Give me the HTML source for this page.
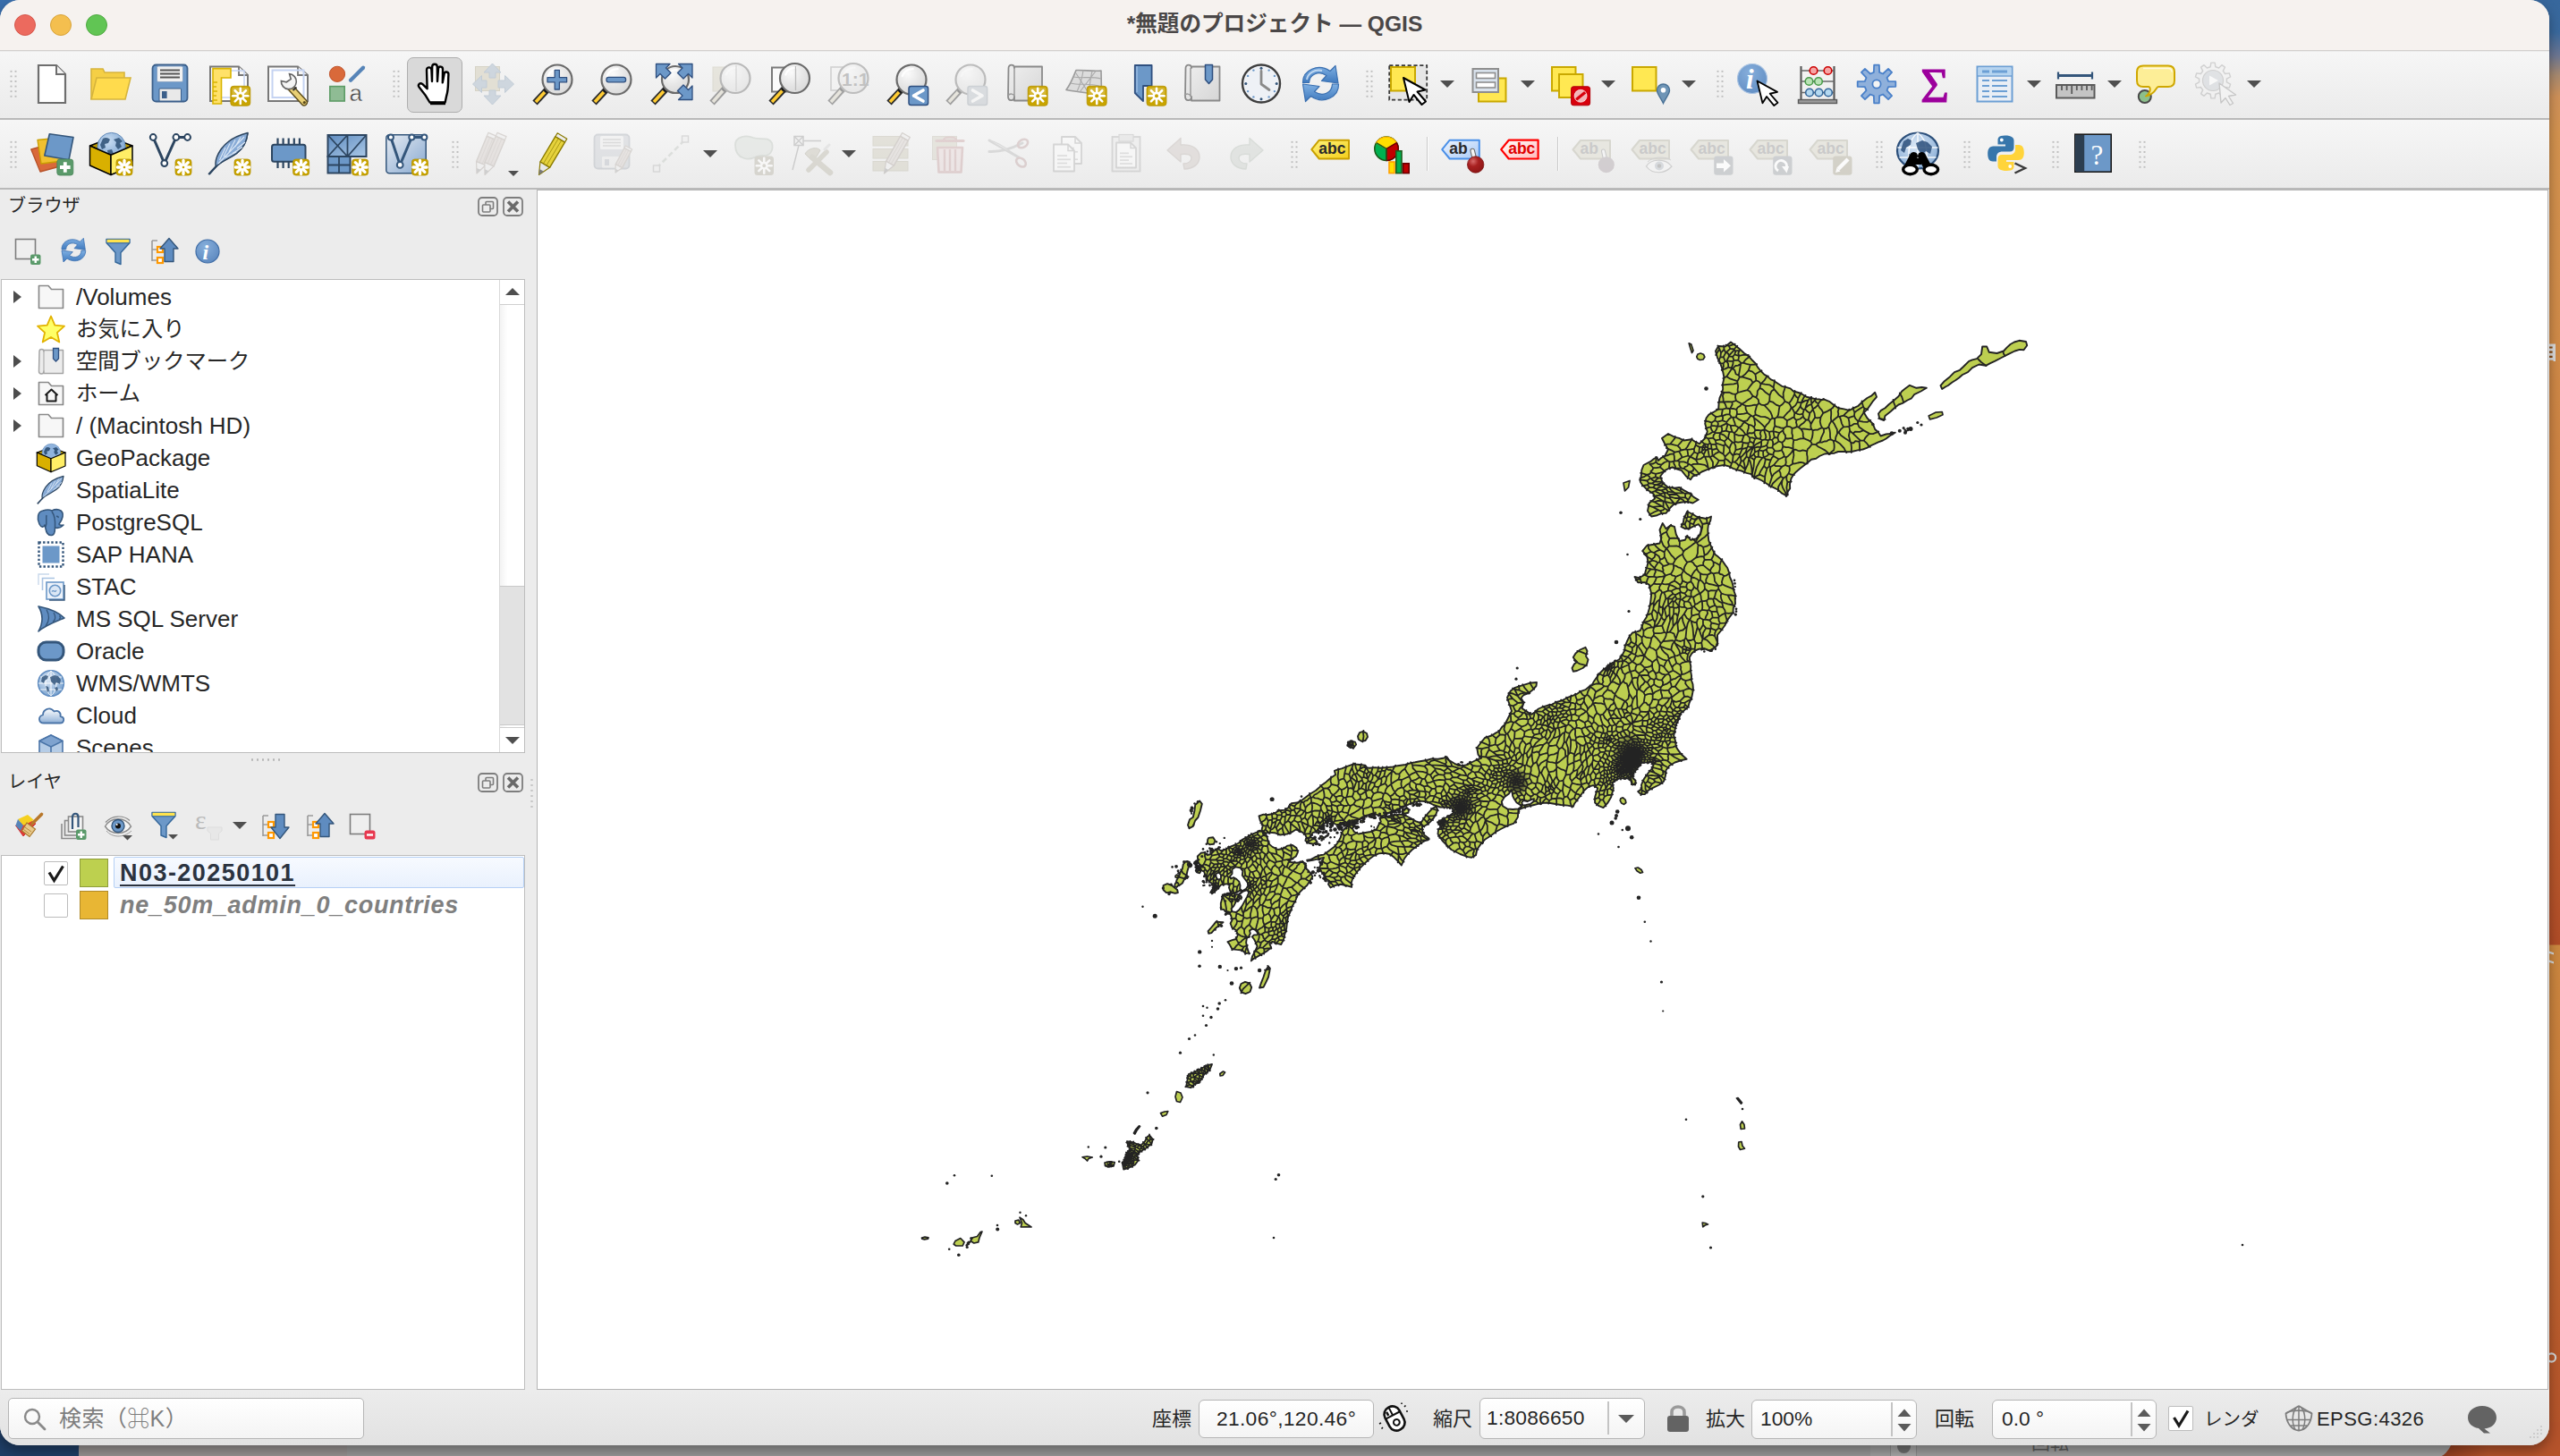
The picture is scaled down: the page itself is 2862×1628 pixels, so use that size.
<!DOCTYPE html>
<html lang="ja"><head><meta charset="utf-8"><title>*無題のプロジェクト — QGIS</title>
<style>
*{box-sizing:border-box}
html,body{margin:0;padding:0}
body{width:2862px;height:1628px;position:relative;overflow:hidden;background:#9a9a9a;
 font-family:"Liberation Sans","Noto Sans CJK JP",sans-serif;color:#262626}
.abs{position:absolute}
#deskR{position:absolute;left:2830px;top:0;width:32px;height:1628px;
 background:linear-gradient(180deg,#37679c 0px,#3a699d 36px,#6d7793 62px,#a88a70 84px,#cf9159 108px,#d4934f 150px,#d08a48 400px,#c8773a 700px,#c06531 850px,#b24e28 1040px,#b04c27 1056px,#cc8840 1057px,#c97e3c 1200px,#c06c33 1350px,#b85a2c 1500px,#b4522a 1628px)}
#deskB{position:absolute;left:0;top:1590px;width:2862px;height:38px;background:#a0a0a0;overflow:hidden}
#deskB .a{position:absolute;left:0;top:0;width:100px;height:38px;background:#1f3e66}
#deskB .b{position:absolute;left:88px;top:8px;width:300px;height:30px;background:#989392;border-top-left-radius:22px}
#deskB .c{position:absolute;left:2728px;top:0;width:134px;height:38px;background:linear-gradient(90deg,#8e3c1f,#b5532b 40%)}
#deskB .c2{position:absolute;left:2600px;top:0;width:142px;height:42px;background:#a0a0a0;border-bottom-right-radius:26px}
#deskB .d{position:absolute;left:388px;top:0;width:1703px;height:38px;background:#989898}
#deskB .e{position:absolute;left:2113px;top:0;width:30px;height:38px;background:#a9a9a9;border-left:1.5px solid #8c8c8c;border-right:1.5px solid #8c8c8c}
#deskB .f{position:absolute;left:2121px;top:20px;width:15px;height:15px;border-radius:50%;background:#6f6f6f}
#deskB .g{position:absolute;left:2271px;top:11px;font-size:21px;line-height:24px;color:#5c5c5c;white-space:nowrap}
#deskTL{position:absolute;left:0;top:0;width:30px;height:30px;background:#3a6fad}
#win{position:absolute;left:0;top:0;width:2850px;height:1616px;background:#ececec;border-radius:22px 22px 22px 22px;overflow:hidden;
 box-shadow:0 6px 14px rgba(0,0,0,.35)}
#title{position:absolute;left:0;top:0;width:2850px;height:57px;background:#f6f2ef;border-bottom:1px solid #d2cfcd}
#title .t{position:absolute;left:0;width:2850px;top:9px;text-align:center;font-size:24.6px;font-weight:bold;color:#4a4747;letter-spacing:0px;line-height:36px;white-space:nowrap}
.tl{position:absolute;top:16px;width:24px;height:24px;border-radius:50%}
.tb{position:absolute;left:0;width:2850px;background:linear-gradient(180deg,#f6f6f6,#ebebeb)}
#tb1{top:58px;height:74px}
#tb2{top:134px;height:76px}
.tbl{position:absolute;left:0;width:2850px;height:2px;background:#b9b9b9}
.ic{position:absolute;width:48px;height:48px;overflow:visible}
.hd{position:absolute;width:10px;height:34px;
 background-image:radial-gradient(circle,#bdbdbd 0.9px,transparent 1.3px);background-size:5px 5.6px;background-position:0 0}
.dd{position:absolute;width:0;height:0;border-left:8px solid transparent;border-right:8px solid transparent;border-top:8px solid #4f4f4f}
.dds{position:absolute;width:0;height:0;border-left:6px solid transparent;border-right:6px solid transparent;border-top:6px solid #4f4f4f}
.vsep{position:absolute;width:2px;height:38px;background:#c9c9c9;border-right:1px solid #fff}
/* panels */
.dtitle{position:absolute;left:9px;font-size:20.2px;line-height:30px;color:#262626;white-space:nowrap}
.dbtn{position:absolute;width:22px;height:21px;border:2px solid #7d7d7d;border-radius:4px}
.tree{position:absolute;left:1px;width:586px;background:#fff;border:1px solid #bdbdbd;overflow:hidden}
.row{position:absolute;left:0;height:36px;line-height:36px;font-size:26px;white-space:nowrap;color:#262626}
.arr{position:absolute;left:13px;width:0;height:0;border-top:7px solid transparent;border-bottom:7px solid transparent;border-left:9px solid #4d4d4d}
.sic{position:absolute;width:32px;height:32px;overflow:visible}
#canvas{position:absolute;left:600px;top:212px;width:2249px;height:1342px;background:#fff;border:1px solid #b4b4b4}
/* status */
.sl{position:absolute;top:1571px;font-size:22px;line-height:32px;white-space:nowrap;color:#262626}
.sbx{position:absolute;background:linear-gradient(180deg,#fff,#f4f4f4);border:1.5px solid #b6b6b6;border-radius:6px;font-size:22.8px;line-height:40px;white-space:nowrap;color:#262626}
.fs{font-family:"Liberation Sans",sans-serif}
.fr{font-family:"Liberation Serif",serif}
.jp{font-size:24.3px}

</style></head><body>
<div id="deskR"></div>
<div id="deskB"><div class="d"></div><div class="a"></div><div class="b"></div><div class="c"></div><div class="c2"></div><div class="e"></div><div class="f"></div><div class="g">回転</div></div>
<div id="deskTL"></div>
<svg class="abs deskart" style="left:2848px;top:380px;width:14px;height:28px" viewBox="0 0 14 28"><path d="M2,4.5H9V24H6.5V22.8H2Z" fill="#dcdcdc"/><path d="M2,7.5h3.6v2.1H2zM2,12.6h3.6v2.1H2zM2,17.7h3.6v2.3H2z" fill="#8a4a12"/></svg>
<svg class="abs deskart" style="left:2848px;top:1060px;width:14px;height:24px" viewBox="0 0 14 24"><path d="M2,3.5L7,5.2V7.6L2,5.9ZM2,13.5L7,15.2V17.6L2,15.9Z" fill="#d8d8d8"/></svg>
<svg class="abs deskart" style="left:2848px;top:1508px;width:14px;height:20px" viewBox="0 0 14 20"><circle cx="4.5" cy="10" r="4.6" fill="none" stroke="#d4d4d4" stroke-width="2.2"/></svg>
<div id="win">
<div id="title">
 <div class="tl" style="left:16px;background:#ec6a5e;border:1px solid #d5574b"></div>
 <div class="tl" style="left:56px;background:#f4bf4f;border:1px solid #d8a33a"></div>
 <div class="tl" style="left:96px;background:#61c554;border:1px solid #4fa941"></div>
 <div class="t">*無題のプロジェクト — QGIS</div>
</div>
<div class="tb" id="tb1"></div><div class="tbl" style="top:132px"></div>
<div class="tb" id="tb2"></div><div class="tbl" style="top:210px"></div>
<svg width="0" height="0" style="position:absolute"><defs><linearGradient id="gsc" x1="0" y1="0" x2="1" y2="1"><stop offset="0" stop-color="#efefef"/><stop offset="1" stop-color="#d6d6d6"/></linearGradient><radialGradient id="glens" cx=".38" cy=".3" r=".75"><stop offset="0" stop-color="#fbfbfb"/><stop offset=".55" stop-color="#e6e6e6"/><stop offset="1" stop-color="#d9d9d9"/></radialGradient></defs></svg>
<div class="hd" style="left:10px;top:77px;height:34px"></div>
<svg class="ic" style="left:34px;top:70px;width:48px;height:48px" viewBox="0 0 48 48"><path d="M9,3H29L39,13V45H9Z" fill="#fff" stroke="#6e6e6e" stroke-width="2.2"/><path d="M29,3V13H39" fill="#f2f2f2" stroke="#6e6e6e" stroke-width="2"/></svg>
<svg class="ic" style="left:100px;top:70px;width:48px;height:48px" viewBox="0 0 48 48"><path d="M2,41V7H15L17,11H39V17" fill="#f5cf45" stroke="#d6b43c" stroke-width="1.6"/><path d="M2,41L8,17H46L40,41Z" fill="#ffdb4d" stroke="#d6b43c" stroke-width="1.6"/></svg>
<svg class="ic" style="left:166px;top:70px;width:48px;height:48px" viewBox="0 0 48 48"><rect x="4.5" y="2.5" width="39" height="41" rx="4" fill="#6c98c8" stroke="#3b5f8a" stroke-width="1.8"/><rect x="9.5" y="4" width="29" height="17.5" rx="1.5" fill="#f1f1f1" stroke="#8aa5c5" stroke-width="1"/><path d="M13,8.5H35M13,12.5H35M13,16.5H35" stroke="#555" stroke-width="1.8"/><rect x="12" y="29" width="24.5" height="14" rx="1" fill="#e9e9e9" stroke="#3b5f8a" stroke-width="1"/><rect x="15" y="32" width="5.6" height="8" fill="#3b5f8a"/></svg>
<svg class="ic" style="left:232px;top:70px;width:48px;height:48px" viewBox="0 0 48 48"><path d="M3,4.5H35L45,14V43H3Z" fill="#fff" stroke="#777" stroke-width="2"/><path d="M35,4.5V14H45" fill="#f4f4f4" stroke="#777" stroke-width="1.8"/><rect x="8" y="9" width="33" height="30" fill="none" stroke="#c5d3f2" stroke-width="1.5"/><path d="M6,6.6H26V17H15.5V46H6Z" fill="#ffe169" stroke="#d9b400" stroke-width="1.6"/><path d="M6,22h5M6,27h4M6,32h5M6,37h4M6,42h5" stroke="#d9b400" stroke-width="1.4"/><g transform="translate(25.8,26.3)"><rect x="0" y="0" width="22" height="22" rx="3.2" fill="#c8a400" stroke="#b59200" stroke-width="0.8"/><rect x="1.6" y="1.6" width="18.8" height="8" rx="2" fill="#d8bc42" opacity=".8"/><path d="M14.00,11.00L19.60,11.00" stroke="#fff" stroke-width="2.6" stroke-linecap="round"/><path d="M13.12,13.12L17.08,17.08" stroke="#fff" stroke-width="2.6" stroke-linecap="round"/><path d="M11.00,14.00L11.00,19.60" stroke="#fff" stroke-width="2.6" stroke-linecap="round"/><path d="M8.88,13.12L4.92,17.08" stroke="#fff" stroke-width="2.6" stroke-linecap="round"/><path d="M8.00,11.00L2.40,11.00" stroke="#fff" stroke-width="2.6" stroke-linecap="round"/><path d="M8.88,8.88L4.92,4.92" stroke="#fff" stroke-width="2.6" stroke-linecap="round"/><path d="M11.00,8.00L11.00,2.40" stroke="#fff" stroke-width="2.6" stroke-linecap="round"/><path d="M13.12,8.88L17.08,4.92" stroke="#fff" stroke-width="2.6" stroke-linecap="round"/><circle cx="11.0" cy="11.0" r="4.6" fill="#fff"/><circle cx="11.0" cy="11.0" r="2" fill="#c8a400"/></g></svg>
<svg class="ic" style="left:298px;top:70px;width:48px;height:48px" viewBox="0 0 48 48"><path d="M2,4.5H35L46,14V43H2Z" fill="#fff" stroke="#777" stroke-width="2"/><path d="M35,4.5V14H46" fill="#f4f4f4" stroke="#777" stroke-width="1.8"/><rect x="6.5" y="8.5" width="35" height="30.5" fill="none" stroke="#c5d3f2" stroke-width="2"/><path d="M26,27L42,44.5" stroke="#5a4a1a" stroke-width="8" stroke-linecap="round"/><path d="M26,27L42,44.5" stroke="#e9cf74" stroke-width="5.2" stroke-linecap="round"/><circle cx="42.3" cy="44.6" r="1.6" fill="#5a4a1a"/><path d="M29.5,31l4,-3.5" stroke="#333" stroke-width="2"/><path d="M16.5,21.5a8.5,8.5 0 1 0 8,-9l2.5,5.5l-4.5,4z" fill="#f4f4f4" stroke="#666" stroke-width="1.6" transform="rotate(8 24 20)"/></svg>
<svg class="ic" style="left:364px;top:70px;width:48px;height:48px" viewBox="0 0 48 48"><circle cx="13" cy="12.8" r="8.6" fill="#d9693a" stroke="#c0522a" stroke-width="1"/><path d="M28,19.7L42,5.7" stroke="#5684b8" stroke-width="4.2" stroke-linecap="round"/><rect x="4.8" y="26.6" width="16.4" height="16.4" fill="#8fbc94" stroke="#5d9c66" stroke-width="1.6"/><text x="26.5" y="43" class="fs" font-size="26" fill="#474747" stroke="#fff" stroke-width="0.4">a</text></svg>
<div class="hd" style="left:438px;top:77px;height:34px"></div>
<div class="abs" style="left:455px;top:64px;width:62px;height:62px;background:#d9d9d9;border:1.5px solid #aeaeae;border-radius:7px"></div>
<svg class="ic" style="left:462px;top:70px;width:48px;height:48px" viewBox="0 0 48 48"><path d="M18.5,44.5C15,38 10,31.5 6.6,27.5C4.6,24.8 7.5,21.8 10.4,24.2L15.6,29.2L15,8.2C15,4.4 20.2,4.4 20.4,8.2L21,21L21.2,4.6C21.3,0.8 26.6,0.8 26.8,4.6L27,21L28,7C28.3,3.6 33,3.8 33,7.4L32.8,22.4L34.6,12.6C35.2,9.4 39.6,10 39.4,13.4C38.8,22 39.6,30 37.2,37L35.6,44.5Z" fill="#fff" stroke="#000" stroke-width="2.4" stroke-linejoin="round"/><path d="M19,45.5H36" stroke="#000" stroke-width="3.4"/></svg>
<svg class="ic" style="left:528px;top:70px;width:48px;height:48px" viewBox="0 0 48 48"><rect x="3.5" y="4.5" width="27" height="27" fill="#e2dfd4" stroke="#d6d3c6" stroke-width="1"/><g fill="#ced6de" stroke="#c2ccd6" stroke-width="1"><path d="M22.5,1L32,11H26V17H19V11H13Z"/><path d="M22.5,47L32,37H26V31H19V37H13Z"/><path d="M0.5,24L10.5,14.5V20H16V28H10.5V33.5Z"/><path d="M46.5,24L36.5,14.5V20H29V28H36.5V33.5Z"/></g></svg>
<svg class="ic" style="left:594px;top:70px;width:48px;height:48px" viewBox="0 0 48 48"><path d="M18.5,29.5L4,45" stroke="#2a2a2a" stroke-width="7.2" stroke-linecap="butt"/><path d="M15.0,33.0L5,44" stroke="#ffcc33" stroke-width="3.6"/><circle cx="17.8" cy="30.2" r="3.3" fill="#111"/><circle cx="29" cy="19" r="16.5" fill="url(#glens)" stroke="#6b6b6b" stroke-width="2.2"/><path d="M18.8,14.9A11.9,11.9 0 0 1 30.6,7.1" fill="none" stroke="#fff" stroke-width="2.4" stroke-linecap="round" opacity=".9"/><path d="M18,16.6H26.2V8.4H31.4V16.6H39.6V21.8H31.4V30H26.2V21.8H18Z" fill="#6c98c8" stroke="#2f4f7f" stroke-width="1.3" stroke-linejoin="round"/></svg>
<svg class="ic" style="left:660px;top:70px;width:48px;height:48px" viewBox="0 0 48 48"><path d="M18.5,29.5L4,45" stroke="#2a2a2a" stroke-width="7.2" stroke-linecap="butt"/><path d="M15.0,33.0L5,44" stroke="#ffcc33" stroke-width="3.6"/><circle cx="17.8" cy="30.2" r="3.3" fill="#111"/><circle cx="29" cy="19" r="16.5" fill="url(#glens)" stroke="#6b6b6b" stroke-width="2.2"/><path d="M18.8,14.9A11.9,11.9 0 0 1 30.6,7.1" fill="none" stroke="#fff" stroke-width="2.4" stroke-linecap="round" opacity=".9"/><rect x="18" y="16.4" width="21.6" height="5.4" rx="2.4" fill="#6c98c8" stroke="#2f4f7f" stroke-width="1.3"/></svg>
<svg class="ic" style="left:726px;top:70px;width:48px;height:48px" viewBox="0 0 48 48"><path d="M19.5,28.5L4,45" stroke="#2a2a2a" stroke-width="7.2" stroke-linecap="butt"/><path d="M16.0,32.0L5,44" stroke="#ffcc33" stroke-width="3.6"/><circle cx="18.8" cy="29.2" r="3.3" fill="#111"/><circle cx="29" cy="19" r="15" fill="url(#glens)" stroke="#6b6b6b" stroke-width="2.2"/><path d="M19.7,15.2A10.8,10.8 0 0 1 30.5,8.2" fill="none" stroke="#fff" stroke-width="2.4" stroke-linecap="round" opacity=".9"/><path d="M7.5,1.5H23L18.5,6L24,11.5L17.5,18L12,12.5L7.5,17Z" fill="#6c98c8" stroke="#2f4f7f" stroke-width="1.3" stroke-linejoin="round"/><g transform="translate(55.5,0) scale(-1,1)"><path d="M7.5,1.5H23L18.5,6L24,11.5L17.5,18L12,12.5L7.5,17Z" fill="#6c98c8" stroke="#2f4f7f" stroke-width="1.3" stroke-linejoin="round"/></g><g transform="translate(55.5,43) scale(-1,-1)"><path d="M7.5,1.5H23L18.5,6L24,11.5L17.5,18L12,12.5L7.5,17Z" fill="#6c98c8" stroke="#2f4f7f" stroke-width="1.3" stroke-linejoin="round"/></g></svg>
<svg class="ic" style="left:792px;top:70px;width:48px;height:48px" viewBox="0 0 48 48"><g opacity="0.42"><rect x="5" y="5" width="15" height="27" fill="#d6d2c0" stroke="#c0bca8"/><path d="M19.5,28.0L4,45" stroke="#2a2a2a" stroke-width="7.2" stroke-linecap="butt"/><path d="M16.0,31.5L5,44" stroke="#d9d4c0" stroke-width="3.6"/><circle cx="18.8" cy="28.7" r="3.3" fill="#111"/><circle cx="30" cy="17.5" r="16.5" fill="url(#glens)" stroke="#6b6b6b" stroke-width="2.2"/><path d="M19.8,13.4A11.9,11.9 0 0 1 31.6,5.6" fill="none" stroke="#fff" stroke-width="2.4" stroke-linecap="round" opacity=".9"/><path d="M31,3V32" stroke="#aaa" stroke-width="1.2"/></g></svg>
<svg class="ic" style="left:858px;top:70px;width:48px;height:48px" viewBox="0 0 48 48"><rect x="5" y="5.5" width="27" height="27" fill="#fbfbfb" stroke="#7a7a7a" stroke-width="2"/><path d="M20.0,28.0L4,45" stroke="#2a2a2a" stroke-width="7.2" stroke-linecap="butt"/><path d="M16.5,31.5L5,44" stroke="#ffcc33" stroke-width="3.6"/><circle cx="19.3" cy="28.7" r="3.3" fill="#111"/><circle cx="30.5" cy="17.5" r="16.5" fill="url(#glens)" stroke="#6b6b6b" stroke-width="2.2"/><path d="M20.3,13.4A11.9,11.9 0 0 1 32.1,5.6" fill="none" stroke="#fff" stroke-width="2.4" stroke-linecap="round" opacity=".9"/><path d="M31.5,4V31" stroke="#bbb" stroke-width="1.3"/></svg>
<svg class="ic" style="left:924px;top:70px;width:48px;height:48px" viewBox="0 0 48 48"><g opacity="0.38"><rect x="5" y="5" width="24" height="26" fill="#f4f4f4" stroke="#999" stroke-width="1.6"/><path d="M19.5,28.0L4,45" stroke="#2a2a2a" stroke-width="7.2" stroke-linecap="butt"/><path d="M16.0,31.5L5,44" stroke="#d9d4c0" stroke-width="3.6"/><circle cx="18.8" cy="28.7" r="3.3" fill="#111"/><circle cx="30" cy="17.5" r="16.5" fill="url(#glens)" stroke="#6b6b6b" stroke-width="2.2"/><path d="M19.8,13.4A11.9,11.9 0 0 1 31.6,5.6" fill="none" stroke="#fff" stroke-width="2.4" stroke-linecap="round" opacity=".9"/><text x="17" y="26" class="fs" font-weight="bold" font-size="21" fill="#777">1:1</text></g></svg>
<svg class="ic" style="left:990px;top:70px;width:48px;height:48px" viewBox="0 0 48 48"><path d="M18.5,29.5L4,45" stroke="#2a2a2a" stroke-width="7.2" stroke-linecap="butt"/><path d="M15.0,33.0L5,44" stroke="#ffcc33" stroke-width="3.6"/><circle cx="17.8" cy="30.2" r="3.3" fill="#111"/><circle cx="29" cy="19" r="16.5" fill="url(#glens)" stroke="#6b6b6b" stroke-width="2.2"/><path d="M18.8,14.9A11.9,11.9 0 0 1 30.6,7.1" fill="none" stroke="#fff" stroke-width="2.4" stroke-linecap="round" opacity=".9"/><rect x="26" y="26.5" width="21.6" height="21" rx="2.5" fill="#6c98c8" stroke="#2f4f7f" stroke-width="1.5"/><path d="M42,31L31.5,37L42,43" fill="none" stroke="#fff" stroke-width="3.6" stroke-linecap="round" stroke-linejoin="round"/></svg>
<svg class="ic" style="left:1056px;top:70px;width:48px;height:48px" viewBox="0 0 48 48"><g opacity="0.4"><path d="M18.5,29.5L4,45" stroke="#2a2a2a" stroke-width="7.2" stroke-linecap="butt"/><path d="M15.0,33.0L5,44" stroke="#d9d4c0" stroke-width="3.6"/><circle cx="17.8" cy="30.2" r="3.3" fill="#111"/><circle cx="29" cy="19" r="16.5" fill="url(#glens)" stroke="#6b6b6b" stroke-width="2.2"/><path d="M18.8,14.9A11.9,11.9 0 0 1 30.6,7.1" fill="none" stroke="#fff" stroke-width="2.4" stroke-linecap="round" opacity=".9"/><rect x="26" y="26.5" width="21.6" height="21" rx="2.5" fill="#b9c0c8" stroke="#9aa3ad" stroke-width="1.5"/><path d="M31.5,31L42,37L31.5,43" fill="none" stroke="#fff" stroke-width="3.6" stroke-linecap="round" stroke-linejoin="round"/></g></svg>
<svg class="ic" style="left:1123px;top:70px;width:48px;height:48px" viewBox="0 0 48 48"><path d="M4.5,6C4.5,1.5 11,1.5 11,6V4.5H42V42.5H11V38C11,43.5 4,43.5 4,38Z" fill="url(#gsc)" stroke="#8a8a8a" stroke-width="1.8" stroke-linejoin="round"/><path d="M11,6V38" stroke="#9a9a9a" stroke-width="1.5"/><path d="M11,38C11,34.5 5.5,34 4.2,37" fill="none" stroke="#9a9a9a" stroke-width="1.3"/><g transform="translate(26.2,26.3)"><rect x="0" y="0" width="22" height="22" rx="3.2" fill="#c8a400" stroke="#b59200" stroke-width="0.8"/><rect x="1.6" y="1.6" width="18.8" height="8" rx="2" fill="#d8bc42" opacity=".8"/><path d="M14.00,11.00L19.60,11.00" stroke="#fff" stroke-width="2.6" stroke-linecap="round"/><path d="M13.12,13.12L17.08,17.08" stroke="#fff" stroke-width="2.6" stroke-linecap="round"/><path d="M11.00,14.00L11.00,19.60" stroke="#fff" stroke-width="2.6" stroke-linecap="round"/><path d="M8.88,13.12L4.92,17.08" stroke="#fff" stroke-width="2.6" stroke-linecap="round"/><path d="M8.00,11.00L2.40,11.00" stroke="#fff" stroke-width="2.6" stroke-linecap="round"/><path d="M8.88,8.88L4.92,4.92" stroke="#fff" stroke-width="2.6" stroke-linecap="round"/><path d="M11.00,8.00L11.00,2.40" stroke="#fff" stroke-width="2.6" stroke-linecap="round"/><path d="M13.12,8.88L17.08,4.92" stroke="#fff" stroke-width="2.6" stroke-linecap="round"/><circle cx="11.0" cy="11.0" r="4.6" fill="#fff"/><circle cx="11.0" cy="11.0" r="2" fill="#c8a400"/></g></svg>
<svg class="ic" style="left:1189px;top:70px;width:48px;height:48px" viewBox="0 0 48 48"><path d="M14,8.5C22,8 33,10 42,9L42.5,35C33,36 19,33 3,30.5C8,24 11,16 14,8.5Z" fill="#dcdcdc" stroke="#9a9a9a" stroke-width="1.6" stroke-linejoin="round"/><path d="M11,16C20,18 30,15 42,18M8,23C18,26 30,22 42.3,27M22,8.5C21,17 18,26 15,32.5M32,9.5C30,18 29,27 28,34.5M14,12L28,34M36,9.5L18,33" fill="none" stroke="#a9a9a9" stroke-width="1.1"/><g transform="translate(26.2,26.3)"><rect x="0" y="0" width="22" height="22" rx="3.2" fill="#c8a400" stroke="#b59200" stroke-width="0.8"/><rect x="1.6" y="1.6" width="18.8" height="8" rx="2" fill="#d8bc42" opacity=".8"/><path d="M14.00,11.00L19.60,11.00" stroke="#fff" stroke-width="2.6" stroke-linecap="round"/><path d="M13.12,13.12L17.08,17.08" stroke="#fff" stroke-width="2.6" stroke-linecap="round"/><path d="M11.00,14.00L11.00,19.60" stroke="#fff" stroke-width="2.6" stroke-linecap="round"/><path d="M8.88,13.12L4.92,17.08" stroke="#fff" stroke-width="2.6" stroke-linecap="round"/><path d="M8.00,11.00L2.40,11.00" stroke="#fff" stroke-width="2.6" stroke-linecap="round"/><path d="M8.88,8.88L4.92,4.92" stroke="#fff" stroke-width="2.6" stroke-linecap="round"/><path d="M11.00,8.00L11.00,2.40" stroke="#fff" stroke-width="2.6" stroke-linecap="round"/><path d="M13.12,8.88L17.08,4.92" stroke="#fff" stroke-width="2.6" stroke-linecap="round"/><circle cx="11.0" cy="11.0" r="4.6" fill="#fff"/><circle cx="11.0" cy="11.0" r="2" fill="#c8a400"/></g></svg>
<svg class="ic" style="left:1256px;top:70px;width:48px;height:48px" viewBox="0 0 48 48"><path d="M12.8,3H31.6V26H22V43L12.8,34Z" fill="#6c98c8" stroke="#2f4f7f" stroke-width="1.8" stroke-linejoin="round"/><path d="M15,4V33" stroke="#8db2dc" stroke-width="2"/><g transform="translate(26,26.3)"><rect x="0" y="0" width="22" height="22" rx="3.2" fill="#c8a400" stroke="#b59200" stroke-width="0.8"/><rect x="1.6" y="1.6" width="18.8" height="8" rx="2" fill="#d8bc42" opacity=".8"/><path d="M14.00,11.00L19.60,11.00" stroke="#fff" stroke-width="2.6" stroke-linecap="round"/><path d="M13.12,13.12L17.08,17.08" stroke="#fff" stroke-width="2.6" stroke-linecap="round"/><path d="M11.00,14.00L11.00,19.60" stroke="#fff" stroke-width="2.6" stroke-linecap="round"/><path d="M8.88,13.12L4.92,17.08" stroke="#fff" stroke-width="2.6" stroke-linecap="round"/><path d="M8.00,11.00L2.40,11.00" stroke="#fff" stroke-width="2.6" stroke-linecap="round"/><path d="M8.88,8.88L4.92,4.92" stroke="#fff" stroke-width="2.6" stroke-linecap="round"/><path d="M11.00,8.00L11.00,2.40" stroke="#fff" stroke-width="2.6" stroke-linecap="round"/><path d="M13.12,8.88L17.08,4.92" stroke="#fff" stroke-width="2.6" stroke-linecap="round"/><circle cx="11.0" cy="11.0" r="4.6" fill="#fff"/><circle cx="11.0" cy="11.0" r="2" fill="#c8a400"/></g></svg>
<svg class="ic" style="left:1320px;top:70px;width:48px;height:48px" viewBox="0 0 48 48"><path d="M5.5,6C5.5,1.5 12,1.5 12,6V4.5H43.5V42.5H12V38C12,43.5 5,43.5 5,38Z" fill="url(#gsc)" stroke="#8a8a8a" stroke-width="1.8" stroke-linejoin="round"/><path d="M11,6V38" stroke="#9a9a9a" stroke-width="1.5"/><path d="M11,38C11,34.5 5.5,34 4.2,37" fill="none" stroke="#9a9a9a" stroke-width="1.3"/><path d="M27.5,2.5H35.5V19L31.5,23.5L27.5,19Z" fill="#6c98c8" stroke="#2f4f7f" stroke-width="1.5" stroke-linejoin="round"/></svg>
<svg class="ic" style="left:1386px;top:70px;width:48px;height:48px" viewBox="0 0 48 48"><circle cx="24" cy="23.5" r="21" fill="#eef1f6" stroke="#3e3e3e" stroke-width="2.4"/><circle cx="24.0" cy="6.3" r="1.5" fill="#34567b"/><circle cx="32.6" cy="8.6" r="1.2" fill="#6c98c8"/><circle cx="38.9" cy="14.9" r="1.2" fill="#6c98c8"/><circle cx="41.2" cy="23.5" r="1.5" fill="#34567b"/><circle cx="38.9" cy="32.1" r="1.2" fill="#6c98c8"/><circle cx="32.6" cy="38.4" r="1.2" fill="#6c98c8"/><circle cx="24.0" cy="40.7" r="1.5" fill="#34567b"/><circle cx="15.4" cy="38.4" r="1.2" fill="#6c98c8"/><circle cx="9.1" cy="32.1" r="1.2" fill="#6c98c8"/><circle cx="6.8" cy="23.5" r="1.5" fill="#34567b"/><circle cx="9.1" cy="14.9" r="1.2" fill="#6c98c8"/><circle cx="15.4" cy="8.6" r="1.2" fill="#6c98c8"/><path d="M24,9.5V24L33,30.5" fill="none" stroke="#8a8a8a" stroke-width="2.8" stroke-linecap="round" stroke-linejoin="round"/></svg>
<svg class="ic" style="left:1452px;top:70px;width:48px;height:48px" viewBox="0 0 48 48"><defs><linearGradient id="grf" x1="0" y1="0" x2="0" y2="1"><stop offset="0" stop-color="#7fb0e3"/><stop offset="1" stop-color="#3f79bd"/></linearGradient></defs><path d="M4.5,22.5C4,8 22,0.5 35,9.5L41,3.5L44,23L25.5,20.5L31,14.5C22,8.5 12,13 11.5,22.5Z" fill="url(#grf)" stroke="#3a6fb0" stroke-width="1.2" stroke-linejoin="round"/><path d="M44.5,24C45,39 27,47 13.5,37.5L7.5,43.5L4.5,24L23,26.5L17.5,32.5C27,38.5 37,34 37.5,24Z" fill="url(#grf)" stroke="#3a6fb0" stroke-width="1.2" stroke-linejoin="round"/><path d="M9,19C10,12 18,7 26,9" fill="none" stroke="#d5e6f7" stroke-width="2" opacity=".8"/></svg>
<div class="hd" style="left:1526px;top:77px;height:34px"></div>
<svg class="ic" style="left:1552px;top:70px;width:48px;height:48px" viewBox="0 0 48 48"><rect x="1.2" y="3.2" width="42" height="38.5" fill="#e6e6e6" stroke="#3a3a3a" stroke-width="1.8" stroke-dasharray="4.2,2.6"/><rect x="3" y="5" width="27" height="26.5" fill="#ffe852" stroke="#c9a800" stroke-width="2"/><g transform="translate(17,17) scale(1.0)"><path d="M0,0L24.5,13.5L15.5,15.5L25,26.5L20.5,30L11.5,19L6.5,27Z" fill="#fff" stroke="#000" stroke-width="2" stroke-linejoin="round"/></g></svg>
<div class="dd" style="left:1610px;top:90px"></div>
<svg class="ic" style="left:1641px;top:70px;width:48px;height:48px" viewBox="0 0 48 48"><rect x="12" y="17.5" width="30.5" height="26" fill="#ffe852" stroke="#c9a800" stroke-width="2"/><rect x="5.5" y="7" width="28.5" height="26" fill="#d9e2ec" stroke="#8e8e8e" stroke-width="2"/><rect x="9.5" y="11.5" width="21" height="6" fill="#fff" stroke="#8e8e8e" stroke-width="1.6"/><rect x="9.5" y="22" width="21" height="6" fill="#fff" stroke="#8e8e8e" stroke-width="1.6"/></svg>
<div class="dd" style="left:1700px;top:90px"></div>
<svg class="ic" style="left:1731px;top:70px;width:48px;height:48px" viewBox="0 0 48 48"><rect x="4" y="5" width="26.5" height="26.5" fill="#ffe852" stroke="#c9a800" stroke-width="2"/><rect x="12" y="13" width="26.5" height="26" fill="#ffe852" stroke="#c9a800" stroke-width="2"/><rect x="25.6" y="26.8" width="21" height="21" rx="2.5" fill="#d8000c" stroke="#b00009" stroke-width="1"/><circle cx="36.1" cy="37.3" r="7" fill="#f3b5b8"/><path d="M31,41.5L41.5,33" stroke="#d8000c" stroke-width="3.2"/><circle cx="36.1" cy="37.3" r="7" fill="none" stroke="#fff" stroke-width="1" opacity=".6"/></svg>
<div class="dd" style="left:1790px;top:90px"></div>
<svg class="ic" style="left:1822px;top:70px;width:48px;height:48px" viewBox="0 0 48 48"><rect x="3" y="5" width="26.5" height="26.5" fill="#ffe852" stroke="#c9a800" stroke-width="2"/><path d="M37.5,45.5C34,38 30.5,35 30.5,31A7,7 0 1 1 44.5,31C44.5,35 41,38 37.5,45.5Z" fill="#6f95b6" stroke="#4a7296" stroke-width="1.4"/><circle cx="37.5" cy="30.8" r="2.8" fill="#fff"/></svg>
<div class="dd" style="left:1880px;top:90px"></div>
<div class="hd" style="left:1918px;top:77px;height:34px"></div>
<svg class="ic" style="left:1941px;top:70px;width:48px;height:48px" viewBox="0 0 48 48"><defs><radialGradient id="gid" cx=".4" cy=".3" r=".8"><stop offset="0" stop-color="#86aedb"/><stop offset="1" stop-color="#5f8cc2"/></radialGradient></defs><circle cx="18" cy="18" r="16.5" fill="url(#gid)" stroke="#a9c3e2" stroke-width="1.2"/><text x="11" y="29" class="fr" font-style="italic" font-weight="bold" font-size="31" fill="#fff">i</text><g transform="translate(23.5,20.5) scale(0.92)"><path d="M0,0L24.5,13.5L15.5,15.5L25,26.5L20.5,30L11.5,19L6.5,27Z" fill="#fff" stroke="#000" stroke-width="2" stroke-linejoin="round"/></g></svg>
<svg class="ic" style="left:2007px;top:70px;width:48px;height:48px" viewBox="0 0 48 48"><path d="M6.5,4V42M43.5,4V42" stroke="#5a5a5a" stroke-width="2.2"/><path d="M6.5,9H43.5M6.5,21H43.5M6.5,33.5H43.5" stroke="#6a6a6a" stroke-width="1.6"/><rect x="3.5" y="41.5" width="43" height="4" fill="#9a9a9a" stroke="#5a5a5a" stroke-width="1.4"/><circle cx="20.5" cy="9" r="4.3" fill="#f6a6a6" stroke="#c00" stroke-width="1.6"/><circle cx="36.5" cy="9" r="4.3" fill="#f6a6a6" stroke="#c00" stroke-width="1.6"/><circle cx="15.5" cy="21" r="4.3" fill="#b9e3b5" stroke="#4a9a4a" stroke-width="1.6"/><circle cx="26" cy="21" r="4.3" fill="#b9e3b5" stroke="#4a9a4a" stroke-width="1.6"/><circle cx="16" cy="33.5" r="4.3" fill="#b5d9f0" stroke="#34679a" stroke-width="1.6"/><circle cx="26.5" cy="33.5" r="4.3" fill="#b5d9f0" stroke="#34679a" stroke-width="1.6"/><circle cx="37" cy="33.5" r="4.3" fill="#b5d9f0" stroke="#34679a" stroke-width="1.6"/></svg>
<svg class="ic" style="left:2073px;top:70px;width:48px;height:48px" viewBox="0 0 48 48"><path d="M21.85,10.87L22.14,2.69L27.86,2.69L28.15,10.87L32.05,12.49L38.04,6.91L42.09,10.96L36.51,16.95L38.13,20.85L46.31,21.14L46.31,26.86L38.13,27.15L36.51,31.05L42.09,37.04L38.04,41.09L32.05,35.51L28.15,37.13L27.86,45.31L22.14,45.31L21.85,37.13L17.95,35.51L11.96,41.09L7.91,37.04L13.49,31.05L11.87,27.15L3.69,26.86L3.69,21.14L11.87,20.85L13.49,16.95L7.91,10.96L11.96,6.91L17.95,12.49Z" fill="#8fb0db" stroke="#4a80c9" stroke-width="1.8" stroke-linejoin="round"/><circle cx="25" cy="24" r="4.6" fill="#f4f4f4" stroke="#4a80c9" stroke-width="1.8"/></svg>
<svg class="ic" style="left:2139px;top:70px;width:48px;height:48px" viewBox="0 0 48 48"><text x="8" y="43.5" class="fr" font-size="55" fill="#9c009c" stroke="#9c009c" stroke-width="1.1" textLength="32" lengthAdjust="spacingAndGlyphs">Σ</text></svg>
<svg class="ic" style="left:2205px;top:70px;width:48px;height:48px" viewBox="0 0 48 48"><rect x="5.5" y="4.5" width="39" height="39" fill="#e9eef5" stroke="#6c9fd4" stroke-width="2"/><rect x="6.5" y="5.5" width="37" height="9" fill="#b5d4f0"/><path d="M11,10h8M22,10h17" stroke="#6c9fd4" stroke-width="3.2"/><path d="M5.5,15H44.5" stroke="#6c9fd4" stroke-width="1.6"/><path d="M11,20h8M22,20h17" stroke="#6c9fd4" stroke-width="2"/><path d="M11,26h8M22,26h17" stroke="#6c9fd4" stroke-width="2"/><path d="M11,32h8M22,32h17" stroke="#6c9fd4" stroke-width="2"/><path d="M11,38h8M22,38h17" stroke="#6c9fd4" stroke-width="2"/></svg>
<div class="dd" style="left:2266px;top:90px"></div>
<svg class="ic" style="left:2296px;top:70px;width:48px;height:48px" viewBox="0 0 48 48"><rect x="3" y="25" width="42.5" height="14.5" fill="#c4c4c4" stroke="#5a5a5a" stroke-width="2"/><path d="M9,25v6" stroke="#5a5a5a" stroke-width="1.8"/><path d="M14.6,25v6" stroke="#5a5a5a" stroke-width="1.8"/><path d="M20.2,25v10" stroke="#5a5a5a" stroke-width="1.8"/><path d="M25.8,25v6" stroke="#5a5a5a" stroke-width="1.8"/><path d="M31.4,25v6" stroke="#5a5a5a" stroke-width="1.8"/><path d="M37,25v6" stroke="#5a5a5a" stroke-width="1.8"/><path d="M42.6,25v6" stroke="#5a5a5a" stroke-width="1.8"/><path d="M5,14.5H43" stroke="#34567b" stroke-width="3"/><path d="M5,10.5V18.5M43,10.5V18.5" stroke="#34567b" stroke-width="2.2"/></svg>
<div class="dd" style="left:2356px;top:90px"></div>
<svg class="ic" style="left:2386px;top:70px;width:48px;height:48px" viewBox="0 0 48 48"><circle cx="11.8" cy="38" r="7" fill="#8cbf8c" stroke="#4a4a4a" stroke-width="2"/><path d="M10,3.5H38Q45,3.5 45,10.5V20Q45,27 38,27H27C24,27 25,35 13,37.5C19,34 18.5,27 16,27H10Q3,27 3,20V10.5Q3,3.5 10,3.5Z" fill="#fdee97" stroke="#cfa700" stroke-width="2" stroke-linejoin="round"/><path d="M10,6.5H38Q42,6.5 42,10.5" fill="none" stroke="#fff" stroke-width="1.5" opacity=".7"/></svg>
<svg class="ic" style="left:2452px;top:70px;width:48px;height:48px" viewBox="0 0 48 48"><g opacity="0.5"><path d="M19.10,4.77L19.87,0.11L24.13,0.11L24.90,4.77L28.60,5.98L31.96,2.66L35.41,5.17L33.30,9.39L35.58,12.53L40.25,11.83L41.57,15.88L37.38,18.06L37.38,21.94L41.57,24.12L40.25,28.17L35.58,27.47L33.30,30.61L35.41,34.83L31.96,37.34L28.60,34.02L24.90,35.23L24.13,39.89L19.87,39.89L19.10,35.23L15.40,34.02L12.04,37.34L8.59,34.83L10.70,30.61L8.42,27.47L3.75,28.17L2.43,24.12L6.62,21.94L6.62,18.06L2.43,15.88L3.75,11.83L8.42,12.53L10.70,9.39L8.59,5.17L12.04,2.66L15.40,5.98Z" fill="#f2f2f2" stroke="#b0b0b0" stroke-width="1.4" stroke-linejoin="round"/><circle cx="22" cy="20" r="11.5" fill="#cfd3d8" stroke="#b0b0b0" stroke-width="1.2"/><path d="M18,14.5L28,20L18,25.5Z" fill="#fff"/><path d="M29,23L47.5,36L39.5,37.5L44.5,45.5L41,47.5L36,39.5L31,45Z" fill="#f6f6f6" stroke="#a0a0a0" stroke-width="1.4" stroke-linejoin="round"/></g></svg>
<div class="dd" style="left:2512px;top:90px"></div>
<div class="hd" style="left:10px;top:156px;height:34px"></div>
<svg class="ic" style="left:34px;top:148px;width:48px;height:48px" viewBox="0 0 48 48"><path d="M0.8,19L26,12L33,38L11,44Z" fill="#d9693a" stroke="#b8532a" stroke-width="1.4" stroke-linejoin="round"/><path d="M8,8.5L33,6L36,32L12,35Z" fill="#f0c030" stroke="#c9a000" stroke-width="1.4" stroke-linejoin="round"/><path d="M21.3,1.8L48,5.5L43,30.8L15.8,26Z" fill="#6c98c8" stroke="#34567b" stroke-width="1.6" stroke-linejoin="round"/><rect x="29.8" y="30" width="18" height="18" rx="3" fill="#5a9a6a" stroke="#4a8559" stroke-width="0.8"/><path d="M38.8,33.2V44.8M33,39H44.6" stroke="#fff" stroke-width="3.8"/></svg>
<svg class="ic" style="left:100px;top:148px;width:48px;height:48px" viewBox="0 0 48 48"><defs><radialGradient id="ggl" cx=".4" cy=".3" r=".8"><stop offset="0" stop-color="#c8dcf2"/><stop offset="1" stop-color="#6f9bcb"/></radialGradient></defs><path d="M0.5,15L24,6L48,15L24,25.2Z" fill="#b89600" stroke="#000" stroke-width="1.4" stroke-linejoin="round"/><circle cx="24.6" cy="16" r="15.6" fill="url(#ggl)" stroke="#5f88b8" stroke-width="1"/><path d="M15,7c3,-2 6,-1 8,1l-2,4l-4,1l1,4l-4,2l-2,-5zM27,8l6,-2l4,4l-3,2l2,4l-4,3l-3,-4l1,-4zM20,20l5,-1l2,5l-3,4l-3,-3z" fill="#34567b" opacity=".9"/><path d="M0.5,15L24,25.2V47.5L0.5,37Z" fill="#d9b000" stroke="#000" stroke-width="1.5" stroke-linejoin="round"/><path d="M24,25.2L48,15V37.5L24,47.5Z" fill="#ffee66" stroke="#000" stroke-width="1.5" stroke-linejoin="round"/><g transform="translate(30,30)"><rect x="0" y="0" width="18" height="18" rx="3.2" fill="#c8a400" stroke="#b59200" stroke-width="0.8"/><path d="M11.20,9.00L16.60,9.00" stroke="#fff" stroke-width="3.3" stroke-linecap="round"/><path d="M10.56,10.56L14.37,14.37" stroke="#fff" stroke-width="3.3" stroke-linecap="round"/><path d="M9.00,11.20L9.00,16.60" stroke="#fff" stroke-width="3.3" stroke-linecap="round"/><path d="M7.44,10.56L3.63,14.37" stroke="#fff" stroke-width="3.3" stroke-linecap="round"/><path d="M6.80,9.00L1.40,9.00" stroke="#fff" stroke-width="3.3" stroke-linecap="round"/><path d="M7.44,7.44L3.63,3.63" stroke="#fff" stroke-width="3.3" stroke-linecap="round"/><path d="M9.00,6.80L9.00,1.40" stroke="#fff" stroke-width="3.3" stroke-linecap="round"/><path d="M10.56,7.44L14.37,3.63" stroke="#fff" stroke-width="3.3" stroke-linecap="round"/><circle cx="9.0" cy="9.0" r="1.3" fill="#c8a400"/></g></svg>
<svg class="ic" style="left:166px;top:148px;width:48px;height:48px" viewBox="0 0 48 48"><path d="M5.2,5.5L17.8,34.6L30.9,5.5H43.6" fill="none" stroke="#2c4560" stroke-width="3" stroke-linejoin="round"/><circle cx="5.2" cy="5.5" r="3.4" fill="#fff" stroke="#2c4560" stroke-width="2"/><circle cx="17.8" cy="34.6" r="3.4" fill="#fff" stroke="#2c4560" stroke-width="2"/><circle cx="30.9" cy="5.5" r="3.4" fill="#fff" stroke="#2c4560" stroke-width="2"/><circle cx="43.6" cy="5.5" r="3.4" fill="#fff" stroke="#2c4560" stroke-width="2"/><g transform="translate(30,30)"><rect x="0" y="0" width="18" height="18" rx="3.2" fill="#c8a400" stroke="#b59200" stroke-width="0.8"/><path d="M11.20,9.00L16.60,9.00" stroke="#fff" stroke-width="3.3" stroke-linecap="round"/><path d="M10.56,10.56L14.37,14.37" stroke="#fff" stroke-width="3.3" stroke-linecap="round"/><path d="M9.00,11.20L9.00,16.60" stroke="#fff" stroke-width="3.3" stroke-linecap="round"/><path d="M7.44,10.56L3.63,14.37" stroke="#fff" stroke-width="3.3" stroke-linecap="round"/><path d="M6.80,9.00L1.40,9.00" stroke="#fff" stroke-width="3.3" stroke-linecap="round"/><path d="M7.44,7.44L3.63,3.63" stroke="#fff" stroke-width="3.3" stroke-linecap="round"/><path d="M9.00,6.80L9.00,1.40" stroke="#fff" stroke-width="3.3" stroke-linecap="round"/><path d="M10.56,7.44L14.37,3.63" stroke="#fff" stroke-width="3.3" stroke-linecap="round"/><circle cx="9.0" cy="9.0" r="1.3" fill="#c8a400"/></g></svg>
<svg class="ic" style="left:232px;top:148px;width:48px;height:48px" viewBox="0 0 48 48"><path d="M45,0.5C44,9 41,17 33,23C26,28.5 15,32 10,38L2,47" fill="none" stroke="#2c4560" stroke-width="1.6"/><path d="M45,0.5C35,3 22,9 15,19C10,26.5 8,33 9.5,38.5C15,32 26,28.5 33,23C41,17 44,9 45,0.5Z" fill="#88abd6" stroke="#2c4560" stroke-width="1.5" stroke-linejoin="round"/><path d="M41,5L12,35M37,5.5L31,16M31,8.5L24,22M25,12.5L18,27M20,17L13.5,31M42,11L33,18M39,16.5L28,23.5M32,22L20,28" fill="none" stroke="#dbe7f5" stroke-width="1.1"/><path d="M10,37.5L1.2,47" stroke="#2c4560" stroke-width="2"/><g transform="translate(30,30)"><rect x="0" y="0" width="18" height="18" rx="3.2" fill="#c8a400" stroke="#b59200" stroke-width="0.8"/><path d="M11.20,9.00L16.60,9.00" stroke="#fff" stroke-width="3.3" stroke-linecap="round"/><path d="M10.56,10.56L14.37,14.37" stroke="#fff" stroke-width="3.3" stroke-linecap="round"/><path d="M9.00,11.20L9.00,16.60" stroke="#fff" stroke-width="3.3" stroke-linecap="round"/><path d="M7.44,10.56L3.63,14.37" stroke="#fff" stroke-width="3.3" stroke-linecap="round"/><path d="M6.80,9.00L1.40,9.00" stroke="#fff" stroke-width="3.3" stroke-linecap="round"/><path d="M7.44,7.44L3.63,3.63" stroke="#fff" stroke-width="3.3" stroke-linecap="round"/><path d="M9.00,6.80L9.00,1.40" stroke="#fff" stroke-width="3.3" stroke-linecap="round"/><path d="M10.56,7.44L14.37,3.63" stroke="#fff" stroke-width="3.3" stroke-linecap="round"/><circle cx="9.0" cy="9.0" r="1.3" fill="#c8a400"/></g></svg>
<svg class="ic" style="left:299px;top:148px;width:48px;height:48px" viewBox="0 0 48 48"><path d="M11.5,6.5V14M11.5,32.5V40" stroke="#2c4560" stroke-width="2.2"/><path d="M17.6,6.5V14M17.6,32.5V40" stroke="#2c4560" stroke-width="2.2"/><path d="M23.7,6.5V14M23.7,32.5V40" stroke="#2c4560" stroke-width="2.2"/><path d="M29.8,6.5V14M29.8,32.5V40" stroke="#2c4560" stroke-width="2.2"/><path d="M35.9,6.5V14M35.9,32.5V40" stroke="#2c4560" stroke-width="2.2"/><rect x="5" y="13.8" width="37.5" height="19" rx="2.5" fill="#6c98c8" stroke="#2c4560" stroke-width="2"/><g transform="translate(28.6,30)"><rect x="0" y="0" width="18" height="18" rx="3.2" fill="#c8a400" stroke="#b59200" stroke-width="0.8"/><path d="M11.20,9.00L16.60,9.00" stroke="#fff" stroke-width="3.3" stroke-linecap="round"/><path d="M10.56,10.56L14.37,14.37" stroke="#fff" stroke-width="3.3" stroke-linecap="round"/><path d="M9.00,11.20L9.00,16.60" stroke="#fff" stroke-width="3.3" stroke-linecap="round"/><path d="M7.44,10.56L3.63,14.37" stroke="#fff" stroke-width="3.3" stroke-linecap="round"/><path d="M6.80,9.00L1.40,9.00" stroke="#fff" stroke-width="3.3" stroke-linecap="round"/><path d="M7.44,7.44L3.63,3.63" stroke="#fff" stroke-width="3.3" stroke-linecap="round"/><path d="M9.00,6.80L9.00,1.40" stroke="#fff" stroke-width="3.3" stroke-linecap="round"/><path d="M10.56,7.44L14.37,3.63" stroke="#fff" stroke-width="3.3" stroke-linecap="round"/><circle cx="9.0" cy="9.0" r="1.3" fill="#c8a400"/></g></svg>
<svg class="ic" style="left:365px;top:148px;width:48px;height:48px" viewBox="0 0 48 48"><defs><linearGradient id="gms" x1="0" y1="0" x2="1" y2="1"><stop offset="0" stop-color="#5f8cc0"/><stop offset="1" stop-color="#a9c7e6"/></linearGradient></defs><rect x="1.5" y="3" width="43" height="24" fill="url(#gms)" stroke="#2c4560" stroke-width="2"/><rect x="1.5" y="27" width="25" height="18.5" fill="#6c98c8" stroke="#2c4560" stroke-width="2"/><path d="M1.5,3L23.5,27M23.5,3L1.5,27M23.5,3V27M44.5,3L23.5,27M1.5,36.5H26.5M14,27V45.5" fill="none" stroke="#2c4560" stroke-width="1.8"/><g transform="translate(28.6,30)"><rect x="0" y="0" width="18" height="18" rx="3.2" fill="#c8a400" stroke="#b59200" stroke-width="0.8"/><path d="M11.20,9.00L16.60,9.00" stroke="#fff" stroke-width="3.3" stroke-linecap="round"/><path d="M10.56,10.56L14.37,14.37" stroke="#fff" stroke-width="3.3" stroke-linecap="round"/><path d="M9.00,11.20L9.00,16.60" stroke="#fff" stroke-width="3.3" stroke-linecap="round"/><path d="M7.44,10.56L3.63,14.37" stroke="#fff" stroke-width="3.3" stroke-linecap="round"/><path d="M6.80,9.00L1.40,9.00" stroke="#fff" stroke-width="3.3" stroke-linecap="round"/><path d="M7.44,7.44L3.63,3.63" stroke="#fff" stroke-width="3.3" stroke-linecap="round"/><path d="M9.00,6.80L9.00,1.40" stroke="#fff" stroke-width="3.3" stroke-linecap="round"/><path d="M10.56,7.44L14.37,3.63" stroke="#fff" stroke-width="3.3" stroke-linecap="round"/><circle cx="9.0" cy="9.0" r="1.3" fill="#c8a400"/></g></svg>
<svg class="ic" style="left:431px;top:148px;width:48px;height:48px" viewBox="0 0 48 48"><defs><linearGradient id="gvl" x1="0" y1="0" x2="1" y2="1"><stop offset="0" stop-color="#e6ebf2"/><stop offset="1" stop-color="#86a8d0"/></linearGradient></defs><rect x="0.8" y="2.8" width="44.4" height="43" rx="3.5" fill="url(#gvl)" stroke="#34567b" stroke-width="1.5"/><path d="M5.9,5.5L16.2,36.4L29.3,5.5H43.4" fill="none" stroke="#34567b" stroke-width="3" stroke-linejoin="round"/><circle cx="5.9" cy="5.5" r="3" fill="#fff" stroke="#34567b" stroke-width="2"/><circle cx="16.2" cy="36.4" r="3.4" fill="#fff" stroke="#34567b" stroke-width="2"/><circle cx="29.3" cy="5.5" r="3" fill="#fff" stroke="#34567b" stroke-width="2"/><circle cx="43.4" cy="5.5" r="3" fill="#fff" stroke="#34567b" stroke-width="2"/><g transform="translate(29.5,30)"><rect x="0" y="0" width="18" height="18" rx="3.2" fill="#c8a400" stroke="#b59200" stroke-width="0.8"/><path d="M11.20,9.00L16.60,9.00" stroke="#fff" stroke-width="3.3" stroke-linecap="round"/><path d="M10.56,10.56L14.37,14.37" stroke="#fff" stroke-width="3.3" stroke-linecap="round"/><path d="M9.00,11.20L9.00,16.60" stroke="#fff" stroke-width="3.3" stroke-linecap="round"/><path d="M7.44,10.56L3.63,14.37" stroke="#fff" stroke-width="3.3" stroke-linecap="round"/><path d="M6.80,9.00L1.40,9.00" stroke="#fff" stroke-width="3.3" stroke-linecap="round"/><path d="M7.44,7.44L3.63,3.63" stroke="#fff" stroke-width="3.3" stroke-linecap="round"/><path d="M9.00,6.80L9.00,1.40" stroke="#fff" stroke-width="3.3" stroke-linecap="round"/><path d="M10.56,7.44L14.37,3.63" stroke="#fff" stroke-width="3.3" stroke-linecap="round"/><circle cx="9.0" cy="9.0" r="1.3" fill="#c8a400"/></g></svg>
<div class="hd" style="left:504px;top:156px;height:34px"></div>
<svg class="ic" style="left:528px;top:148px;width:48px;height:48px" viewBox="0 0 48 48"><g opacity="0.45"><path d="M28.08,4.60L17.92,0.40L16.30,4.31L26.46,8.52Z" fill="#eee" stroke="#b8b0aa" stroke-width="1.2" stroke-linejoin="round"/><path d="M26.46,8.52L16.30,4.31L4.60,32.59L14.76,36.79Z" fill="#d8d0cc" stroke="#b8b0aa" stroke-width="1.4" stroke-linejoin="round"/><path d="M22.90,7.05L11.20,35.32M19.60,5.68L7.90,33.95" stroke="#b8b0aa" stroke-width="0.9" opacity=".7"/><path d="M14.76,36.79L4.60,32.59L5.00,46.00Z" fill="#f0f0f0" stroke="#b8b0aa" stroke-width="1.2" stroke-linejoin="round"/><path d="M9.39,41.86L4.82,39.96L5.00,46.00Z" fill="#aaa"/><path d="M38.07,4.64L27.93,0.36L26.22,4.41L36.36,8.69Z" fill="#eee" stroke="#b8b0aa" stroke-width="1.2" stroke-linejoin="round"/><path d="M36.36,8.69L26.22,4.41L13.87,33.66L24.01,37.94Z" fill="#d8d0cc" stroke="#b8b0aa" stroke-width="1.4" stroke-linejoin="round"/><path d="M32.81,7.19L20.46,36.44M29.52,5.80L17.17,35.05" stroke="#b8b0aa" stroke-width="0.9" opacity=".7"/><path d="M24.01,37.94L13.87,33.66L14.00,47.50Z" fill="#f0f0f0" stroke="#b8b0aa" stroke-width="1.2" stroke-linejoin="round"/><path d="M18.50,43.20L13.94,41.27L14.00,47.50Z" fill="#aaa"/></g></svg>
<div class="dds" style="left:568px;top:191px"></div>
<svg class="ic" style="left:594px;top:148px;width:48px;height:48px" viewBox="0 0 48 48"><path d="M39.82,7.18L29.18,0.82L26.84,4.73L37.48,11.10Z" fill="#ececec" stroke="#8a7a00" stroke-width="1.2" stroke-linejoin="round"/><path d="M37.48,11.10L26.84,4.73L9.94,33.01L20.58,39.37Z" fill="#e6d23c" stroke="#8a7a00" stroke-width="1.4" stroke-linejoin="round"/><path d="M33.76,8.87L16.86,37.14M30.30,6.80L13.40,35.08" stroke="#8a7a00" stroke-width="0.9" opacity=".7"/><path d="M20.58,39.37L9.94,33.01L8.50,47.50Z" fill="#e8e8e8" stroke="#8a7a00" stroke-width="1.2" stroke-linejoin="round"/><path d="M13.94,43.84L9.15,40.98L8.50,47.50Z" fill="#7a7a7a"/></svg>
<svg class="ic" style="left:660px;top:148px;width:48px;height:48px" viewBox="0 0 48 48"><g opacity="0.42"><rect x="4.5" y="2.5" width="39" height="38" rx="4" fill="#c9cdd3" stroke="#aab0b8" stroke-width="1.8"/><rect x="11" y="4" width="26" height="15" rx="1.5" fill="#f1f1f1"/><path d="M14,8H34M14,11.5H34M14,15H34" stroke="#bbb" stroke-width="1.5"/><rect x="13" y="27" width="22" height="12.5" rx="1" fill="#e9e9e9"/><rect x="16" y="30" width="5" height="7" fill="#b5bac2"/><path d="M46.70,18.98L39.30,15.02L37.95,17.54L45.35,21.50Z" fill="#eee" stroke="#b8b0aa" stroke-width="1.2" stroke-linejoin="round"/><path d="M45.35,21.50L37.95,17.54L28.20,35.74L35.60,39.70Z" fill="#d8d0cc" stroke="#b8b0aa" stroke-width="1.4" stroke-linejoin="round"/><path d="M42.76,20.11L33.01,38.31M40.35,18.83L30.60,37.03" stroke="#b8b0aa" stroke-width="0.9" opacity=".7"/><path d="M35.60,39.70L28.20,35.74L28.00,45.00Z" fill="#f0f0f0" stroke="#b8b0aa" stroke-width="1.2" stroke-linejoin="round"/><path d="M31.42,42.62L28.09,40.83L28.00,45.00Z" fill="#aaa"/></g></svg>
<svg class="ic" style="left:726px;top:148px;width:48px;height:48px" viewBox="0 0 48 48"><g opacity="0.5"><path d="M8,40L40,8" stroke="#c9cec9" stroke-width="2.6" stroke-dasharray="6,3.5"/><rect x="4.5" y="37" width="7" height="7" fill="#eee" stroke="#c0c0c0" stroke-width="1.4"/><rect x="36.5" y="4" width="7" height="7" fill="#eee" stroke="#c0c0c0" stroke-width="1.4"/></g></svg>
<div class="dd" style="left:786px;top:168px"></div>
<svg class="ic" style="left:817px;top:148px;width:48px;height:48px" viewBox="0 0 48 48"><g opacity="0.55"><path d="M5,14C5,4 18,3 25,6C33,9 42,4 46,12C48,20 44,27 36,26C28,25 24,32 15,29C8,27 5,21 5,14Z" fill="#dfe3df" stroke="#c9cfc9" stroke-width="1.8"/><rect x="26.5" y="26.5" width="21.5" height="21.5" rx="3.5" fill="#c4c1b6"/><path d="M40.25,37.25L45.65,37.25" stroke="#fff" stroke-width="2.6" stroke-linecap="round"/><path d="M39.37,39.37L43.19,43.19" stroke="#fff" stroke-width="2.6" stroke-linecap="round"/><path d="M37.25,40.25L37.25,45.65" stroke="#fff" stroke-width="2.6" stroke-linecap="round"/><path d="M35.13,39.37L31.31,43.19" stroke="#fff" stroke-width="2.6" stroke-linecap="round"/><path d="M34.25,37.25L28.85,37.25" stroke="#fff" stroke-width="2.6" stroke-linecap="round"/><path d="M35.13,35.13L31.31,31.31" stroke="#fff" stroke-width="2.6" stroke-linecap="round"/><path d="M37.25,34.25L37.25,28.85" stroke="#fff" stroke-width="2.6" stroke-linecap="round"/><path d="M39.37,35.13L43.19,31.31" stroke="#fff" stroke-width="2.6" stroke-linecap="round"/><circle cx="37.25" cy="37.25" r="4.4" fill="#fff"/><circle cx="37.25" cy="37.25" r="1.9" fill="#c4c1b6"/></g></svg>
<svg class="ic" style="left:884px;top:148px;width:48px;height:48px" viewBox="0 0 48 48"><g opacity="0.5"><rect x="4" y="4.5" width="10" height="10" fill="#eee" stroke="#aaa" stroke-width="1.5"/><path d="M4,4.5L14,14.5M14,4.5L4,14.5M14,9.5H34M9,14.5L2,42" stroke="#aaa" stroke-width="1.4" fill="none"/><path d="M16,24C20,17 30,16 33,20L29,27L22,30Z" fill="#ccc9bc" stroke="#b5b2a5" stroke-width="1"/><path d="M20,42L40,22" stroke="#c4c1b4" stroke-width="5.5" stroke-linecap="round"/><path d="M24,28L44,45" stroke="#c4c1b4" stroke-width="6.5" stroke-linecap="round"/><path d="M38,19L43,14" stroke="#d9d9d9" stroke-width="3" stroke-linecap="round"/></g></svg>
<div class="dd" style="left:941px;top:168px"></div>
<svg class="ic" style="left:971px;top:148px;width:48px;height:48px" viewBox="0 0 48 48"><g opacity="0.5"><rect x="5" y="4.5" width="39" height="10.5" fill="#d4d1c2" stroke="#c4c1b2"/><rect x="5" y="18.5" width="39" height="10.5" fill="#d4d1c2" stroke="#c4c1b2"/><rect x="5" y="32.5" width="39" height="10.5" fill="#d4d1c2" stroke="#c4c1b2"/><path d="M46.34,5.48L37.66,0.52L35.45,4.39L44.14,9.35Z" fill="#eee" stroke="#b8b0aa" stroke-width="1.2" stroke-linejoin="round"/><path d="M44.14,9.35L35.45,4.39L19.53,32.34L28.21,37.30Z" fill="#dcd6d2" stroke="#b8b0aa" stroke-width="1.4" stroke-linejoin="round"/><path d="M41.10,7.61L25.17,35.56M38.27,6.00L22.35,33.95" stroke="#b8b0aa" stroke-width="0.9" opacity=".7"/><path d="M28.21,37.30L19.53,32.34L17.50,46.00Z" fill="#f0f0f0" stroke="#b8b0aa" stroke-width="1.2" stroke-linejoin="round"/><path d="M22.32,42.08L18.41,39.86L17.50,46.00Z" fill="#aaa"/></g></svg>
<svg class="ic" style="left:1036px;top:148px;width:48px;height:48px" viewBox="0 0 48 48"><g opacity="0.42"><rect x="6.5" y="4.5" width="27" height="26" fill="#d4d1c2" stroke="#c4c1b2"/><path d="M11,9.5H41" stroke="#c9a3a3" stroke-width="3.2" stroke-linecap="round"/><path d="M19,8.5C19,4.5 33,4.5 33,8.5" fill="none" stroke="#c9a3a3" stroke-width="2"/><path d="M12,17H40L38.5,44.5H13.5Z" fill="#ead9d9" stroke="#c9a3a3" stroke-width="2.6" stroke-linejoin="round"/><path d="M20,19V43M26,19V43M32,19V43" stroke="#c9a3a3" stroke-width="2.4"/></g></svg>
<svg class="ic" style="left:1103px;top:148px;width:48px;height:48px" viewBox="0 0 48 48"><g opacity="0.45"><path d="M3,9L36,28M3,21.5C12,22 22,21 40,12" fill="none" stroke="#bdbdbd" stroke-width="3" stroke-linecap="round"/><path d="M3,9C10,10 20,16 30,24L36,28Z" fill="#e4e4e4" stroke="#bdbdbd" stroke-width="1.2"/><ellipse cx="40.5" cy="12.5" rx="6" ry="4.2" transform="rotate(-30 40.5 12.5)" fill="none" stroke="#c4a9a9" stroke-width="2.6"/><ellipse cx="38.5" cy="33.5" rx="6" ry="4.2" transform="rotate(40 38.5 33.5)" fill="none" stroke="#c4a9a9" stroke-width="2.6"/></g></svg>
<svg class="ic" style="left:1169px;top:148px;width:48px;height:48px" viewBox="0 0 48 48"><g opacity="0.62"><path d="M18,5H33L40,12V35H18Z" fill="#fafafa" stroke="#c4c4c4" stroke-width="1.8" stroke-linejoin="round"/><path d="M33,5V12H40" fill="none" stroke="#c4c4c4" stroke-width="1.5"/><path d="M22,17.6H32" stroke="#d2d2d2" stroke-width="1.7"/><path d="M22,21.8H36" stroke="#d2d2d2" stroke-width="1.7"/><path d="M22,26.0H32" stroke="#d2d2d2" stroke-width="1.7"/><path d="M22,30.2H36" stroke="#d2d2d2" stroke-width="1.7"/><path d="M9,13.5H25L32,20.5V43.5H9Z" fill="#fafafa" stroke="#c4c4c4" stroke-width="1.8" stroke-linejoin="round"/><path d="M25,13.5V20.5H32" fill="none" stroke="#c4c4c4" stroke-width="1.5"/><path d="M13,26.1H24" stroke="#d2d2d2" stroke-width="1.7"/><path d="M13,30.3H28" stroke="#d2d2d2" stroke-width="1.7"/><path d="M13,34.5H24" stroke="#d2d2d2" stroke-width="1.7"/><path d="M13,38.7H28" stroke="#d2d2d2" stroke-width="1.7"/></g></svg>
<svg class="ic" style="left:1235px;top:148px;width:48px;height:48px" viewBox="0 0 48 48"><g opacity="0.6"><rect x="8.5" y="5" width="31" height="38.5" fill="#ececec" stroke="#c4c4c4" stroke-width="1.8"/><rect x="16" y="2.5" width="16" height="7.5" fill="#e4e4e4" stroke="#c9c9c9" stroke-width="1.2"/><path d="M13,11.5H29L35,17.5V39.5H13Z" fill="#fafafa" stroke="#c4c4c4" stroke-width="1.8" stroke-linejoin="round"/><path d="M29,11.5V17.5H35" fill="none" stroke="#c4c4c4" stroke-width="1.5"/><path d="M17,23.3H27" stroke="#d2d2d2" stroke-width="1.7"/><path d="M17,27.2H31" stroke="#d2d2d2" stroke-width="1.7"/><path d="M17,31.1H27" stroke="#d2d2d2" stroke-width="1.7"/><path d="M17,35.0H31" stroke="#d2d2d2" stroke-width="1.7"/></g></svg>
<svg class="ic" style="left:1302px;top:148px;width:48px;height:48px" viewBox="0 0 48 48"><g opacity="0.6"><path d="M3,20L18,6.5V14C30,13 39,18 39,27.5C39,35 33,40.5 22,41L21,35C27,35 30,32 30,28.5C30,25 26,23.5 18,24.5V33Z" fill="#d9d3d0" stroke="#ccc6c3" stroke-width="1.4" stroke-linejoin="round"/></g></svg>
<svg class="ic" style="left:1367px;top:148px;width:48px;height:48px" viewBox="0 0 48 48"><g opacity="0.55" transform="translate(48,0) scale(-1,1)"><path d="M3,20L18,6.5V14C30,13 39,18 39,27.5C39,35 33,40.5 22,41L21,35C27,35 30,32 30,28.5C30,25 26,23.5 18,24.5V33Z" fill="#d5d9d5" stroke="#c6ccc6" stroke-width="1.4" stroke-linejoin="round"/></g></svg>
<div class="hd" style="left:1442px;top:156px;height:34px"></div>
<svg class="ic" style="left:1463px;top:148px;width:48px;height:48px" viewBox="0 0 48 48"><defs><linearGradient id="gly" x1="0" y1="0" x2="1" y2="1"><stop offset="0" stop-color="#fff27a"/><stop offset="1" stop-color="#f4cf1c"/></linearGradient></defs><path d="M11.8,8.7H45V29.5H11.8L3.3,19.1Z" fill="url(#gly)" stroke="#c9a000" stroke-width="2" stroke-linejoin="round"/><text x="11.3" y="24.3" class="fs" font-weight="bold" font-size="17.5" fill="#2a2a2a">abc</text></svg>
<svg class="ic" style="left:1531px;top:148px;width:48px;height:48px" viewBox="0 0 48 48"><circle cx="19" cy="18.3" r="13.2" fill="#00b050" stroke="#1c5c1c" stroke-width="1.6"/><path d="M19,18.3L7.6,11.7A13.2,13.2 0 0 1 30.4,11.7Z" fill="#ffde00" stroke="#ffb300" stroke-width="1.4" stroke-linejoin="round"/><path d="M19,18.3L30.4,11.7A13.2,13.2 0 0 1 19,31.5Z" fill="#c00000" stroke="#6a0000" stroke-width="1.4" stroke-linejoin="round"/><path d="M19,18.3L7.6,11.7M19,18.3V31.5" stroke="#1c5c1c" stroke-width="1.4"/><rect x="22" y="33" width="6" height="12.6" fill="#ffde00" stroke="#ffa000" stroke-width="1.6"/><rect x="29.8" y="20.8" width="6.2" height="24.8" fill="#00b050" stroke="#1c5c1c" stroke-width="1.6"/><rect x="37.6" y="34.8" width="6.6" height="10.8" fill="#c00000" stroke="#6a0000" stroke-width="1.6"/></svg>
<div class="vsep" style="left:1595px;top:153px"></div>
<svg class="ic" style="left:1610px;top:148px;width:48px;height:48px" viewBox="0 0 48 48"><defs><linearGradient id="glb" x1="0" y1="0" x2="1" y2="1"><stop offset="0" stop-color="#eef5ff"/><stop offset="1" stop-color="#a9c9f5"/></linearGradient><radialGradient id="gpin" cx=".35" cy=".3" r=".8"><stop offset="0" stop-color="#d86a6a"/><stop offset=".4" stop-color="#a82020"/><stop offset="1" stop-color="#8a1515"/></radialGradient></defs><path d="M10.7,8.7H43.8V29.5H10.7L2.2,19.1Z" fill="url(#glb)" stroke="#4a90e8" stroke-width="2" stroke-linejoin="round"/><text x="10.2" y="24.3" class="fs" font-weight="bold" font-size="17.5" fill="#2a2a2a">ab</text><path d="M36.2,20.5L38.5,30" stroke="#6a6a6a" stroke-width="5.6" stroke-linecap="round"/><path d="M36.2,20.5L38.5,30" stroke="#f4f4f4" stroke-width="3.4" stroke-linecap="round"/><circle cx="39.7" cy="36" r="9.2" fill="url(#gpin)" stroke="#7a1515" stroke-width="0.8"/></svg>
<svg class="ic" style="left:1675px;top:148px;width:48px;height:48px" viewBox="0 0 48 48"><defs><linearGradient id="glr" x1="0" y1="0" x2="1" y2="1"><stop offset="0" stop-color="#fff"/><stop offset="1" stop-color="#fbb"/></linearGradient></defs><path d="M11.7,8.7H44.6V29.5H11.7L3.2,19.1Z" fill="url(#glr)" stroke="#f00" stroke-width="2.2" stroke-linejoin="round"/><text x="11.2" y="24.3" class="fs" font-weight="bold" font-size="17.5" fill="#e00000">abc</text></svg>
<div class="vsep" style="left:1741px;top:153px"></div>
<svg class="ic" style="left:1757px;top:148px;width:48px;height:48px" viewBox="0 0 48 48"><g opacity="0.75"><path d="M10.0,9H43V29.5H10.0L1.5,19.25Z" fill="#e4e3da" stroke="#cfcec4" stroke-width="2" stroke-linejoin="round"/><text x="9.5" y="24.3" class="fs" font-weight="bold" font-size="17.5" fill="#bdbdbd">ab</text><path d="M35.5,21L37.5,30" stroke="#bbb" stroke-width="5" stroke-linecap="round"/><path d="M35.5,21L37.5,30" stroke="#f4f4f4" stroke-width="3" stroke-linecap="round"/><circle cx="38.8" cy="36.2" r="9" fill="#c9c3c6"/></g></svg>
<svg class="ic" style="left:1823px;top:148px;width:48px;height:48px" viewBox="0 0 48 48"><g opacity="0.75"><path d="M10.0,9H43V29.5H10.0L1.5,19.25Z" fill="#e4e3da" stroke="#cfcec4" stroke-width="2" stroke-linejoin="round"/><text x="9.5" y="24.3" class="fs" font-weight="bold" font-size="17.5" fill="#bdbdbd">abc</text><path d="M17.5,38C22,30 38,28 46,38C38,47 24,47 17.5,38Z" fill="#f4f4f4" stroke="#c4c4c4" stroke-width="1.2"/><path d="M19,33C25,27 38,26.5 45,31" fill="none" stroke="#c9c9c9" stroke-width="1"/><circle cx="32" cy="37.5" r="5" fill="#cfd3d8"/><circle cx="32" cy="37.5" r="2.2" fill="#b5b5b5"/></g></svg>
<svg class="ic" style="left:1889px;top:148px;width:48px;height:48px" viewBox="0 0 48 48"><g opacity="0.75"><path d="M10.0,9H43V29.5H10.0L1.5,19.25Z" fill="#e4e3da" stroke="#cfcec4" stroke-width="2" stroke-linejoin="round"/><text x="9.5" y="24.3" class="fs" font-weight="bold" font-size="17.5" fill="#bdbdbd">abc</text><rect x="27.2" y="26.5" width="21.3" height="21.3" rx="3.2" fill="#c2c5c8"/><path d="M30,34.5H38V30L46,37.2L38,44.5V40H30Z" fill="#fff"/></g></svg>
<svg class="ic" style="left:1955px;top:148px;width:48px;height:48px" viewBox="0 0 48 48"><g opacity="0.75"><path d="M10.0,9H43V29.5H10.0L1.5,19.25Z" fill="#e4e3da" stroke="#cfcec4" stroke-width="2" stroke-linejoin="round"/><text x="9.5" y="24.3" class="fs" font-weight="bold" font-size="17.5" fill="#bdbdbd">abc</text><rect x="27.2" y="26.5" width="21.3" height="21.3" rx="3.2" fill="#c2c5c8"/><path d="M33,43A6.2,6.2 0 1 1 42,40" fill="none" stroke="#fff" stroke-width="3"/><path d="M37,38L45,38L42.5,45.5Z" fill="#fff"/></g></svg>
<svg class="ic" style="left:2022px;top:148px;width:48px;height:48px" viewBox="0 0 48 48"><g opacity="0.75"><path d="M10.0,9H43V29.5H10.0L1.5,19.25Z" fill="#e4e3da" stroke="#cfcec4" stroke-width="2" stroke-linejoin="round"/><text x="9.5" y="24.3" class="fs" font-weight="bold" font-size="17.5" fill="#bdbdbd">abc</text><rect x="27.2" y="26.5" width="21.3" height="21.3" rx="3.2" fill="#cac7bb"/><path d="M44,30L33,41" stroke="#fff" stroke-width="4.4"/><path d="M30,45L31.5,39.5L35.5,43.5Z" fill="#fff"/></g></svg>
<div class="hd" style="left:2096px;top:156px;height:34px"></div>
<svg class="ic" style="left:2120px;top:148px;width:48px;height:48px" viewBox="0 0 48 48"><defs><radialGradient id="gmt" cx=".45" cy=".35" r=".75"><stop offset="0" stop-color="#dbe8f6"/><stop offset="1" stop-color="#7fa6d2"/></radialGradient></defs><ellipse cx="24" cy="20.5" rx="23" ry="20" fill="url(#gmt)" stroke="#2c4f7a" stroke-width="2.2"/><path d="M24,0.5V40M1.5,17H46.5M3.5,28H44.5M24,0.5C13,8 11,30 18,40M24,0.5C35,8 37,30 30,40" fill="none" stroke="#fff" stroke-width="1.5" opacity=".9"/><path d="M8,10l5,-3l4,2l-1,5l-5,3l-2,6l-4,-3zM22,12l7,-3l6,2l5,5l-2,8l-5,-3l-4,4l-5,-6zM14,24l5,2l1,6l-4,2z" fill="#2c4f7a" opacity=".85"/><path d="M19.5,26.5L14,37M28.5,26.5L34,37" stroke="#000" stroke-width="9" stroke-linecap="round"/><path d="M20,29H28V36H20Z" fill="#000"/><ellipse cx="15.5" cy="41.5" rx="7.8" ry="5.2" fill="#fff" stroke="#000" stroke-width="3.4"/><ellipse cx="38.8" cy="41.5" rx="7.8" ry="5.2" fill="#fff" stroke="#000" stroke-width="3.4"/></svg>
<div class="hd" style="left:2194px;top:156px;height:34px"></div>
<svg class="ic" style="left:2219px;top:148px;width:48px;height:48px" viewBox="0 0 48 48"><path d="M22.5,3.5C15,3.5 14.5,6.5 14.5,9V13.5H23V15.5H9.5C5,15.5 3.2,19 3.2,24C3.2,29 5,32.5 9,32.5H13V27.5C13,23.5 16,21.5 19.5,21.5H28C31,21.5 32.5,19.5 32.5,17V9C32.5,6 30,3.5 22.5,3.5Z" fill="#3776ab"/><circle cx="18.8" cy="8.5" r="1.9" fill="#fff"/><path d="M24.5,43C32,43 32.5,40 32.5,37.5V33H24V31H37.5C42,31 43.8,27.5 43.8,22.5C43.8,17.5 42,14 38,14H34V19C34,23 31,25 27.5,25H19C16,25 14.5,27 14.5,29.5V37.5C14.5,40.5 17,43 24.5,43Z" fill="#ffd43b"/><circle cx="28.2" cy="38" r="1.9" fill="#fff"/><path d="M33.5,34.5L45,40L33.5,45.5" fill="none" stroke="#3a3a3a" stroke-width="2.4"/></svg>
<div class="hd" style="left:2293px;top:156px;height:34px"></div>
<svg class="ic" style="left:2316px;top:148px;width:48px;height:48px" viewBox="0 0 48 48"><rect x="3.8" y="2.2" width="40.4" height="42" fill="#6c98c8" stroke="#1a1a1a" stroke-width="1.6"/><rect x="4.6" y="3" width="9.6" height="40.4" fill="#2c3e50"/><text x="21.5" y="35.5" class="fr" font-size="31" fill="#fff">?</text></svg>
<div class="hd" style="left:2390px;top:156px;height:34px"></div>
<div class="dtitle" style="top:215px">ブラウザ</div><svg class="abs" style="left:534px;top:220px;width:23px;height:22px" viewBox="0 0 23 22"><rect x="1" y="1" width="21" height="20" rx="4" fill="none" stroke="#7d7d7d" stroke-width="1.8"/><rect x="9" y="5.5" width="8.5" height="8" rx="1" fill="none" stroke="#7d7d7d" stroke-width="1.6"/><rect x="5.5" y="9" width="8.5" height="8" rx="1" fill="#ececec" stroke="#7d7d7d" stroke-width="1.6"/></svg><svg class="abs" style="left:562px;top:220px;width:23px;height:22px" viewBox="0 0 23 22"><rect x="1" y="1" width="21" height="20" rx="4" fill="none" stroke="#7d7d7d" stroke-width="1.8"/><path d="M6,5.5L17,16.5M17,5.5L6,16.5" stroke="#6a6a6a" stroke-width="3.6"/></svg>
<svg class="sic" style="left:15px;top:265px;width:32px;height:32px" viewBox="0 0 32 32"><rect x="2.5" y="2.5" width="22" height="22" fill="#efefef" stroke="#7d7d7d" stroke-width="1.6"/><rect x="19" y="19.5" width="11.5" height="11.5" rx="2" fill="#5a9a6a"/><path d="M24.75,21.5v7.5M21,25.25h7.5" stroke="#fff" stroke-width="2.4"/></svg>
<svg class="sic" style="left:66px;top:264px;width:32px;height:32px" viewBox="0 0 32 32"><defs><linearGradient id="grf2" x1="0" y1="0" x2="0" y2="1"><stop offset="0" stop-color="#7fb0e3"/><stop offset="1" stop-color="#3f79bd"/></linearGradient></defs><g transform="scale(0.667)"><path d="M4.5,22.5C4,8 22,0.5 35,9.5L41,3.5L44,23L25.5,20.5L31,14.5C22,8.5 12,13 11.5,22.5Z" fill="url(#grf2)" stroke="#3a6fb0" stroke-width="1.2"/><path d="M44.5,24C45,39 27,47 13.5,37.5L7.5,43.5L4.5,24L23,26.5L17.5,32.5C27,38.5 37,34 37.5,24Z" fill="url(#grf2)" stroke="#3a6fb0" stroke-width="1.2"/></g></svg>
<svg class="sic" style="left:116px;top:265px;width:32px;height:32px" viewBox="0 0 32 32"><path d="M3,2.5H29V6.5L19,17.5V30.5L13,28V17.5L3,6.5Z" fill="#6c98c8" stroke="#34679a" stroke-width="1.4" stroke-linejoin="round"/><rect x="3.6" y="2.8" width="24.8" height="3.6" fill="#ffe34d"/><path d="M3,6.8H29" stroke="#34679a" stroke-width="1"/></svg>
<svg class="sic" style="left:167px;top:265px;width:32px;height:32px" viewBox="0 0 32 32"><path d="M3,4V27M3,4H9M3,14H8M3,26H8" fill="none" stroke="#9a9a9a" stroke-width="1.6"/><rect x="9" y="11" width="6" height="6" fill="#fff" stroke="#ff9800" stroke-width="2.2"/><rect x="9" y="23" width="6" height="6" fill="#fff" stroke="#ff9800" stroke-width="2.2"/><path d="M17,27.5V13H12L22,1.5L32,13H27V27.5Z" fill="#5f8cc0" stroke="#34567b" stroke-width="1.4" stroke-linejoin="round"/></svg>
<svg class="sic" style="left:216px;top:265px;width:32px;height:32px" viewBox="0 0 32 32"><defs><radialGradient id="gid2" cx=".4" cy=".3" r=".8"><stop offset="0" stop-color="#86aedb"/><stop offset="1" stop-color="#5a86bd"/></radialGradient></defs><circle cx="16" cy="16" r="13" fill="url(#gid2)" stroke="#3f6ca5" stroke-width="1.2"/><text x="10.5" y="24.5" class="fr" font-style="italic" font-weight="bold" font-size="24" fill="#fff">i</text></svg>
<div class="tree" style="top:312px;height:530px"><div class="arr" style="top:12px"></div><svg class="sic" style="left:39px;top:3px;width:32px;height:32px" viewBox="0 0 32 32"><path d="M2.5,28.5V3.5H13L16.5,7.5H29.5V28.5Z" fill="#f7f7f7" stroke="#8a8a8a" stroke-width="1.7" stroke-linejoin="round"/></svg><div class="row" style="left:83px;top:1px">/Volumes</div><svg class="sic" style="left:39px;top:39px;width:32px;height:32px" viewBox="0 0 32 32"><path d="M16,1.5L20.3,11.6L31,12.6L22.9,19.8L25.3,30.5L16,24.9L6.7,30.5L9.1,19.8L1,12.6L11.7,11.6Z" fill="#ffff66" stroke="#e2b200" stroke-width="1.8" stroke-linejoin="round"/></svg><div class="row jp" style="left:83px;top:37px">お気に入り</div><div class="arr" style="top:84px"></div><svg class="sic" style="left:39px;top:75px;width:32px;height:32px" viewBox="0 0 32 32"><path d="M3,5C3,1.5 8,1.5 8,5V3.5H29.5V29.5H8V27C8,31 2.5,31 2.5,27Z" fill="#ececec" stroke="#a5a5a5" stroke-width="1.5" stroke-linejoin="round"/><path d="M8,5V27" stroke="#b0b0b0" stroke-width="1.2"/><path d="M18.5,1.5H24.5V13L21.5,16L18.5,13Z" fill="#6c98c8" stroke="#2f4f7f" stroke-width="1.3"/></svg><div class="row jp" style="left:83px;top:73px">空間ブックマーク</div><div class="arr" style="top:120px"></div><svg class="sic" style="left:39px;top:111px;width:32px;height:32px" viewBox="0 0 32 32"><path d="M2.5,28.5V3.5H13L16.5,7.5H29.5V28.5Z" fill="#f7f7f7" stroke="#8a8a8a" stroke-width="1.7" stroke-linejoin="round"/><path d="M9.5,18L16.5,11.5L23.5,18M11.5,17V24.5H21.5V17" fill="none" stroke="#1a1a1a" stroke-width="2" stroke-linejoin="round"/></svg><div class="row jp" style="left:83px;top:109px">ホーム</div><div class="arr" style="top:156px"></div><svg class="sic" style="left:39px;top:147px;width:32px;height:32px" viewBox="0 0 32 32"><path d="M2.5,28.5V3.5H13L16.5,7.5H29.5V28.5Z" fill="#f7f7f7" stroke="#8a8a8a" stroke-width="1.7" stroke-linejoin="round"/></svg><div class="row" style="left:83px;top:145px">/ (Macintosh HD)</div><svg class="sic" style="left:39px;top:183px;width:32px;height:32px" viewBox="0 0 32 32"><g transform="scale(0.667)"><path d="M0.5,15L24,6L48,15L24,25.2Z" fill="#b89600" stroke="#000" stroke-width="1.6"/><circle cx="24.6" cy="16" r="15.6" fill="#8fb3dd" stroke="#5f88b8" stroke-width="1"/><path d="M15,7c3,-2 6,-1 8,1l-2,4l-4,1l1,4l-4,2l-2,-5zM27,8l6,-2l4,4l-3,2l2,4l-4,3l-3,-4l1,-4z" fill="#34567b"/><path d="M0.5,15L24,25.2V47.5L0.5,37Z" fill="#d9b000" stroke="#000" stroke-width="1.8" stroke-linejoin="round"/><path d="M24,25.2L48,15V37.5L24,47.5Z" fill="#ffee66" stroke="#000" stroke-width="1.8" stroke-linejoin="round"/></g></svg><div class="row" style="left:83px;top:181px">GeoPackage</div><svg class="sic" style="left:39px;top:219px;width:32px;height:32px" viewBox="0 0 32 32"><g transform="scale(0.667)"><path d="M45,0.5C35,3 22,9 15,19C10,26.5 8,33 9.5,38.5C15,32 26,28.5 33,23C41,17 44,9 45,0.5Z" fill="#88abd6" stroke="#2c4560" stroke-width="1.8" stroke-linejoin="round"/><path d="M41,5L12,35M37,5.5L31,16M31,8.5L24,22M25,12.5L18,27M42,11L33,18M39,16.5L28,23.5" fill="none" stroke="#dbe7f5" stroke-width="1.3"/><path d="M10,37.5L1.2,47" stroke="#2c4560" stroke-width="2.4"/></g></svg><div class="row" style="left:83px;top:217px">SpatiaLite</div><svg class="sic" style="left:39px;top:255px;width:32px;height:32px" viewBox="0 0 32 32"><path d="M7,3C1,4 0,12 3,18C5,22 8,22 9,19L10,23C11,29 13,31 17,30.5C20,30 20.5,26 20.5,22C24,23 28,21 30,19C27,19.5 25,19 25,18C29,13 31,6 27,3C23,0.5 19,2 17,3C14,1.5 10,2 7,3Z" fill="#5f8cc0" stroke="#34567b" stroke-width="1.6" stroke-linejoin="round"/><path d="M11,8C10,13 12,17 10,21M17,4C20,8 21,14 20.5,22M22,9.5C23.5,9 24.5,10 24,11" fill="none" stroke="#34567b" stroke-width="1.5"/></svg><div class="row" style="left:83px;top:253px">PostgreSQL</div><svg class="sic" style="left:39px;top:291px;width:32px;height:32px" viewBox="0 0 32 32"><rect x="2.5" y="2.5" width="27" height="27" fill="none" stroke="#34567b" stroke-width="2.4" stroke-dasharray="2.4,2.2"/><rect x="6.5" y="6.5" width="19" height="19" fill="#6c98c8"/></svg><div class="row" style="left:83px;top:289px">SAP HANA</div><svg class="sic" style="left:39px;top:327px;width:32px;height:32px" viewBox="0 0 32 32"><path d="M2,14V2H14" fill="none" stroke="#c9d9ec" stroke-width="1.4"/><path d="M6.5,20V6.5H20" fill="none" stroke="#a9c3e2" stroke-width="1.6"/><rect x="11" y="11" width="19" height="19" fill="#eef3fa" stroke="#6c98c8" stroke-width="1.6"/><path d="M31,14V31H14" fill="none" stroke="#34567b" stroke-width="1.4"/><circle cx="20.5" cy="20.5" r="6.2" fill="#dbe7f5" stroke="#6c98c8" stroke-width="1.6"/><path d="M17,21.5c2,-3 3,2 5,-1.5" fill="none" stroke="#6c98c8" stroke-width="1.3"/></svg><div class="row" style="left:83px;top:325px">STAC</div><svg class="sic" style="left:39px;top:363px;width:32px;height:32px" viewBox="0 0 32 32"><path d="M2,2C12,4 24,8 31,15C24,18 10,23 2,30C7,21 8,12 2,2Z" fill="#5f8cc0" stroke="#34567b" stroke-width="1.6" stroke-linejoin="round"/><path d="M11,5.5C15,13 14,19 10,24M19,9C22,14 21,17 18,19.5M25.5,12.5C27,14.5 26.5,15.5 25,16.5" fill="none" stroke="#34567b" stroke-width="1.3"/></svg><div class="row" style="left:83px;top:361px">MS SQL Server</div><svg class="sic" style="left:39px;top:399px;width:32px;height:32px" viewBox="0 0 32 32"><rect x="2" y="6" width="28" height="20" rx="8.5" fill="#6c98c8" stroke="#34567b" stroke-width="3"/></svg><div class="row" style="left:83px;top:397px">Oracle</div><svg class="sic" style="left:39px;top:435px;width:32px;height:32px" viewBox="0 0 32 32"><defs><radialGradient id="gw" cx=".4" cy=".35" r=".75"><stop offset="0" stop-color="#dbe8f6"/><stop offset="1" stop-color="#6f9bcb"/></radialGradient></defs><circle cx="16" cy="16" r="14.3" fill="url(#gw)" stroke="#5f8cc0" stroke-width="1.6"/><path d="M16,2V30M2,16H30M4,9H28M4,23H28M16,2C8,8 8,24 16,30M16,2C24,8 24,24 16,30" fill="none" stroke="#fff" stroke-width="1" opacity=".9"/><path d="M6,9l4,-2l3,1l-1,3l-3,2l-1,3l-3,-2zM15,9l5,-2l4,1l3,4l-1,5l-4,-2l-2,3l-4,-4zM10,19l3,1l1,4l-2,2zM20,21l3,-1l1,3l-2,2z" fill="#34567b" opacity=".85"/></svg><div class="row" style="left:83px;top:433px">WMS/WMTS</div><svg class="sic" style="left:39px;top:471px;width:32px;height:32px" viewBox="0 0 32 32"><defs><linearGradient id="gcl" x1="0" y1="0" x2="0" y2="1"><stop offset="0" stop-color="#fff"/><stop offset="1" stop-color="#8fb0d6"/></linearGradient></defs><path d="M8,24.5C2,24.5 1,17 7,15.5C7,9 15,5.5 19.5,11.5C24,9.5 27.5,13 26.5,17C32,18 31,24.5 26,24.5Z" fill="url(#gcl)" stroke="#4a74a8" stroke-width="1.8" stroke-linejoin="round"/></svg><div class="row" style="left:83px;top:469px">Cloud</div><svg class="sic" style="left:39px;top:507px;width:32px;height:32px" viewBox="0 0 32 32"><path d="M16,2L29,8.5V24L16,31L3,24V8.5Z" fill="#b5cce6" stroke="#4a74a8" stroke-width="1.6" stroke-linejoin="round"/><path d="M3,8.5L16,15L29,8.5L16,2Z" fill="#7fa3cf" stroke="#4a74a8" stroke-width="1.4" stroke-linejoin="round"/><path d="M16,15V31" stroke="#4a74a8" stroke-width="1.6"/></svg><div class="row" style="left:83px;top:505px">Scenes</div><div class="abs" style="left:556px;top:0;width:29px;height:528px;background:linear-gradient(90deg,#f3f3f3,#fff 30%,#fff);border-left:1px solid #d9d9d9"></div><div class="abs" style="left:557px;top:0;width:28px;height:28px;border-bottom:1px solid #cfcfcf;background:#fff"></div><div class="abs" style="left:563px;top:9px;width:0;height:0;border-left:8px solid transparent;border-right:8px solid transparent;border-bottom:8px solid #4f4f4f"></div><div class="abs" style="left:557px;top:342px;width:28px;height:156px;background:#e2e2e2;border-top:1px solid #c9c9c9;border-bottom:1px solid #c9c9c9"></div><div class="abs" style="left:557px;top:500px;width:28px;height:28px;border-top:1px solid #cfcfcf;background:#fff"></div><div class="abs" style="left:563px;top:511px;width:0;height:0;border-left:8px solid transparent;border-right:8px solid transparent;border-top:8px solid #4f4f4f"></div></div>
<div class="abs" style="left:279px;top:848px;width:36px;height:3px;background-image:radial-gradient(circle,#b5b5b5 1px,transparent 1.4px);background-size:6px 3px"></div>
<div class="dtitle" style="top:859px">レイヤ</div><svg class="abs" style="left:534px;top:864px;width:23px;height:22px" viewBox="0 0 23 22"><rect x="1" y="1" width="21" height="20" rx="4" fill="none" stroke="#7d7d7d" stroke-width="1.8"/><rect x="9" y="5.5" width="8.5" height="8" rx="1" fill="none" stroke="#7d7d7d" stroke-width="1.6"/><rect x="5.5" y="9" width="8.5" height="8" rx="1" fill="#ececec" stroke="#7d7d7d" stroke-width="1.6"/></svg><svg class="abs" style="left:562px;top:864px;width:23px;height:22px" viewBox="0 0 23 22"><rect x="1" y="1" width="21" height="20" rx="4" fill="none" stroke="#7d7d7d" stroke-width="1.8"/><path d="M6,5.5L17,16.5M17,5.5L6,16.5" stroke="#6a6a6a" stroke-width="3.6"/></svg>
<div class="abs" style="left:593px;top:869px;width:3px;height:36px;background-image:radial-gradient(circle,#c6c6c6 1px,transparent 1.4px);background-size:3px 6px"></div>
<svg class="sic" style="left:16px;top:908px;width:32px;height:32px" viewBox="0 0 32 32"><path d="M1.5,15L16,8L24,13L10,27Z" fill="#e23838" stroke="#c22" stroke-width="0.8"/><path d="M4,8L15,3L22,9L10,15Z" fill="#f5d020"/><path d="M4,8L10,15L7,21L1.5,15Z" fill="#5684b8"/><path d="M30.5,2.5L20,13" stroke="#b8772a" stroke-width="3.6" stroke-linecap="round"/><path d="M14,12L23.5,19L17,27.5L8.5,21Z" fill="#e8c98a" stroke="#a9772a" stroke-width="1.2"/><path d="M12,17l7,5M10.5,19.5l6.5,5" stroke="#a9772a" stroke-width="0.8"/></svg>
<svg class="sic" style="left:66px;top:908px;width:32px;height:32px" viewBox="0 0 32 32"><path d="M3,13V29.5H19" fill="none" stroke="#8a8a8a" stroke-width="1.6"/><rect x="6.5" y="9.5" width="16" height="16.5" fill="#ececec" stroke="#8a8a8a" stroke-width="1.6"/><rect x="10.5" y="5" width="16" height="17" fill="#f4f4f4" stroke="#8a8a8a" stroke-width="1.6"/><path d="M15,19V5.5C15,0.5 21.5,0.5 21.5,5.5V17" fill="none" stroke="#34567b" stroke-width="2.2"/><rect x="19" y="19.5" width="11.5" height="11.5" rx="2" fill="#5a9a6a"/><path d="M24.75,21.5v7.5M21,25.25h7.5" stroke="#fff" stroke-width="2.4"/></svg>
<svg class="sic" style="left:116px;top:908px;width:32px;height:32px" viewBox="0 0 32 32"><path d="M1.5,16C8,5 24,5 30.5,16C24,26 8,26 1.5,16Z" fill="#f4f4f4" stroke="#8a8a8a" stroke-width="1.4"/><path d="M2,11.5C9,3.5 22,3 29,9.5" fill="none" stroke="#8a8a8a" stroke-width="1.2"/><path d="M3,21C9,28.5 22,29.5 31,21" fill="none" stroke="#9a9a9a" stroke-width="1"/><circle cx="16" cy="15.5" r="7" fill="#6c98c8" stroke="#34567b" stroke-width="1.4"/><circle cx="16" cy="15.5" r="3" fill="#111"/><circle cx="14.6" cy="14" r="1.1" fill="#fff"/><path d="M21,26H32L26.5,31.5Z" fill="#4f4f4f"/></svg>
<svg class="sic" style="left:167px;top:906px;width:32px;height:32px" viewBox="0 0 32 32"><path d="M3,2.5H29V6.5L19,17.5V30.5L13,28V17.5L3,6.5Z" fill="#6c98c8" stroke="#34679a" stroke-width="1.4" stroke-linejoin="round"/><rect x="3.6" y="2.8" width="24.8" height="3.6" fill="#ffe34d"/><path d="M3,6.8H29" stroke="#34679a" stroke-width="1"/><path d="M21,27H32L26.5,32.5Z" fill="#4f4f4f"/></svg>
<svg class="sic" style="left:218px;top:908px;width:32px;height:32px" viewBox="0 0 32 32"><g opacity="0.5"><text x="0" y="19" class="fr" font-size="30" fill="#8a8a8a">ε</text><path d="M14,17H30V21L26.5,24V31L17.5,31V24L14,21Z" fill="#e4e4e4" stroke="#d0d0d0" stroke-width="1"/></g></svg>
<div class="dd" style="left:260px;top:919px"></div>
<svg class="sic" style="left:291px;top:908px;width:32px;height:32px" viewBox="0 0 32 32"><path d="M3,4V27M3,4H9M3,14H8M3,26H8" fill="none" stroke="#9a9a9a" stroke-width="1.6"/><rect x="9" y="11" width="6" height="6" fill="#fff" stroke="#ff9800" stroke-width="2.2"/><rect x="9" y="23" width="6" height="6" fill="#fff" stroke="#ff9800" stroke-width="2.2"/><path d="M17,2.5V17H12L22,29.5L32,17H27V2.5Z" fill="#5f8cc0" stroke="#34567b" stroke-width="1.4" stroke-linejoin="round"/></svg>
<svg class="sic" style="left:341px;top:908px;width:32px;height:32px" viewBox="0 0 32 32"><path d="M3,4V27M3,4H9M3,14H8M3,26H8" fill="none" stroke="#9a9a9a" stroke-width="1.6"/><rect x="9" y="11" width="6" height="6" fill="#fff" stroke="#ff9800" stroke-width="2.2"/><rect x="9" y="23" width="6" height="6" fill="#fff" stroke="#ff9800" stroke-width="2.2"/><path d="M17,27.5V13H12L22,1.5L32,13H27V27.5Z" fill="#5f8cc0" stroke="#34567b" stroke-width="1.4" stroke-linejoin="round"/></svg>
<svg class="sic" style="left:389px;top:908px;width:32px;height:32px" viewBox="0 0 32 32"><rect x="2.5" y="2.5" width="22" height="22" fill="#efefef" stroke="#7d7d7d" stroke-width="1.6"/><rect x="18.5" y="20.5" width="12" height="10" rx="2.5" fill="#e8384f"/><path d="M21,25.5h7" stroke="#fff" stroke-width="2.4"/></svg>
<div class="tree" style="top:956px;height:598px"><div class="abs" style="left:125px;top:1px;width:459px;height:35px;background:linear-gradient(180deg,#f7faff,#e9f1fd);border:1.5px solid #b5d0f5;border-radius:2px"></div><div class="abs" style="left:47px;top:6px;width:27px;height:27px;background:#fff;border:1.5px solid #bcbcbc;border-radius:2px"></div><svg class="abs" style="left:47px;top:6px;width:27px;height:27px" viewBox="0 0 27 27"><path d="M6,12.5L11.5,21.5L21.5,5.5" fill="none" stroke="#1a1a1a" stroke-width="3.2"/></svg><div class="abs" style="left:87px;top:3px;width:32px;height:32px;background:#bdd04f;border:1px solid #8d9c3a"></div><div class="row" style="left:132px;top:1px;font-size:27px;font-weight:bold;color:#2b3340;text-decoration:underline;text-decoration-thickness:2.4px;text-underline-offset:4px;letter-spacing:1.45px">N03-20250101</div><div class="abs" style="left:47px;top:42px;width:27px;height:27px;background:#fff;border:1.5px solid #bcbcbc;border-radius:2px"></div><div class="abs" style="left:87px;top:39px;width:32px;height:32px;background:#e8b634;border:1px solid #b08a28"></div><div class="row" style="left:132px;top:37px;font-size:27px;font-weight:bold;font-style:italic;color:#7f7f7f;letter-spacing:0.72px">ne_50m_admin_0_countries</div></div>
<div id="canvas"></div>
<svg class="abs" style="left:0;top:0;width:2850px;height:1616px;pointer-events:none" viewBox="0 0 2850 1616">
<g fill="#bdcf50" stroke="#232323" stroke-width="1.9" stroke-linejoin="round">
<path d="M1935.0,382.5L1940.0,386.2L1944.6,389.9L1950.0,395.0L1954.5,397.9L1958.4,402.2L1962.5,406.2L1964.9,410.4L1968.2,414.5L1972.5,418.8L1975.4,420.4L1979.8,424.4L1983.0,425.7L1987.5,428.8L1992.1,431.8L1996.4,432.9L2001.6,434.4L2005.0,437.5L2010.7,439.0L2014.3,440.5L2019.6,443.8L2025.0,445.0L2029.4,446.1L2035.3,446.6L2040.1,446.9L2045.0,448.8L2049.1,451.9L2055.0,456.2L2061.6,457.4L2067.5,458.8L2072.1,456.4L2077.5,453.8L2082.4,449.0L2087.5,445.0L2092.5,442.3L2096.2,438.8L2098.0,443.8L2094.1,448.3L2091.2,452.5L2087.6,457.6L2083.8,461.2L2087.5,467.5L2093.8,473.8L2096.2,480.0L2099.8,483.3L2102.5,487.5L2108.5,485.5L2112.5,485.0L2118.8,483.8L2112.5,487.5L2108.6,490.5L2105.0,492.5L2099.9,494.4L2096.2,496.2L2090.7,498.7L2087.6,500.6L2082.5,502.5L2077.0,503.4L2070.0,505.0L2065.4,505.2L2060.2,504.9L2055.0,505.0L2050.7,506.7L2044.9,507.0L2040.0,507.5L2034.1,510.0L2030.3,512.7L2025.0,513.8L2021.5,516.7L2016.4,520.8L2012.5,523.8L2008.2,527.4L2005.2,530.5L2002.5,535.0L2001.0,541.2L2001.2,546.2L1998.6,549.9L1997.5,554.5L1992.3,551.7L1987.5,547.5L1982.3,544.9L1978.8,543.3L1975.0,540.7L1970.0,537.5L1965.2,535.1L1961.0,533.9L1957.8,530.2L1952.5,528.8L1946.9,526.5L1942.0,525.4L1937.5,523.8L1932.7,521.4L1927.5,520.0L1920.3,521.1L1915.0,522.5L1908.5,525.1L1902.5,527.5L1898.4,530.4L1892.5,532.5L1890.0,536.2L1885.0,532.5L1880.0,526.2L1875.0,524.6L1870.0,522.5L1866.0,523.5L1861.2,526.2L1856.2,532.5L1858.8,540.0L1865.0,545.0L1872.0,545.6L1877.5,545.0L1882.4,548.1L1885.6,549.8L1890.0,552.5L1893.6,555.9L1898.8,558.8L1892.5,562.5L1886.6,561.0L1882.5,561.2L1875.0,562.5L1870.7,564.3L1867.5,567.5L1862.5,573.8L1857.2,574.1L1852.5,576.2L1846.2,577.5L1842.0,571.2L1843.8,562.5L1850.0,557.5L1848.8,552.5L1843.4,548.7L1840.0,546.2L1836.1,542.2L1833.8,538.8L1835.0,530.0L1835.3,525.7L1837.5,520.0L1845.0,516.2L1849.0,513.0L1852.5,511.2L1853.8,515.0L1857.0,512.2L1861.2,510.0L1865.0,502.5L1861.2,496.2L1858.0,490.0L1865.0,485.0L1872.5,488.8L1877.2,489.9L1882.5,492.5L1891.2,491.2L1896.3,494.7L1900.0,496.2L1906.2,490.0L1908.8,482.5L1907.4,478.1L1906.2,473.8L1907.5,467.5L1910.4,463.6L1915.0,461.2L1921.2,457.5L1921.6,450.8L1922.5,445.0L1925.0,439.3L1926.2,435.0L1925.9,429.7L1927.5,422.5L1926.3,416.2L1925.0,411.2L1922.6,404.7L1920.0,400.0L1918.0,392.5L1921.2,387.0L1928.8,387.5ZM1886.2,572.0L1892.5,575.0L1896.9,577.8L1901.2,578.8L1907.5,580.0L1913.0,577.5L1912.2,582.3L1910.0,586.2L1909.3,591.6L1909.5,597.5L1910.3,604.3L1912.5,610.0L1915.1,615.6L1917.5,620.0L1920.9,622.6L1925.0,626.2L1928.7,631.6L1931.2,635.0L1933.2,640.6L1933.8,645.0L1936.3,650.5L1937.5,655.0L1938.2,660.0L1940.0,665.0L1939.7,669.1L1940.0,675.0L1937.8,679.6L1937.5,685.0L1933.3,690.4L1930.0,695.0L1928.4,699.3L1925.0,703.8L1920.0,710.0L1920.2,717.2L1918.8,722.5L1915.9,724.7L1911.2,727.5L1905.0,725.0L1899.4,725.7L1895.0,727.5L1891.3,730.7L1888.8,735.0L1889.4,740.8L1890.3,745.0L1890.0,750.0L1891.1,755.6L1890.8,760.3L1892.5,765.0L1892.9,770.6L1892.2,775.0L1891.2,780.0L1888.7,785.6L1887.5,790.0L1882.8,794.4L1878.8,797.5L1877.2,803.5L1873.8,810.0L1872.3,817.1L1871.2,822.5L1872.9,828.1L1873.8,835.0L1876.1,838.7L1880.0,843.8L1885.6,848.8L1880.0,850.0L1872.5,852.5L1866.2,856.2L1862.5,861.2L1861.9,867.5L1860.0,873.8L1855.0,877.5L1847.5,881.2L1842.5,883.8L1838.8,888.1L1834.4,888.1L1831.2,885.0L1835.5,881.9L1835.0,877.5L1836.5,874.0L1838.1,870.6L1842.5,864.5L1846.6,859.5L1848.5,855.6L1845.6,851.5L1841.4,852.6L1835.6,852.5L1832.5,856.5L1829.0,861.0L1825.6,865.4L1825.6,870.0L1828.5,872.8L1828.1,877.5L1824.4,876.2L1822.5,871.2L1817.5,870.0L1810.0,870.6L1805.0,872.5L1802.5,876.2L1803.8,881.2L1802.5,886.2L1801.2,891.2L1797.5,897.5L1792.5,903.1L1787.5,901.2L1783.1,897.5L1783.1,891.2L1785.0,885.0L1786.2,881.2L1781.2,878.1L1776.2,879.4L1771.2,883.8L1767.5,888.8L1763.8,893.8L1760.0,898.8L1758.8,901.9L1752.5,900.6L1745.0,900.0L1737.5,898.8L1730.0,897.5L1722.5,898.1L1715.0,900.0L1707.5,901.9L1701.2,903.8L1697.5,905.6L1696.9,913.8L1692.5,920.6L1685.6,923.1L1678.8,926.5L1672.5,930.0L1666.2,934.8L1660.0,938.8L1655.0,944.4L1651.2,950.0L1650.0,956.2L1645.0,958.8L1641.2,958.1L1637.5,956.9L1632.5,955.0L1627.5,952.5L1622.5,950.0L1617.5,945.0L1612.5,940.0L1610.0,936.2L1607.5,932.5L1608.1,927.5L1611.2,923.8L1607.5,920.0L1610.0,917.5L1615.0,915.0L1620.0,912.5L1625.0,908.8L1623.8,903.8L1617.5,902.5L1610.0,902.5L1602.5,900.0L1595.0,896.2L1587.5,895.6L1581.2,896.9L1575.0,899.4L1568.8,902.5L1562.5,905.0L1556.2,907.5L1550.0,910.0L1545.0,912.5L1540.0,911.2L1535.0,909.4L1530.0,911.2L1525.0,912.5L1518.8,916.2L1512.5,917.5L1506.2,919.4L1500.0,920.0L1495.0,922.5L1490.0,920.0L1485.0,917.5L1480.0,921.2L1475.0,925.0L1471.2,930.0L1467.5,931.2L1465.0,936.2L1461.2,937.5L1458.8,932.5L1453.8,929.4L1448.8,927.5L1445.0,930.0L1438.8,932.5L1431.2,933.5L1425.0,931.2L1417.5,930.6L1412.5,933.1L1410.6,927.5L1411.9,922.5L1408.8,917.5L1407.5,912.5L1412.5,910.6L1416.2,911.2L1423.8,910.0L1430.0,906.2L1436.2,905.6L1441.2,902.5L1443.8,898.1L1450.0,897.5L1455.0,895.0L1460.0,891.2L1465.0,887.5L1471.2,883.8L1477.5,878.1L1482.5,874.4L1487.5,870.0L1493.1,866.2L1491.9,861.9L1495.0,860.6L1500.0,859.4L1506.2,856.9L1513.1,854.4L1520.0,855.0L1526.2,855.6L1525.6,858.1L1531.2,858.8L1537.5,858.1L1543.0,858.8L1550.0,858.1L1557.2,857.5L1562.5,856.2L1571.2,855.0L1577.5,853.1L1582.2,852.3L1587.5,851.2L1595.0,850.0L1600.5,848.4L1607.5,848.8L1613.4,847.8L1617.5,846.2L1620.0,850.0L1626.2,853.8L1630.7,855.9L1635.0,856.2L1639.9,855.1L1645.0,852.5L1650.0,850.0L1656.2,847.5L1652.5,843.8L1651.2,836.2L1655.0,831.2L1660.0,825.0L1667.5,822.5L1672.5,819.4L1676.2,817.5L1678.9,813.3L1682.5,810.0L1686.2,802.5L1690.0,795.0L1687.5,787.5L1685.0,780.0L1688.8,772.5L1693.8,768.8L1697.6,767.7L1702.5,766.2L1710.0,763.8L1718.0,763.0L1717.5,767.0L1713.0,771.8L1708.8,775.0L1703.5,777.0L1700.5,780.5L1703.5,785.5L1701.5,792.0L1705.3,794.6L1710.0,797.5L1712.5,798.8L1715.5,796.4L1720.0,792.5L1724.7,790.5L1730.0,788.8L1735.2,787.7L1740.0,785.0L1746.1,783.3L1752.5,780.0L1757.5,778.2L1762.5,776.2L1767.5,772.8L1772.5,771.2L1776.1,768.1L1780.0,766.2L1781.5,762.5L1785.0,757.5L1788.1,753.1L1792.5,748.8L1796.7,745.7L1800.0,742.5L1804.7,740.0L1810.0,737.5L1813.2,733.1L1816.2,727.5L1816.7,722.6L1818.8,717.5L1821.4,712.1L1825.0,707.5L1829.9,706.3L1833.8,705.0L1835.7,700.5L1837.5,695.0L1840.8,689.9L1842.5,685.0L1844.0,680.0L1845.0,675.0L1845.6,669.8L1846.2,663.8L1844.9,658.8L1843.8,653.8L1838.8,651.2L1831.2,651.2L1827.5,645.0L1832.5,646.2L1838.8,642.5L1840.0,637.5L1841.2,634.0L1842.5,628.8L1841.2,621.2L1836.2,616.2L1841.2,610.0L1848.8,608.8L1855.5,607.5L1857.5,601.2L1855.5,592.5L1858.8,585.0L1862.5,591.2L1867.5,587.5L1872.0,588.8L1873.8,597.5L1877.5,605.0L1883.8,603.8L1886.2,598.8L1890.0,603.8L1896.2,602.5L1901.2,597.5L1902.0,590.0L1898.8,586.2L1892.5,588.8L1888.5,590.8L1883.8,591.2L1879.5,588.8L1881.9,583.9L1882.5,580.0ZM1461.2,961.6L1465.7,960.9L1470.0,958.5L1475.7,956.3L1480.0,955.6L1482.5,953.8L1487.5,950.0L1492.5,946.2L1496.2,941.2L1498.8,936.2L1500.0,931.2L1502.5,927.5L1506.2,923.8L1511.2,925.0L1513.8,930.0L1518.8,932.5L1525.0,931.2L1532.5,930.0L1538.8,927.5L1541.2,922.5L1543.8,918.8L1542.5,915.0L1547.5,913.8L1552.5,912.5L1560.0,911.2L1566.2,910.6L1572.5,912.5L1577.5,915.0L1582.5,918.1L1587.5,920.0L1590.0,923.8L1590.0,928.8L1592.5,933.8L1597.5,937.5L1594.4,939.4L1588.8,942.5L1583.8,946.2L1578.8,950.0L1573.8,955.0L1570.0,960.0L1566.9,967.5L1562.5,962.5L1558.8,958.8L1553.8,955.0L1547.5,953.8L1541.2,954.4L1535.0,957.5L1530.0,961.2L1525.0,966.2L1520.0,971.2L1516.2,976.2L1512.5,981.2L1510.6,987.5L1511.2,991.9L1505.0,990.0L1498.8,988.8L1492.5,990.0L1487.5,992.5L1485.0,988.8L1486.2,985.0L1482.5,982.5L1481.2,978.8L1477.5,975.0L1475.0,970.0L1477.5,965.0L1480.0,959.0L1475.0,960.2L1467.5,961.9L1461.5,962.8ZM1415.0,931.9L1416.9,937.5L1418.1,943.1L1422.5,946.9L1428.8,950.0L1435.0,948.8L1439.4,945.6L1445.0,945.0L1449.4,948.1L1450.9,952.8L1448.8,957.5L1444.4,960.2L1440.0,961.9L1443.1,964.0L1450.0,964.8L1456.2,963.8L1460.0,965.6L1458.8,970.0L1463.1,973.8L1467.5,980.0L1464.4,985.0L1461.2,990.0L1456.9,993.8L1452.5,998.1L1450.0,1002.5L1448.1,1007.5L1445.0,1012.5L1442.8,1018.8L1440.0,1025.0L1438.8,1032.5L1438.1,1038.8L1436.2,1045.0L1435.0,1050.6L1432.2,1056.0L1427.5,1054.8L1422.5,1052.8L1419.4,1055.6L1421.2,1059.4L1416.9,1063.1L1411.9,1066.2L1406.2,1069.4L1401.7,1071.8L1398.8,1074.4L1400.0,1069.4L1403.1,1063.8L1405.6,1058.1L1404.0,1054.0L1401.9,1050.0L1399.8,1047.5L1401.9,1045.4L1405.6,1045.4L1406.9,1043.1L1405.0,1040.0L1400.0,1038.5L1396.9,1040.6L1397.8,1043.8L1396.2,1046.9L1393.8,1049.4L1393.1,1053.8L1394.4,1060.0L1396.2,1065.6L1392.5,1066.0L1388.8,1062.5L1382.5,1061.9L1377.5,1061.2L1374.4,1055.6L1372.5,1053.1L1377.5,1051.2L1381.9,1050.0L1384.0,1045.0L1381.9,1040.0L1377.5,1037.5L1375.6,1032.5L1377.5,1028.8L1376.2,1023.8L1374.0,1020.0L1370.0,1019.4L1368.1,1016.9L1365.0,1016.9L1364.8,1010.0L1366.5,1003.8L1368.1,1000.0L1371.9,1001.2L1376.2,998.8L1374.0,992.5L1375.0,988.1L1370.0,988.5L1365.0,989.4L1360.0,995.0L1355.0,999.4L1353.8,996.9L1356.9,991.9L1355.0,988.1L1351.2,985.0L1348.1,980.0L1346.2,975.0L1345.6,971.2L1342.5,968.8L1339.4,963.8L1338.8,957.5L1342.5,953.8L1346.2,953.1L1350.0,956.2L1353.8,955.0L1357.5,951.2L1361.2,948.8L1365.0,951.2L1370.0,950.0L1375.0,946.9L1380.0,945.0L1385.0,942.5L1388.8,938.8L1393.8,936.2L1398.8,933.1L1403.8,931.2L1408.8,929.4L1413.1,930.0ZM1605.2,902.0L1607.2,905.0L1605.6,910.0L1602.5,915.0L1598.8,919.0L1595.2,922.2L1591.2,924.0L1587.9,921.0L1590.6,916.9L1593.8,912.5L1597.5,908.1L1601.5,903.8ZM1772.5,723.8L1774.5,728.0L1773.0,733.8L1775.5,737.5L1774.0,743.0L1769.5,747.0L1763.0,750.0L1758.8,750.8L1757.5,747.0L1760.0,742.5L1763.0,740.0L1760.5,737.5L1758.8,735.0L1761.5,730.5L1766.5,726.5ZM2100.0,462.5L2102.9,458.9L2107.5,456.2L2111.6,452.2L2117.5,447.5L2122.4,443.3L2126.2,437.5L2129.9,434.6L2135.0,430.8L2142.5,433.8L2148.4,433.0L2153.8,433.8L2147.5,437.5L2140.0,441.2L2137.0,445.3L2132.5,447.5L2126.9,450.9L2122.5,452.5L2117.9,456.2L2113.8,460.0L2107.5,465.0L2106.2,470.0L2101.2,468.0ZM2169.5,431.2L2173.8,426.2L2180.0,421.2L2185.0,416.2L2191.0,413.8L2195.0,410.0L2201.2,403.8L2204.9,402.4L2210.0,401.2L2215.0,396.2L2216.2,387.5L2221.2,387.5L2223.8,393.8L2232.5,395.0L2240.0,392.5L2243.8,388.4L2247.5,385.0L2251.9,382.5L2257.5,380.8L2265.0,382.0L2266.2,386.2L2262.5,391.2L2257.9,390.9L2252.5,392.5L2245.0,396.2L2237.5,400.0L2230.0,403.8L2225.1,406.1L2220.0,408.8L2212.5,407.5L2205.0,411.2L2200.0,416.2L2194.0,419.0L2190.0,422.5L2186.5,425.0L2182.5,427.5L2177.9,431.0L2175.0,432.5L2171.2,435.0ZM1341.2,895.5L1343.8,898.8L1342.0,906.2L1339.5,913.8L1336.2,917.5L1333.8,923.8L1329.5,926.2L1328.0,922.5L1330.0,916.2L1333.8,913.8L1335.5,906.2L1336.2,900.0ZM1285.0,1269.5L1288.8,1273.8L1287.5,1278.8L1281.2,1283.8L1275.0,1287.5L1271.2,1291.2L1272.5,1297.5L1268.8,1302.5L1262.5,1305.5L1256.2,1307.5L1255.0,1301.2L1258.8,1293.8L1260.0,1288.8L1265.0,1285.0L1261.2,1281.2L1260.0,1276.2L1267.5,1277.5L1275.0,1281.2L1280.0,1276.2L1282.5,1271.2ZM1355.0,1190.0L1352.5,1196.2L1346.2,1201.2L1342.5,1207.5L1339.3,1210.9L1335.0,1212.5L1331.2,1216.2L1326.2,1215.0L1327.5,1207.5L1328.8,1201.2L1335.0,1198.8L1342.5,1195.0L1350.0,1191.2ZM1418.0,1080.5L1419.5,1085.0L1418.0,1092.5L1415.0,1098.8L1412.5,1103.8L1408.0,1104.5L1410.0,1098.8L1412.5,1092.5L1415.0,1085.0ZM1385.8,1104.5L1387.5,1100.0L1392.0,1097.8L1397.0,1099.5L1399.2,1104.0L1397.5,1109.0L1392.5,1111.2L1388.0,1109.5ZM1518.0,823.2L1520.0,819.2L1524.0,817.8L1528.0,820.0L1529.0,824.0L1526.5,828.0L1522.0,828.8L1518.8,826.8ZM1300.6,990.0L1305.0,988.1L1310.0,990.0L1313.1,992.5L1316.2,995.0L1316.9,998.1L1313.8,998.8L1308.8,997.5L1303.8,998.1L1300.6,995.0ZM1568.1,905.0L1572.5,903.8L1575.0,905.6L1574.4,908.8L1570.0,909.8L1567.5,907.8ZM1314.4,988.5L1315.6,983.8L1318.1,980.0L1319.8,975.0L1321.9,971.2L1322.8,966.5L1325.6,963.1L1329.8,963.8L1329.0,969.0L1327.5,973.8L1326.5,978.8L1324.0,983.1L1321.9,987.5L1318.1,990.2ZM1359.4,1030.6L1367.5,1031.2L1362.5,1035.0L1358.1,1038.8L1354.4,1043.1L1351.2,1043.8L1350.6,1041.2L1353.8,1037.5L1356.9,1033.8ZM1460.0,937.5L1465.0,936.2L1470.0,938.1L1472.5,941.2L1468.1,943.8L1462.5,942.5L1459.4,940.0ZM1351.2,936.9L1356.2,936.2L1358.5,940.0L1356.9,943.8L1352.5,944.4L1349.8,942.5L1350.2,938.8Z"/>
<path d="M2156.2,465.0L2163.8,461.2L2171.2,460.5L2172.0,463.8L2165.0,467.0L2157.5,468.8ZM1888.2,383.8L1890.8,385.0L1893.0,392.0L1891.5,394.5L1889.8,389.5ZM1896.8,398.8L1898.0,396.0L1901.2,395.0L1904.5,396.2L1905.8,399.2L1904.0,402.0L1900.5,402.5L1897.8,401.2ZM1815.0,540.0L1822.0,537.5L1820.5,545.0L1816.5,548.8ZM1507.5,831.2L1511.2,828.8L1515.0,829.5L1516.2,832.5L1513.8,835.5L1509.5,836.2L1507.0,834.0ZM1315.5,1220.5L1320.0,1222.0L1322.0,1227.0L1319.5,1232.5L1315.5,1231.5L1314.0,1226.2ZM1297.5,1244.5L1302.0,1243.0L1305.8,1242.5L1304.0,1246.5L1299.5,1248.2ZM1235.0,1300.0L1240.0,1298.8L1246.2,1299.5L1245.0,1303.8L1238.8,1305.0L1235.5,1303.0ZM1210.0,1293.8L1215.5,1293.0L1221.2,1294.0L1217.0,1295.5L1215.5,1298.0L1213.0,1295.5ZM1140.0,1361.2L1143.8,1363.8L1146.2,1367.5L1153.0,1372.0L1146.7,1371.8L1141.2,1372.0L1142.5,1367.5ZM1135.0,1365.0L1138.8,1364.2L1140.5,1367.5L1137.5,1369.0L1135.0,1367.5ZM1098.0,1377.0L1095.0,1383.8L1093.8,1388.8L1088.8,1390.0L1085.0,1387.5L1087.5,1383.8L1092.5,1382.5L1096.2,1377.5ZM1068.0,1387.5L1073.8,1384.5L1078.0,1388.8L1076.2,1393.0L1068.8,1393.0L1066.2,1391.2ZM1363.8,1200.5L1367.5,1198.0L1369.5,1199.0L1367.0,1202.5L1364.2,1203.0ZM1267.5,1267.0L1270.0,1262.5L1273.5,1258.8L1274.5,1259.5L1271.0,1264.0L1268.8,1268.0ZM1030.5,1384.0L1034.0,1383.2L1038.0,1383.8L1037.5,1385.2L1033.5,1385.8L1030.8,1385.2ZM1811.9,892.8L1814.4,891.9L1817.2,894.4L1817.8,897.5L1815.6,899.4L1812.8,898.1L1811.2,895.2ZM1828.0,970.8L1831.2,970.0L1835.0,972.5L1836.5,975.5L1833.8,976.2L1830.0,973.8ZM1945.5,1257.5L1947.5,1253.8L1950.0,1257.5L1950.5,1262.0L1946.2,1262.5ZM1943.8,1277.0L1947.0,1276.5L1948.0,1281.2L1950.5,1284.2L1945.5,1285.5L1943.5,1282.0ZM1903.2,1367.0L1906.2,1367.5L1909.5,1369.0L1906.2,1370.0L1903.8,1371.8ZM1941.5,1228.0L1943.0,1227.5L1947.5,1233.0L1946.5,1234.2Z" stroke-width="1.7"/>
</g>
<path d="M1751.1,779.6l1.6,2.8 2.6,2.2M1756.6,777.5l-.2,.6-.5,3.4-.6,3.1M1691.1,769.5l2.3,1.5M1693.4,771l3.3,6.7M1686.6,774.6l4.6,.9 5.5,2.6M1320.1,972.3l.8,1.1 1.8,3.1 3.8,2.1 .7,.9M1316.5,980.6l1.4,0 4.7,1.3 2.7,1M2116.5,447l.2,.2 .6,3.4 1.3,2.9 .3,2.9 .2,.2M1759.9,738.3l1.2,.9 2.5,1.6 2.7,1.6 4.3,.9 3.3,1.2M1766,772.6l1.2,1.2 2.2,3.1 2.7,1.6M1777.8,768l-1.3,2.6-1.4,2.9-.8,3.3M1777.8,768l-.3-1.7M1772.1,778.5l2.2-1.7M1782.2,781.3l-1.4,3.1M1784.1,773.6l-1.3,3.7-.6,4M1777.8,768l2.7,1.8 2.1,1.7 1.5,2.1M1774.3,776.8l2,1.5 1.6,1.9 1.4,2 1.5,2.2M1772.4,813.2l0-2.6-.8-2.6M1772.4,813.2l.9,.4M1775.3,805.7l-1.9,1-1.8,1.3M1779.5,809.6l-2.1-2.2-2.1-1.7M1779.5,809.6l-.1,2.3M1779.4,811.9l-3.1,.5-3,1.2M1710.4,775l-2.8-2.3-3.3-3.9-2-3.6M1709.7,775.5l-4.6-.8M1705.1,774.7l-6.6-3M1697.9,766.5l.4,1.2 .2,4M1710.8,762.7l.3,2.2 2,3.3 2.1,2.7M1702.9,785.5l-3-3.3-3.2-4.1M1704.5,785.4l-1.5,.2M1696.7,777.7l3-2 5.4-1M1693.4,771l5.1,.7M1702.9,785.5l-5.9,.5M1686.3,775.1l4.8,6M1691.1,781.1l5.9,4.9M1592.6,856.8l3,3.6-.1,3.9M1592.6,856.8l-5.6-.8-4.6-.4-3.3,0M1595.5,864.3l-5.1-1.5-7.4-.5M1579.1,855.6l.5,3.4 3.4,3.3M1524.4,816.8l-.5,2.1 .6,4.4-.9,5.4-.2,.8M1557.7,952.4l-3.2,4.2-.1,.1M1547,954.8l-.4-.6-1.7-5M1557.7,952.4l-4.4-2.7-2.7-3.3M1550.6,946.4l-3.1,1-2.6,1.8M1647.7,949.4l-.8-.2M1647.7,949.4l.2,2.6-1.1,2.3 .5,2.7 .2,1.6M1639.6,958.6l-.1-.2-1.5-3.1M1646.9,949.2l-2.4,1.5-2.8,1.2-1.8,1.9-1.9,1.5M1397.4,1098.6l-3,2.7-4.6,4.4-2.4,4.6M1289.7,1274l-3.9,.4M1285.8,1274.4l-.8-5.9M1414,1084.7l2-.4 4-.9M1572.5,953.7l-4.3,1.4-4.4-.2M1572.5,953.7l2.7,1.2M1569.5,963.7l-.6-.2-2.7-2.8-2.7-4.7M1563.8,954.9l-.4,.7M1557.7,952.4l5.7,3.2M1562.7,964.3l.5-1.8 .3-6.5M1544.9,949.2l-.6-.6M1539.5,949.1l4.8-.5M1539.5,949.1l-1.8,3.7 .2,3.6M1538.4,956.9l-.5-.5M1536.1,946.8l-5.1,3.1M1531,949.9l1.8,5.7M1539.5,949.1l-3.4-2.3M1537.9,956.4l-5.1-.8M1942.3,386.8l-1.4,1.2-2.2,2.5M1939.7,384.7l-2.4,.6-4.4,1.5M1938.7,390.5l-4.4-.6M1934.3,389.9l-1.4-3.1M1929.4,385.7l3.5,1.1M1932.3,410.6l-3.5,1.8-3.4,1.1M1932.3,410.6l-.3-4-2-2.8M1930,403.8l-1.3,.2M1925.4,413.5l1.5-3.8-.3-3.3M1928.7,404l-2.1,2.4M1934.3,389.9l-4.4,4.1M1929.9,394l2,1.2 1.1,2.3M1938.7,390.5l.1,.8M1933,397.5l3.2-3.3 2.6-2.9M1814.1,812.6l0,2.3 .5,2.2M1814.1,812.6l1.5-2.7M1819.2,815.9l-2.4,.2-2.2,1M1819.2,815.9l1.2-2.1 1.6-2 1.1-2.3M1823.1,809.5l-2.4-.2-2.5,.7-2.6-.1M1721.1,844.7l-.6-3.7M1721.1,844.7l-3.3,7.4M1714.1,854.3l3.7-2.2M1714.1,854.3l-.8-3.8-.5-4.1-.3-4M1720.5,841l-2.7-.5-2.9,1.2-2.1-.7M1712.5,842.4l.3-1.4M1745.2,782.5l.2,.3 4.6,2.3M1750,785.1l3.1,.3 2.3-.5M1714.1,854.3l-2.5,4M1708.5,847.9l2.1-2.3 1.9-3.2M1708.5,847.9l-1.2,3.6-.8,3.5M1711.6,858.3l-1.7-1.3-1.8-.7-1.6-1.3M1724.6,789.5l.4,.3 2.7,2.5M1716.4,794.6l3.7,1.1 4.2-.3M1727.8,792.7l-3.5,2.7M1719.6,804.8l-2,2.4M1719.6,804.8l.5-3.3-.6-2.8M1714,803.3l1-2.8 .4-2.8 1.3-2.1M1719.5,798.7l-2.8-3.1M1714,803.3l1.7,3.6M1715.7,806.9l1.9,.3M1725.8,832.6l-2.5,4.2-2.8,4.2M1729.1,830.3l-3.3,2.3M1729.1,830.3l2.2,1M1721.1,844.7l3.2-1.3 3.1-.9 2.8-.6M1730.2,841.9l.3-4.1 1.3-3.9M1731.3,831.3l.5,2.6M1739.2,814.8l2.3-1.2M1739.2,814.8l-.6,4.4-2,5.8M1742,813.8l1.1,2.4 .5,3 .1,3.3M1736.6,825l2-.1 2.4-.9 2.7-1.5M1719.7,857.3l3.3-4.3 3.4-2 3.4-1.7M1717.8,852.1l1.9,5.2M1730.2,841.9l1,3.4M1731.2,845.3l-1.4,4M1721.1,863l-1.4-5.7M1729.8,849.3l-.2,1.7M1729.6,851l-.7,6.4M1721.1,863l2,1.5M1723.1,864.5l1.4-3.6 1.9-3.2 2.5-.3M1592.9,870.6l2.2,4.8M1592.9,870.6l3.1-5.4M1595.1,875.4l3.7-.5 3.7-1.6M1596,865.2l3.1,1.4M1599.1,866.6l2.5,4.5M1601.6,871.1l1,2.1M1587.1,869l-4.2-5.8M1583,862.3l-.1,.9M1590,871l-2.9-2M1595.5,864.3l.5,.9M1590,871l2.9-.4M1711.6,858.3l.1,3.6-.9,3.1M1721.1,863l-.6,3.7-1.5,2.7M1710.8,865l2.2,1.8 2.8,1 3.2,1.6M1711.9,883.4l2.6-1.6 2.5-2.2M1711.9,883.4l1,2.5 1.9,2M1714.8,887.9l3.4,.6M1718.2,888.5l1.3-1.9 2.1-1.2M1721.6,885.4l-2-2.9-2.6-2.9M1704.7,856.2l.1,3.7-1,3.4M1706.5,855l-1.8,1.2M1710.7,865.3l-2.9-.1-2.9,.1M1704.9,865.3l-1.1-2M1718.4,875.1l-1.6,1.2M1716.8,876.3l-4.1-1.2M1710.7,865.3l-.8,4.8M1719,869.4l-.6,5.7M1709.9,870.1l1.6,2.3 1.2,2.7M1716.8,876.3l.2,3.3M1712.7,875.1l-2.5,1.4-2.4,1.1M1711.9,883.4l-2.4-1.8-2.5-1.3M1707,880.3l.8-2.7M1709.9,870.1l-2.4,.7-2.4,1M1707.8,877.6l-1.2-3.1-1.5-2.7M1608.5,866l5.7,.6M1608.5,866l-2.6-2.2-1.5-2.9M1614.2,862l-3.8-1.9-6-1M1614.2,862l1.6,2.4M1615.8,864.4l-1.6,2.2M1604.4,860.9l0-1.8M1615.3,872.4l-6.2-.5-6.5,1.3M1601.6,871.1l2.4-3.3 4.5-1.8M1615.3,872.4l.9-1.1M1616.2,871.3l-2-4.7M1599.1,866.6l2.7-3 2.6-2.7M1604.4,859.1l-4.3-3.5M1592.6,856.8l2.1-1.8 3.5-.4M1600.1,855.6l-1.9-1M1593.7,849.2l.5,1.9 3.4,2.7M1577.2,852.2l.8,1 1.1,2.4M1597.6,853.8l.6,.8M1602.1,847.5l1.8,2.4M1597.6,853.8l1.8-2.7 4.5-1.2M1616.8,847.3l-.6,2.2 .8,2.9-1.1,2.1M1615.9,845.8l.9,1.5M1603.9,849.9l12,4.6M1650.3,836l1.4,.6 5.2,.5M1656.9,837.1l-1.1,2.9 .5,3-.3,2.9M1653.7,846.3l2.3-.4M1514.1,865.6l-1.7-3.9-.8-3.5M1514.1,865.6l-2.1,1.3-.8,2.9M1511.6,858.2l-1.8,3.8-1.4,3.9M1508.4,865.9l1.2,3.5M1511.2,869.8l-1.6-.4M1513,853.4l-.1,.5-1.3,4.3M1503.2,864.9l1.7-6.9-.1-1.6M1503.2,864.9l2.6,.4 2.6,.6M1550.4,857.1l-.3,2M1560.1,855.8l-1.3,1.9-2.2,4.4M1556.3,862.5l-1.7-1.8-2.6,.2-1.9-1.8M1532.5,875l2.2,.2 2.2,.3M1532.5,875l-2.2,4.2-.9,4.2M1529.4,883.4l1.9-.1 2,.4M1533.3,883.7l1.4-2.2 1.8-2.6M1536.5,878.9l.4-3.4M1535,866.8l-.7,4.1-2.1,3.4M1535,866.8l-1.8-3.5M1533.2,863.3l-.6,.3M1532.6,863.6l-1.8,3.8-1.6,3.6M1532.2,874.3l-2.6-1.1M1529.6,873.2l-.4-2.2M1540.1,862.6l-2.6,4.1M1537.5,866.7l-2.5,.1M1534.8,857.4l-.4,1.3-1.2,4.6M1540.1,862.6l1-5.1M1550.6,946.4l2.2-3.9M1563.8,954.9l-.5-4.4-.9-3.8M1552.8,942.5l3.6,2.5 6,1.7M1572.5,953.7l-1.8-3.3-.5-3.3M1562.4,946.7l4.1,0 3.7,.4M1643.1,941.3l.4,2.9-.9,2.5M1643.1,941.3l-2.4-1.6M1640.7,939.7l-2.1,1.9-2.8,.6M1635.8,942.2l1.6,2.1 1.3,2.1M1638.7,946.4l3.9,.3M1649,942l-.2,2.5 .7,2.4 .5,2.3M1649,942l-5.9-.7M1650,949.2l-2.3,.2M1646.9,949.2l-4.3-2.5M1651,940.4l-2,1.6M1640.5,939.3l2.2-1.9 1.4-2.7 2.5-2.5M1648.7,932.7l-2.1-.5M1651,940.4l-1.3-3.7-1-4M1635.7,950.9l1.1,2.1 1.2,2.3M1635.7,950.9l1.3-2.5 1.7-2M1266,1304.9l-3.7-1.4M1262.3,1303.5l-1.3,.3M1261,1303.8l.1,3.2M1260.8,1307.1l-3.4-2.4M1403.6,1071.9l0-.3-.9-2.8-.6-2.6 .1-2.8M1396.4,1066.6l.4-.3 .4-.3M1411.8,1059.7l-3.6-.3M1411.8,1059.7l1.4,1.4M1413.2,1061.1l.3,2.6-.4,2.7 0,.3M1410.5,1068.2l-.5-.2-2.1-2-2.1-1.6-2.3-1.1M1403.5,1063.3l2.1-2.1 2.6-1.8M1410,1053.8l-.9,2.8-.9,2.8M1413.7,1051l-3.7,2.8M1418.4,1053.2l-2.8-.7-1.9-1.5M1418.3,1053.4l-3.5,3.3-3,3M1421.7,1054.9l-.4-.4-3-1.1M1421.4,1060.5l-1.2,0-3.5-.1-3.5,.7M1419.7,1082.4l-2.5-2.5M1402.2,1063.4l1.3-.1M1406.5,1052.1l1.4,1.4 2.1,.3M1403.4,1055.2l.4-.2 2.7-2.9M1425.5,1055l-.4-1.3 .6-3.4M1426.7,1055.5l.9-1.8 2.5-2.7M1425.7,1050.3l3.3-2.6M1430.1,1051l-1.1-3.3M1418.4,1053.2l3.7-3.4M1422.1,1049.8l3.6,.5M1435.6,1051.6l-1.7-.4-3.8-.2M1377.9,1038.9l.6-.7 2.2-2.4 1.7-2.7 .7-3.2M1381.3,1041.3l1-.5 2.6-2.7 3-2.1M1383.1,1029.9l3,.4 3-.9M1387.9,1036l.6-3.3 .6-3.3M1360.4,1029.7l1,2 1,3.3 .3,1.2M1383.1,1029.9l-1.6-3.3M1381.5,1026.6l-3.1,.8-2.3-.1M1409.3,920.3l1.5-1.3 3.2-2 2.1-3.3M1410.5,922.2l.3,0 2.5,1.1 2.4,.1M1416.1,913.7l1.7,4.4M1417.8,918.1l-.8,3.4M1415.7,923.4l1.3-1.9M1583.3,947.9l-1.4-.1-6.4-1.3M1575.5,946.5l-5.1,.3M1625.7,952.7l1.1-.8 2.6-2.3 2.8-1.1M1635.7,950.9l-3.5-2.4M1529.7,963l-.9-2.4-3.3-2.9M1526.5,966.2l-2-.9M1524.5,965.3l-4.1-4.6M1525.5,957.7l-3.1,.8-2,2.2M1532.8,955.6l-7.3,1.5M1525.5,957.1l0,.6M1839.8,825.6l-1,.8M1838.9,822.1l.9,3.5M1838.9,822.1l-4.7-.3-5.1,.2M1831.7,825.4l-2.6-3.4M1831.7,825.4l3.3,1.2M1835,826.6l3.8-.2M1828.6,821.8l-3,1.7-2.9,1.4M1824.8,819.2l3.8,2.6M1821.8,818.7l-.1,2.7-.4,2.5M1824.8,819.2l-3-.5M1822.7,824.9l-1.4-1M1821.8,818.7l-2.6-2.8M1814.6,817.1l1.6,2 1.5,2.4 2.7,2M1820.4,823.5l.9,.4M1929.3,394.4l-1.8-3.8M1929.3,394.4l-2.5,4.8M1926.8,399.2l-3.5,.2M1927.5,390.6l-3.5,3.9M1924,394.5l-.7,4.9M1929.9,394l-.6,.4M1927,386.4l.5,4.2M1922,406l1.2,.2 3.4,.2M1921,403.9l2.3-4.5M1928.7,404l-1.9-4.8M1920.4,386.5l2,3.8M1922.4,390.3l1.6,4.2M1922.4,390.3l-2.6,4-1.6,2.7M1841.4,531.1l2.6,1.8 .9,2.2M1833.3,535l.9-.6 4.3-1.6 2.9-1.7M1833,536.7l3.9,.1 4.4,.7M1841.3,537.5l3.6-2.4M1834.1,528.9l2.1,.4 5.2,1.6M2005.2,502.9l2.4-.2 2.3,1.1 2.5,.5 2.9-.9 2.5,.5 2.4,.8M2020.2,504.7l-.2,2.9 .6,3.1 0,3.6 .1,4.1M2005.2,502.9l-.1,3.1 .3,3.1-.6,3.3-.7,3.1 .1,3M2004.2,518.5l2.7-.2 3.1-.8 3-.7 2.8,.6 2.5,1.3 2.4-.3M2002.7,538.5l-1.4,.3-3,.2M1998.3,539l-1,6.4 1.5,8M1987.9,549.2l.2-5 4.4-7.3M1996.8,555.2l-.8-4.7-2.9-5.1-1.2-4.1 .6-4.4M1880.6,842.9l-1.7,0-6.1,.6-5.1-.1M1874.6,833.8l-.6,0-3.6,1.6-3.3,.4-2.7,.7M1867.7,843.4l-1.1-.4M1866.6,843l-2-3.1-.5-3M2068.5,493.7l-1.6-6.7 1.2-5.3M2068.1,481.7l3.6,3.2M2078.6,493.8l-4.3-.6-2.1,2.1-2.9-.3M2069.3,495l-.8-1.3M2078.6,493.8l1.1-1.5M2071.7,484.9l8,7.4M2078.6,493.8l.4,4.1 0,3.7 .2,2.4M2069.3,495l.7,5.7-.4,4.7 .2,.6M1775.2,793.1l-1.3,2.5M1775.2,793.1l1.8-2.7 2.2-1.4 1.6-2.7M1775.6,799l1.9,1.6 2,1.1 2.1,1.8M1775.6,799l-1.7-3.4M1785.4,797.2l-2.3,2.7-1.5,3.6M1785.4,797.2l-1.4-3.7-1.1-3.9-1.8-2.9M1775.3,805.7l.5-3.2-.2-3.5M1781.8,807.3l-.2-3.8M1779.5,809.6l2.3-2.3M1788.9,799.7l-3.5-2.5M1788.9,799.7l3.2-1.1M1794.3,788l-4.3-1.6-3.6,0-2.9-.6-2.4,.9M1794.3,788l2,4.7M1796.3,792.7l-2,3.2-2.2,2.7M1793.6,780.9l-2.1-3M1782.2,781.3l2.6-1.3 3-1.7 3.7-.4M1794.3,788l-1.3-3.8 .6-3.3M1780.8,784.4l0,1.9M1815.6,809.9l-1.5-1.8-1.8-2.3M1807.5,812.5l3.3,.2 3.3-.1M1807.5,812.5l-1.2-2.2M1806.3,810.3l1.9-1.6 1.4-2.1 2.7-.8M1785.3,818l3.4,.7 2.9,1.1M1785.3,818l.4-3.3 1.3-3.1M1787,811.6l3.6-.1M1790.6,811.5l2,4.2-.2,3.8M1792.4,819.5l-.8,.3M1781.8,807.3l2.5,1.5 2.7,2.8M1779.4,811.9l1.9,3.4 2.3,3M1783.6,818.3l1.7-.3M1788.9,799.7l1.1,5.4 1.9,4.9M1791.9,810l-1.3,1.5M1797.1,813.6l.1,4.3M1797.1,813.6l1.4-1.6 1.4-1.6M1797.2,817.9l2.4,0 2.3-.1M1801.9,817.8l.2-2.9 0-3.1M1802.1,811.8l-2.2-1.4M1794.6,819.9l-2.2-.4M1796.4,819.3l-1.8,.6M1791.9,810l2.9,2.3 2.3,1.3M1796.4,819.3l.8-1.4M1797.8,806.4l2.1,4M1792.1,798.6l2.2,4.4 3.5,3.4M1797.8,806.4l1.3-2.7 2.4-1.1M1805.9,810l-2.3-3.1-2.1-4.3M1805.9,810l-2,1-1.8,.8M1807.5,812.5l-.9,2.4 .3,2.3M1801.9,817.8l.7,1.1M1802.6,818.9l2-1.2 2.3-.5M1811.4,818.9l-2.4,.1M1811.4,818.9l3.2-1.8M1806.9,817.2l2.1,1.8M1816.4,835l-2.3-1.6M1816.4,835l-.6,1.8M1813.5,837.2l-.8-.3M1815.8,836.8l-2.3,.4M1814.1,833.4l-1.2,.6M1812.9,834l-.2,2.9M1809.4,840.5l3.7-1.2M1813.5,837.2l-.4,2.1M1809.4,840.5l.2-2.9M1809.6,837.6l3.1-.7M1815,830.2l2.3-2.1M1814.5,830.3l-4.3-1.2M1817.3,828.1l-2.1-3.3M1810.4,825.4l-1.9,2M1810.4,825.4l4.2-.8M1814.6,824.6l.6,.2M1808.5,827.4l1.7,1.7M1809,819l-1.1,2.4M1807.9,821.4l1.1,2.1 1.4,1.9M1811.4,818.9l.9,2.9 2.3,2.8M1820.4,823.5l-3,0-2.2,1.3M1823,799.1l-3.2,1.4-2.5,2.2M1823,799.1l1.5,3.4 .6,3.3-.6,3.2M1817.3,802.7l2.5,2.6 2.1,2 1.7,1.9M1824.5,809l-.9,.2M1815.7,802.1l1.6,.6M1815.7,802.1l.4-3.6M1822.9,797.9l-2.3-1.1M1822.9,797.9l.1,1.2M1816.1,798.5l1.9-1.5 2.6-.2M1812.3,805.8l-.8-1.9M1815.7,802.1l-2.7,0M1813,802.1l-1.5,1.8M1801.5,802.6l3.8,.8 3.9-.5M1800.4,800.2l1.1,2.4M1800.4,800.2l2.2-.6 1.7-1.9M1804.3,797.7l4.9,5.2M1809.2,802.9l2.3,1M1797.1,889l3.3-.1 2.6-.5M1797.1,889l-3.2,1.7M1795.4,901.4l-.6-2.1-1.3-2.6-1.4-2.4M1792.1,894.3l1.8-3.6M1747.9,876.1l2.2,2.4 2.6,1.5 2.8,1.2M1755.8,882l-.3-.8M1746.9,883.9l1,3.9 .9,3.6M1747.9,876.1l-.5,4-.5,3.8M1755.8,882l-1.6,4-1.9,4.3M1752.3,890.3l-3.5,1.1M1740.1,892.8l3-.4 2.4,.3 2,1.3M1739.9,893l.3,3.4-.2,3.4 .1,.4M1747.5,894l.4,3.7 .1,3.5 0,.1M1759.7,845.9l-.1,6M1766.4,841.8l-3.3,1.6-3.4,2.5M1766.4,841.8l.9,3.6M1767.3,845.4l-.3,3.8M1767,849.2l-3.6,1.6-3.8,1.1M1789.7,847.6l1.9-.8M1789.7,847.6l-3.4-3.7M1793.8,840.9l0,.9M1793.8,840.9l-4.6-.1M1789.2,840.8l-2.9,3.1M1793.8,841.8l-1.2,2.3-1,2.7M1791.6,846.8l3.6,2.6M1795.2,849.4l-.4,2.7M1789.7,847.6l-1.1,2.8M1788.6,850.4l2.6,1.3 1.8,2.8M1793,854.5l1.8-2.4M1776.2,876.7l-2.1-1.5M1776.2,876.7l2.9-4.6M1773,868.4l1.1,6.8M1775,865.6l-2,2.8M1775,865.6l2.8,1.1M1779.1,872.1l-1.3-5.4M1781,845.5l2.5-1 2.8-.6M1788.6,850.4l-1.4,1.6M1781,845.5l0,3.9M1787.2,852l-3.4-1-2.8-1.6M1775,865.6l1.7-8.2M1776.7,857.4l3.3-4.5M1777.8,866.7l3.2-4.4M1781,862.3l.6-1.9M1781.6,860.4l-1.3-3.1-.3-4.4M1773.3,813.6l2.2,2.7 2.4,2.7M1783.6,818.3l-1.6,2.5M1777.9,819l3.6,1.8M1768.5,853.9l-1.5-4.7M1771,839.7l-3.7,5.7M1771,839.7l1.9,2.1M1768.5,853.9l2.4-3.4 2.4-1.6M1772.9,841.8l.4,7.1M1807.9,821.4l-2.2,.9-1.6,1.5M1802.6,818.9l-.4,2.5M1802.2,821.4l1.9,2.4M1806.9,827l1.6,.4M1806.9,827l-2.2-1.5M1804.7,825.5l-.6-1.7M1731.3,831.3l2.5-3 2.8-3.3M1729.1,830.3l1-3.2M1739.2,814.8l-1.1-.4M1730.1,827.1l2.6-3.4 1.1-3.8M1738.1,814.4l-2,2.8-2.3,2.7M1740.2,785.8l.3,2.8-1.4,2.3M1740.2,785.8l-1.4-1.3M1732.4,787.7l3.3,1.4 3.4,1.8M1732.2,790.7l-4.5,1.6M1732.2,790.7l.2-3M1753.3,810l.2-2 .9-1.7M1753.3,810l-2.2,1.4M1751.1,811.4l-2.2-1.3-2.1-1.5-1.7-1.8M1754.4,806.3l-2.8-1.9M1745.1,806.8l3.2-1.6 3.3-.8M1750.1,789.8l-4.6-2.3M1750.1,789.8l-3.9,2.4M1746.2,792.2l-3.7-.6M1742.5,791.6l2.3-1.8-.1-2.5M1750,785.1l-4.5,2.4M1740.2,785.8l4.5,1.5M1759.4,814.8l-1.8-1.8-1.8-1.9-2.5-1.1M1759.4,814.8l1.4-.1M1760.8,814.7l1.3-.8M1762.1,813.9l.7-2.7-.7-2.7-.5-2.4M1754.4,806.3l2.3-.8M1761.6,806.1l-2.5-.2-2.4-.4M1768.2,815l-3.1-1.1-3,0M1768.2,815l1.9-1.3 2.3-.5M1771.6,808l-3.4-1.9-3.4-1.8M1761.6,806.1l3.2-1.8M1555.5,876.5l3.5-2.4 4.3-2.6M1555.5,876.5l-.3-4.1 .2-4.4 .5-4.7M1555.9,863.3l.4-.8M1556.6,862.1l2.2,1.2 2,2.1 3.6,0M1563.3,871.5l1.3-3.3-.2-2.8M1573.9,853.2l-1.2,2.6-2.1,3.8M1582.9,863.2l-4.2,1.9-3.2,2.1M1575.5,867.2l-2.9-4-2-3.6M1570.6,859.6l-3.3,2.4-2.9,3.4M1615.9,875.2l-2.4,4.6M1615.3,872.4l.6,2.8M1602.5,873.3l1.7,3.2 1.5,3.1M1605.7,879.6l4.2-.6 3.6,.8M1656,845.9l5.3,.6M1661.3,846.5l.4-2.8 1.4-2.7 1.6-2.8M1656.9,837.1l4.2-1 3.4-.8M1664.7,838.2l-.2-2.9M1703,785.6l-.9,3.5-2.9,2.9-1.6,3M1697,786l-2.6,1.9-2.7,1.4M1697.6,795l-3.1,.3M1694.5,795.3l-1.6-2.8-1.2-3.2M1691.1,781.1l-3.9,.6-2.3,1.1M1691.7,789.3l-4.9-1.2-.2,0M1706.4,794.1l-.1,.4-2.1,2.4M1697.6,795l5,2.3M1704.2,796.9l-1.6,.4M1724.3,795.4l3.9,3.3M1728.2,798.7l-2.1,2.5M1716.4,794.6l.3,1M1719.5,798.7l3.1,1.1 2.7,1.6M1725.3,801.4l.8-.2M1719.6,804.8l3.4,0M1725.3,801.4l-2.3,3.4M1718.4,810.4l-.8-3.2M1718.4,810.4l4-.6M1723,804.8l-.6,5M1727.8,792.7l4.4,3.2M1732.2,795.9l-1.7,2.7M1728.2,798.7l2.1,0M1716.3,814.6l-3.1,1.7M1716.3,814.6l2.1-4.2M1713.2,816.3l-1.6-1M1715.7,806.9l-1.7,3.2-2.4,2M1711.6,812.1l0,3.2M1713.4,824.3l2.1-2.8M1713.2,816.3l.4,2.9 1.9,2.3M1703.9,823.1l5,.8 4.5,.4M1703.9,823.1l.6-5M1711.6,815.3l-3.3,.9-3.8,1.9M1721.6,826.8l-3.6-1.5-4.6-.8M1721.6,826.8l-4.5,4-2.8,4.2M1712,834.6l1.8,.9M1712,834.6l-1.2-4.2M1710.8,830.4l1.2-3.1 1.4-2.8M1714.3,835l-.5,.5M1712.8,841l1-5.5M1708.5,847.9l-1.2-2.2-.5-3.6M1706.8,842.1l2.4-3.3 2.8-4.2M1725.8,832.6l-3.6,.2-4.6,1.6-3.3,.6M1730.1,827.1l-1.8-1-.8-2.3M1733.8,819.9l-1.3-2.7-2-2M1730.5,815.2l-1.1,1.2M1727.5,823.8l1.3-3.8 .6-3.6M1721.6,826.8l3-2.1M1727.5,823.8l-2.9,.9M1752.7,855.6l3.2-1.6 3.5-1.6M1750.8,863.2l.9-3.9 1-3.7M1750.8,863.2l-.3,3.5M1750.5,866.7l2.5-.6 2.5-.1M1759.4,852.4l.3,5.4-1,5M1755.5,866l3.2-3.2M1731.8,833.9l2.4,.1 2.8-.3 3-.5M1743.7,822.5l.3,.8M1744,823.3l-2.4,5.5-1.6,4.4M1721.6,885.4l1-.3M1718.4,875.1l3.9,1.1 2.7,2.2M1725,878.4l-.8,3.9-1.6,2.8M1711.2,890.6l.2,2.6-.8,2.4M1713.2,895.9l.4,0 3.3-.3M1718.2,888.5l1,1.7M1714.8,887.9l-1.4,1.8-2.2,.9M1716.9,895.6l1.9-2.5 .4-2.9M1748.8,891.4l-1.3,2.6M1740.1,892.8l1.8-5M1746.9,883.9l-2.1,.4M1741.9,887.8l2.9-3.5M1747.9,876.1l-.3-3.4M1747.6,872.7l-2.2,.4-2.3,.2M1743.1,873.3l-1.7,3.5-1.6,2.9M1744.8,884.3l-2.5-2.2-2.5-2.4M1615.9,875.2l2.7,2 1.9,2.9M1617.3,887.6l2.1-2.1M1619.4,885.5l1.2-3.9M1614,881.9l-.5-2.1M1617.3,887.6l-3.3-5.7M1620.5,880.1l.1,1.5M1621,871.4l5,3.5M1616.2,871.3l4.8,.1M1620.5,880.1l4.9-3.1M1626,874.9l-.6,2.1M1686.5,908.7l4.4,.5 4.4,.1 2.9-.2M1686.5,908.7l-.8-4 .2-1.2M1698.4,907.6l-1.3-4.2M1702.5,855.4l-2.2-1.4-3.1-.4-2.4-1.5M1697.1,859.1l3.2-1.2 2.2-2.5M1695.1,859.4l2-.3M1695.1,859.4l-1.5-2-2.5-1.5M1694.8,852.1l-3.7,3.8M1694.5,864.7l-3.4,1.5M1691,861.7l1.9,1.4 1.6,1.6M1690.5,861.8l-1.1,1.8M1689.4,863.6l1.7,2.6M1647.5,878.2l3.6,.5M1647.5,878.2l.6-2.6-1.6-3.2M1651.1,878.7l2.3-1.6 1.4-1.8M1646.5,872.4l8.3,2.9M1658.5,871.4l-7.4-2.4M1644.8,871.1l3.1-.9 3.2-1.2M1644.8,871.1l1.7,1.3M1658.5,871.4l-.1,2.4-1.9,1.7M1656.5,875.5l-1.7-.2M1665.9,880.3l-2.8,4.2M1665.9,880.1l-1.9-.7-1.5-1.7M1661.1,884l2,.5M1661.1,884l-.7-2.3-.6-2.7M1662.5,877.7l-2.6,1M1668.1,886.3l-4.5,1M1671.5,881.2l-2.2,2.6-1.2,2.5M1671.5,881.2l-2.7-.7-2.9-.2M1663.6,887.3l-.5-2.8M1667.8,874l-3-1.8M1667.8,874l.5,2.1M1662.7,871.9l2.1,.3M1668.3,876.1l-2.4,4M1662.7,871.9l.2,2.9-.4,2.9M1656.2,880.9l3.6-1.9M1656.2,880.9l-1.1,1.8M1655.1,882.7l2.1,2.4M1657.2,885.1l3.9-1.1M1658.5,871.4l2.6-.5M1656.5,875.5l3.4,3.2M1661.1,870.9l1.6,1M1656.2,880.9l-5.1-2.2M1673,871.4l-4-2M1667.8,874l2.3-1.4 2.9-1.2M1664.8,872.2l1.4-2.7M1669,869.4l-2.8,.1M1648.6,863.7l2.5,5.3M1648.6,863.7l4.3-.7M1661.1,870.9l-1.4-2.9M1652.9,863l3.8,2 3,3M1514.9,853.5l.2,.8 .7,4.2 1.8,3.9M1514.1,865.6l.9,.2M1517.6,862.4l-.7,2.2M1515,865.8l1.9-1.2M1522,854.2l-.5,1-1.3,4.7M1517.6,862.4l1.9-1.4M1520.2,859.9l-.7,1.1M1520.2,859.9l4.3-2.3 2.6-1.1M1516.9,864.6l5.6,5.4M1522.5,870l2.1-1.2M1524.6,868.8l.2-5.2M1519.5,861l5.3,2.6M1503.2,864.9l-.8,5.6M1510.1,872.1l-.5-2.7M1510.1,872.1l-2.4,1.6-2.1,2.1M1505.6,875.8l-3.2-5.3M1496,859.3l.3,2.8-.8,6.2 1,4.8M1502.4,870.5l-3,.8-2.9,1.8M1529.6,873.2l-2.3,2.8M1529.4,883.4l-2.3,1.5M1532.5,875l-.3-.7M1527.1,884.9l0-4.2 .2-4.7M1550.2,868.8l2.8-3.3 2.9-2.2M1550.2,868.8l-.5,3.6-1.4,3.7M1548.3,876.1l1.7,1.4 1,2.5M1555.1,876.9l-4.1,3.1M1544.4,861.9l4.4-.3M1544.1,862.4l-1.5,4.5-1.9,4.2M1548.8,861.6l-1.5,6.2M1547.3,867.8l-3.1,2.4M1544.2,870.2l-3.5,1.1M1545.8,857.5l-1.4,4.4M1540.1,862.6l4-.2M1550.1,859.1l-1.3,2.5M1537.5,866.7l2.2,1.8 1,2.6M1550.2,868.8l-2.9-1M1543.3,878.1l5-2M1543.3,878.1l1.3-4.3-.4-3.6M1536.9,875.5l3.8-4.2M1541.5,879.6l-3,.2-2-.9M1543.3,878.1l-1.8,1.5M1536.1,946.8l1.5-5 .5-4.3M1531,949.9l-1.8-.3M1537.8,937.5l-3.4,3.4-4.2,2.4M1530.2,943.3l-1.1,2.7M1529.2,949.6l-.1-3.6M1640.5,939.3l-2.6-2.4-2.7-1.9M1646.6,932.2l-3.3-1.9M1643.3,930.3l-4,1-3.1,1.5M1636.2,932.8l-1,2.2M1657.2,885.1l-1.5,1.7M1655.7,886.8l2.6,1.2 1.7,1.9M1663.6,887.3l-1.4,2.2M1660,889.9l2.2-.4M1668.1,886.3l1.8,1.7 2.8,.9M1666.2,895.2l-1-2.2-1.8-1.7-1.2-1.8M1666.2,895.2l1.9-.3M1668.1,894.9l3.3-2.6 1.3-3.4M1675.9,921.4l.5-3.7-1.4-3.9-.2-3.6M1675.9,921.4l2.8,.4 2.2,1.1 2.3,.5 2.4,.6M1685.6,924l.2-3.4 .3-3.7-1.3-4M1684.8,912.9l-3-.6-3.2-1.5-3.5-1.2M1675.1,909.6l-.3,.6M1652.7,887.8l3-1M1652.7,887.8l-1.9,2 .4,2.1M1660,889.9l-3.2,1.4-3.2,2M1651.2,891.9l2.4,1.4M1259.3,1277.4l1.9,.7M1260.4,1281.8l3.4-.9M1263.8,1280.9l-2.6-2.8M1261.9,1301.7l.4,1.8M1266.1,1304.9l-.6-2.9M1265.5,1302l-2.8-.9M1351.8,1195.1l1,2.2M1350.3,1190.1l1.5,5M1267.2,1301.1l-1.7,.9M1262.2,1301.2l-1.5-1.7M1261.9,1301.7l-3.6-1M1260.7,1299.5l-2.7,.5M1377.2,1062.2l.3-.3 2.8-1.8 1.9-2.6 2.2-1.9M1381.6,1048l.1,.2 1.1,3.2 1.8,3M1384.4,1055.6l.2-1.2M1388.1,1063.4l.5-1.3 1.8-3.3M1384.4,1055.6l2.9,2 3.1,1.2M1392.1,1066.9l.1-.1 0-3.1 1.1-3.3 1.4-3.5M1390.4,1058.8l4.3-1.9M1387.8,1012.2l.1,1.9 .6,3.9 1.5,3.1M1382.3,1021.8l.7-3.9M1382.3,1021.8l2.6,.1 2.4,1.5 2.7,.9M1390,1021.1l0,3.2M1389.1,1029.4l1.4-3.5M1381.5,1026.6l.8-4.8M1390.5,1025.9l-.5-1.6M1414.1,1050.1l-.4,.9M1414.1,1050.1l-1.6-1.4-.6-2.5-1.9-1.5M1406.5,1052.1l1.2-3.9-.1-3.7M1407.6,1044.5l2.4,.2M1353.3,954.1l0,0 1.7,2.5M1347.2,952.6l.1,.7-.4,4 1.3,3.8M1348.2,961.1l4.2-.3M1352.4,960.8l2.6-4.2M1358.4,949.5l2,.9 .7,2.5 1.4,2.2M1355,956.6l7.4-1.4M1378.2,1017.8l-1.4,1M1374,1022l2.8-3.2M1443.8,1001.6l-1.5-2.8-2.2-2.6-1.7-2.7M1443.8,1001.6l-3.4,4.1M1440.4,1005.7l-3.2-1.2-2.9-1-2.4-1.5M1434.4,992.7l4,.8M1434.4,992.7l-1.2,3.7-1.6,3.9M1431.6,1000.3l.3,1.7M1449.3,987l-2.4,2.5-2.8,2.3M1449.3,987l1.8-.1M1451.1,986.9l2.2,2.7 3.3,2.4 2.1,1.5M1444.1,991.8l2,2.8 3.1,2.4 1.9,2.7M1451.1,999.7l1.4,.5M1438.4,993.5l2.6-1.2 3.1-.5M1443.8,1001.6l4.2-.8 3.1-1.1M1459.5,982.7l2.7,1.8 3,1.1M1459.5,982.7l2.2-2.1 2.6-2.1 1.8-2.2M1454.7,982.7l-2.3,1.7-1.3,2.5M1454.7,982.7l2.3-.4 2.5,.4M1420.4,928l-.1-1.2M1417,921.5l1.2,3.5 2.1,1.8M1420.4,928l-.8,3.8M1415.7,923.4l-.8,4.2M1418.5,931.7l-1.4-1.9-2.2-2.2M1408,928.6l1.2,.5 2.3,.8M1411.5,929.9l3.4-2.3M1635.8,942.2l-3.4-1.1M1635.2,935l-3,.1-2.7,1.1M1632.4,941.1l-.9-2.6-2-2.3M1632.2,948.5l-.7-2.9-.7-2.8M1632.4,941.1l-1.6,1.7M1496.7,990.2l-1.6-2.2-2.3-2.5M1492.8,985.5l.8-1.2M1493.6,984.3l2.8,0 2.6,.3M1499,984.6l2.1,2.9 3.3,3.3 .4,.2M1520.7,966.5l3.8-1.2M1520.7,966.5l-1.1,2.7M1520.2,972.7l-.6-3.5M1517.4,976.4l-1.1-1.9-2.5-3.2M1519.6,969.2l-5.6,1.8M1520.7,966.5l-3.9-1.9M1514,971l.6-3.9M1516.8,964.6l-2.2,2.5M1841.2,826.8l.5,3.5M1841.2,826.8l4.1,1.2M1841.7,830.3l3.1,1.3M1844.8,831.6l.5-3.6M1853.9,839.9l-2.5-1.7-2.1-1.8M1853.9,839.9l3.4-2 2.2-2.4M1849.3,836.4l4.2-.7 3.7-1.3M1859.5,835.5l-1.7-.9M1857.2,834.4l.6,.2M1842.1,836.3l-.9-2.2M1842.1,836.3l2.7-.5 3.5,.3M1841.2,834.1l2.2-.7 2-1.1M1848.3,836.1l-1.9-3.4M1846.4,832.7l-1-.4M1848.9,836.3l-2.1,1.6-.6,1.9M1844.4,838.9l-2.4-2.5M1846.2,839.8l-1.8-.9M1844.8,831.6l.6,.7M1841.2,834.1l-2.7-1.9M1841.7,830.3l-3.3,.7M1838.5,832.2l-.1-1.2M1839.8,825.6l1.4,1.2M1838.8,826.4l-1,1.9 .2,2.2M1838.4,831l-.4-.5M1835,826.6l-.4,2.8M1838,830.5l-3.4-1.1M1779.2,765.5l1.8,.2 3.4-1.2 4,0M1788.4,764.5l-1.7-2.5-1-2.8 .3-3.2-.2-1.3M1763.3,727.8l.7,.2 3.4,.9 3.1,1.2 2.8,1.4 1.4-.3M1935.8,411.6l1.6-4.5 .3-3.5M1932.3,410.6l3.5,1M1937.7,403.6l-3.7,.3-3.6-.5M1933,397.5l-.1,.9M1930.4,403.4l2.5-5M1938.8,391.3l1.7,1.1M1944.9,391.8l-4.4,.6M1887.2,562.2l-.1-2.7M1891.4,552.5l-1.1,1.6-1.6,2.6-1.6,2.8M1890.3,551.5l-2.5-.1-3.8,.6M1887.1,559.5l-1-1.8-1.9-1.5M1884.2,556.2l-.2-4.2M1844.3,518.8l3.9-.3 3.1-1.7M1851.3,516.8l.1-3.1-.2-2.9M1973,478l1.9-2.9 2.5-2.5 1.7-3.2M1973,478l-2-2.3-2.4-2.3-3-2.6-4.7-3.7M1979.1,469.4l-2.3-1.8-3.5-1.4-5-.3-5.7-2.2M1962.6,463.7l-2.9,2M1960.9,467.1l-1.2-1.4M1851.1,529.8l5.3-1.1 4.5-1.7M1851.1,529.8l-2.8-.6-2.3-1.3M1845.5,526.9l.5,1M1845.5,526.9l2.1-1.6 .6-2.3M1848.2,523l3.7,.2 3.9-.9M1855.8,522.3l2.8,2.3 2.3,2.4M1854.4,534.4l-3.6-1.1M1854.4,534.4l3.6,.2M1850.8,533.3l.3-3.5M1861.7,527.3l-.8-.3M1844.9,535.1l.6,0M1850.8,533.3l-2.7,1-2.6,.8M1841.4,530.9l2.9-1.1 1.7-1.9M1844.3,518.8l2,2.2 1.9,2M1851.3,516.8l2.3,2 3.6,.9M1857.2,519.7l-1.4,2.6M1878.2,557.3l-2.6,3-2.5,3.3M1878.2,557.3l3.7,1.9 1.5,2.6 .3,.4M1873.5,564.2l-.4-.6M1996.7,511.5l-.3,2.9 .4,2.6-.8,2.9M2004.9,502.4l-1.6,2.9-1.9,2.4-2.1,2-2.6,1.8M2004.2,518.5l-2,1.4-1.9,1.5M1996,519.9l2,1.1 2.3,.4M2005.9,531.2l-1.2-.4-2.9-.3-2.2-1.2M2000.3,521.4l.5,2.5-.1,2.6-1.1,2.8M1998.3,539l-1-3 0-3.6M1999.6,529.3l-2.3,3.1M1992.5,536.9l1.5-2.3M1994,534.6l3.3-2.2M1934.2,640.5l-.8,.6-3.1,2.2-3,.8M1927.3,644.1l-1.2,2.2-.6,2.3-.6,2.1 .6,2.6M1939.1,659.4l-.1,0-3.1-1.7-3.5-1.4-3.7-1.4-3.2-1.6M2071.7,484.9l2.1-2.3 5.4,.3 4.1-1.8M2083.7,492.6l-4-.3M2083.7,492.6l1.6-2.9 2.2-2.5 2.6-2.3M2090.1,484.9l-6.8-3.8M2090.8,499.8l-2.1-1.8-2-2.7-3-2.7M2090.1,484.9l3.9,.2 4.3-1.7 2-1M1937,412.3l2.4,1.7 1.2,4.3 3.2,1.5M1937,412.3l3.1-3.3 3.1-.4 2.9-1.7M1946.1,406.9l-1,6.2-1.3,6.7M2083.3,481.1l-4.8-3.5-1.6-3.8M2076.9,473.8l-3.8,0-2.7,1.8-2.8,.8M2068.1,481.7l-.8-4.8M2073.3,461.2l-.3,3.9M2073.3,461.2l-1.2-3.2-.4-2.5M2073,465.1l-3.3,1-3.3,1.3M2067.2,457.7l-.5,1.4-3,2.7-2.7,2.9M2061,464.7l3,1.1 2.4,1.6M2081.5,448.5l.4,2.2 1.2,4.1M2083.1,454.8l-3.5,2-3.3,2.1-3,2.3M2076.9,473.8l.3-2.9M2077.2,470.9l-2.8-2.7-1.4-3.1M2067.6,476.4l-.2-4.7-1-4.3M1993.9,445.4l-.3-5.6 1.6-5.1 .5-3M1993.9,445.4l-5.4-4.2-4.9-5.9M1983.6,435.3l-.9-2.1M1982.7,433.2l.8-4.1 .4-4M1982.7,433.2l-4.4-2.9-5.2-.6-4.2-.9M1976.8,420.4l-1.9,1.2-2.5,3.8-3.5,3.4M1925.4,413.5l-.7,.4M1756.1,785.7l-.6,3-1.6,2.3M1756.1,785.7l2.6,.3 2.3,1M1761,787l.5,3.1-.9,2.8M1760.6,792.9l-2.7-.1-2.7,.7M1753.9,791l.7,2.3M1754.6,793.3l.6,.2M1750.1,789.8l3.8,1.2M1755.4,784.9l.7,.8M1763,782.5l-.6,3.2M1763,782.5l2.6,0 2.8-1.4 2.8-1M1762.4,785.7l2.1,2 2.7,.5M1767.2,788.2l2.1-1.6 1.5-2.9M1771.2,780.1l-.4,3.6M1761.2,775.7l.4,3.4 1.4,3.4M1761,787l1.4-1.3M1772.1,778.5l-.9,1.6M1775.2,793.1l-1.1-3.4-2-2.6-1.3-3.4M1839,777.4l-1.3,8.1M1839,777.4l3.2-1.2 2.9-.6 2.6,1.1M1837.7,785.5l2.7,.2 1.6,2.3 2.3,.5M1844.3,788.5l2-3 1.3-3.6M1847.7,776.7l-.1,5.2M1804.4,784.8l1.5,3.5 1.1,3M1804.4,784.8l-1.2,2.5-2.3,1.2-1.4,2.4-1.7,2.4M1797.8,793.3l.4,.6M1798.2,793.9l3,.7 3.1,0M1807,791.3l-2.7,3.3M1793.6,780.9l3.6,.7 3.3-.1 3.4,1.6M1803.9,783.1l.5,1.7M1796.3,792.7l1.5,.6M1800.4,800.2l-1.3-3.3-.9-3M1804.3,797.7l0-3.1M1813,802.1l-2.6-4.7-1.5-4.5M1808.9,792.9l-1.9-1.6M1784.1,823.8l-2.1-3M1784.1,823.8l3.6,1.6M1791.6,819.8l-1.4,2.3-.3,2.4M1787.7,825.4l2.2-.9M1794.6,819.9l.2,2.4-.7,2.2M1794.1,824.5l-1.2,1.2M1789.9,824.5l3,1.2M1788.2,888.8l4.6-.7M1787.7,884.8l.5,4M1787.7,884.8l1-.9M1792.8,888.1l1.5-5.2M1788.7,883.9l2.7,.2 2.9-1.2M1792.8,888.1l1.1,2.6M1788.2,888.8l-1,3.1M1792.1,894.3l-2.7,0M1789.4,894.3l-2.2-2.4M1752.3,890.3l1.2,2.2 1.8,2.1M1755.3,894.6l.4,3.5 1.2,3.1 .6,1.4M1789.4,894.3l-1.7,3.1-2.6,2.7-.2,.2M1793.5,860.3l-.2-2.1M1797.8,857.6l-4.5,.6M1797.8,857.6l0,2.9M1793.5,860.3l2.9,1.7M1797.8,860.5l-1.4,1.5M1774.6,856.5l2.1,.9M1774.6,856.5l-3.9,6.1M1773,868.4l-1.3-.4M1771.7,868l-1-5.4M1787,853.1l-4.8,6.8M1787,853.1l1.9,4.4M1782.2,859.9l5.4,.2M1788.9,857.5l-1.3,2.6M1787.2,852l-.2,1.1M1780,852.9l1-3.5M1781.6,860.4l.6-.5M1792.8,857l-3.9,.5M1793,854.5l-.2,2.5M1784.3,866.3l3.6-2.8M1787.9,863.5l-.3-3.4M1781,862.3l3.3,4M1797.4,866.2l-1-4.2M1797.2,866.4l-3.5-1.7M1793.7,864.7l-.4-3.8M1793.3,858.2l-.5-1.2M1787.9,863.5l1.2,.6M1793.3,860.9l-4.2,3.2M1782.6,830.1l-.2-.8M1782.6,830.1l-2.1,3.4M1782.4,829.3l-2.4-1.1-1.8-2.2M1780.5,833.5l-3.1-2.9M1777.4,830.6l.8-4.6M1782.4,829.3l1.3-2.6 .4-2.9M1781.5,820.8l-1.6,2.6-1.7,2.6M1777.9,819l-1.7,2.5-2.7,1.5M1778.2,826l-2.2-1.4-2.5-1.6M1768.2,815l.8,3.7 2.5,4.1M1771.5,822.8l2,.2M1780.5,833.7l-2.2,1.9-2.2,2M1780.5,833.7l2.1,3.6M1782.6,837.3l-1.7,2.9-.9,3.7M1776.1,838l1.3,2.9 1.4,2.9M1780,843.9l-1.2-.1M1777.4,830.6l-3.5,.4M1773.9,831l1,3.6 1.2,3M1781,845.5l-1-1.6M1787.4,836.4l.3,2.4 1.5,2M1787.4,836.4l-4.8,.9M1773.9,849.3l-.6-.4M1772.9,841.8l3.2-3.8M1773.9,849.3l2.2-3.4 2.7-2.1M1774.6,856.5l-.7-7.2M1740.3,796.2l-2.6,0-2.4-.7M1740.3,796.2l1.4-.8M1741.7,795.4l-1.6-3.7M1735.1,793.7l.2,1.8M1735.1,793.7l2.2-1.2 2.6-1M1732.2,790.7l2.9,3M1732.2,795.9l2.8-.1M1739.1,790.9l.8,.6M1742.5,791.6l-2.4,.1M1746.2,792.2l2,1.9M1741.7,795.4l2.6,.5M1744.3,795.9l3.9-1.8M1754.6,793.3l-2.8,1.6M1751.8,794.9l-3.6-.8M1756.7,805.5l0-2 .3-2.1-.1-2M1756.1,799.3l.8,.1M1751.6,804.4l-.4-2.2M1756.1,799.3l-2.3,.5M1753.8,799.8l-2.6,2.4M1751.8,794.9l-1.3,2.6M1756.1,799.3l.1-2-.9-1.7-.1-2.1M1753.8,799.8l-1.6-1.2-1.7-1.1M1761.3,793.9l.3,2.4-1,2.3M1761.3,793.9l3-.6 3.1-1.1M1760.6,798.6l2.1,1.4 2.8,.9M1765.5,800.9l2.4-1.8 2.7-1.5 2.4-1.8M1773,795.8l-1.6-1.6-1.9-1.2-2.1-.8M1756.9,799.4l3.7-.8M1760.6,792.9l.7,1M1767.2,788.2l.2,4M1764.8,804.3l.7-3.4M1773.9,795.6l-.9,.2M1533.7,928.4l.2,1.6 1.7,3.3 1,3.4M1523.8,930.5l1,3.7M1536.6,936.7l-4.1-.1-4-.3-3.7-2.1M1507.3,923.5l.7-.3M1506.6,931.9l1.3-4.6-.6-3.8M1506.6,931.9l1.7,1.8 2.9,.6M1511.2,934.3l4.4-2.3 1.6-1.4M1530.2,943.3l-1.8-2.3-2.8-1.5M1537.8,937.5l-1.2-.8M1525.6,939.5l-.8-5.3M1511.2,934.3l-.5,3.2 2.7,2.6M1513.4,940.1l3.1,.9M1525.6,939.5l-2.4,2.2M1516.5,941l6.7,.7M1529.1,946l-3,1.2-2.7,.3M1523.2,941.7l.2,5.8M1590,871l-2.5,5.9M1596,878.6l-4,.8M1596,878.6l-.9-3.2M1587.5,876.9l4.5,2.5M1563.3,871.5l3.8,.5M1575.5,867.2l0,.9M1575.5,868.1l-3.8,1.7-4.6,2.2M1559.6,885.5l3.1-3.4 4.3-1.8M1555.1,876.9l1.1,2.8 1.2,3 2.2,2.8M1567.1,872l-.7,4.3 .6,4M1671.7,832.4l.2-3.5 .7-3.4M1671.7,832.4l-3.4,1.1-3.1,.5M1665.1,833.8l.4-3.5-1-3.9-2.7-3M1667.6,821.3l1.5,1.3 3.5,2.9M1669.1,841l3.6-.9 4.2-1.3M1669.1,841l-4.4-2.8M1676.9,838.8l-2-2.6-1.2-2.6M1673.7,833.6l-2-1.2M1664.5,835.3l.7-1.3M1654.9,829.7l2.1,.5 5,2 3.1,1.6M1675.3,816.8l.1,.4 1.4,4.3M1676.8,821.5l-4.2,4M1694.5,795.3l-2.1,2.6M1687.5,797.7l1.3,.6M1688.8,798.3l3.6-.4M1682.8,808.9l3.5-1.1 3-1.1M1682.2,808.4l.6,.5M1688.8,798.3l.3,4.2 .2,4.2M1702.6,797.3l-2,2.9-3.3,2.4M1692.4,797.9l1.8,2.8 3.1,1.9M1711,796.9l-.9,2M1714,803.3l-2.7-.1M1710.1,798.9l1.2,4.3M1704.2,796.9l1.1,.9M1710.1,798.9l-4.8-1.1M1726.1,801.2l.8,5.2M1724,810.8l-1.6-1M1724.2,810.7l2.7-4.3M1711.3,803.2l-2.8,1.5M1711.6,812.1l-3.4-3.4M1708.2,808.7l.3-4M1705.3,797.8l1.7,3.1 .4,3.4M1708.5,804.7l-1.1-.4M1697.3,802.6l.2,2M1707.4,804.3l-4.3-.6-5.6,.9M1726.5,816.7l-3.8,3.6M1726.5,816.7l-3-3.5M1723.5,813.2l-2.6,2.1M1720.9,815.3l-.2,5.1M1720.7,820.4l2-.1M1724.6,824.7l-1-2-.9-2.4M1729.4,816.4l-2.9,.3M1724.2,810.7l3.6,.2 3,1.7M1730.5,815.2l.3-2.6M1724,810.8l-.5,2.4M1716.3,814.6l4.6,.7M1715.5,821.5l5.2-1.1M1861.7,871.5l-.6-.3-4.2-3.6M1863.2,864.4l-4.3-2.8M1856.9,867.6l2.7-2.1-.7-3.9M1857.9,875.8l-.6-3.3-2.4-3.5M1857.9,875.8l-7.2-1.7M1854.9,869l-6.5,2.4M1850.7,874.1l-2.3-2.7M1858.6,876.1l-.7-.3M1855.1,868.2l-.2,.8M1855.1,868.2l1.5-.6M1847,876.5l3.7-2.4M1855.1,868.2l-8.3-1.4-5,.5M1841.8,867.3l1.6,2.2M1843.4,869.5l5,1.9M1846.9,876.5l-5-2.6M1841.9,873.9l1.5-4.4M1859.5,835.5l4.6,1.4M1866.6,843l-.7,.4M1853.9,839.9l.1,2.5M1865.9,843.4l-3.7-.3-3.7-.3-4.5-.4M1819.6,868.1l1.1,.8M1817.1,871l.4-.9 2.1-2M1820.7,868.9l.7,3.1M1830.8,839.9l-1-1M1830.8,839.9l-2.9,.6M1826.9,839.1l0,1.3M1826.9,839.1l2.7-.2M1827.9,840.5l-1-.1M1827.9,840.5l2,.8M1831.3,840.1l1,.8M1829.9,841.3l2.4-.4M1815.9,871.1l-.5-3M1815.4,868.1l.4-.8M1815.8,867.3l2.6-.8M1819.6,868.1l-.2-.7M1818.4,866.5l1,.9M1750.5,866.7l-2.9,6M1755.5,881.2l.7-3 1.4-2.6M1755.5,866l-.3,4.3 1.9,3.1M1757.6,875.6l-.5-2.2M1755.8,882l2.9,2.7 2.9,2.2M1761.6,886.9l2-3.3 2.4-2.6 2.1-2.5M1768.1,878.5l-.2-.9M1757.6,875.6l5.2,1.4 5.1,.6M1768.1,878.5l2.1,3.2 .1,4.4 .1,.4M1776.2,876.7l.7,3.5M1774.1,875.2l-3,.9-3,1.1M1771.7,868l-2.6,2-2,2.9M1768.1,877.2l-1-4.3M1770,863.1l.7-.5M1770,863.1l-2.9,4.6-.6,4M1766.5,871.7l.6,1.2M1768.5,854l-4.9,6.5M1768.5,854l1.3,3-1.2,5.2M1763.6,860.5l-.3,3.7-1.3,4.4M1768.6,862.2l-6.4,6.4M1758.7,862.8l4.9-2.3M1770,863.1l-1.4-.9M1757.1,873.4l2.1-2.2 2.8-2.6M1766.5,871.7l-2.5-1.4-1.8-1.7M1750.7,812.1l-2.8,.1-3,1.1-2.9,.5M1750.7,812.1l-.6,2.6-.1,3M1744,823.3l2.8-3.3 2.3-1M1750,817.7l-.9,1.3M1750.7,812.1l.4-.7M1759.4,814.8l-2.5,2-2.2,3.1M1750,817.7l2.2,1.7 2.5,.5M1731.2,845.3l3-1.5 3.4-.4 4.3-2.3M1729.6,851l2.7,1.1 3.2,.2 3.9,1.2M1741.9,841.1l-.8,6-1.7,6.4M1740,833.2l3,4.2M1741.9,841.1l1.1-3.7M1697.5,899.8l.3-1.6 2.1-3.5M1692.7,894.9l1.9-1.2 2.7-3M1699.9,894.7l-2.6-4M1710.2,896l-2.9-.5-2.7-.6M1710.2,898l.1,1.4 1,2.6M1704.1,899.3l1,3 .1,1.3M1704.3,896.4l.3-1.5M1711.2,890.6l-2.7-1.8-2.5-2.4M1706,886.4l-.8,2.1-1.4,1.7M1704.1,893.7l-.3-3.5M1704.1,893.7l.5,1.2M1699.1,901.2l.2-.2 2.3-1.6 1.3-.5M1704.1,893.7l-2.1,.1-2.1,.9M1686.5,908.7l-1.7,4.2M1723.1,864.5l2.9,5.4 1.6,4.9M1725,878.4l2.1-1.8M1727.6,874.8l-.5,1.8M1735.6,873.6l1.1-.6M1735.6,873.6l-1.5-4.1-2.5-5.1M1736.7,873l3.6-5.3M1731.5,863.7l2.6-.8 3-.6 2.9-2.5M1740,859.8l.3,7.9M1734.2,877l1.4,3.1 2.1,2.3M1739.5,879.8l-1.8,2.6M1739.5,879.8l-1.7-3.2-1.1-3.6M1734.2,877l1.4-3.4M1734.2,877l-.7,.9M1733.5,877.9l-.8-.1M1732.7,877.8l-1.5-2.9-1.6-2.4M1729.6,872.5l1-4.5 1-3.6M1743.1,873.3l-1.7-2.2-1.1-3.4M1729.6,872.5l-2,2.3M1728.9,857.4l2.6,6.3M1740.4,857.2l-.8-3.3M1740.4,857.2l-.4,2.6M1740.4,857.2l4.8,2.9 3.5,1 2.1,2.1M1716.9,895.6l2.6,2.1 2.8,1.5M1719.2,890.2l3.2,1.9M1722.4,892.1l-.7,2.4 .4,2.3 .2,2.4M1727.3,888.5l-2.1-1.9-2.6-1.5M1727.3,888.5l.5,1.7M1722.4,892.1l2.8-.7 2.6-.8M1636.8,878.8l-5.7,2.6M1636.8,878.8l-.6-2.2M1636.2,876.6l-10.2-1.7M1625.4,877l4.8,4.3M1643.8,880.7l3.1-.4M1643.8,880.7l-7.2-3.9M1636.6,876.8l5,1.3 4.4-.3M1646.9,880.3l-.1-2.2M1639.6,882l5,.1M1644.6,882.1l-.8-1.4M1636.8,878.8l2.8,3.2M1615.8,864.4l5.2,.1M1621,871.4l3.1-2.4M1624.1,869l-1.2-2.3-1.9-2.2M1618.3,858.7l-.9-1.7M1618.3,858.7l2.6,1.9 2.3,2.1M1623.2,862.7l1.2,.1M1624.4,862.8l3.2-1.8 3.8-1.8M1623.2,856.6l-2.4,.6-3.2-.6M1623.2,856.6l8.2,2.6M1600.1,855.6l5.4,.1 7.2,.3 4.7,1M1614.2,862l2.3-1.6 1.8-1.7M1621,864.5l2.2-1.8M1616.8,847.3l3.6,3.5 2,3 .8,2.8M1615.9,854.5l1.7,2.1M1634.9,855.2l1.1,2M1642.7,852.6l.2,.3 3.5,3.1M1646.4,856l-.3,2.8-1.5,2.4M1644.6,861.2l-4-2-4.6-2M1631.4,859.2l1.4,0M1636,857.2l-3.2,2M1662.4,847l3.1-.6 3.2-.7 4.5-.6M1662.5,847.1l8.3,2.7M1670.8,849.8l8.8,.9M1673.2,845.1l7.9,4.4M1681.1,849.5l-1.5,1.2M1661.3,846.5l1.1,.5M1673,844l-3.9-3M1673,844l.2,1.1M1669.5,856.2l6.3-1M1669.5,856.2l-2.2-1M1667.3,855.2l-.6-2.6-1.3-2.7-2.9-2.8M1675.8,855.2l-.8-2.7-4.2-2.7M1676.4,855.3l2.8-.2M1679.2,855.1l1.1-1.1M1680.3,854l-.7-3.3M1675.8,855.2l.6,.1M1670.8,858.5l3.3,.5M1670.8,858.5l-1.3-2.3M1676.4,855.3l-.8,3.4M1674.1,859l1.5-.3M1691,861.7l4.1-2.3M1691.1,855.9l-2.3,.2M1690.5,861.8l-3.4-1.1M1687.1,860.7l1.2-2.2 .5-2.4M1673,844l8.8,.2M1681.8,844.2l2.9,4.7M1681.1,849.5l3.5-.6M1680.3,854l5.1-.5M1684.6,848.9l.4,2.4 .4,2.2M1661.9,863.7l1-2.4 1.8-1.6M1661.5,863.7l-2.8-2.6-2.5-3.4M1664.8,857l-3.7-1.9-4.9-.3M1664.8,857l-.1,2.7M1656.2,854.8l-.6,1.5M1655.6,856.3l.6,1.4M1664.9,865.9l2.2-.3M1664.9,865.9l-3-2.2M1667.1,865.6l.3-3.5M1667.4,862.1l-2.7-2.4M1666.2,869.5l-1.3-3.6M1659.7,868l.6-2.3 1.2-2M1652.9,863l1.3-2.9 2-2.4M1667.3,855.2l-2.5,1.8M1650.8,848.6l.7,1.1 2.8,2.4 1.9,2.7M1670.8,858.5l-.8,3.3M1670,861.8l-2.6,.3M1646.4,856l4.6,.6 4.6-.3M1645.5,862.2l-.9-1M1648.6,863.7l-3.1-1.5M1527.8,865.4l-2.7-2M1527.8,865.4l2.3-2.3M1525.1,863.4l2.5-5.2M1530.1,863.1l-2.5-4.9M1529,870.7l-1.2-5.3M1529,870.7l-4.4-1.9M1532.6,863.6l-2.5-.5M1527.8,857.4l-.2,.8M1490.7,888.8l-1-.2M1490.7,888.8l2.4-1.9 2.4-2.5 1.9-3M1489.7,888.6l-2-2.1-1.3-3-2.3-2M1484.1,881.5l2.5-1.8 2-2.7M1488.6,877l3,.6 3.7,1.1M1495.3,878.7l2.1,2.7M1479.5,881.6l2.3-.3 2.3,.2M1479.5,881.6l-.1,.8M1479.4,882.4l.6,2.8 .5,3 .1,3.2M1486.6,893.7l-2.9-1.6-3.1-.7M1486.6,893.7l1.8-2.3 1.3-2.8M1488.1,868.4l-.1,1.1-.5,4 1.1,3.5M1496.5,873.1l.2,3.3-1.4,2.3M1505.6,875.8l.7,3.3M1499.8,883.3l3.6-1.7 2.9-2.5M1499.8,883.3l-2.4-1.9M1522.5,870l.3,2.3M1527.3,876l-2.9,0M1522.8,872.3l1.6,3.7M1527,884.9l-2.3-2.4-3-1.2M1524.4,876l-2.7,5.3M1526.9,885.4l-2.1,.8-2.1,1.6-2.4,1.1M1528.5,891.9l-1-3.1-.6-3.4M1528.5,891.9l-1.6,1.6-1.9,1.3M1520.3,888.9l.7,2.2-.4,2.3M1525,894.8l-2-1-2.4-.4M1427.4,917l-.9,1.6M1427.4,917l-.1-1.9M1426.5,918.6l-4.3,1.8M1427.3,915.1l-4.8,.4M1422.2,920.4l-.2-3.6M1422.5,915.5l-.5,1.3M1426.8,925.6l4.3-6.9M1426.8,925.6l-1.8-1.3M1431.1,918.7l.3-2M1431.4,916.7l-4,.3M1425,924.3l1.5-5.7M1425,924.3l-2.3,2.7-2.3,1M1420.3,926.8l1.9-6.4M1428.1,911.4l-3.9-2.6-.2-.1M1421.8,909.3l.1,.9 .6,5.3M1428.1,911.4l-.8,3.7M1417.8,918.1l2-1.3 2.2,0M1415.1,910l1,3.7M1428.3,929.7l-1.5-4.1M1428.3,929.7l2.5-2.6 2.8-1.3M1431.1,918.7l1.3,2.6 2.1,1.5M1433.6,925.8l.9-3M1444.8,950.7l-1.8-5.4 .1-1.1M1444.8,950.7l-.6,1.3M1444.2,952l-3.4-1.2-3.1-1.9-2.6-1.4M1480.6,891.4l-1.5,3.2M1479.4,882.4l-2.2,1.6-2.5,1.6-2.4,1.8-2.9,1.3-1.7,2.5M1467.7,891.2l2.5,1.2 3.1,.2 2.9,1.4 2.9,.6M1507.3,923.5l-1.7-.5M1506.6,931.9l-3.9,2.8M1499.1,930.8l1.8,1.2 1.8,2.7M1525.5,957.1l-1.5-2.3M1529.2,949.6l-4.8,3.4M1524,954.8l.4-1.8M1523.4,947.5l-.7,1M1524.4,953l-.8-2.3-.9-2.2M1516.5,941l.1,3.9-1.6,4.4M1515,949.3l.4,3M1522.7,948.5l-3.3,1-4,2.8M1677.8,900l2.4-2.1M1677.8,900l-3.6,4.8M1674.2,904.8l.9,4.8M1668.1,894.9l4.2,1.3 2.7,2.3 2.8,1.5M1672.7,888.9l1-.4M1681.9,893.1l-1.4-1.6-3-2.2-3.8-.8M1648.7,932.7l2.9-1.9 2.6-1.6M1651,940.4l2.7,1 2.4,.8 1.3,1M1654.7,929.4l1.2,3.7 1.9,2.3M1658.1,942.4l-.3-2.4 0-4.6M1650,949.2l2.5,.7M1647.9,899l3.1,2.2M1647.9,899l3.7-2 3.2-1.8M1655.3,895.5l-.5-.3M1655.3,895.5l.3,2.3-.6,2.3M1655,900.1l-4,1.1M1649,902.9l-2.7,.2M1646,899.6l.3,3.5M1649,902.9l2-1.7M1646,899.6l1.9-.6M1664.4,896.4l1.8-1.2M1664.4,896.4l-2.9-.4-3,0-3.2-.5M1653.6,893.4l1.2,1.8M1348,1191.1l2.9,3.4M1346.4,1192l3.3,4.7M1350.9,1194.5l-1.2,2.2M1351.8,1195.1l-.9-.6M1349.7,1196.7l.1,3M1346.4,1192l.6,5.1M1347,1197.1l1.4,3.7M1272.5,1278.9l-3.6,2.2M1274.2,1279.7l.3,.7M1268.9,1281.1l.8,1.4M1274.5,1280.4l-3.5,2.6M1271,1283l-1.3-.5M1286.9,1280.5l-5.7-1.4M1287.4,1280.1l-2.5-4.7M1281.2,1279.1l2.7-4M1284.9,1275.4l-1-.3M1285.8,1274.4l-.9,1M1263.5,1275.8l-.3,2.4M1267.2,1276.4l0,.1 .4,3.4M1263.2,1278.2l4.4,1.7M1279.6,1279.1l1.6,0M1279.6,1279.1l-1.7-2.2M1281,1271.9l2.9,3.2M1261.2,1278.1l2,.1M1268.9,1281.1l-1.3-1.2M1263.8,1280.9l5.4,1.8M1269.2,1282.7l-.4,1.9M1262.3,1283.7l1.3,.4 5.2,.5M1257.3,1298l2.3-.2M1257.3,1298l-1-1.5M1257.2,1294.5l2,2.4M1259.2,1296.9l.4,.9M1260.7,1299.5l-.3-1.1M1260.4,1298.4l-.8-.6M1258,1300l-.7-2M1254.8,1299.4l3.2,.9M1262.7,1301.1l1.3-1.8M1267.1,1301.1l-3.1-1.8M1267.1,1301.1l.4-2.8M1257.4,1304.6l1.6-1.7M1257.4,1304.6l-1.7-2.9M1255.7,1301.7l2.7,.4M1259,1302.9l-.6-.8M1261,1303.8l-2-.9M1254.4,1300.2l1.3,1.5M1258.3,1300.7l.1,1.4M1486.5,985.9l6.3-.4M1486.5,985.9l2.3,2.3 2.1,2.4 .5,1.1M1422.1,1049.8l1.1-3.8M1414.1,1050.1l2.4-2.3 2.4-2.1M1418.9,1045.7l4.3,.3M1403.8,1040l-2.9-1.5-2.3-2.1-1.7-2.6M1403.8,1040l.4,.8M1397.1,1047.4l-1.3,.7M1395.8,1048.1l-1.2-.3M1391,1039.4l2.5-3.1 3.4-2.5M1391,1039.4l.2,4.3 2.6,3.7M1393.8,1047.4l.8,.4M1407.6,1044.5l-2.2-1.8M1384.6,1054.4l2.5-1.1 2-2.1 2.3-1.8 3.2-1.6M1387.9,1036l1.4,1.7 1.7,1.7M1382.4,1043.9l1.7,.4 2.5,1.8 3.3,1.3 3.9,0M1396.9,1033.8l2.1-6.6M1406.9,1026.9l-1.1,4.9-1.2,4.4-.8,3.8M1406.9,1026.9l-.8-1.6M1406.1,1025.3l-2.2,0-2.3,.9-2.6,1M1390.5,1025.9l3.5,.9 3.9-.9M1397.9,1025.9l1.1,1.3M1430.8,1004.5l1.1-2.5M1421.9,1011.8l3.2-3.2 3.3-1.4 2.4-2.7M1421.9,1011.8l-1.3-2.7 .4-3.6M1431.6,1000.3l-2.8-1-3.2,.5M1421,1005.5l4.6-5.7M1428.7,988.1l-.5,.6M1428.7,988.1l2.2,.5 1.4,1.9 1.9,1.1M1428.2,988.7l-1.1,3.9-2.2,4M1434.2,991.6l.2,1.1M1425.6,999.8l-.7-3.2M1352.4,960.8l1,.7M1362.4,955.2l1.1,2.7M1353.4,961.5l5.9-.2M1363.5,957.9l-4.2,3.4M1381.1,1006.4l-.9-2.8M1381.5,1010.8l-.4-4.4M1385.2,1002.4l-1.3-3.3M1383.7,998.5l-1.1-2.9M1380.2,1003.6l1.2-4.2M1381.5,999.1l1.1-3.5M1360.7,961.8l-1.4-.5M1353.4,961.5l.2,2.7M1361.5,966l-3.7,.5M1362.2,965.5l-.7,.5M1362.2,965.5l-1.5-3.7M1353.6,964.2l4.2,2.3M1411.5,929.9l1.3,3.9M1412.8,933.8l2.2,.9 2.3,.8M1406.3,929.2l-.4,1.4 .3,2.4M1406.2,933l3.2,3M1412.8,933.8l-3.4,2.2M1428.3,929.7l.6,4M1618.8,947.7l.6-.8 2.6-2 2.7-2.2M1617.5,946.4l0-.4-1-3.1-.2-3M1624.7,942.7l-2.7-2.8-.8-3M1616.3,939.9l1.2-1.9 2.4-1.2M1619.9,936.8l1.3,.1M1630.8,942.8l-3.1-.6-3,.5M1629.5,936.2l-2-.6M1627.5,935.6l-6.3,1.3M1499,984.6l.3-3.6M1511.9,989.2l-2.8-2.5-4.5-3.4-1.2-3.2M1503.4,980.1l-4.1,.9M1493.6,984.3l-2.6-3M1491,981.3l3.1-.8 1.9-1.5M1499.3,981l-3.3-2M1857.2,834.4l-5.2-2.4M1857.8,834.6l.6-2.8 1.2-2.8M1859.6,829l-2.7-.3M1856.9,828.7l-2.1,1.9-2.8,1.4M1846.2,827.5l3.4,.5M1845.3,828l.9-.5M1846.4,832.7l3.9-.8M1849.6,828l0,2 .7,1.9M1850.3,831.9l1.7,.1M1864.4,834.5l-.8-3.1-2-2.6M1864.4,834.5l1.5-2.5 1.9-2.6M1861.6,828.8l5-1M1867.8,829.4l-1.2-1.6M1864.4,836.5l0-2M1859.6,829l1.5-.3M1874.3,830.6l-2-.8-4.5-.4M1865.2,824.4l2.3,.9M1865.2,824.4l-.3-4.2M1868.1,821.3l-3-1.1M1868.1,821.3l.5,3.4M1868.6,824.7l-1.1,.6M1861.1,828.7l.6-4.1M1861.7,824.6l3.5-.2M1866.6,827.8l.9-2.5M1867.9,817l-2.8,3.2M1873.1,818.1l-5.2-1.1M1873,818.7l-1.9,1.4-3,1.2M1844.4,838.9l-3.6,.9M1842,836.4l-2.2,.2M1839.7,836.7l.7,3M1834.6,829.4l-1.7,.1M1831.7,825.4l-1.6,1M1832.9,829.5l-2.8-3.1M1822.7,824.9l1,1.2M1830.1,826.4l-3.6-.3-2.8,0M1817.3,828.1l2.7,1M1820,829.1l2-1.3 1.8-1.6M1815.8,836.8l.9,1.1M1814.9,840.4l-1.8-1.1M1815.3,840.1l1.4-2.1M1818.7,839.5l-2-1.5M1819,839.5l1.6-3.3M1816.7,837.9l3.6-1.7M1816.4,835l.6-.3M1820.3,836.2l-3.3-1.5M1814.1,833.4l.4-3.1M1815,830.2l3.4,2.4M1817,834.7l1.4-2.1M1820.7,830.8l1.4,1M1820.7,830.8l-1.8,1.8M1822.1,831.8l-1.2,3.5M1818.9,832.6l2,2.7M1825.2,828.1l-1.4-1.9M1820,829.1l.7,1.7M1823.8,831.9l-1.7-.1M1823.8,831.9l1.4-1.7 0-2.1M1784.1,773.6l3-1.7 3.4-2 3-2.8M1788.4,764.5l2.5,.6M1790.9,765.1l2.6,2M1824.8,819.2l.5-1.9 1-1.9M1824.6,809.1l1.2,2.1M1826.3,815.4l-.7-2 .2-2.2M1832.6,791.3l1.2,4.2M1832.6,791.3l5.1-5.8M1844.5,791.7l-.2-3.2M1844,793.9l-.7,1.4M1844.5,791.7l-.5,2.2M1843.3,795.3l-2.9,.7-3.1-.1-3.5-.4M1935.8,411.6l.1,.9M1935.9,412.5l-5.6,8.4M1930.3,420.9l-3.9,2.1M1937.7,403.6l.7-.8M1932.9,398.4l4.2,.5M1938.4,402.8l-1.3-3.9M1940.5,392.4l-1.3,4.1M1937.1,398.9l2.1-2.4M1879.4,545l-.4,1.1-.2,2.9M1869.4,544.3l1.1,1.1 8.3,3.6M1884,552l-1.5-.6M1878.8,549l3.7,2.4M1878.2,557.1l-5.6-.1-5.4-1.6M1878.2,557.1l.3-.6M1878.5,556.5l-4.1-3.6M1874.4,552.9l-5.1,.1-3.7,0M1867.2,555.4l-1.6-2.4M1884.2,556.2l-5.7,.3M1882.5,551.4l-9.3,0M1873.2,551.4l1.2,1.5M1857.2,519.7l3.6-2.7 4.1-1.5M1858.9,510.2l3,2.9 3,2.4M1866.9,524.3l-.9-2.1 .4-3-.1-3.1M1864.9,515.5l1.4,.6M1866.3,516.1l2.6,.2 2.5-.8M1858.9,510.2l4.9-.8 3.2-1.5 4-.6M1871,507.3l.8,2.7 .1,2.6 0,2.7M1872.4,524.6l1.1-1M1871.4,515.5l-.1,2.8 1.4,2.6 .8,2.7M1886.6,535l.3-1.3 1.3-2.7-.5-3.8M1887.7,527.2l-5-3.1M1882.7,524.1l-3.1-.7M1873.5,523.6l6.1-.2M1957.8,464.7l1.9,1M1953.6,461.7l-1.9-4.1-.3-3.9M1953.6,461.7l4.2,3M1962.6,463.7l-.4-3.5 .9-3.3 1.1-3.9M1964.2,453l-2.8-.3-2.9,.7-3.2,.4-3.9-.1M1989.4,484l-2.4-.6-2.3-.8-2.2-.2M1989.4,484l3.9-2.7M1994.4,478.7l-1.1,2.6M1994.4,478.7l-3.1-.1-2.5-.9-2.5-.6-2-1.1M1984.3,476l-1.3,3.1-.6,3.2M1987.4,489.7l.6-3.1 1.4-2.6M1987.4,489.7l-3.6-.7M1983.8,489l-.7-3.3-.6-3.3M2003.8,490.2l-2.6,0-2.5,.3-2.6-.5M1996.1,490l-1.4,2.8-2.4,2.1M2004.7,501.8l-.2-3.4 .3-3.2 .5-3M2004.7,501.8l-2.5-.9-2.6-.8-2.9,.1-3.4-1.1M2005.3,492.2l-1.5-2M1993.3,499.1l-1-4.2M1996.1,490l-.2-3.4-1.8-2.4-.8-2.9M1987.4,489.7l1.2,3.8M1988.6,493.5l3.7,1.4M1867.2,555.4l-.2,1.9M1873.1,563.6l-1.4-.8M1871.7,562.8l-4.7-5.5M1886.3,628.7l4.1-1M1886.3,628.7l-1.8,2.7-1.4,2.8-.6,3.4M1890.4,627.7l2.5,1.5 1.6,2.5 2.5,2.1M1897.1,636.2l-.1-2.4M1897.1,636.2l-2.6,2.2-2.1,3-1.6,3.6M1890.8,645l-2.4-2.1-2.5-1.4-2-1.6-1.4-2.3M1975.6,523.6l-1.5,4.9-.9,4.2M1973.2,532.7l-2.1-.1-2.3-1.4-2.4-.1M1975.6,523.6l-2-.9-1.4-2M1972.2,520.7l-3.7,5.7-2.1,4.7M1972.4,540.3l.6-1.7 .2-5.9M1966.4,531.1l-3.1,1.5-1.9,2.5M1951.1,525.3l2.9-6.2 1.2-5.9M1949.8,528.8l1.3-3.5M1959.1,533.3l-.5-1.7M1958.6,531.6l-.1-6.4-.7-4.6-1-4.2-1.6-3.2M1922.6,631.9l-3.2-1.9-3.8-1.7M1922.6,631.9l.2,4.8-1.2,3.7M1915.6,628.3l.1,4.1-2.4,2.7-1.5,3.1M1921.6,640.4l-2.8,.3-3.2,.7M1915.6,641.4l-2.5-1M1913.1,640.4l-1.3-2.2M1925.3,625.1l-.1,.4-1.6,3-1,3.4M1927.3,644.1l-1.8-1.7-2.3-.4-1.6-1.6M1921.2,655.1l2.5-.4 1.8-1.4M1921.2,655.1l-2.1-2.6-2.1-2.8-.2-2.9-.5-2.8-.7-2.6M1904.2,631.9l0-3.1 1.5-2.8M1904.2,631.9l3.5,3 4.1,3.3M1915.6,628.3l-2.5-2.6M1913.1,625.7l-4,.2-3.4,.1M1909.1,642.6l-3-.2-2.6-.1-2.6-1.2M1909.1,642.6l-.5,2.8-1.4,2.7 .2,3.2M1907.4,651.3l-2,2M1905.4,653.3l-2.2-2.9-2.3-1.9M1900.9,648.5l.2-3.8-.2-3.6M1904.2,631.9l-2.5,.2-2.4,.6-2.3,1.1M1913.1,640.4l-4,2.2M1897.1,636.2l1.5,2.7 2.3,2.2M1921.1,655.4l-3.1-.7-3.6-1.1-3.8-.6-3.2-1.7M1905.7,626l-1-3.5M1890.4,627.7l2.8-2.1 2.8-2M1896,623.6l3.3-.9 2.9-.5 2.5,.3M1916.7,616.5l0,.1-1.5,5.4-2.1,3.7M1914.4,611.8l-2.5,3.1-3,4.2-3.3,1.8M1905.6,620.9l-.9,1.6M2084.4,456.7l-1.3,5.4-3,4.4-2.3,4.2M2084.4,456.7l3.2,.8 .6,.8M2091.3,469.8l-.8,.2-3,1.9-4.6-.2-5.1-1M2083.1,454.8l1.3,1.9M2077.2,470.9l.6-.2M2107.6,468.9l-1.6,0-5.7-1-.1,0M1946.6,405.9l2.2-.2M1946.6,405.9l-3.4-3.3M1948.8,405.7l2.6-3.4 3.5-2.8 1.4-1M1943.2,402.6l.6-2.2 .2-2.4M1954.8,396.9l-6,0-4.6,1M1938.4,402.8l4.8-.2M1935.9,412.5l1.1-.2M1946.1,406.9l.5-1M1964.2,407.2l-2.1,.3-5.2,.3M1956.9,407.8l-4.5-.9-3.6-1.2M1939.2,396.5l2.4,.6 2.4,.9M1944.9,391.8l-1.6,3.1 .9,3M1930.3,420.9l3.1,2.2 4.4,1.6 4.5,1.5M1943.8,419.8l1,1.7M1944.8,421.5l-1.1,2.5-1.4,2.2M1925,430.6l6.4-.7 7-.5 4.1-1.3M1942.5,428.1l-.2-1.9M1983.6,435.3l-3.2,2.3-1.8,4.3M1968.5,429.1l-1.1,4.8M1967.4,433.9l3.1,1.5 3.4,3.4 4.7,3.1M1947.5,451.7l3.9,2M1964.2,453l2.2-2.2M1959.6,442.8l3.7,1.5M1959.6,442.8l-2,2.5-3.4,1.8-3.2,2.4-3.5,2.2M1966.4,450.8l-.6-3.8-2.5-2.7M2015.4,462.7l1.4-4.4M2007.1,461.6l2.3,1.2 2.7,.7 3.3-.8M2007.1,461.6l2-1.7 1.8-2.5 1.9-3.2M2016.8,458.3l-2.4-1.6-1.6-2.5M1994.4,478.7l3.3-2.1M2003.8,490.2l.4-2.9-.9-2.9 .1-2.9 .1-2.7M2003.5,478.8l-2.6-1.7-3.2-.5M1966.4,450.8l2.5,1.8 3.6,.6M1979.1,469.4l2.5-1.9M1981.6,467.5l-.7-3.2-1.6-3.6-3.2-3.7-3.6-3.8M1967.4,433.9l-2.6,3.3-.2,4-1.3,3.1M1978.6,441.9l-.4,6.7M1978.2,448.6l-2.1,3.1-3.6,1.5M2015.9,465.8l1.4,2.3 2.1,1.4M2015.9,465.8l-3.6,2.7-3.8,1.2M2019.4,469.5l-2.9,3.2-3.3,2.4-2.5,2.6M2008.5,469.7l-.6,2.5 .8,2.4 0,2.5M2010.7,477.7l-2-.6M2015.4,462.7l.5,3.1M2007.1,461.6l-.8,.3M2005.7,466.4l1,2 1.8,1.3M2006.3,461.9l-.6,4.5M2005.7,466.4l-2.5,1-2.5,1.5-2.8,1.4M2003.5,478.8l2.7-.3 2.5-1.4M1997.7,476.6l0-3.2 .2-3.1M2005.3,492.2l3.4-.3 3.7-1.4 4.3-.4M2010.7,477.7l2.7,2M2013.4,479.7l1.8,2.7 .6,2.7-.1,2.6 1,2.4M2004.9,502.4l-.2-.6M2020.2,504.7l.7-2.5 1.8-1.7 1.5-1.8 1.3-1.9M2025.5,496.8l-.3-1.8-1.2-1.3M2016.7,490.1l2.8,1.3 2.5,1 2,1.3M2013.4,479.7l3.5-.2 3.2,.3 2.8,.6 2.3-.6M2024,493.7l1-2.2 .9-2.3 .5-2.4 .2-2.6 0-2.9M2025.2,479.8l1.4,1.5M2051.8,492.8l-2.1,.1M2064.3,506.1l-.8-1-1.9-3.9-4.4-4.9-5.4-3.5M2045.6,508l.6-1.3 1.7-1.8 2.3-1.6 .5-3.1-.1-3.3-.9-4M2025.5,496.8l2.2,0 2.5,.4M2044.5,508l-1-1.8-2.9-2.6-4.3-2.4-4-2-2.1-2M1879.6,523.4l-2.3-3.5 .2-3.6M1871.9,515.3l3.4-.1M1875.3,515.2l2.2,1.1M1924.4,437.8l2.9,1M1942.5,428.1l.7,3.8-.6,3.7 .3,3.4M1942.9,439l-2.7,1.9M1940.2,440.9l-3.4-.5-3.4-1.7-6.1,.1M1793.3,827l-.4-1.3M1793.3,827l-.9,1.8M1787.7,825.4l.8,2.7M1788.5,828.1l3.9,.7M1782.6,830.1l4.1,.8M1788.5,828.1l-1.8,2.8M1787.6,836.2l-.7-2.3 .3-2.4M1786.7,830.9l.5,.6M1797,867.5l-1.3,1.8M1797,867.5l1.9,2.9M1795.7,869.3l.2,5M1798.9,870.4l-.1,1.9M1798.8,872.3l-2.6,2M1761.6,887.5l-1.6,4.8M1761.6,887.5l3.3,.7 2.7,2M1760,892.3l2.9,2.7 .8,.5M1755.3,894.6l4.7-2.3M1787.2,891.9l-4.1,1.5-1,.2M1783.8,885.4l3.9-.6M1782.3,871.9l1.4-1.7M1782.3,871.9l.4,4 1.2,3M1783.7,870.2l5,.4M1783.9,878.9l2.5-2.1M1786.4,876.8l2.1-3.3M1788.7,870.6l-.2,2.9M1779.1,872.1l3.2-.2M1784.3,866.3l-.6,3.9M1782.9,880.3l1-1.4M1788.7,883.9l2-5M1790.7,878.9l-4.3-2.1M1790.7,878.9l1.9-2.9M1792.5,875.6l-4-2.1M1793,866.6l-3.2,.4M1793,866.6l.8,2.8M1792.8,871.1l1-1.7M1792.8,871.1l-3.5-1.3M1789.3,869.8l.5-2.8M1793.7,864.7l-.7,1.9M1789.1,864.1l.7,2.9M1797,867.5l.2-1.1M1795.7,869.3l-1.9,.1M1792.6,876l.9-.1M1793.5,875.9l2.4-1.6M1792.5,875.6l.3-4.5M1788.7,870.6l.6-.8M1771.6,833.2l-2.3,.7-2.7-1.2M1771.6,833.2l1.8-2.6M1773.4,830.6l-1.5-3.4-.8-3.3M1771.1,823.9l-5.1-.5-4.1,1.7M1766.6,832.7l-4.4-3.6M1761.9,825.1l-.3,2.9M1761.6,828l.6,1.1M1766.4,841.8l.2-9.1M1771,839.7l.6-6.5M1773.9,831l-.5-.4M1771.5,822.8l-.4,1.1M1760.8,814.7l.4,2.9-.3,3.5 1,4M1760,843.4l-.3,2.5M1760,843.4l3-8.1-.8-6.2M1754.7,819.9l-.4,2.4M1756.1,827.1l-1.8-4.8M1756.1,827.1l2.5,.3 3,.6M1760,843.4l-2.4-1.2-2.4-.6M1756.1,827.1l0,5.7-.9,8.8M1799,826.2l.6-2.4M1799,826.2l-2.2,1M1796.3,825.2l.5,2M1796.3,825.2l1.5-2.7M1797.8,822.5l1.7,.8M1801,828.4l-2-2.2M1801,828.4l.9-1.9M1801.9,826.5l-2.3-2.7M1794.1,824.5l2.2,.7M1793.3,827l3.3,.6M1796.4,819.3l1.4,3.2M1802.2,821.4l-2.7,1.9M1804.7,825.5l-2.8,1M1792.4,828.8l1.3,2.4M1796.6,827.6l-.7,3.9M1795.9,831.5l-2.2-.3M1787.2,831.5l3-.3 2.7,.5M1793.7,831.2l-.8,.5M1787.6,836.2l4-.6M1792.9,831.7l-1.3,3.9M1793.8,840.9l1.1-1.2M1794.9,839.7l-.1-2.9M1791.6,835.6l3.2,1.2M1794.8,836.8l1.2-2 2-1.2M1794.9,839.7l2.4,0 2.3,.3M1799.6,840l.8-.7M1800.4,839.3l.8-3.8M1801.2,835.5l-3.2-1.9M1806.9,827l-2.2,1.6-2.2,1.5M1801,828.4l.1,1.1M1802.5,830.1l-1.4-.6M1795.9,831.5l1.9,1.5M1798,833.6l-.2-.6M1796.8,827.4l1.9,1 1.7,1.4M1797.8,833l.9-1.9 1.7-1.3M1801.1,829.5l-.7,.3M1802.5,830.1l2,2.2M1809.9,829.4l-2.7,1.5-2.7,1.4M1812.9,834l-3.5,.3M1809.9,829.4l.5,2.4-1,2.5M1739.8,799.8l.5-3.6M1744.3,795.9l1.4,2.2M1739.8,799.8l1.6,1M1741.4,800.8l4.3-2.7M1751.2,802.2l-4-.6M1750.5,797.5l-2.4,.9M1747.2,801.6l.9-3.2M1745.7,798.1l2.4,.3M1739.8,799.8l-2.9,1.1M1735,795.8l.9,4.1M1735.9,799.9l1,1M1730.5,798.6l3,3.1M1735.9,799.9l-2.4,1.8M1541.6,920.2l2,.6 2.9,1.3 2.4,2M1536.5,927.3l1.5,.5 4.9,1.2M1548.9,924.1l-3.1,2.2-2.9,2.7M1596,878.6l5,3.3M1605.7,879.6l-1.1,2.2M1601,881.9l3.6-.1M1601,881.9l-3,4.1M1592,879.4l1.7,5.5M1593.7,884.9l4.3,1.1M1604.6,881.8l1.4,5M1614,881.9l-3,5M1611,886.9l-5-.1M1598,886l.7,3.7M1598.7,889.7l5.1,.5M1606,886.8l-2.2,3.4M1559.4,886l2,2.9 3.5,2.2M1559.4,886l-2.5,2.9-2.8,1.5M1555.8,894.1l-1.7-3.7M1555.8,894.1l3.8-.5 4.7,.7M1564.3,894.3l.6-3.2M1551,880l-1.9,3.1-.7,3.4M1548.4,886.5l2.9,1.2 2.8,2.7M1692.1,807.9l1.7-.6M1692.1,807.9l-1.4,3.3-1.5,3.6M1693.8,807.3l3.4,2.6 3.9,2.7M1689.2,814.8l4.3,3.2M1693.5,818l6.5-3.4M1700,814.6l1.1-2M1689.3,806.7l2.8,1.2M1697.5,804.6l-3.7,2.7M1708.2,808.7l-2.6,2.3-4.5,1.6M1704.5,818.1l-4.5-3.5M1815.3,840.1l2.6,1M1814.7,841.2l2,1.2M1814.9,840.4l-.2,.8M1816.7,842.4l1.2-1.3M1819.9,839.9l-.9-.4M1819.9,839.9l.3,2M1820.2,841.9l-1.9-.6M1818.7,839.5l-.7,1.6M1797.4,866.2l2.7-1.4M1797.8,860.5l1.7,1M1800.1,864.8l-.6-3.3M1843.9,881l-4.5-3.9M1843.9,881l3.1,1.6M1839.4,877.1l.1,5.1 2.3,3.9M1846.9,876.5l-3,4.5M1841.9,873.9l-2.6,2.1M1839.3,876l.1,1.1M1834.5,889.1l.8-1.4 .3-4.1M1835.6,883.6l5.8,3M1843.5,861.8l6,2.1M1849.5,863.9l-2.4-3.3 .6-2.6M1847.7,858l-1.3-.4M1841.8,867.3l-1.9-.8M1856.6,867.6l-7.1-3.7M1857.2,860.6l1.7,1M1857.2,860.6l-9.5-2.6M1846.4,854.4l3.7-.5M1857.2,860.6l.7-2.2-2-3.1M1855.9,855.3l-5.8-1.4M1846.2,839.8l3.1,2.6M1849.3,842.4l3.1,.6M1854,842.4l-1.4,.6M1823.5,868.5l3.1-.6M1823.1,868.8l.3,2.9 1.2,2.9-.7,2.5M1829.3,875.4l-4.1,2.2M1819.4,867.4l2.4-1.5M1823.5,867.5l-1.7-1.6M1820.7,868.9l2.4-.1M1823.5,867.5l0,1M1839.3,876l-2.4-3.3-.8-.1M1835.6,883.6l-1.2-2.6M1821.8,835.8l2.4,2.2M1821.8,835.8l-.8,.1M1820.7,836.2l1,2.4M1824.2,838l-1.6,.8M1822.6,838.8l-.9-.2M1824.5,832.8l-1.1,2.5M1824.5,832.8l-.7-.9M1820.9,835.3l.1,.6M1823.4,835.3l-1.6,.5M1820.3,839.8l1.4-1.2M1821.4,840.6l1.1-.3M1822.5,840.3l-.8-1.7M1820.3,839.8l1.1,.8M1822.7,840.4l.6,.9M1823.3,841.3l1.5-.2M1822.7,840.4l1.1-.2M1824.8,841.1l-1-.9M1822.6,838.8l1.4,.9M1812.9,867.9l-1,1.4M1815.4,868.1l-2.5-.2M1811.9,869.3l.1,2.2M1746.3,835.7l3.6,3.5 .3,6.6M1746.3,835.7l2.4-6.1M1750.8,830l-2.1-.4M1750.8,830l2.2,6.4 .2,7.6M1750.2,845.8l2.5-.9M1743,837.4l3.3-1.7M1739.6,853.9l3.6-2 3.6-3 3.4-3.1M1749.1,819l-.4,4.8 0,5.8M1754.3,822.3l-1.9,3.9-1.6,3.8M1755.2,841.6l-2,2.4M1752.7,855.6l-.3-5.1 .3-5.6M1733.5,877.9l0,3.8M1737.7,882.4l-.5,1.8M1733.5,881.7l3.7,2.5M1741.9,887.8l-2.6-.9-2.1-2M1734.7,893.4l-.3-2.9 .6-3.1M1739.9,893l-2.5-.1-2.7,.5M1735,887.4l2.2-2.5M1737.2,884.9l0-.7M1730.8,881.1l-3-2.2M1730.8,881.1l1.1,2.6M1731.8,884.2l-3.4,.9M1728.4,885.1l-.4-2.9-.2-3.3M1732.7,877.8l-1.9,3.3M1727.1,876.6l.7,2.3M1733.5,881.7l-1.6,2M1733.2,886.9l1.8,.5M1733.2,886.9l-1.4-2.7M1727.3,888.5l1.1-3.4M1727.8,890.2l2.7-1.6 2.7-1.7M1732.1,895l-1.9-1-1.7-1.5M1732.1,895l-.8,3-.1,.7M1728.5,892.5l-2.1,2.3-2,2.4-1.3,1.9M1734.7,893.4l-2.6,1.6M1727.8,890.6l.7,1.9M1619.4,885.5l3.6,3.1M1620.6,881.6l6.2,1.5M1623,888.6l2.8-1.1M1625.8,887.5l1-4.4M1630.2,881.3l-1.9,1.4M1626.8,883.1l1.5-.4M1646.9,880.3l4.6,2.2M1644.6,882.1l1.6,1M1646.2,883.1l5.3-.6M1651.5,882.5l3.3,.3M1595.2,919.4l1.9,2.5M1595.2,919.4l2.9-3.6M1598.1,915.8l3.9,1.2M1595.2,919.4l-3.2-3.7-1-1M1593.6,911.2l3.2,1.4M1598.1,915.8l-1.3-3.2M1697.1,859.1l0,2.8 1,2.5M1704.7,856.2l-2.2-.8M1703.8,863.3l-4.4,1.3M1699.4,864.6l-1.3-.2M1694.5,864.7l2.7,0M1698.1,864.4l-.9,.3M1635.9,872.5l3.7-.3M1635.9,872.5l-7-3.2M1628.9,869.3l1.9-1.6 2.1-1.4M1639.6,872.2l1.9-2.8M1632.9,866.3l6.6,1M1641.5,869.4l-.9-1.4M1640.6,868l-1.1-.7M1636.2,876.6l-.3-4.1M1646,877.8l-3.8-2.9-2.6-2.7M1624.1,869l4.8,.3M1624.4,862.8l8.5,3.5M1644.8,871.1l-3.3-1.7M1632.8,859.2l3.6,2.6 1.8,2.7 1.3,2.8M1645.5,862.2l-1.5,2.1-2.3,1.5-1.1,2.2M1697.4,890.4l2.3-.8 1.9-1.2M1697.4,890.4l-2.5-4.1M1694.9,886.3l0-1.5M1694.9,884.8l4.4,.6M1701.6,888.4l-2.3-3M1703.8,890.2l-2.2-1.8M1689.9,888l1.9-.6 3.1-1.1M1706,886.4l-.4-2M1699.3,885.4l.6-3M1699.9,882.4l3.1,1.5 2.6,.5M1705.6,884.4l.2-2.4 1.2-1.7M1679.2,855.1l2.1,2.5M1675.6,858.7l3.3,.5M1678.9,859.2l2.4-1.6M1687.2,855.3l-2.2,1.2-2.2,1.3M1687.2,855.3l-.2-.7M1687,854.6l-1.6-1.1M1681.3,857.6l1.5,.2M1681.8,844.2l.3-3.6M1676.9,838.8l4.2,1M1681.1,839.8l1,.8M1673.2,863.3l0,2.1 .9,2M1673.1,863.3l-2.8,1.3-1.6,1.7M1673.5,867.7l.6-.3M1673.5,867.7l-4.4-1M1669.1,866.7l-.4-.4M1678.3,867.4l0-2.2-1.6-2.3M1678.3,867.4l-4.2,0M1676.1,862.9l-2.9,.4M1674.1,859l.7,2 1.3,1.9M1670,861.8l3.1,1.5M1667.1,865.6l1.6,.7M1680.6,868.8l-2,1.4M1678.3,867.4l2.4,1.1M1678.6,870.2l-2.4,.9-2.9,0M1673.3,871.1l.2-3.4M1669,869.4l.1-2.7M1500.2,889.7l1.9,1.9M1500.2,889.7l-3.4,.3-3.5,1.3M1502.1,891.6l-1.4,3.4-2.6,2.4M1493.3,891.3l1,4M1494.3,895.3l3.8,2.1M1499.8,883.3l.4,3.2 0,3.2M1490.7,888.8l2.6,2.5M1488.2,896.8l-1.6-3.1M1488.2,896.8l3.1-.2 3-1.3M1506.3,879.1l1,2.7M1504.5,892.2l-2.4-.6M1504.5,892.2l.9-1M1507.3,881.8l-.7,5.3-1.2,4.1M1510.1,872.1l2.3,5.1 0,4.9M1507.3,881.8l2.6-.6 2.5,.9M1517.4,884.6l-3.8,.6M1517.4,884.6l1.6-1.8M1519,882.8l.2-3.9 0-4.5M1513.1,883.2l.5,2M1513.1,883.2l1.7-5 1.6-4.2M1519.2,874.4l-2-.8M1516.4,874l.8-.4M1520.6,893.4l-2.4,1.2-2.6,.9M1515.6,895.5l-1.9-2.3-1.9-2.6M1511.8,890.6l1-2.4 .8-3M1520.3,888.9l-1.9-1.8-1-2.5M1521.7,881.3l-2.7,1.5M1522.8,872.3l-3.6,2.1M1505.4,891.2l3.1-.6 3.3,0M1512.4,882.1l.7,1.1M1511.2,869.8l5.2,4.2M1515,865.8l1.8,4.1 .4,3.7M1489,899.6l5.7,2.1M1488.2,896.8l.8,2.8M1498.1,897.4l1.7,2.5M1494.7,901.7l2.3-1.3 2.8-.5M1504.5,892.2l.7,3 1.2,2.6 1.3,2.2M1507.7,900l-2.4,1-2.7,.1M1499.8,899.9l2.8,1.2M1509.8,901.1l-.9,2.8-1.1,2.7-.8,2.8M1509.8,901.1l3.3-1.9M1513.1,899.2l2,1.4 2,1.1 2.8,.2 1.5,1.5M1521.4,903.4l-3,2.6-3.4,2.1-3.2,1.8-2.6,1.5M1507,909.4l.1,1.8M1507.1,911.2l2.1,.2M1507.7,900l2.1,1.1M1500.3,907l1.2-3 1.1-2.9M1500.3,907l2,1.4 2.6,.2 2.1,.8M1515.6,895.5l-2.5,3.7M1525,894.8l-.3,2.7-.5,2.7-1.8,2.8M1522.4,903l-1,.4M1524.2,904.5l-1.8-1.5M1524.2,904.5l-.1,2.8-.1,2.8 1.5,2.6 .3,.6M1520.5,916.4l-2.8-1.2-3.6-1.1-3.3-.9-1.6-1.8M1500.3,907l-3.9,1.8M1501.6,916.8l-1.2-2.1-1.9-1.5-1.3-2-.8-2.4M1502.5,917.1l-.9-.3M1502.5,917.1l1.2-2.1 1.6-2 1.8-1.8M1502.9,920.7l-.4-3.6M1443.4,957.3l-2.5-1.8-3.1-1.6-3.2-1.9M1443.4,957.3l.5-2.6 .3-2.7M1434.6,952l-1.9-3.5 0-.3M1435.9,933.9l-1.2-3.3-1.1-4.8M1479.5,881.6l-2.1-2.2-1.3-1.4M1434.5,922.8l1.3-1.3M1441.7,932.4l-1.4-2.3-3-4.8-1.5-3.8M1458.2,932.1l-.6,.9M1458.2,932.1l2.9,.3 3.3-.4M1461.3,942.8l.2-.7M1464.4,932l1.1,1.6M1461.5,942.1l1.7-4 2.3-4.5M1486.5,985.9l-1.5-.2M1491,981.3l-5.3-1.3M1480.5,979.8l1.7,.3 3.5-.1M1501.3,940.7l-3.9,.1-2.1,.1M1502.7,934.7l-1.4,6M1445.7,973.7l1.7-1.8 2-1.7 .8-2.3 2.1-1.6 1-2.5 .7-.7M1454.2,977.3l-2.6-.8-2.8-1.1-3.1-1.7M1454.2,977.3l2.1-2 1.4-2.5 1.7-2.1 .6-1M1460.4,968l-2.1-1.7-1.4-2.5-.8-1M1461.5,942.1l2.2-1.5 2.7-1.6 3.3-1.6 .4-.3M1444.8,950.7l3.9,.3 2.7,.1M1443.4,960.5l0-3.2M1445.5,960.7l-2-.1M1425.6,967.3l2,2.2 2.1,1.3M1425.6,967.3l-2.9,2.3-1.4,3.7M1422.2,975.7l-.5-.7M1422.2,975.7l2.2,1.9 2.5,.7 2,1.5M1429.7,970.8l.8,2.4 1.1,2.2 .1,2.5M1421.3,973.3l.4,1.7M1428.9,979.8l2.8-1.9M1422.3,985.3l-2.4-.3-2-.9M1428.7,980.8l-2.8,2.2-3.6,2.3M1428.7,980.8l.2-1M1417.9,984.1l1.2-3.3 2.1-2.3 1-2.8M1627.5,935.6l-.2-3.1M1636.2,932.8l-1.5-2-1.9-1.5M1627.3,932.5l3-1.5 2.5-1.7M1636.5,925.8l2.1,1.1 2.1,1.4 2.5,1.7M1636.5,925.8l-2.4,1.3M1634.1,927.1l-1.3,1.6M1683.1,891.6l-.1-1.4-1.4-3.6M1676,884.4l3.4-1.2M1673.7,888.5l2.3-4.1M1679.4,883.2l2.2,3.4M1647.1,920.4l2.7-2.2M1647.1,920.4l-2.3-2.2-1.8-2.3M1643,915.9l2.1-3.7 3.1-3.3M1648.6,908.7l1.7,0M1649.8,918.2l-.4-4.7 .9-4.8M1644.2,925.5l-1,4.5M1644.2,925.5l2.9-5.1M1654.2,929.2l-1.2-5.4-1.7-4.8M1649.8,918.2l1.5,.8M1662.7,929.9l2.4,3.6 2.1,1.8M1662.7,929.9l.2-6.6-2.3-5.4M1660.6,917.9l-.1-1.6M1673.8,923.4l-2.8-1.5-3.6-2.3-3.8-1.2-3.1-2.1M1673.8,923.4l-1.5,5.2-.2,3M1657.8,935.4l2.2-3.1 2.7-2.4M1654.7,929.4l2.5-3.2 2-4.1 1.4-4.2M1651.3,919l2.4-2.4 2.4-2.5 2.7-.7M1658.8,913.4l1.7,2.9M1675.9,921.4l-2.1,2M1674.8,910.2l-4.4,1.2-4.4,.9-2.7,2.5-2.8,1.5M1646,899.6l-2.2-.3M1643.8,899.3l.1-.7M1653.6,893.4l-4.2,1.5-4.3,1.5M1645.1,896.4l-1.2,2.2M1641.3,909.9l1.9-4.4M1641.3,909.9l2.2,.2 2.7-1.8M1646.2,908.3l-2-3.4M1644.2,904.9l-.7,.3M1649,902.9l.3,2.5-.7,3.3M1648.2,908.9l-2-.6M1646.3,903.1l-2.1,1.8M1343.1,1193.6l.6,2.2M1347,1197.1l-.6,.4M1343.7,1195.8l2.7,1.7M1331.8,1199l.2,.6M1332,1199.6l1.9,1.2M1335.3,1197.5l1.4,2.3M1336.7,1199.8l-2.8,1M1330,1212.9l4.3,1.7M1325.3,1215.3l1.6-1.3 3.1-1.1M1336.7,1199.8l2.5,1.3M1339.2,1201.1l-3.7,3.2M1333.9,1200.8l.8,3.6M1335.5,1204.3l-.7,.1M1330,1212.9l-1.7-2.6M1328.3,1210.3l3.4-1.4M1336.3,1213.1l-4.6-4.1M1279.6,1279.2l3.3,4.1 .3,.2M1275.1,1281.3l.6,2.5M1275.1,1281.3l3.1,1M1275.7,1283.8l4.4,1.8M1278.2,1282.3l2.1,3.2M1274.5,1280.4l.6,.9M1274.2,1285.1l-3.2-2.1M1274.2,1285.1l1.5-1.3M1279.6,1279.2l-1.4,3.1M1275.1,1286.8l-.9-1.7M1276.6,1287.7l-1.5-.9M1265.6,1289.6l1,3.5M1265.6,1289.6l-2.6-.1M1263,1289.8l2.7,3M1265.7,1292.8l.9,.3M1260.8,1286.9l2.2,2.6M1265.8,1289.5l-3.5-3.7M1265.8,1289.5l1.1,.4M1263,1285.2l3.4,1.5M1266.4,1286.7l.7,3M1267.9,1294.1l-.6-.7M1267.9,1294.1l4.8,3.1M1267.3,1293.4l2.2-.8M1269.5,1292.6l3.4,1.7M1272.7,1297.2l.8,.4M1267.3,1296l.6-1.9M1268,1296.9l-.7-.9M1268,1296.9l4.7,.3M1268.9,1291.4l-2-1.5M1268.9,1291.4l.6,1.2M1268,1296.9l-.6,1.3M1271.9,1287.2l-2.7-2.1M1271.9,1287.2l1.5,3.3M1269.2,1285.1l-1.2,2.1M1268,1287.2l2.1,1.8M1270.1,1289l3,1.8M1275.1,1286.8l-3.2,.4M1266.4,1286.7l1.6,.5M1267.1,1289.7l3-.7M1268.9,1291.4l4.1-.5M1267.4,1298.2l-.9-.2M1266.5,1298l-2.5,1.2M1397.9,1025.9l0-3.8 1-3.9 1.1-4.8M1390,1021.1l1-2.2M1391,1018.9l2.6-.7 3.2-3.1 3.2-1.7M1440.4,1005.7l.1,1.2M1440.5,1006.9l3.7,1 3.6,.1 .8,.6M1436.6,1048.1l-.5-.3-3.5-1.5M1429,1047.6l3.6-1.3M1438.3,1041.5l-2.6,1.8-2.7,2M1432.6,1046.3l.4-1M1421.9,1011.8l-.7,2.8M1411.5,1012.7l2.7,.7 3.1,1.6 3.9-.4M1421,1005.5l-3.4,.8-2.8,0M1411.5,1012.7l-.2-1M1411.3,1011.7l3.5-5.4M1440.5,1006.9l-1.3,1.7M1445.8,1013.2l-3.1,1-4.1,1.4M1439.2,1008.6l-1.3,3.9 .7,3.1M1362.5,955.1l2.2-.7M1364.7,954.4l2-2.6 1.6-2.4M1398.9,959.7l-.6,.3M1398.9,959.7l-.6-3.2M1398.3,956.5l-3.3-1.9M1395,954.6l-.4,3.4M1394.6,958l1.9,.5 1.8,1.5M1394.6,958l-2.6,3M1398.3,960l-2.1,2.7-2.3,2.4M1393.9,965.1l-1.9-3.7M1367.1,965.2l1.1-1.8M1367.1,965.2l2.2,3.4M1368.2,963.4l3.1,.1 2.7,1.1M1374,964.6l-1.5,2.8M1372.5,967.4l-2.3,1.6M1369.3,968.6l.9,.4M1360.7,961.8l6.5,.3M1365.3,965.8l1.8-.6M1365.3,965.8l-3.1-.3M1367.2,962.1l1,1.3M1364.9,969.3l4.4-.7M1365.3,965.8l-.4,3.5M1380.6,968.2l-1.2-1.7-1.8-1.5-2.2-1.5M1377.1,969.5l3.5-1.3M1377.1,969.5l-2.7-.7-1.9-1.4M1375.4,963.5l-1.4,1.1M1377.1,969.5l-2.5,2.1M1372.2,973.1l2.4-1.5M1372.2,973.1l-.6-2.3-1.5-1.7M1363.5,957.9l3.5,.9M1367.2,962.1l1.1-1.9M1367,958.8l1.3,1.4M1364.7,954.4l4.1,1.3M1367,958.8l1.8-3.1M1376.8,1018.8l.6-4.2-.5-5.2-3.6-4.1M1381.1,1006.4l-3.4-1.2-3.6-.4M1373.3,1005.3l.8-.5M1380.2,1003.6l-.8-4M1379.4,999.4l-1-5.9M1374.1,1004.8l1.3-4.3 .4-.9M1375.8,999.6l2.6-6.1M1386.5,986.4l-.5,1.1-2.7,3.7M1383.3,991.2l-4.1,.2M1380.1,981.1l-1.4,6.3M1378.7,987.4l.5,4M1383.3,991.2l-.7,4.4M1379.2,991.4l-.8,2.1M1352,968.6l1.1,2M1352,968.6l-3.2-1.6-3.1-.7M1353.1,970.6l-3.2,4.3M1349.9,974.9l-2.7-3.1-2.8-4M1344.4,967.8l1.3-1.5M1355.6,969.6l-1.8,1.2M1353.8,970.8l-.7-.2M1357.8,966.5l-2.2,3.1M1353.6,964.2l-1.6,4.4M1348.2,961.1l-2.5,5.2M1341.3,968.7l.3-.1 2.8-.8M1348.3,982.1l1.6-7.2M1348.7,982.8l1.7-2.5 3.1-4.6M1351.6,986.6l1.2-2.1M1352.8,984.5l1-5.1M1353.8,979.4l-.3-3.7M1353.8,970.8l.4,2.4M1353.5,975.7l.7-2.5M1363.5,970.5l-.7,2.4M1363.5,970.5l-2.5-1.1M1362.8,972.9l-4.9,2.5M1361,969.4l-1.5,.8M1359.5,970.2l-2,3.7M1357.9,975.4l-.4-1.3M1367.8,972.1l-4.9,4.4M1362.9,976.5l-.3-.5M1364.9,969.3l-1.4,1.2M1367.8,972.1l2.3-3M1362.6,976l.2-3.1M1361.5,966l-.5,3.4M1362.6,976l-3.1,1.8-3,4.4M1356.1,982l1.8-6.6M1355.6,969.6l3.9,.6M1354.2,973.2l3.3,.7M1352.8,984.5l3.3-2.5M1353.8,979.4l3.7-5.3M1376.6,974.9l-1.4-1.5-.6-1.8M1376.6,974.9l-4.6,3.2M1372,973.4l0,4.7M1367.8,972.1l.8,3.1M1372,973.4l-3.4,1.8M1356.7,983.9l-.2-1.7M1356.7,983.9l2.5,.8M1362.9,976.5l-.2,.8M1361.2,981.3l-2,3.4M1368.6,975.2l-1.2,2.5M1367.4,977.7l-3.4,2.8M1356.4,987.3l.6,.5M1356.4,987.3l-1.8,2.2M1357,987.8l.2,2.1M1357.2,989.9l-.9,2.2M1355.5,992.3l.8-.2M1356.7,983.9l-.3,3.4M1358.6,990l-1.4-.1M1358.6,991.4l0-1.4M1357.6,993.8l1-2.4M1357.6,993.8l-1.3-1.7M1353.2,998l.1-.1 4.3-3.6M1409.5,941.2l.6,2 1.2,1.9M1409.5,941.2l2.3-2.1M1411.8,939.1l2.8,.8 2.8,.2 1.2,.5M1412.7,945.7l-1.4-.6M1412.7,945.7l2,.3 2-.2M1416.7,945.8l1.4-2.5 .9-.9M1407.9,940.9l-2.2,1.5M1407.9,940.9l1.6,.3M1408.1,945.5l-2.4-3.1M1408.1,945.5l3.2-.4M1406.4,937.6l-.4,1.5M1407.9,940.9l-1.9-1.8M1409.4,936.1l2.4,3M1409.4,936.1l-3,1.5M1417.9,952.1l-.7,2-1.5,1.1M1415.7,955.2l-1.2-.2M1417.9,952.1l-.3-3.3-.9-3M1410.8,952.2l3.7,2.8M1410.5,951.2l.4-3.2 1.8-2.3M1410.8,952.2l-.3-1M1406.2,933l-4.9,2M1401.3,935l-1.8-2.5-.7-.5M1393.5,938.2l1.4-.2M1393.4,938.2l-1.1-2.3M1394.9,938l2.2-1.9M1395.8,933.8l1.3,2.3M1390.4,949l1.4,2.7M1390.4,949l2.5-1.7M1392.9,947.3l1.9,1.4M1392.4,952l-.6-.3M1392.4,952l2.5-3.2M1397.6,950.8l-1.8,1.3-.9,2.2M1394.9,954.3l-1.9-1.2M1397.6,950.8l-2.7-2M1393,953.1l-.6-1.1M1404,942.4l1.7,0M1404,942.4l.1,2.8M1408.1,945.5l-1,.6M1404.1,945.2l3,.9M1410.5,951.2l-2-1.5-2.2-1.4M1407.1,946.1l-.8,2.2M1398.6,947l2.7-.6M1398.6,947l-.5,3.8M1398.1,950.8l1.7,.8M1399.8,951.6l.5-2.2 1.7-1.8M1402,947.6l-.7-1.2M1397.7,945.9l1-1.6M1401.7,945.8l-.4,.6M1398.9,944.3l2.8,1.5M1397.7,945.9l.9,1.1M1400,951.7l-1.4,2.1-.3,2.7M1406.1,948.4l-4.1-.8M1405.4,949.6l.7-1.2M1400.4,951.9l2.1-1.8 2.9-.5M1404.1,945.2l-1.9,.2M1402.2,945.4l-.5,.4M1513.4,940.1l-5.1,1.7-3.3,2.3M1501.3,940.7l.4,.9M1505,944.1l-3.3-2.5M1516.1,962l-.7-.2M1516.1,962l3.7-1.5M1515.4,961.8l0-3.5 1-3.8M1519.8,960.5l-.5-4.7M1519.3,955.8l-2.9-1.3M1508.3,965.2l2.9,1.2 3.4,.7M1516.8,964.6l-.7-2.6M1508.3,965.2l1.7-2.8M1510,962.4l5.4-.6M1520.4,960.7l-.6-.2M1524,954.8l-4.7,1M1515.3,952.4l1.1,2.1M1510,962.4l-.8-1.8M1515.3,952.4l-1.9,1.2M1509.2,960.6l1.8-3.3 2.4-3.7M1868.6,824.7l4.4,0M1867.9,817l-1.2-1.9M1868.7,812l3.6,2 1.6,.4M1868.7,812l-.8,.3M1866.7,815.1l1.2-2.8M1856.9,828.7l-.8-.6M1849.6,828l1.2-.5M1856.1,828.1l-5.3-.6M1837.2,840l-5.9,.1M1829.8,838.9l3.2-.4M1837.3,839.9l-4.3-1.4M1839.7,836.7l-3.3,.5M1840.4,839.7l-2.8,0M1837.6,839.7l-1.2-2.5M1820.3,842l-.3,1.3M1820.3,842l1.7,.1M1822.3,842.7l-.5,1.2M1820,843.3l1.8,.6M1821.4,840.6l.6,1.5M1823.3,841.3l-.4,.8M1822.9,842.1l-.8,.1M1823.6,717.6l-1.6,2.5-2.9,1.1M1819.1,721.2l-3,.2M1823.6,717.6l-.7-3.5-1.2-3.6-.2-.2M1883.9,788.3l-1.9,2.5M1883.9,788.3l-.5-2.6M1883.4,785.7l-4.1,.2M1879.3,785.9l-3.1,4.9M1882,790.8l-4.4,.7M1876.2,790.8l1.4,.7M1886,792.8l-4-2M1888,790.9l-.6-.4-3.5-2.2M1881.8,796.4l0-.1-2.8-2M1879,794.3l-1.4-2.8M1864.6,549.6l7.1,1.2M1864.6,549.6l-2.1-3.2M1871.7,550.8l-4-3.2-1.5-2.8M1866.2,544.8l-3.6,.8M1862.5,546.4l.1-.8M1873.2,551.4l-1.5-.6M1863.9,551.6l1.7,1.4M1863.9,551.6l.7-2M1866.4,544.1l-.2,.7M1960.9,467.1l.7,3.6 .6,4-1.2,3.1M1948.7,471.1l1.5,.9M1948.7,471.1l4.4-.8 1.6-1.9 1.3-2.1 1.8-1.6M1961,477.8l-2.7-2.2-3.5-.8M1950.2,472l4.6,2.8M1968.6,499.8l.6-3.1-.2-2.9M1968.5,499.9l-3.3-.3-3.6,1M1969,493.8l-3,1.6-2.9,1.5-2.6,2.4M1961.6,500.6l-1.1-1M1966.2,503.7l-4.1,1.8M1962.1,505.5l-.5-2.4 0-2.5M1966.6,503.4l1.9-3.5M1972.2,520.7l1-4 .7-3.4M1970.4,512l-3,3.5-3.4,6.6-2.5,8.6-.5,4.2M1970.4,512l1.3-.5M1973.9,513.3l-2.2-1.8M1971.1,504.4l3.8-1.9M1971.1,504.4l.1,3.5 .5,3.6M1974.9,502.5l.6,2.8 2.3,2.2M1971.7,511.5l3.7-1.7 2.4-2.3M1966.6,503.4l4.5,1M1970.4,512l-4.6-1.3M1965.8,510.7l0-3.6 .4-3.4M1983.8,489l-2.7,3M1988.6,493.5l-3.2,2.4-3.2,1.6M1982.2,497.5l-.1-3.1-1-2.4M1974.9,502.5l1.3-2M1968.6,499.8l3.5-.6 3-1.4M1976.2,500.5l-1.1-2.7M1849,554.6l7.3-1M1859.7,560.5l-5.7-3.5-5-2.4M1861.4,560.9l-1.7-.4M1861.5,560.8l-.1-4.7M1856.3,553.6l5.1,2.5M1871.7,562.8l-5.1-.6-5.1-1.4M1867,557.3l-5.1-1.2M1828.6,648.8l1.7-1 3.6-.1M1835.1,652.2l.1-.3-1.3-4.2M1841.1,548.3l.6-1.5 2.4-1.9M1844.1,544.9l-2.3-2.8M1841.8,542.1l-3.8,.9-2.2,.3M1841.3,537.5l2,3M1841.8,542.1l1.5-1.6M1849,554.6l-.8-.2M1859.7,560.5l-6-.7-4.2,1.5M1849.5,561.3l-4.3-1.3M1881.1,619.7l.9-2.8M1881.1,619.7l-2.9,1.5-2.8,2-2.6,3M1863.2,613.3l2.9-2.8M1866.1,610.5l4,.2 4.2-.3 3.3,1.1M1872.8,626.2l-1.6-2.9-2.6-2.3-2.4-3.4-3-4.3M1882,616.9l-1.6-3-2.8-2.4M1866.6,602l4.8-.3 5.5,.4M1866.1,610.5l-1.2-4.4 1.7-4.1M1877.6,611.5l.3-4.6-1-4.8M1961.1,514.3l-2.6-2-2.5-1.1M1961.1,514.3l1.7-3.1M1962.8,511.2l-2.2-3.4M1960.6,507.8l-2.2,2-2.1,.7M1956.3,510.5l-.3,.7M1958.6,531.6l2-10.2 .5-7.1M1955.2,512.4l.8-1.2M1955.2,513.2l0-.8M1965.8,510.7l-3,.5M1962.1,505.5l-1.5,2.3M1960.5,499.6l-1.6,3.2-1.5,3.7-1.1,4M1990.8,532.8l-.3-3.9-1.6-3.1M1990.8,532.8l-4.5,3.5-4.3,4.2-2.3,4.3M1988.9,525.8l-3.2,2.2-2.7,2.1-2,3.3M1977.7,543.7l.4-1.5 2.9-8.8M1996,519.9l-3.7,1.9M1994,534.6l-3.2-1.8M1992.3,521.8l-3.4,4M1897,606.9l3.3-2.3 2.8-2.4 2.8-1.8 3-3 1.5-1.3M1897,606.9l1.6,2.4M1898.6,609.3l3,.7 2.5,1.9M1904.1,611.9l2.4-.7 2.5-.8 2.3-1.8 1.1-1.7M1895.8,606.3l-3.3,2.5-3,2.3-2.8,2-2.7,1.5-2,2.3M1896,623.6l1.2-2.7 .8-2.7 0-2.8 .2-2.9 .4-3.2M1886.3,628.7l-1.6-1.9-1.4-2.1-1.3-2.3-.9-2.7M1895.8,606.3l1.2,.6M1905.6,620.9l-.5-2.8-.5-2.9-.5-3.3M1908,578.7l.2,2.9 .3,3.4M1908.5,585l2.9,.9M1963.2,425.4l-.2-3.6-.6-3.2M1963.2,425.4l-3.6,2.5M1959.6,427.9l-2.2-3.6-4.9-1.5-5-1.5M1962.4,418.6l-3.2-2.9-4.4-1.6M1954.8,414.1l-3.7,4.3-3.6,2.9M1969.5,414.3l-.4,.2-3.6,2-3.1,2.1M1968.5,429.1l-2.3-2.6-3-1.1M1959.6,442.8l-1.9-2.8-1.6-2.5-2.7-1.3M1953.4,436.2l3.3-4.6 2.9-3.7M1944.8,421.5l2.7-.2M1953.4,436.2l-5.7,1.5-4.8,1.3M1956.9,407.8l-2.1,6.3M2061,477.3l-2.1-4-.9-4-1.4-3.4M2061,477.3l-2.8,2.5-2.6,3.6M2055.6,483.4l-1.5,1.2M2054.1,484.6l-.3-4.4-1.6-3.1-1.7-3.4-2-2.7M2048.5,471l2.8-2.5 3.5-2.7M2054.8,465.8l1.8,.1M2067.3,476.9l-3,.3-3.3,.1M2061,464.7l-4.4,1.2M2068.5,493.7l-5.6-3.5-4.8-3.4-2.5-3.4M2051.8,492.8l.5-3.9 1.8-4.3M2051.3,452.3l-.6,.9-1.5,2.5-2.4,1.9M2046.8,457.6l.4,3 0,3.1-.3,3.6 .4,3.8M2055.6,455.3l-.1,2.1-.8,2.9 .6,2.5-.5,3M2047.3,471.1l1.2-.1M2024.9,443.9l-3.2,3.4M2021.7,447.3l-3.7,.8-4.4,2.5M2018.5,441.9l-2.2,2.9-2.7,5.7M2018.5,456.1l-.5,1.3M2016.8,458.3l1.2-.9M2018.5,456.1l1.3-4.3 1.9-4.5M2012.8,454.2l.8-3.6M2006.2,440.7l2,3 2.2,1.5M2010.4,445.2l2.2-4.1 1.1-2M2006.5,436.8l-.3,3.9M2010.4,445.2l-1,4.4M2009.4,449.6l2.1,.2 2.1,.7M2003.1,456.1l2.2-1.2 2-1.8 2.1-3.5M2006.3,461.9l-1.4-3.1-1.8-2.7M2000.1,450.9l1.5,2.4 1,2.6M2000.1,450.9l-4.6-2.2M2002.6,455.9l-1.6,3.3-2.6,2.2-2.3,2.6-2.3,2.8M1995.5,448.7l-2.7,3.3-3.2,2.2M1989.6,454.2l-.7,3.3-.4,3.2-.5,3.1-1.4,2.8M1993.8,466.8l-3.8-.3-3.4,.1M2003.1,456.1l-.5-.2M2006.2,440.7l-1.7,3.5-2,3.6-2.4,3.1M1993.9,445.4l1.6,3.3M1997.9,470.3l-2.1-1.7-2-1.8M1978.2,448.6l3.9,1.1 3.5,2.9 4,1.6M1984.1,468.1l-2.5-.6M1984.1,468.1l2.5-1.5M1984.3,476l-.3-2.5 .1-2.7 0-2.7M2026.7,457.3l-1.6-5.3M2026.7,457.3l2.9-1.7 2.9-3M2029.2,447.2l-3.9,4.2M2029.2,447.2l1,2.6 2.6,1.4M2032.8,451.2l-.3,1.4M2030.2,445.2l-1,2M2025.2,444l-.5,3.6 .6,3.8M2039,445.9l-3.7,2-2.5,3.3M2018.5,456.1l3.4-2.9 3.2-1.2M2046.8,457.6l-3.8,2.2-4.7,2M2038.3,461.8l-1.5-3.2-2.6-2.7-1.7-3.3M2021.6,469.3l1-3.7 .7-3.6M2021.6,469.3l1.7,2.1 1.2,3.1M2024.5,474.5l2-3.7 2.7-4M2023.3,462l1.8-2.1 1.6-2.1M2026.7,457.8l1.8,4.2 .7,4.8M2019.4,469.5l2.2-.2M2018,457.4l2.5,2.7 2.8,1.9M2025.2,479.8l-.9-2.5 .2-2.8M2026.6,481.3l2.5-.6 2.8,0 2.5-1.4 2.7-1.1M2035.5,466.5l-.8,5 .9,3.8 1.5,2.9M2035.5,466.5l-3.5,.9-2.8-.6M2038.3,461.8l-2.8,4.7M2033.8,494.7l3.1-.1 2.7-1.1 2.7-.1 2.1-1.6 2.2-.5M2033.8,494.7l1.5-2.3 .7-2.7 1.4-3.1 1.7-3.5-.1-3.7M2046.6,491.3l-.6-3.3 0-3.7-.5-3.6-1.1-3.4M2039,479.4l3-.4 2.4-1.7M2030.2,497.2l1.3-1.5 2.3-1M2049.7,492.9l-3.1-1.6M2037.1,478.2l1.9,1.2M2047.3,471.1l-1.8,2.8-1.1,3.4M1948.7,471.1l-5.2-2.5-2.8-2M1953.6,461.7l-4,1-4.3,.4-3.5,.1M1941.8,463.2l-1.1,3.4M1891.5,781.8l-3.8,1.5-4.3,2.4M1891.5,781.8l-2.1-1.8-2.4-1.3-3.9,.3M1879.3,785.9l-.9-2.3M1883.1,779l-4.7,4.6M1881.8,772.2l.3,3.4 1,3.4M1881.8,772.2l3.5-1.7 3.6-.7M1888.9,769.8l3.6,1.8 1.2,.1M1795,882.3l2.2,.5M1795,882.2l2.6-4.7M1797.2,882.8l2.5-1.3M1802.2,878.5l-2.5,3M1802.2,878.5l-2.9-1.9M1799.3,876.6l-1.7,.9M1794.3,882.9l.7-.6M1793.5,875.9l1.5,2.8 0,3.5M1797.1,889l-.1-3 .2-3.2M1796.2,874.3l1.4,3.2M1804.1,884l-2.3-.7-2.1-1.8M1803.9,877.6l-1.7,.9M1800.4,874.9l-1.1,1.7M1805.1,874.1l-4.7,.8M1800.4,874.9l0-1.8M1800.4,873.1l-1.6-.8M1802,835.2l2.5-2.6M1802,835.2l2.5,.8 2.8,.8M1804.5,832.6l4.7,1.8M1809.2,834.4l-1.4,2.2M1801.2,835.5l.8-.3M1803.8,840.2l-3.4-.9M1803.8,840.2l3.5-3.4M1809.6,837.6l-1.8-1M1741.4,800.8l.1,1M1747.2,801.6l-3.1,1.6M1741.5,801.8l2.6,1.4M1745.1,806.8l-1.2,.1M1744.1,803.2l-.2,3.7M1741.5,813.6l.3-3.3 1.6-3M1743.4,807.3l.5-.4M1730.3,798.7l.3,3-.8,3.5M1733.5,801.7l-.6,1.7M1732.9,803.4l-3.1,1.8M1726.9,806.4l2.6-.7M1736.9,800.9l-.5,2M1732.9,803.4l.7,3.1M1736.4,802.9l-2.8,3.6M1741.5,801.8l-3.5,4.1M1736.4,802.9l1.6,3M1743.4,807.3l-3.1,.2-2.3-1.2M1587.6,940.6l-.7-.2M1587.6,940.6l1.7,2.7M1586.9,940.4l-6.2,2M1585.6,946.1l-1.6-1.2-3.3-2.5M1575.5,946.5l2.9-1.9 .4-2.5M1578.8,942.1l1.9,.3M1543.8,930.6l3.8,.3 3.4,1.5M1543.8,930.6l-.9,2.8-1.4,2.9M1541.5,936.3l3.3,2.5M1544.8,938.8l3.3-2 3.8-.9M1551,932.4l1.6,1.7M1551.9,935.9l.7-1.8M1548.9,924.1l1.9,0M1550.8,924.1l-.3,2.6-.3,2.7 .8,3M1542.9,929l.9,1.6M1538.1,937.5l3.4-1.2M1544.3,948.6l-.4-5 .9-4.8M1552.9,942.1l.3-3.6-1.3-2.6M1562.5,927.8l-.6,2.5-2.2,2.2M1559.7,932.5l-7.1,1.6M1551.2,924l7.1,1.5M1562.5,927.8l-4.2-2.3M1564.9,891.1l4.6-1.7M1568.8,881.2l1.3,2.6M1567,880.3l1.8,.9M1569.5,889.4l.6-5.6M1585.5,884l-2.6-3.4 .4-3.7M1585.5,884l-5.5-.7M1580,883.3l-3.6-3.5-.6-3.9M1583.3,876.9l-5-3.9M1575.8,875.9l1.8-3.1M1578.3,873l-.7-.2M1573.5,885.4l-3.4-1.6M1573.5,885.4l2.6-1.5 3.9-.6M1568.8,881.2l3.4-3.4 3.6-1.9M1587.1,869l-4.5,2.9-4.3,1.1M1587.5,876.9l-4.2,0M1575.5,868.1l2.1,4.7M1807.6,847.7l-3.7-3.2M1803.9,844.5l-3,1.1M1806.9,849l.7-1.3M1806.9,849l-3.3,.8M1803.6,849.8l-2.7-4.2M1793.8,841.8l2.2,1.8 1.6,2.6M1795.2,849.4l1.5-.9M1796.7,848.5l.9-2.3M1799.6,840l-.5,2.5 0,2.6M1797.6,846.2l1.5-1.1M1803.8,840.2l1.9,2.3M1803.9,844.5l1.8-2M1799.1,845.1l1.8,.5M1827.7,848.6l1.8,.2M1829.5,848.8l.3-1.3M1827.7,848.6l1-1M1828.7,847.6l1.1-.1M1829.9,841.3l.6,.9M1832.3,840.9l1.2,.5M1833.5,841.4l-.7,1.3M1830.5,842.2l1.5,.4M1830.8,860.3l-2.9-.9M1834,856.2l-4,1.1M1830,857.3l-1.8,1.1M1828.2,858.4l-.3,1M1834.6,855.4l-3.3-.5M1830,857.3l.5-1.8M1831.3,854.9l-.8,.6M1840.8,839.8l2.2,1.7M1849.3,842.4l-1.8,.3M1843,841.5l4.5,1.2M1845.4,846.8l-.3-2.7M1845.4,846.8l4.6-.1M1852.4,843l-.9,2-1.5,1.7M1847.5,842.7l-2.4,1.4M1842.2,844.3l2.9-.2M1842.2,844.3l-.6,1.9M1845.4,846.8l-1.5,.8M1843.9,847.6l-2.3-1.4M1869.8,855.3l-.9-.6-4.7-4M1865.7,858.7l-5.9-3.2M1859.8,855.5l-3.5-4.2M1864.2,850.7l-4.3-1.1M1859.9,849.6l-3,1.1M1856.3,851.3l.6-.6M1867.7,843.4l4.5,3.3 6.9,3.5 .7,.9M1865.9,843.4l-1.3,2.1 .7,3.1-1.1,2.1M1855.9,855.3l3.9,.2M1852.6,843l2.9,1.8 2.2,2.2 2.2,2.6M1850,847l3.1,1.8 3.8,1.9M1836.6,842.9l1.6,.7M1836.6,842.9l-.4-1.5M1838.2,843.6l2.4-.6M1837.6,840.7l-1.4,.7M1837.6,840.7l2.8,1.9M1834.3,843.1l2.3-.2M1833.1,842.8l1.2,.3M1833.5,841.4l2.7,0M1837.2,840l.4,.7M1843,841.5l-2.6,1.1M1842.2,844.3l-1.6-1.3M1834,845l1.5,2M1834,845l1.4-.4M1835.4,844.6l2.8,.5M1835.5,847l3.8-.5M1838.2,845.1l1.2,1.3M1834.3,843.1l1.1,1.5M1838.2,843.6l0,1.5M1839.1,849.4l-3.2-.2M1834.8,847.5l1.1,1.7M1839.1,849.4l.2-2.9M1834.8,847.5l.7-.5M1841.6,846.2l-2.2,.2M1823.5,867.5l2.1-1.7M1822.2,865.1l1.1-.2M1821.8,865.9l.4-.8M1823.3,864.9l2.3,.9M1825.6,865.8l1.1-.2M1823.7,862.1l1.2,1.2M1823.7,862.1l1.6-1.2M1825.3,860.9l1.5-.6M1826.8,860.3l.1,2.7M1826.9,863l-2,.3M1828.4,863.4l-1.5-.4M1827.9,859.4l-1.1,.9M1823.3,864.9l1.6-1.6M1806.9,849l2.9,1.3M1811.9,847.9l-4-.2M1811.9,847.9l-.4,2.5M1811.5,850.4l-1.7-.1M1640.5,885.9l-2.1-.9M1642.6,884.5l-2.1,1.4M1639.7,882.7l2.9,1.8M1639.7,882.7l-2.4,1M1638.4,885l-1.1-1.3M1631.1,881.4l5.3,2.1M1639.6,882l.1,.7M1636.4,883.5l.9,.2M1637.9,887.2l.5-2.2M1640.5,885.9l.5,.8M1637.9,887.2l2.2,.8M1641,886.7l-.9,1.3M1622,894l3.4,2.5M1622,894l2.6-2.3M1625.7,892.3l-1.1-.6M1626.6,893.3l-1,3.2M1626.6,893.3l-.9-1M1623,888.6l1.6,3.1M1621.6,893.9l-4.4-5.9M1611,886.9l1.1,4M1612.1,890.9l4.4-1.5M1617.2,888l-.7,1.4M1616.5,889.4l1.1,5.5M1621.6,893.9l-.1,2.7M1621.5,896.6l-3.9-1.7M1625.4,896.5l-1.9,3.2M1621.5,896.6l2,3.1M1642.6,884.5l.9,.3M1646.2,883.1l-.1,1.7M1643.5,884.8l2.6,0M1641,886.7l2,.2M1643.5,884.8l-.5,2.1M1654.8,882.8l-3.6,1.3-2.7,1.8M1646.1,884.8l2.4,1.1M1652.7,887.8l-3.4-.8M1649.3,887l-.8-1.1M1626.2,927.9l3.6,.3 3,.5M1634.1,927.1l-2.1-1.6-1.5-2.1M1626.2,927.9l1.8-2 1.4-2.1M1630.5,923.4l-1.1,.4M1625.3,918.2l-5.3-2.3M1625.3,918.2l0,1M1625.3,919.2l-.7,.4M1624.6,919.6l-5.9,0M1620,915.9l-2,3M1618.7,919.6l-.7-.4M1626.2,917.3l-.9,.9M1626.2,917.3l-1.5-2.9M1624.7,914.4l-5.6-.6M1619.1,913.8l.9,2.1M1618.4,921.2l.3-1.6M1619.7,923.7l-1.3-2.5M1619.7,923.7l2.3,.3M1622,924l2.3-.6M1624.3,923.4l.3-3.8M1617.9,912.4l1.2,1.4M1614.1,914.3l1.1,2 2.8,2.6M1613.9,917.5l-1.3-2.4M1613.9,917.5l1.9,1.3M1615.8,918.8l2.2,.4M1699.4,864.6l.3,3.6M1704.9,865.3l-1.3,3.5M1699.7,868.2l3.9,.6M1704.3,871.4l.8,.4M1704,871.1l-.4-2.3M1697.2,864.7l-1,1.8-1.4,1.7M1699.7,868.2l-1.1,.5M1694.8,868.2l3.8,.5M1691,866.3l2.5,2.3M1694.8,868.2l-1.3,.4M1691,866.3l-3.4,1M1687,869.4l.6-2.1M1687,869.4l2.3,.8M1689.3,870.2l3.9-1.3M1688.4,886.9l-.8-1.8M1694.9,884.8l-2.4-2.2M1692.5,882.6l-2.4,1.5-2.5,1M1680.6,880.7l-1.2,2.5M1680.6,880.7l2.5-.7 2.4,.4M1681.6,886.6l1.7-2.4 2.3-1.6M1685.6,880.5l0,2.1M1687.6,885.1l-2-2.5M1676.7,862.9l1.9-.3M1678.9,859.2l.1,2.8M1678.6,862.6l.4-.6M1682.8,857.8l1.8,2.6M1679,862l3.1-.7 2.5-.9M1688.8,856.1l-1.6-.8M1687.1,860.7l-1.5,.1M1685.6,860.8l-1-.4M1690.2,829.7l-2.6,6.6M1690.2,829.7l-2.7-4.2-2.2-5.4M1687.6,836.3l-4.2-3.7M1683.4,832.6l-.7-5.3M1682.7,827.3l.2-5.1M1682.9,822.2l.9-1.6M1683.8,820.6l1.5-.5M1673.7,833.6l5.1-2.6 3.9-3.7M1681.1,839.8l1.3-3 1-4.2M1676.8,821.5l3.2-.2 2.9,.9M1682.8,808.9l-1.4,6.6 2.4,5.1M1689.2,814.8l-1.8,3.1-2.1,2.2M1682.1,840.6l4.2,1.4M1684.7,848.9l4-1.7M1688.7,847.2l-2.4-5.2M1687.6,836.3l.6,2.2M1686.3,842l1.9-3.5M1703.9,823.1l-1.8,2.4M1693.5,818l-.5,7.8M1702.1,825.5l-5.1,.3-4,0M1690.2,829.7l1.1,0M1693,825.8l-1.7,3.9M1706.8,842.1l-2.8,.3M1702.5,855.4l-.1-3.2 .2-3.7 .4-4.4M1704,842.4l-1,1.7M1710.8,830.4l-4.7,2.2M1704,842.4l.4-5 1.7-4.8M1702.1,825.5l-.1,2.4M1706.1,832.6l-1.7-2.4-2.4-2.3M1681,868.4l1-.2M1681,868.4l.7-2.3-.6-2.3M1682,868.2l1.4-1.9 2.1-1.3M1681.1,863.8l3.5,.5M1684.6,864.3l.8,.6M1678.6,862.6l2.5,1.2M1686.7,869.5l-2.2-.8-2.5-.5M1687.6,867.3l-2.1-2.3M1685.6,860.8l-1.1,1.6 .1,1.9M1689.4,863.6l-4,1.3M1681,877.3l-.4-3.5M1681,877.3l1.9-1.1 1.9-1M1685,872.5l-2.9-.3M1685,872.5l.3,1.9M1682.1,872.2l-1.5,1.6M1685.3,874.4l-.5,.8M1685.5,880.4l-.5-2.7-.2-2.5M1680.7,877.9l.3-.6M1680.7,877.9l-.1,2.8M1686.7,869.5l-1.7,3M1680.6,868.8l1.1,1.6 .4,1.8M1678.6,870.2l-.4,3.8M1678.2,874l2.4-.2M1674.7,874.4l2.7,.1M1674.7,874.4l-2.1,2.5M1677.4,874.5l-.6,4M1672.6,876.9l-1.1,4.2M1671.5,881.1l3.2-.4M1674.7,880.7l2.1-2.2M1673.1,871.4l1.6,3M1678.2,874l-.8,.5M1668.3,876.1l2.2,.2 2.1,.6M1680.7,877.9l-2,.6-1.9,0M1676,884.4l-1.3-3.7M1547.6,913.3l1.1-.9M1550.2,909.4l-1,2.1M1543.2,913.1l.3,0 4.1,.2M1536.6,911l-.7-.8-.6-3.3-.4-3.3M1550.2,909.4l-1.6-3.1-3.2-2.6M1545.4,903.7l-3.7-1.3M1534.9,903.6l3.2-.7 3.6-.5M1524.2,904.5l2.7-1 2.7-.6 2.9-1.8M1534.9,903.6l-2.4-2.5M1564.3,900.2l1.2,2M1565.5,902.2l-.5,2.9M1564.3,900.2l-7.5-.7M1559.4,907.3l-1,.1M1556.8,899.5l-.2,3.9 1.8,4M1554.8,897.4l.3,.7M1555.8,894.1l-1,3.3M1564.6,894.6l-.3,5.6M1556.8,899.5l-1.7-1.4M1427,963.7l3.4-.5 3-.5M1427,963.7l-1.1-2.9-2.6-3.4-2.4-3.5M1420.9,953.9l6.5,1.3M1427.4,955.2l4.1,2.6 2.3,2.6M1433.4,962.7l.6-1.4M1434,961.3l-.2-.9M1425.5,964.9l1.5-1.2M1425.5,964.9l.1,2.4M1434,966.7l-1.9,2.3-2.4,1.8M1434,966.7l-.6-1.9 0-2.1M1419.4,961.7l3.2,1.6 2.9,1.6M1419.4,961.7l-2.6-3.2-1.1-3.3M1417.9,952.1l3,1.8M1426.5,947.8l-.3,1 .8,3.4 .4,3M1434.6,952l.5,3.3-.4,2.7-.9,2.4M1443.4,960.5l-2.6,.3-2.3,.3-2.3,.6-2.2-.4M1480.5,916.5l2.3-2.5M1481.8,909.3l1,4.7M1481.8,909.3l-2.3-.3M1479.2,916.7l1.3-.2M1479.5,909l-.5,7M1490.2,919.7l-1.7-1.9-1.6-1.9M1490.2,919.7l-1.5-2.5-.1-3.5M1488.6,913.7l-1.7,2.2M1483.8,907.3l2,4.3M1481.8,909.3l2-2M1483,914.2l2.8-2.6M1458.5,931.2l0-4-2.1-4.2-1.4-4M1458.5,931.2l1.9-4.7 2.3-3.6M1455,919l3.9,2.1 3.7,1.6M1458.2,932.1l.3-.9M1464.4,932l1.1-3.5 .9-3.8M1466.4,924.7l-3.7-1.8M1476.8,905l2.7,4M1476.8,905l-1,1.6M1479,916l-1.9-2.2-2.7-.5M1475.8,906.6l-1.4,6.7M1467.7,891.2l-2.1,1M1479.2,896.2l-.1-1.6M1476.5,901.4l1.8-2.1 .9-3.1M1476.5,901.4l-3.6-2.2-3.4-1.2-3-.5M1466.5,897.5l-.4-1M1466.1,896.5l-.5-4.3M1464,887l.4,2.1 1.1,2.9M1442.9,931.9l-.3-2.8 .2-4.4 .1-4.2M1442.9,920.5l-1.5-1.9-1.9-.4M1435.8,921.5l.5-.9M1436.3,920.6l3.2-2.4M1443,920.5l3.7-3.3M1443,920.5l2.7,2.6 4.9,3.6 1.8,3.2M1446.7,917.2l4.1,2.3M1453.3,930.3l-.2-4.9-2.3-5.9M1439.5,918.2l1.8-3.2 1.8-2.8M1448.9,911.7l-3.1,.2-2.7,.3M1449.1,912l-1.5,2.6-.9,2.6M1449.1,912l4.2,.3M1453.3,912.3l1.9,4M1454.5,918.3l.7-2M1454.5,918.3l-3.7,1.2M1454.5,918.3l.5,.7M1465.5,933.6l1.8,.2M1479.6,922.8l-.1-1.1-.3-5M1479.1,916.6l-3.2,4M1475.9,920.6l-.7,3.8M1475.4,926.2l-.2-1.8M1466.4,924.7l.6-.2M1471.6,930.9l-.7-.9-1.1-3.1-2.8-2.4M1389.9,994.5l-.1,3.6M1416,985l-.6-5.3M1421.7,975l-3.3,1.6-2.9,2.2M1416.1,985.2l1.8-1.1M1415.5,978.8l-.1,.9M1473.7,956l-.3,1.2 1.1,3.5M1474.5,960.7l-.5,.8M1454.7,982.7l.1-2.8-.6-2.6M1485.4,956.5l-2.6-2.4-1.2-.9M1485.4,956.5l.8,3.5 1.5,3.5M1474.5,960.7l1.1,.4M1477.7,961.9l2.8,2.7 3.2,1.5M1487.7,963.5l-4,2.6M1474.2,970.7l2,.1 2.7,.2 2.7,0 3.2,0M1483.7,966.1l.2,2.5 .9,2.4M1485.4,956.5l5.1-1M1492.2,944.9l2.1,2.8M1490.5,955.5l1.6-3.8 2.2-4M1501.7,941.6l-1.8,3.4-3.2,2.5M1494.3,947.7l2.4-.2M1433,977.9l1.1-2.1 .3-2.4 .6-2.3 1.5-1.9M1433,977.9l2.9,1.7 3.4,.9M1439.8,980.4l1.6-2.4 2.2-2 1.6-2.2M1445.2,973.8l-2.6-1.3-1.9-1.6M1440.7,970.9l-2.4-1.5M1438.3,969.4l-1.8-.2M1434,966.7l2.5,2.5M1431.7,977.9l1.3,0M1434.2,991.6l1.4-3 1.6-2.8 1.1-2.8 1-2.5M1428.7,988.1l0-3.7 0-3.6M1449.3,987l-2.5-1.7-2.1-1.9-2.3-1.7-2.6-1.3M1447.5,963.5l-.6,.7-2,2.5-2.6,2-1.6,2.2M1443.5,960.6l-.7,1.3M1442.5,962.4l-.3,.6-2.1,2-.6,2.4-1.2,2M1657.4,902.2l-2.9,2.7-3.6,3.4M1657.4,902.2l4.3,0M1650.9,908.3l2.7,1.3 2.4,1.4 2.7,1M1658.7,912l1.3-4.3 2.7-3.3M1661.7,902.2l1,2.2M1655,900.1l2.4,2.1M1650.3,908.7l.6-.4M1664.4,896.4l-.7,2.9-2,2.9M1658.8,913.4l-.1-1.4M1674.2,904.8l-4.3,0-4.1,.3-3.1-.7M1643.5,905.2l-.5-4.8M1643.8,899.3l-.6,.5M1643.2,905.5l-2.8-1M1643,900.4l-2.6,4.1M1624.3,923.4l5.1,.4M1630.5,923.4l1.3-1.7M1625.3,919.2l5.9,.5M1631.8,921.7l-.6-2M1636.5,925.8l.7-2.6 .9-2.8M1631.8,921.7l3.3-.7 3-.6M1644.2,925.5l-2.3-1.9-1.6-2.3-1.3-2.6M1638.1,920.4l.9-1.7M1643,915.9l-3.7,1.3M1639,918.7l.3-1.5M1338.4,1195.9l.1,.3 1.3,4.6M1341,1205.5l-.6-3.3M1341,1205.5l3,1.4M1340.4,1202.2l4.8,2.3M1339.8,1206.1l-4.3-1.8M1339.7,1201l.7,1.2M1339.8,1206.1l1.2-.6M1346.4,1197.5l-1.6,4.1M1344.8,1201.6l.4,2.9M1330.7,1207l1.1-2.4M1330.7,1207l-3.7-1.8-.1,0M1330.6,1203.3l1.2,1.3M1330.6,1203.3l-3.2-.3M1328.3,1210.3l-2.2-.5M1331.7,1208.9l-1-1.9M1332,1199.6l-1.4,3.7M1334.7,1204.4l-2.9,.2M1335.9,1207.1l-2.7,2M1335.9,1207.1l4.6,2.1M1333.2,1209.1l6.1,1.4 1.3,.5M1340.5,1209.2l1.1,.7M1331.7,1209l1.5,.1M1334.8,1204.4l1.1,2.7M1339.8,1206.1l.7,3.1M1267.3,1296l-2-.8M1265.3,1295.2l.3-2.3M1266.5,1298l-2.5-1.5M1264,1296.5l.9-1.3M1260.1,1295.4l-.9,1.5M1257.9,1293.1l2.2,2.3M1261.3,1296.7l0,1.5M1261.3,1296.7l1.7,.3M1263,1297l.4,1.8M1261.3,1298.2l2.1,.6M1260.4,1298.4l.9-.2M1260.1,1295.4l1.2,1.3M1262.4,1295.4l-2.3,0M1263.5,1296.4l-.5,.6M1263.5,1296.4l-1.1-1M1264,1299.2l-.6-.4M1415.4,979.7l-2.9,.3-2.8,2.1M1416,985l-2.3,.5-1.7-1.6-2.1-.1M1409.9,983.8l-.2-1.7M1401.2,1010.8l-.7,1.9M1401.2,1010.8l4.1-4.4 3.5-3.2M1400.5,1012.7l2.5,1.3 2.1,2.8M1408.8,1003.2l-.7,4.8 .5,4.1M1405.1,1016.8l3.5-4.7M1406.1,1025.3l0-4.4-1-4.1M1400,1013.4l.5-.7M1423.2,1046l1.5-1.3M1429,1047.6l-1.2-2.8M1424.7,1044.7l3.1,.1M1404.7,1041.4l1.8-1.5 2.1-1.6 2.5-1.3 2.3-2.4M1410,1044.7l4.2-2.3M1413.4,1034.6l.2,.6M1413.6,1035.2l.7,3.7-.1,3.5M1418.9,1045.7l-.9-3.3M1414.2,1042.4l3.8,0M1406.9,1026.9l2.4-.3 2.5-.1M1413.5,1034.1l-1.3-3.3-.4-4.3M1411.5,1012.7l0,5.6 1.6,5.3M1421.3,1015l-3.2,6.3M1418.1,1021.3l-2.6,1.5-2.4,.8M1411.3,1011.7l-2.7,.4M1411.8,1026.5l1.3-2.9M1413.5,1034.1l3.5-2 3.7-2M1418.1,1021.3l2.1,3.1 .9,3.7M1421.1,1028.1l-.4,2M1419.1,998l-3.2,4M1419.1,998l1.3-5.8M1415.9,1002l-1.8-1.3-1.6-1.6M1412.5,999.1l2.5-5.9M1420.4,992.2l-1-.9M1419.4,991.3l-3.5,.7M1415.9,992l-.9,1.2M1424.9,996.6l-2.8,.5-3,.9M1414.8,1006.3l1.1-4.3M1428.2,988.7l-3.7,2.1-4.1,1.4M1409.3,1001.9l.9-1.3M1410.2,1000.6l2.3-1.5M1408.8,1003.2l.5-1.3M1422.3,985.3l-1.1,2.9-1.8,3.1M1415.7,986.5l-.2,3 .4,2.5M1416.1,985.2l-.4,1.3M1438.6,1015.6l-.3,.6M1444.3,1017.5l-1,.2-4.2,2M1438.3,1016.2l.8,3.5M1439.8,1023.6l1.9,0M1439.8,1023.6l-.9-3.6M1380.8,968.1l3.5-3.9M1380.8,968.1l1.5,2.4 0,.1M1388.4,966.7l-1.8-1.1-1.3-1.9M1388.4,966.7l-1.8,4.7M1384.3,964.2l1-.5M1382.4,962.5l1.9,1.7M1376.8,963l5.6-.5M1376.8,963l-1.2,.3M1376.6,974.9l1.9-.5M1393.8,969.9l.1-4.8M1392,961.4l-1.4,3.1-2.2,2.2M1393.8,969.9l-2.5,1.9M1391.3,971.8l-2.2-.6-2.5,.2M1389.2,981l.5-.4 2.4-1.7M1392.1,978.9l-.3-3.7-.5-3.4M1375.6,963.3l-.4-.8M1368.3,960.2l2.9-.2M1375.2,962.5l-4-2.5M1371.2,960l.8-1.9 1.2-1.9M1368.8,955.7l2.2-.5M1371,955.2l2.2,1M1366.8,1000.5l-.2,1.4M1367.9,989.9l0-5 1-4.2M1369.1,999.3l-.6,2.1M1373.2,989.3l-.3-4.7 .4-3.6M1368.5,1001.4l-1.6,.8M1368.9,980.7l2.7-1.7M1373.3,981l-1.7-2M1363.9,981.6l1.8,3.5 2,4.8M1367.4,977.7l1.5,3M1373.3,1005.3l-4.8-3.9M1378.7,987.4l-5,1.8M1380.1,981.1l-2.1-.5M1376.3,980.3l-3,.7M1371.2,1020.6l0-.7-.3-4.5-1.1-6-2.9-7.2M1372,978.1l-.4,.9M1366.6,1001.9l-.7,.8M1357.6,994.3l.5,.4M1358.2,997.9l-.1-3.2M1406,939.1l-3.1,.8M1404,942.4l-1.3-.3M1402.9,939.9l-.2,2.2M1402.2,945.4l-.7-2.9M1402.7,942.1l-1.2,.4M1398.9,944.3l2.3-1.7M1399,939l.2-2.6M1399,939l1.1,.5M1400.1,939.5l1.9,0M1402,939.5l.3-3.2M1399.2,936.4l2-.8M1402.3,936.3l-1.1-.7M1397.1,936.1l2.1,.3M1394.9,938l2.8,1.5M1397.7,939.5l1.3-.5M1399.7,941.8l1.5,.8M1402.9,939.9l-.9-.4M1399.7,941.8l.4-2.3M1406.4,937.6l-4.1-1.3M1401.3,935l-.1,.6M1397.7,945.9l-1.5,.1M1394.8,948.7l.8-2.2M1395.6,946.5l.6-.5M1397.6,943.4l-1.5-.1M1397.6,943.4l.8-1.6M1396.1,941.5l-.3,1.6M1396.1,941.5l1.2-.7M1397.3,940.8l1.1,1M1398.7,944.3l-1.1-.9M1396.2,946l-.1-2.7M1399.7,941.8l-1.3,0M1393.5,938.2l.8,2.2M1397.7,939.5l-.4,1.3M1394.3,940.4l1.8,1.1M1513.5,971.4l-4.9,4M1514.6,980.1l-3-2.4-3-2.3M1503.4,980.1l1-1.6M1513.2,982.2l-.3-.1-4.7-2.2-3.8-1.4M1508.3,965.2l-1.5,1.1M1513.5,971.4l-3.8-1.5-3-2.4M1506.8,966.3l-.1,1.2M1515,949.3l-5.3,.9-3.5-1.4M1513.4,953.6l-4.7,2.3-3.4,0M1505.3,955.9l1.5-3.8-.6-3.3M1505,944.1l.3,3.7M1506.2,948.8l-.9-1M1496.7,947.5l2.5,1.6 1.1,3M1505.3,947.8l-2.3,2.7-2.7,1.6M1494.7,956.7l2.6-2.4 2.9-1.8M1494.7,956.7l-4.2-1.2M1870.4,809.9l3.4,1.3 .7,0M1870.4,809.9l.2-.8M1870.6,809.1l2.1-2.2M1875.8,808.2l-3.1-1.3M1868.7,812l1.7-2.1M1864.9,820.2l-1-.1M1861.7,824.6l-1.2-.8M1860.5,823.8l2.1-3.2M1863.9,820.1l-1.3,.5M1853.9,820.7l3.8-1.3M1853.9,820.7l2.6,3.4M1857.7,819.4l-.1,2.5 1.3,2M1856.5,824.1l1.6,.1M1858.9,823.9l-.8,.3M1853.5,820.7l-1.3,.6M1852.2,821.3l-.2,4M1852,825.3l4.5-1.2M1858.2,819l4.4,1.6M1858.2,819l-.5,.4M1860.5,823.8l-1.6,.1M1856.1,828.1l2-3.9M1850.8,827.5l.9-2M1878.4,783.6l-4.8,1.2-3-1.2M1876.2,790.8l-2.5,.2M1873.7,791l-2.7-3.3-.4-4.1M1854.5,783l-3.6-1-3.3-.1M1854.5,783l-.9,4.1M1844.5,791.7l3.1,0 3.6-.8M1851.2,790.9l2.4-3.8M1854,804.1l5.8-.4M1859.8,801.5l0,2.2M1859.8,801.5l-4.3-2.2M1854,804.1l-1.9-1M1855.5,799.3l-3.4,3.8M1851.2,790.9l1.9,4.4M1844,793.9l2.4,2.6 2.7,2.1M1849.1,798.6l4-3.3M1858.4,789.6l-4.8-2.5M1856.4,795.1l-1,.6M1856.4,795.1l2-5.5M1853.1,795.3l2.3,.4M1830.5,837.1l.8-1.1M1830.5,837.1l2.5,1.3M1833,838.4l1.1-2M1831.3,836l2.4,.1M1828.1,837.5l2.4-.4M1829.6,838.9l-1.5-1.4M1836.4,837.2l-2.3-.8M1836.5,834.7l-2.4,.4M1836.5,834.7l.2-1.8M1834.1,835.1l-2-2M1836.7,832.9l-3.1-.4M1833.6,832.5l-1.5,.6M1839.8,836.6l-3.3-1.9M1833.7,836.1l.4-1M1838.5,832.2l-1.8,.7M1832.7,829.7l.9,2.8M1827.4,837.4l-2.1-1.3M1827.4,837.4l-1.7,.9M1825.7,838.3l-.9-.1M1825.1,836.1l-.5,2M1826.9,839.1l-1.2-.8M1828.1,837.5l-.7-.1M1826.8,840.4l-2-.8M1824.8,839.6l0-1.4M1823.4,835.3l1.7,.8M1824.8,839.6l-.8,.1M1825.2,828.1l1.2,.7M1832.7,829.7l-2.8,.2M1826.4,828.8l3.5,1.1M1843.5,657.2l1.8-1.5 3.5-3.1M1845.2,664.2l2.1-1 2.9,.2M1848.8,652.6l2.8,.5 2.7,.1 2.7,0M1857,653.2l-1.8,2.9-.1,3.1M1850.2,663.4l2.5-2.2 2.4-2M1786.7,753.3l1,.3 2.4,.7 2.2,1.5M1790.9,765.1l1.6-2.7-.9-2.9 1.2-3.2M1792.3,755.8l.5,.5M1815.3,726.6l1.7,.3 3.9,1.4 3.1,1.3M1819.1,721.2l3.1,1.4 2.5,1.7M1824,729.6l.9-2.4-.2-2.9M1828.1,731.7l1.2-2.7 .5-3.2 .6-3.5M1828.1,731.7l-2-.4-1.8-1.3M1824.7,724.3l2.3-1.8 1.7-2.5M1830.4,722.3l-1.7-2.3M1823.6,717.6l2.5,1.7 2.5,.5M1840.7,812.5l-4.3-1M1836.4,811.5l-.2-2.7 .4-2.9M1840.7,812.5l1.4-2.2M1836.6,805.9l2.9-.1 2.5,.1M1842.1,810.3l-.1-4.4M1838.9,822.1l.6-1.2M1826.3,815.4l3.2,1.6 5.2,1.5 4.6,1.7M1839.5,820.9l-.2-.7M1846.2,827.5l-.5-3.2M1839.5,820.9l3.3,1.9 2.9,1.5M1825.8,811.2l2.7,1 3.9,.2M1832.4,812.4l2.2,2.4 2.1,2.7 2.6,2.7M1851.7,825.5l-3.9-2M1852.2,821.3l-3.4,.1M1848.8,821.4l-1,2.1M1845.7,824.3l2.1-.8M1835.9,805.1l1.1-2.5M1835.9,805.1l-3.9,1.4-3.4,.5-2.8,1.3M1837,802.6l-1.9-2.1-2.7-1.5M1825.8,808.3l1.6-2.7 2-2.7 1.4-3M1830.8,799.9l1.6-.9M1836.6,805.9l-.7-.8M1842,805.9l1.7-2.1M1843,796.6l.5,3.6 .2,3.6M1843,796.6l-2.5,3.3-3.5,2.7M1824.6,809.1l1.2-.8M1836.4,811.5l-4,.9M1833.8,795.5l-1.4,3.5M1843.3,795.3l-.3,1.3M1823.8,797.2l3.5,1.1 3.5,1.6M1822.9,797.9l.9-.7M1830.9,791.1l1.7,.2M1823.8,797.2l1.1-3.9M1824.9,793.3l2.9-.8 3.1-1.4M1863.5,810l1-.5M1864.5,809.5l.7-2M1862.4,804.7l2.8,2.8M1862.4,804.7l-1.9-.2M1863.5,810l-3.6-.6M1860.5,804.5l-2.2,3.2M1859.9,809.4l-1.6-1.7M1854,804.1l.5,4M1860.5,804.5l-.7-.8M1858.3,807.7l-3.8,.4M1955.2,512.4l-2.6-2M1952.6,510.4l-3.5,4.7M1951,525l-.7-5.3-1.2-4.6M1889.2,527.7l3.6-1.3 .8-3.3M1889.2,527.7l4.9,3.1 2.8,1.2M1899.8,530.6l-1.6-2.6-4.6-4.9M1887.7,527.2l1.5,.5M1882.7,524.1l.9-2 3-1.1 .9-2.4M1893.6,523.1l-2.8-2.8M1890.8,520.3l-3.3-1.7M1877.5,516.3l5,.1 4.2,1.4M1887.5,518.6l-.8-.8M1977.9,483l.4,2.7 .6,2.8-.5,2.8M1977.9,483l-2.6-1.4-2.7-1.6M1972.6,480l-.5,.3M1972.1,480.3l.7,2.9 1,2.7 .6,2.8-1,2.7M1973.4,491.4l3.4,1M1976.8,492.4l1.6-1.1M1981.1,492l-2.7-.7M1982.4,482.3l-2.3,0-2.2,.7M1973,478l-.4,2M1970,492.2l3.4-.8M1970,492.2l-1,1.6M1975.1,497.8l1.2-2.7 .5-2.7M1982.2,497.5l-.8,2.8M1981.4,500.3l-2.6,.3-2.6-.1M1969,481.4l-1.3,3.1 1,3.3-.9,3M1969,481.4l-3.6-.4-3.1,0M1962.3,481l-1.1,2.3M1961.2,483.3l.8,3.5 2,3.2M1964,490l3.8,.8M1970,492.2l-2.2-1.4M1972.1,480.3l-3.1,1.1M1961,477.8l1.3,3.2M1954.8,474.8l.1,3.8-1.2,3.4-.4,3.5M1953.3,485.5l2.6-1.4 3,.4 2.3-1.2M1962.4,490.6l1.6-.6M1962.4,490.6l-3.2-1.2-3.1,0M1953,486l3.1,3.4M1954.1,499.2l.7-3.9M1954.1,499.2l2.8,.8 3.3-.7M1960.4,496.2l-1.6-1.6-2.5-.7M1960.4,496.2l.1,3M1954.8,495.3l1.5-1.4M1952.9,500.7l-1,4.3M1952.6,506l-.7-1M1952.9,500.7l1.2-1.5M1952.6,506l3.9-3.5 3.7-3.2M1962.4,490.6l-1.3,2.6-.7,3M1956.1,489.4l.2,4.5M1952.6,506l0,4.4M1977.8,507.5l4.6,1.1M1981.4,500.3l2.7,3.8M1982.4,508.6l.4-2.5 1.3-2M1993.3,499.1l-1.4,4.3M1984.1,504.1l4.1,.2 3.7-.9M1996.7,511.5l-1.9-1.3M1994.8,510.2l-1-3.5-1.9-3.3M1856,552.3l4.7-1.3M1856,552.3l-5.7-3.2M1853,547.5l4,.8M1853,547.5l-2.7,1.6M1857,548.3l3.9,2.4M1856.3,553.6l-.3-1.3M1861.9,556.1l-1.2-5.1M1844.7,550.8l2.2-.4 3.4-1.3M1852.2,546.8l1.9-1.7 3.8-1.1M1862.6,545.6l-4.7-1.6M1862.5,546.4l-2.3,1-3.2,.9M1852.2,546.8l.8,.7M1852.2,546.8l-4-1.7M1844.1,544.9l4.1,.2M1863.9,551.6l-3-.9M1879.9,642.1l2.1-4M1873.5,645l2.3-1.1 2.1-.9 2-.9M1873.5,645l-1.7-1.2-2.4-.5-1.5-1.6M1882,638.1l-1.7-1.8-1.9-1.5-2.3-.5-2.3-1.5-2.8-.8M1867.9,641.7l1.5-2.3 1.2-2.3 .6-2.5-.2-2.6M1882.5,637.6l-.5,.5M1872.8,626.2l-2.3,4.4M1870.5,630.6l.5,1.4M1848.8,652.6l2.1-3.8 1-3.2M1840.4,653.2l.2-1.3 1-3.8 1.5-3.1M1843.1,645l6-.4M1851.9,645.6l-2.8-1M1857.8,652.5l-.8,.7M1857.8,652.5l.8-2.2 .9-2.2 .8-2.1 1.5-2.2M1851.9,645.6l3.6-.8 3.1-.2 3.2-.8M1859.4,632.8l2.4-.3 2.2-.8 2.2-1.3M1859.4,632.8l-.8,2.1 1,2.5-.6,2M1867.9,641.7l-3.1,.8-2.8,1.1M1866.2,630.4l4.3,.2M1859,639.4l1.6,2.2 1.4,2M1871.9,649.5l-3.1,1.6-2.9,1.9M1857.8,652.5l2.2,.6 2.5,.2 3.4-.3M1873.5,645l-.9,2.3-.7,2.2M1833.9,647.7l-.5-3.1M1843.1,645l-3.4-1.7M1837.3,642.2l2.4,1.1M1845.8,616.8l-2.6,1.2-2.2,1.2-3.2,0M1845.8,616.8l-2.7-3.5-.5-3.6 0-.9M1847.4,566.8l7,3.6M1847.4,566.8l10.2-.9M1857.6,565.9l2,1.1M1856,571.2l-1.6-.8M1856,571.2l3.3-.8 1.7-1.9M1861,568.5l-1.4-1.5M1842.4,564.4l.2,.4 4.8,2M1843.9,575.9l1.5-1.2 4-2.2 5-2.1M1849.5,561.3l8.1,4.6M1859.7,560.5l-.1,3.2 0,3.3M1858.6,575l-2.6-3.8M1865.7,571.4l-.4-.4-4.3-2.5M1866.6,570.3l-.2-.3-2.4-4.5-2.6-4.6M1886.8,571.1l.1,2.7-.2,4.1M1892.7,574l-2.2,4.1M1890.5,578.1l-3.8-.2M1883.6,586l2-4.3M1883.6,586l-2.8,.5-1.2-.3M1885.5,579.7l.1,2M1885.5,579.7l-2.6-2.3-.3-.1M1886.7,577.9l-1.2,1.8M1866.6,602l-2.2-3.4-1.3-3.9M1863.1,594.7l1.8-3.5 2.2-3.1 1.1-1.4M1900,577.5l-.7,1.3M1908.5,585l-2.6,.5-2.6,.5M1899.3,578.8l1.9,3.4 2.1,3.8M1931.6,665.5l-4.1-1-3-1M1931.6,665.5l2,3.9 2.7,3.8 .7,3.3M1924.5,663.5l-.8,2.8 .6,3.4 1.7,3.8M1937,676.5l-5.5-1.2-5.5-1.8M1921.1,655.4l.2,3.1M1940.9,666.5l-.6,.1-4.8-1.2-3.9,.1M1921.3,658.5l1.7,2.5 1.5,2.5M1921.3,658.5l-1.9,1.7M1919.4,660.2l-1.3,2.4-.7,3.1-1.1,3.2M1926,673.5l-.7,.8M1925.3,674.3l-3.7-1.9-2.7-2.5-2.6-1M1937,676.5l2.6,1.7M1864.9,660.4l3.7,.4M1864.9,660.4l0-2.3 .8-2.1 .8-2.1M1868.6,660.8l3.2-1.8 3.1-1.1M1866.5,653.9l3.1,1 2.8,1.4 2.5,1.6M1858.1,662.3l-1.2-2-1.8-1.1M1860.2,662.5l4.7-2.1M1860.2,662.5l-2.1-.2M1865.9,653l.6,.9M1900.9,648.5l-1.5,.6M1899.4,649.1l-2.4-1.8-2.9-1.3-3.2-.5M1879.9,642.1l.3,3.7 .8,3.5M1890.9,645.5l-.5,4.6M1890.4,650.1l-3.6,1.8M1881,649.3l2.7,1.3 3.1,1.3M1871.9,649.5l2.1,1.3 2.1,1.5 2.1,1.7M1881,649.3l-.9,2.8-1.9,1.9M1948.7,494.8l3.4,.7 2.7-.2M1948.7,494.8l-1.3,6.4M1952.9,500.7l-5.2,1.4M1947.4,501.2l.3,.9M1944.9,508.3l2.8-6.2M1947.4,501.2l-3.7,1.1-3.3,.9M1944.9,508.3l-3.2-.8-3.6,1.2M1940.4,503.2l-2.3,5.5M1934,505.2l1.9,2.5 1.7,2M1936.9,516.4l.7-6.7M1934,505.2l-2.7,2.6-2.8,2.8M1936,518l-2.3-1.3-2.2-2.2-2.9-1.8M1936,518l.9-1.6M1928.5,510.6l.1,2.1M1934.1,523.2l.3-.7 1.6-4.5M1927.3,521l.6-1.5-.1-4.9M1927.8,514.6l.8-1.9M1905.4,496.1l4,1.1M1901.6,493.3l3.8,2.8M1905.6,488.8l.7,0 3.4,1.6M1909.7,490.4l2.1,5.1M1911.8,495.5l-2.4,1.7M1871,507.3l1.3-1.7M1872.3,505.6l-4-2.3-4.7-1.9-.7-.4M1882.1,491.2l-3.2,3.7-3.3,3.6M1872.8,487.8l-.1,1.8-2.8,3.6-2.5,3.1M1875.6,498.5l-4.3-1.1-3.9-1.1M1861,497.8l2.4-1.1 4-.4M1880.5,511.5l6.8-2M1880.5,511.5l-.9-2.3-1.3-2.3-1.2-2.2M1887.3,509.5l-.4-3.4-.6-3.3M1877.1,504.7l2.1-1.2M1879.2,503.5l5-1.1M1884.2,502.4l2.1,.4M1886.7,517.8l.6-3.4 2-3.6M1889.3,510.8l-2-1.3M1875.3,515.2l5.2-3.7M1872.3,505.6l4.8-.9M1894.1,505.5l-4.4,5.1M1893.9,501.8l-3.6,.6-4,.4M1893.9,501.8l.2,3.7M1875.6,498.5l2.4,2.4 1.2,2.6M1891.6,490.3l-1.2,2.6-2.2,3.4-1.7,3.2-2.3,2.9M1895.7,497.6l.7-4M1895.7,497.6l-1.8,4.2M1905.8,470.7l4.5,.6 3.3,1.3M1913.6,472.6l3.6-2.3M1912.6,461.4l.5,.4 2.4,2.3 2.7,1.9M1918.2,466l-1,4.3M1941.8,463.2l.1-2.8-.6-2.5M1941.3,457.9l1.4-2.4 2.8-1.6 1.7-2.3M1940.2,440.9l-.1,3.7 .8,3.4M1947.2,451.6l-3.1-1.9-3.2-1.7M1918.2,466l3.1-.3 3.5-.8M1919.1,457.6l3,.1 3.9-.1M1926,457.6l-.8,3.6-.4,3.7M1935.8,466.3l-2.2-3M1930.2,472l2.6-3.2 3-2.5M1930.2,472l-4.6-1.9M1925.6,470.1l.6-2.6-.5-2.3M1933.6,463.3l-3.6,.1-4.3,1.8M1917.2,470.3l3,1.4M1920.2,471.7l5.4-1.6M1925.7,465.2l-.9-.3M1733.5,807.5l3.1,1.9M1733.5,807.5l-2.6,4.2M1730.8,812.4l.1-.7M1730.8,812.4l2.5,.6 2.3,1.5 2.4-.2M1738,814.3l-1.1-2.2-.3-2.7M1738,806.3l-1.4,3.1M1733.6,806.5l-.1,1M1729.5,805.7l.6,3.1 .8,2.9M1593.7,884.9l-.6,.3M1593.7,894.4l-.9-2.9M1598.7,889.7l-2.7,2.3-2.3,2.4M1592.8,891.5l1.4-3-1.1-3.3M1585.5,884l1.3,.4M1586.8,884.4l6.3,.8M1603.8,890.3l5.7,2.7M1603.8,890.3l-2.4,5.8M1609.5,893l-.9,4.8M1601.4,896.1l7.2,1.7M1612.1,890.9l-.4,1.9M1611.7,892.8l-2.2,.2M1593.7,894.4l-.2,2.7M1595.5,897.6l1.6-.3 4.3-1.2M1611.7,892.8l1.3,1.6M1617.6,894.9l0,.7M1613,894.4l4.6,1.2M1621.7,901.5l1.9-1.1M1621.7,901.5l-2-2.2M1619.7,899.3l-2.1-3.7M1563.6,934.2l5.2,1M1563.6,934.2l1.5,3 .2,3.1M1568.8,935.2l4.4,2.7M1566.5,940.9l-1.2-.6M1566.5,940.9l3.5-.8 4.7,.1M1574.7,940.2l-1.5-2.3M1559.7,932.5l3.9,1.7M1562.5,927.8l6.4,1M1568.9,928.8l1,1M1569.9,929.8l-.3,2.8-.8,2.6M1552.9,942.1l5.9-1.2 6.5-.6M1571.3,930.6l-1.4-.8M1577.8,937.2l-4.6-3.4-1.9-3.2M1577.8,937.2l-4.6,.7M1570.4,946.8l-3.9-5.9M1578.8,942.1l-4.1-1.9M1583.1,937.7l3.8,2.7M1583.1,937.7l-5.3-.5M1569,895.7l1.9,5.5M1569,895.7l3.8-2.8M1574.1,893.7l-1.3-.8M1574.1,893.7l-1.9,3.7-.4,4.2M1571.8,901.6l-.9-.4M1565.5,902.2l2.9-.6 2.5-.4M1564.6,894.6l4.4,1.1M1569.5,889.4l3.3,3.5M1572.7,903l-2,2-1.8,1.8-1,2.6M1557.7,917.9l5.8,2M1557.7,917.9l-2.1-.2M1563.5,919.9l-5.8,1.4-5.7,.3M1555.6,917.7l-3.8,.8M1552,921.6l-.2-3.1M1548.8,912.4l2.9,1.6 3.3,.2M1556.5,916.2l-1.5-2M1556.5,916.2l-.9,1.5M1547.6,913.3l2.3,2.6 1.9,2.6M1551.2,924l.8-2.4M1558.3,925.5l5.4-2.1 2.9-2.6M1566.6,920.8l-.8-.6M1563.5,919.9l2,.2M1557.7,917.9l3.3-1.7M1565.5,920.1l-1.8-2.1-2.7-1.8M1557.8,913.7l1.6,1.5M1557.8,913.7l.6-3.2M1558.7,910.4l3.1,1.8 2.7,2.1M1564.5,914.3l-3.7,1.3M1559.4,915.2l1.4,.4M1556.5,916.2l2.9-1M1555,914.2l2.8-.5M1550.2,909.4l3.1-.8 3.4-.2M1568.5,910.2l1,1.4M1557.4,908.1l.4-.5M1557.8,907.6l.6-.2M1569.5,913.4l-5,1M1569.5,913.4l0-1.8M1565.8,920.2l0-2.9-1.3-2.9M1818.3,844.7l1.4-1.2M1818.3,844.7l-1.2-1.3M1817.2,843.1l1.4-.1M1818.6,843l1.1,.5M1820.7,845l-.6,.3M1818.5,844.9l1.6,.4M1819.7,843.5l1,1.5M1816.7,842.4l.5,.7M1815.1,843.9l-1.6-1.6M1814.7,841.2l-1.2,1.1M1815.1,843.9l2-.5M1818.3,841.3l.3,1.7M1822,845.2l.5,1.3M1822,845.2l-1.3-.2M1820.1,845.3l.3,.7M1822.5,846.5l-.7,.2M1820.4,846l1.3,.7M1807.9,847.7l1.9-2.7M1809.8,845l-3.8-2.5M1809.4,840.5l-.5,.8M1813.5,842.3l-1.5,0M1812,842.3l-3.1-1M1808.9,841.3l-2.9,1.2M1796.7,848.5l3,2.9M1794.8,852.1l3.6,3.9M1799.7,851.4l-1.3,4.6M1797.8,857.6l.8-1.1M1798.4,856l.2,.5M1799.7,851.4l2,.6M1803.5,850.1l-1.8,1.9M1800.5,857.2l-1.9-.7M1802.5,854.7l-2,2.5M1802.5,854.7l-.4-2.2M1801.7,852l.4,.5M1822.9,846.6l1.6-.6M1822.9,846.6l.7,.5M1823.6,847.1l1.2-.2M1824.8,846.9l-.3-.9M1832.5,849.9l.6-2.1M1832.7,849.9l2.6-.3M1835.9,849.2l-.6,.4M1834.3,847.5l-1.2,.3M1833.1,842.8l-1.3,1.6M1834,845l-1.2-.1M1832.8,844.9l-1-.5M1829.5,843.6l2.5-1M1831.8,844.4l-2.1-.4M1821.8,843.9l.7,.5M1822.3,842.7l1.8,1.2M1824.1,843.9l-1.6,.5M1822,845.2l.7-.2M1828.2,858.4l-1.5-.3M1830.5,855.5l-2.3,.4M1826.7,858.1l1.5-2.2M1831.5,854.5l-2.4-.2M1829.1,854.3l-1.1,1.5M1826.7,858.1l-.7,.1M1825.8,856.3l0,1.8M1828,855.8l-2,.3M1825.3,860.9l-.9-1.1M1826,858.2l-1.6,1.6M1822.2,865.1l-.4-.8M1823.5,862.1l-1.7,2.2M1826,856.1l.8-1.5M1829,854l-2.2,.6M1836,852.6l-1.2-1.1M1836,852.6l-3.5,1.1M1834.8,851.5l-2.3,.2M1832.5,853.7l-1.6-1.1M1832.5,851.7l-.7,.3M1831.8,852l-.9,.6M1839.1,849.4l-.7,1.8-.3,1.9M1835.3,849.6l-.5,1.9M1838.1,853.1l-2.1-.5M1831.5,854.5l1-.8M1832.7,849.9l-.2,1.8M1829,854l1.2-1.1M1830.2,852.9l.7-.3M1844.6,848.9l-.1,3M1844.6,848.9l-.6-.4M1844,848.5l-1.8,.9M1842.2,849.4l-.6,2.1 .4,2M1842.4,853.4l2.1-1.5M1843.9,847.6l.1,.9M1839.1,849.4l3.1,0M1856.3,851.3l-3.6-.3M1850.1,853.9l-.7-.9M1852.7,851l-3.3,2M1844.5,851.9l2.5-.3M1847,851.6l2.4,1.4M1803.5,850.1l4.7,2.1M1802.1,852.5l5,1.3M1807.1,853.8l1.1-1.6M1809.8,850.3l-.9,1.8M1625.8,887.5l4.7,1.4M1628.3,882.7l4.3,3.2M1630.5,888.9l2.1-3M1636.4,883.5l-1.7,2.7M1637.9,887.2l-1.4,.3M1636.5,887.5l-1.8-1.3M1632.6,885.9l2.1,.3M1645.1,896.4l-1.6-2.6M1643.9,898.6l-2.5-3.2M1643.5,893.8l-2.1,1.6M1624.3,900.7l3.8-1.2M1624.3,900.7l2.4,3.3M1628.1,899.5l-1.4,4.5M1605.7,911.7l-2.6,.5-6.3,.4M1613.3,895.1l-3.6,3.1M1607.9,906.3l-7.9-2.3M1614.6,903.5l.1-.2-4.3-4.8M1685.3,874.4l2.7-.2M1689.3,870.2l.4,1.7M1688,874.2l1.7-2.3M1692.5,882.6l-.1-1.7M1699.9,882.4l-1.7-1.5M1692.4,880.9l5.8,0M1687,854.6l1.4-2.2 1.6-2.5M1694.9,851.6l-2.2-1.3-2.7-.4M1701.4,843.9l1.6,.2M1701.4,843.9l-2.7,4-3.5,3.3M1688.7,847.2l.8,.4M1690,849.9l-.5-2.3M1699.3,840.4l-.9-3.9M1699.3,840.4l-2.6,1.6-2.2,2.9M1698.4,836.5l-4.6-.3M1693.8,836.2l-1.2,5.9M1694.5,844.9l-1.6-.9M1692.6,842.1l.3,1.9M1701.4,843.9l-2.1-3.5M1702,827.9l-2.7,4-.9,4.6M1695.2,851.2l0-3.1-.7-3.2M1691.3,829.7l2.5,6.5M1688.2,838.5l4.4,3.6M1689.5,847.6l3.4-3.6M1533,893.2l1.3-3.1 1.6-2.8M1533,893.2l1.2,2.7M1534.2,895.9l3.6-1.1 4-1.2 3.7-.9M1535.9,887.3l4.4-1.6M1540.3,885.7l3.7,.4 2.9,1.6M1546.9,887.7l-1.4,5M1528.5,891.9l2.4,.1 2.1,1.2M1533.3,883.7l1.1,1.9 1.5,1.7M1532.5,901.1l1.5-2.6 .2-2.6M1541.7,902.4l2.2-2.3 .7-2.9 1.6-2.6M1546.2,894.6l-.7-1.9M1541.5,879.6l-1.1,3.2-.1,2.9M1548.4,886.5l-1.5,1.2M1554.8,897.4l-3.9-.8-3.5-.8M1547.4,895.8l-1.2-1.2M1554.6,905.2l-1.9-4.4M1554.6,905.2l-5.3-2.7M1552.7,900.8l-3.6-1.3M1549.3,902.5l-.2-3M1555.1,898.1l-2.4,2.7M1557.8,907.6l-3.2-2.4M1545.4,903.7l3.9-1.2M1547.4,895.8l1.7,3.7M1488.7,913l-.9-1.7M1488.7,913l2.5-.2 2.7-1M1487.8,911.3l2.1-4.2M1489.9,907.1l3.2,1 3.1,.7M1493.9,911.8l2.3-3M1490.4,920.1l1.7-2M1492.1,918.1l.4-3.2 1.4-3.1M1488.6,913.7l.1-.7M1492.1,918.1l3.4-.5 3.2-.4 2.9-.4M1494.7,901.7l.7,3.7 .8,3.4M1482.3,900.5l1.7,5.1M1482.3,900.5l3.1,.9 3-.6M1484,905.6l2.7,.7 3.1,.6M1488.4,900.8l.3,3.1 1.1,3M1479.2,896.2l3.1,4.3M1476.5,901.4l.3,3.6M1483.8,907.3l.2-1.7M1489,899.6l-.6,1.2M1486.1,911.8l1.7-.5M1483.5,916.2l2.1-.2M1483.5,916.2l-.8,3.3M1482.7,919.5l0,1M1485.6,916.2l-.2,2.6M1483,914.2l.5,2M1486.1,911.8l-.5,4.2M1480.5,916.5l2.2,3M1486.9,915.9l-1.3,.3M1490.4,920.1l-.4,1M1460.1,908.8l-1.3,5.4M1460.1,908.8l2,.1 2.3-.7 2.3-1.6M1458.8,914.2l2.8,3.2M1461.6,917.4l2.3-3.4 2.8-3.6M1466.7,910.4l.1-3M1466.7,906.6l.1,.8M1455.2,916.3l3.6-2.1M1462.6,922.7l-1-5.3M1466.5,897.5l.6,4.3-.4,4.8M1475.8,906.6l-3.2-.2-3,.1-2.8,.9M1473.3,917.5l-.5-2.6M1473.3,917.5l-3.6,5.3M1472.8,914.9l-5.3-2.8M1467.5,912.1l.6,5.7 0,5.5M1469.7,922.8l-1.6,.5M1475.9,920.6l-2.6-3.1M1474.4,913.3l-1.6,1.6M1475.2,924.4l-2.3-1.3-3.2-.3M1466.7,910.4l.8,1.7M1467,924.5l1.1-1.2M1465.5,892l-2.2,.7-1.8,2.3-2.3,.4-2,2M1466.1,896.5l-2,2.5-2.4,1.6-2.1,2.7M1457.2,897.4l1,3 1.4,2.9M1448.9,911.7l.5-1.1M1449.4,910.6l2.2-2.8 2.4-2.6M1453.3,912.3l2.9-2.2 2.1-3.1M1454,905.2l2.3,.9 2,.9M1460.1,908.8l-1-2.2M1459.6,903.3l-.5,3.3M1458.3,907l.8-.4M1393,986.2l.1,0 2.7-4.1M1394,988.9l3.4-3M1397.4,985.9l-1.6-3.8M1392.1,978.9l3.5,2M1395.8,982.1l-.2-1.2M1391,1018.9l2.3-6.4M1393.3,1012.5l-.2-4.3-.3-5M1399.4,960.1l-.5-.4M1399.4,960.1l1.5-2.6 2.3-1.3M1400.4,951.9l2.8,2.6M1403.2,956.2l0-1.7M1405.4,949.6l1.3,4.1M1403.2,954.5l3.5-.8M1410.8,952.2l-2.6,2.4M1408.2,954.6l-1.5-.9M1399.4,960.1l1.4,3.6M1405.3,959.4l-2.1-3.2M1405.3,959.4l-1.5,3.6M1400.8,963.7l3-.7M1412.3,961l-2.8-.9M1412.3,961l1.6,3 2.2,2.3M1409.4,960.3l0,3.2-.1,3.4M1416.5,968.5l-.4-2.2M1416.5,968.5l-2.1,.9-1.4,2.5M1409.3,966.9l2.4,4.8M1413,971.9l-1.3-.2M1414.5,955l-.7,3.3-1.5,2.7M1408.2,954.6l1.3,5.5M1419.4,961.7l-2.1,1.8-1.2,2.8M1405.3,959.4l4.1,.9M1406.8,966.7l-3-3.7M1406.8,966.7l2.5,.2M1421.3,973.3l-2.5-2.2-2.3-2.6M1415.5,978.8l-1.3-3.1-1.2-3.8M1409.7,982.1l-.6-1.8M1409.1,980.3l1.2-4.8 1.4-3.8M1618,924.1l-2.1-.5M1619.7,923.7l-1.7,.4M1618.4,921.2l-3.1,0M1615.3,921.2l-.7,1M1614.6,922.2l1.3,1.4M1618,924.1l-1.4,2.8M1613.7,926.3l.3-2.2M1616.6,926.9l-2.9-.6M1615.9,923.6l-1.9,.5M1609.9,923.8l2.8-.3M1609.9,923.8l3.1,2.8M1613,926.6l.7-.3M1614,924.1l-1.3-.6M1622,924l-.4,3.3M1616.6,926.9l.5,.9M1617.1,927.8l4.5-.5M1626.2,927.9l-2.3,.9M1621.6,927.3l2.3,1.5M1627.3,932.5l-1.8-1.5-2.7-.9M1622.8,930.1l1.1-1.3M1613,930.9l-.6-3.8M1613,930.9l-2.8,2.4-2.2,1.7M1612.4,927.1l-3.7-.2-1.5,.2M1613,926.6l-.6,.5M1588.8,939.7l-1.2,.9M1596.4,939.3l-1.1,.3-3.1-.2-3.4,.3M1592.4,924.6l-3.1-2.9M1588,919l1.3,2.7M1612.5,936.9l1.5,1.9 2.3,1.1M1612.5,936.9l-2.4-.1-.9,.1M1631.8,904.7l.3,2M1631.8,904.7l-1.3,.8M1630.5,905.5l-.1,1M1630.4,906.5l1.6,.3M1618.9,911.9l1.9,.6 4.7-1.3M1624.7,914.4l2.7-1M1625.5,911.2l1.9,2.2M1626.7,909l0,.9M1625,907l1.7,2M1623.6,907.1l1.4-.1M1625.5,911.2l1.2-1.3M1639.5,905.4l-.3,2M1640.4,904.5l-.8,.5M1641.3,909.9l-.8,1.2M1639.2,907.4l1.3,3.7M1639.3,917.2l0-.7M1640.5,911.1l-1.2,5.4M1341.6,1197.2l-1.7,3.6M1341.6,1197.2l1.9-.2M1339.9,1200.8l4-1.1M1343.5,1197l.4,2.7M1339.6,1195.3l2,1.9M1343.7,1195.8l-.2,1.2M1344.8,1201.6l-.9-1.9M1265.6,1292.9l-2.7-.4M1263,1289.8l-1.7,.3M1262.9,1292.5l-1.6-2.4M1259,1288.5l2.3,1.6M1439.8,1023.6l-2.5,2.6M1440.1,1030.4l-2.2,1.3M1437.9,1031.7l-.6-5.5M1438.4,1041.2l-2.1-1.4M1436.3,1039.8l-.6-3 .5-3.4M1437.9,1031.7l-1.6,1.5M1433,1045.3l-.8-3.9M1427.8,1044.8l1-1.8M1428.8,1043l3.4-1.6M1436.3,1039.8l-3.7,.7M1432.6,1040.5l-.4,.9M1436.2,1033.4l-.8,.5M1435.4,1033.9l-3.5,3.7M1432.6,1040.5l-.7-2.9M1430.8,1004.5l-.4,4.5-.5,5M1439.2,1008.6l-4.7,3.5-3.4,4.1M1429.9,1014l1.2,2.2M1421.3,1015l2.8,1.6M1429.9,1014l-2.8,.8-3,1.8M1421.1,1028.1l4-5.5M1424.1,1016.6l1,6M1410.6,992.4l.5-2.5M1410.6,992.4l-1.6,2.4M1407.8,994.8l1.2,0M1407.8,994.8l-1.6-3.5M1411.1,989.9l-1.6-3.5M1409.5,986.4l-3.3,4.9M1415.7,986.5l-2.3,2.4-2.3,1M1415,993.2l-2.5,.4-1.9-1.2M1410.2,1000.6l-.6-2.8-.6-3M1409.9,983.8l-.4,2.6M1392,961l-.4-.7M1385.3,963.7l1.7-2.6M1391.6,960.3l-2.3,.5-2.3,.3M1393,953.1l-.5,2.9-1.3,2.5M1391.6,960.3l-.4-1.8M1389.7,953.9l2.1-2.2M1389.7,953.9l1.4,4.3M1391.4,943.6l-.5-2.4M1391.4,943.6l-2.2,3.3M1389.2,946.9l-2.2-1.7M1390.9,941.2l-2-1-2.4-.3M1387,945.2l.1-2.8-.6-2.5M1391.1,958.2l-1.8-1.2-2-.5M1387,961.1l-.5-1.9M1386.5,959.2l.6-2.5M1389.3,948.2l1.1,.8M1389.5,953.8l-1.1-1.8M1388.4,952l.9-3.8M1382.4,962.5l.3-3.7M1376.8,963l2.8-2 .9-2.5M1380.5,958.5l2.2,.3M1386.5,959.2l-3.3-.7M1382.7,958.8l.5-.3M1370.8,948.3l.2,1-.1,3 .1,2.9M1373,947l.7,.9 .6,3 1.7,2.3M1373.3,956.2l2.7-3M1375.2,962.5l1.7-2.5-.4-2.6M1373.3,956.2l3.2,1.2M1380.5,958.5l-2-1.2M1376.5,957.4l2-.1M1362.2,991.3l-.9,0M1362.2,991.3l-.2-2.9M1362,988.4l-2.8-1.8M1361.1,991.2l-2.1-2.3M1359,988.9l0-1.8M1362.4,993.8l-.2-2.5M1358.1,994.7l3.2-3.4M1362.8,982.5l-.1,2.3-.7,3.6M1359.2,984.7l0,1.9M1358.6,991.4l2.5-.2M1358.6,990l.4-1.1M1357,987.8l2-.7M1394.3,945l.7-1.6M1394.3,945l-1.3,.3M1395,943.4l-1.3-.8M1393.7,942.6l-1.9,1.2M1391.8,943.8l1.2,1.5M1395.6,946.5l-1.3-1.5M1395.8,943.1l-.8,.3M1392.9,947.3l.1-2M1394.3,940.4l-.6,2.2M1393.4,938.2l-2.5,3M1389.2,946.9l.1,1.3M1504.1,964.4l-3.5,1.3-3.4,1.2M1504.1,964.4l-.7-5.2M1502.2,958.5l1.1,.3M1502.2,958.5l-2.7,1.6-2.1,2.6M1497.4,962.7l-.2,4.2M1506.8,966.3l-2.7-1.9M1509.2,960.6l-3.2-.4-2.6-1M1505.3,955.9l-2,2.9M1500.2,952.5l1.3,2.8 .7,3.2M1494.7,956.7l.9,3.2 1.8,2.8M1487.7,963.5l5,2.3 4.3,1.5M1506.7,967.5l-2.1,3.2M1504.6,970.7l-3.6-1.9-3.9-1.1M1508.6,975.4l-2.6,.5M1504.6,970.7l1.2,2.5 .2,2.7M1504.4,978.5l0-.9M1504.4,977.6l1.6-1.7M1867.9,812.3l-3.4-2.8M1870.6,809.1l-2.9-3.4M1865.2,807.5l2.5-1.8M1862.4,804.7l2.8-2.6M1867.7,805.7l-2.5-3.6M1878.1,803.9l-2.4,.5M1879.4,799l-3.2,1.8M1876.2,800.8l-.5,3.6M1872.7,806.9l.6-1.4M1875.7,804.4l-2.4,1.1M1867.7,805.7l3.3-3.4M1873.3,805.5l-2.3-3.2M1858.5,817.8l2-1.2M1858.5,817.8l-4.8-2.5M1860.5,816.6l-1-3M1859.5,813.6l-2.7-.8M1856.5,812.9l-2.5,1.4M1853.7,815.3l.3-1M1858.2,819l.3-1.2M1851,816.9l2.5,3.8M1851,816.9l2.7-1.6M1862.6,812.8l-3.1,.8M1863.5,810l-.9,2.8M1859.9,809.4l-3.1,3.4M1852.3,808.9l2.2-.8M1852.3,808.9l4.2,4M1850.4,809.1l-1.6,2.3M1849,812l-.2-.6M1852.3,808.9l-1.9,.2M1849,812l5,2.3M1863.3,817.9l-2.6-1.4M1863.3,817.9l2.1-2.7M1860.7,816.5l2.8-1.9M1865.4,815.2l-1.9-.6M1863.9,820.1l-.6-2.2M1866.7,815.1l-1.3,.1M1862.6,812.8l.9,1.8M1830.8,833l-.8-.4M1830.8,833l-1.3,2.2M1830,832.6l-2.2-.1M1827.8,832.5l-1.6,.7M1826.2,833.2l1.1,1.7M1827.3,834.9l.9,.3M1829.5,835.2l-1.3,0M1832.1,833.1l-1.3-.1M1829.9,829.9l.1,2.7M1831.3,836l-1.8-.8M1826.4,828.8l1.4,3.7M1824.5,832.8l1.7,.4M1825.3,836.1l2-1.2M1828.1,837.5l.1-2.3M1827.5,842.9l1.6-.7M1826.7,842.9l-1.1-.7M1825.6,842.2l.2-.8M1829.1,842.2l-2.8-1M1829.5,843.6l-2-.7M1830.5,842.2l-1.4,0M1824.8,841.1l1,.3M1822.9,842.1l.9,.2M1823.8,842.3l1.8-.1M1826.8,840.4l-.5,.8M1850.2,663.4l.4,3.9-1.8,6.5M1848.8,673.8l-3.3,2.2-2.1,1.9M1848.2,681.6l.5-3.3M1848.2,681.6l2.3,1.5 2.4,2.8M1848.7,678.3l3.9-5.8 3-2.2M1852.9,685.9l1.3-1.7M1854.2,684.2l.7-7.5M1855.6,670.3l-.7,6.4M1848.8,673.8l-.1,4.5M1858.1,662.3l-1.4,3.2-1.1,4.8M1796.9,748.9l-2.5,1.9M1796.9,748.9l.6-1.8M1797.5,747.1l-.8-.4M1796.7,746.7l-2.2,2.1M1794.5,748.8l-.1,2M1796.6,754.8l.7-3.8M1792.8,756.3l3.8-1.5M1797.3,751l-.4-2.1M1792.3,755.8l2.1-5M1797.9,746.6l.5-1.6M1797.7,743.3l.7,1.7M1796.5,744.6l.2,2.1M1792.8,747.3l1.7,1.5M1801.3,747.8l.1-1.7M1801.3,747.8l-2.5,1M1801.4,746.1l-1.5-.4M1798.8,748.8l.4-2.1M1799.2,746.7l.7-1M1798.3,755.5l-1.7-.7M1798.3,755.5l2.7-6M1801,749.5l.3-1.5M1797.3,751l1.5-2.2M1797.9,746.6l1.3,.1M1798.4,745l1.5-1M1799.9,744l0,1.7M1800.4,742.4l1.7,1.7M1800.4,742.4l-.3-1.1M1802.1,744.1l2.8-3.5M1805.1,738.7l-.2,1.9M1801.4,746.1l.7-2M1799.9,744l.5-1.6M1801.3,748l3.4-2.9M1804.7,745.1l.2-4.5M1841.3,726.2l-1.5,3.4-1.4,3.2M1841.3,726.2l-2-2.2-2-2.4-1.5-3.5M1838.4,732.8l-2.1-2.3-1.4-3-1.8-2.4-1.8-2.6M1835.8,718.1l-2.4,2.1-2.1,2.3M1829,733.1l-.9-1.4M1829,733.1l2,.8 2.4-.8 2.3-.2 2.5,.1M1830.4,722.3l.9,.2M1822.7,750.8l-1.1-2.7-.2-2.7-.8-2.2M1816.7,754.1l3-2 3-1.3M1816.7,754.1l-2.5-2-.9-2.8-1-2.4M1820.6,743.2l-4.1,1.8-4.2,1.9M1809,740.2l-.3,4.5M1809,740.2l-2-.9-1-1M1804.7,745.1l.4,1.8M1805.1,746.9l3.6-2.2M1809,740.2l2.2-.9 2.7-.2M1813.9,739.1l.2,2.4-1.2,2.6-.8,2.8M1812.1,746.9l-1.8,.7M1808.7,744.7l1.6,2.9M1791.5,777.9l2.2-3.6 3.6-3.3M1793.5,767.1l4.2,.4M1797.3,771l.4-3.5M1854.5,783l3.9-2.4M1848,776l2.2-2.2 2.8-1.3 3.3-1.5M1847.7,776.7l.3-.7M1858.4,780.6l-.4-3.2-1-3-.3-3.1M1860.9,788.2l3.4-3.6 2.1-3.9M1860.9,788.2l-2.5,1.4M1858.4,780.6l4.4-.2 3.6,.3M1838.4,746.4l.2,1.2M1838.4,746.4l-2.3-2.3-2.5-1.8M1838.6,747.6l-1.7,2.3-2.5,1.5-2.2,1.6M1833.6,742.3l-3.7,1.1M1829.9,743.4l-1.3,2.8-.3,3.1M1828.3,749.3l1.7,2 2.2,1.7M1829,733.1l-1.3,2.4-1.1,2.4-1.7,2.1M1838.2,733l-.9,3.6-1.5,3.1-2.2,2.6M1824.9,740l1.8,.9 1.6,1.1 1.6,1.4M1831,757.9l1.8-3.6M1832.8,754.3l-.6-1.3M1824.9,758.9l-1-4.4-1-3.6M1824.9,758.9l2.9-1.3 3.2,.3M1822.9,750.9l2.8-.7 2.6-.9M1868.4,726.6l-4.8-1.1-4.1-1.6-2.9-1.1M1868.4,726.6l2.8,3.5 1.1,3.2M1872.3,733.3l-.2,.9M1872.1,734.2l-3.2,.6-3.1,1.8M1856.6,722.8l1.2,3.1 2.6,3.3 4.1,3.3 1.3,4.1M1865.4,737.7l.4-1.1M1851.5,727.5l1.1,6.1M1855.9,721.9l-2.2,3.3-2.2,2.3M1855.9,721.9l.7,.9M1865.4,737.7l-2,1M1863.4,738.7l-3.8-1-3.7-2-3.3-2.1M1847.1,743.1l.1,3.2 1,3.1M1847.1,743.1l.2-2.5M1847.3,740.6l2.5-2.1 2.6-1.7M1854.6,751.3l.7-3.5-.1-4.2M1854.6,751.3l-1.9,1.2-2.4-.4M1852.4,736.8l1.3,3.5 1.5,3.3M1850.3,752.1l-2.1-2.7M1843,752.5l-1.8-2.8-2.6-2.1M1838.4,746.4l3.5-.6 3-.7 2.2-2M1843,752.5l2.6-1.8 2.6-1.3M1838.4,732.9l1.9,2.2 2.2,2 2.6,1.5 2.2,2M1852.6,733.6l-.2,3.2M1844.2,722.6l-2.9,3.6M1844.2,722.6l1.6,1.9 2,.5 1.8,1.2 1.9,1.3M1863.4,738.7l-1.8,3.4-1.3,3.7M1860.3,745.8l-2.7-1.7-2.4-.5M1845.9,804.3l1,2.4M1845.9,804.3l3.1-3M1849,801.3l3.1,1.8M1852.1,803.1l-3,4.3M1849.1,807.4l-2.2-.7M1844.5,809.8l2.4-3.1M1842.1,810.3l2.4-.5M1843.7,803.8l2.2,.5M1849.1,798.6l-.1,2.7M1855.5,799.3l-.1-3.6M1850.4,809.1l-1.3-1.7M1848.8,811.4l-4.3-1.6M1846.7,819.4l-5.1-.9M1846.7,819.4l1.7-2.5M1841.6,818.5l-1-2.9 .4-2.8M1848.4,816.9l-2.5-2.4M1845.9,814.5l-4.9-1.7M1839.3,820.2l2.3-1.7M1848.8,821.4l-2.1-2M1851,816.9l-2.6,0M1849,812l-3.1,2.5M1946.5,515.6l-1.5,4M1946.5,515.6l-.5-3.9M1944.8,510.4l1.2,1.3M1944.8,510.4l-2.8,3.9-2.7,2.4M1939.3,516.7l2.6,1.6 2.2,2.5M1944.1,520.8l.9-1.2M1951,525l-2.8-2.7-3.2-2.7M1949.1,515.1l-2.6,.5M1951.9,505l-3.1,3.7-2.8,3M1944.9,508.3l-.1,2.1M1937.6,509.7l.5-1M1936.9,516.4l2.4,.3M1941.2,526.2l.3-.5 2.6-4.9M1890.8,520.3l2.4-1.4 5.1-.3M1889.7,510.6l2.8,1.5 3.5,2M1896,514.1l2.3,4.5M1910.5,525.4l-.7-2.3M1909.8,523.1l-3.8-3.2-7.7-1.3M1938.7,494.8l1.7,4.1 0,4.3M1948.7,494.8l-1.4-1M1938.7,494.8l.7-1M1939.4,493.8l3.8,.9 4.1-.9M1979.7,514.5l1.2-2.7 1.9-1.9M1979.7,514.5l-1.5,3.6-.5,3.6M1982.8,509.9l3.1,1.9 2.7,1.7M1988.6,513.5l-2.7,3-2.6,3.2M1983.3,519.7l-4,2.5M1977.7,521.7l1.6,.5M1973.9,513.3l3.1,.7 2.7,.5M1982.4,508.6l.4,1.3M1975.6,523.6l2.1-1.9M1994.8,510.2l-2.7,1.8-3.5,1.5M1992.3,521.8l-3.3-.7-3.8,.1-1.9-1.5M1981,533.4l-1-3.6-1.1-3.5 .4-4.1M1857.9,544l-.9-.8M1860.5,540.2l-.7,.3-2.8,2.7M1850.6,619.2l4,2.7 1.4,3.6M1850.6,619.2l-.8,3.7-3.1,2.6M1856,625.5l-.8,3.1M1846.7,625.5l.4,1.1M1847.1,626.6l3.7,.9 2.7,1.7M1855.2,628.6l-1.7,.6M1845.8,616.8l3.2,1.2M1837.8,619.2l4.2,3.5 4.7,2.8M1849,618l1.6,1.2M1866.2,630.4l-2.5-1.7-1.2-3.1-1.6-3M1860.9,622.6l-2.2,2.3-2.7,.6M1859.4,632.8l-1.9-2.3-2.3-1.9M1855.6,614.8l5.1,2.6M1855.6,614.8l-3.8-3.5-2.8-3.3 0-.3M1855.9,598.8l.6,0M1856.5,598.8l.4,3.9 1.1,3.5 1.6,3.8 3.2,3.2M1862.8,613.2l-2.1,4.2M1849,618l3.2-1.8 3.4-1.4M1860.9,622.6l-.2-5.2M1863.1,594.7l-3.3,1.5-3.3,2.6M1841.4,628.2l2.1,.4M1839.9,634.7l.8,.3 5,1.3M1843.5,628.6l2.5,3.3 3.9,3.3M1845.7,636.3l4.6,.3M1849.9,635.2l.6,1.4M1847.1,626.6l-3.6,2M1839.7,643.3l2.1-2.2 1.7-2.5 2.2-2.3M1853.5,629.2l-2,3-1.6,3M1849.1,644.6l.6-2.7 1.2-2.5-.6-2.8M1859,639.4l-3.6-1.2-4.9-1.6M1884.5,600l2.6,.8 2.1,.2M1883.6,586l1.8,4 2,1.9M1892.1,602.3l1.5,1.1 2.1,2.6M1903.3,586l-.1,3.5-.9,3.3-1.6,4-2.3,4.2M1895.7,606l2.7-5M1886.8,651.9l-1.3,2.1-.1,2.7M1878.2,654l.4,2.3M1885.4,656.7l-3.6-.6-3.2,.2M1874.9,657.9l2.9,.4M1877.8,658.3l.8-2M1905.4,653.3l.6,4.9M1919.4,660.2l-3,.1-3.5-.1-3.3,1.1M1906,658.2l3.6,3.1M1916.3,668.9l-1,1M1915.3,669.9l-2.5-.6-2.8,.3M1909.6,661.3l.3,4.1 .1,4.2M1928.5,510.6l-1.9-3M1927.3,498.3l-.1,4.7-.6,4.6M1934,505.2l-.5-3.7M1927.3,498.3l1.6-1.4M1928.9,496.9l4.6,4.6M1938.7,494.8l-1.8-.2M1933.5,501.5l1.4-4.1 2-2.8M1920.1,476.8l4.1-.4M1920.1,476.8l.8-2.7-.7-2.4M1930.2,472l.2,1.4M1924.2,476.4l6.2-3M1940,475.8l-.6-3.1-1.2-3.1-.9-2.9M1940,475.8l-5.3-.1M1935.8,466.3l1.5,.4M1934.7,475.7l-3.2-1.5M1930.4,473.4l1.1,.8M1920.1,476.8l-1.1,3.3-2.1,3.2M1920.1,476.8l-3.4-.7-3.4,.1M1912.4,477.3l.9-1.1M1912.4,477.3l.9,2.9 1.7,2.6M1915,482.8l1.9,.5M1913.6,472.6l-.3,3.6M1906.7,479.2l2-.9 3.7-1M1906.3,486.8l.9-.5 4.4-1.3 3.4-2.2M1926.6,507.6l-4.6-2.5M1922,505.1l-4.1,2-2.8,2.7M1927.8,514.6l-6,.3M1915.1,509.8l6.7,5.1M1916.8,523.1l.4-.8 2.5-3.6 2.1-3.8M1909.7,490.4l5.6-.8M1916.9,483.3l.7,.9M1917.6,484.2l-1.9,2.4-.4,3M1911.8,495.5l1.1,1.1M1917.7,492.4l-2.4-2.8M1918.5,495.5l-.3,1.3M1918.5,495.5l-.8-3.1M1912.9,496.6l5.3,.2M1927.3,498.3l-8.8-2.8M1922,505.1l-2.4-3.4M1919.6,501.7l-1.4-4.9M1934.4,456.7l1.2-2.4 1.1-2.3-.2-2.6M1934.4,456.7l-.7,.3M1933.7,457l-3.6-.5M1930.1,456.5l-.5-2.4-.9-2.4-2.1-2.3M1936.5,449.4l-4.5-.2-5.3,.1M1941.3,457.9l-3.2-.9-3.7-.3M1940.9,448l-4.4,1.4M1940.7,466.6l-3.4,.1M1933.6,463.3l.4-3.3-.3-3M1926,457.6l4.1-1.1M1920.7,449.9l1.8-.4 4.1-.1M1927.3,438.8l-1.4,3.6 .7,3.6 .1,3.3M1573.5,885.4l2.7,2.6M1576.2,888l.1,5.3M1574.1,893.7l2.1-.3M1579.9,888.5l5.6,2.9M1579.9,888.5l6.9-4M1586.8,884.5l.1,3.2-.6,3.4M1576.2,888l3.7,.5M1592.8,891.5l-6.5-.4M1589.3,921.7l-2.6,1.4-4,.4M1582.7,923.5l-2.7-3.6M1580.4,916.1l-.4,3.8M1571.7,911.2l-2.2,.4M1569.5,913.4l1.8,3.5M1580.4,916.1l-5.1-.1-4,.9M1808.9,852.1l3.3,1M1811.5,850.4l.7,2.7M1812.2,847.9l2.1,2.4M1811.5,850.4l2.5,.2M1825.9,848l-.3-.9M1825.9,848l1.9-.6M1825.6,847.1l1.4-.7M1827.8,847.4l-.8-1M1829.3,845.4l3-.2M1829.3,845.4l.4,1M1832.3,845.2l-.4,1.1M1831.9,846.3l-2.1,.1M1834.3,847.5l-2.4-1.2M1830.1,847.4l-.3-1M1830.1,847.4l3,.4M1827,846.4l2.7,0M1828.7,847.6l-.9-.2M1824.1,843.9l.7,.1M1823.8,842.3l1.3,1.2M1824.8,844l.3-.5M1826.7,842.9l-.4,.4M1826.3,843.3l-1.2,.2M1829.7,844l-1.6,.3M1826.3,843.3l1.8,1M1829.1,845.3l-1.2-.8M1848,850.7l3.6,0M1848,850.7l-1.3-1.4M1851.6,850.7l-2.5-2.4M1846.7,849.3l2.4-1M1852.7,851l-1.1-.3M1847,851.6l1-.9M1844.6,848.9l2.1,.4M1850,847l-.9,1.3M1818.4,865.7l.7-1.4M1818.4,866.5l0-.8M1821.8,864.3l-1.2-.6M1819.1,864.3l1.5-.6M1820.4,846l-.5,.4M1821.7,846.7l-.7,.5M1821,847.2l-.6-.1M1819.9,846.4l.5,.7M1821.1,853.6l-1.7,.4M1821.2,853.5l-.1-.6M1821.1,852.9l-1.7-.1M1819.4,854l0-1.2M1821,851.8l.3,.6M1819.9,851.5l1.1,.3M1819.9,851.5l-.9,1M1815.8,853.9l1.9-.8M1815.8,853.9l-1.1-1.6M1814.7,852.2l2.1-.4M1816.8,851.8l.8,.4M1814,850.6l.7,1.6M1812.3,853.2l2.4-.9M1816.4,850.4l.4,1.4M1814.6,850.2l1.8,.2M1800.4,873.1l1.6-1.4M1798.9,870.4l2.4-1.7M1801.3,868.7l.7,3M1800.1,864.8l.8,.1M1800.9,864.9l.7,3M1801.3,868.7l.3-.8M1805.8,873.3l-1.9-1.8M1803.9,871.5l-1.9,.2M1641.3,889.9l2.9-2M1641.3,889.9l-.1,.7M1641.2,890.6l3.4,1.4M1645.6,888l-1.4-.1M1645.6,888l.5,3.7M1646.1,891.7l-1.5,.3M1643,886.9l1.2,1M1640.1,888l1.2,1.9M1640.2,891.1l-.1,4.3M1641.4,895.4l-1.3,0M1640.2,891.1l1-.5M1643.5,893.8l1.1-1.8M1649.3,887l-3.7,1M1651.2,891.9l-5.1-.2M1615.3,921.2l-1.3-1.1M1615.8,918.8l-1.8,.6M1614,919.4l0,.7M1613.9,917.5l-4,.4M1614,919.4l-4.1-1.5M1608.7,917.4l1.1,.5M1613,921.8l-.8,.2M1613,921.8l-.8-1.4M1612.2,922l-1.9-.5M1611.8,920.2l-2.1,.1M1610.3,921.5l-.6-1.2M1614.6,922.2l-1.6-.4M1612.7,923.5l-.5-1.5M1614,920.1l-1.8,.3M1608.2,922.1l2.1-.6M1609.8,917.9l2,2.3M1607,919.1l2.7,1.2M1616.6,900.8l-1.1-.9M1616.6,900.8l1.4-1.9M1615.5,899.9l-.9-3.2M1618,898.9l-3.4-2.2M1617.9,903.6l-1.3-2.8M1610.4,898.5l5.1,1.4M1619.7,899.3l-1.7-.4M1620.9,904.2l.8-2.7M1613.3,895.1l1.3,1.6M1693.6,869.9l-.4-1M1693.6,869.9l4.1,1.4M1698.6,868.7l-.7,2.5M1704,871.1l-3.8,1M1697.9,871.2l2.3,.9M1707,880.3l-2.9-1.7M1698.2,880.9l.6-1.9M1698.8,879l2.9-.1 2.4-.3M1704.3,871.4l-1.1,2.4-1.3,2.2M1704.1,878.6l-2.2-2.6M1700.2,872.1l-.8,1.6M1699.4,873.7l1.7,2M1701.9,876l-.8-.3M1693.6,869.9l-.6,2M1689.7,871.9l2.3,.4M1693,871.9l-1,.4M1685.6,880.5l1.7-1.1M1692.4,880.9l-1.1-1.3M1687.3,879.4l4,.2M1688,874.2l1,1M1687.3,879.4l.9-2.1 .8-2.1M1453.7,894.8l-1.9,2.7-2.8,1.8-1.7,2.4M1453.7,894.8l1.2,1.6M1454.9,896.4l-1.2,3.8 0,3.9M1453.7,904.1l-2.8-.1-3-.3M1447.3,901.7l.6,2M1457.2,897.4l-2.3-1M1454,905.2l-.3-1.1M1449.4,910.6l-1.3-2.4-1.3-2.7M1446.8,905.5l1.1-1.8M1443.9,906l-1.1,1.4M1443.9,906l-1.8-2.4-1.3-2.3M1442.8,907.4l-2.6-1.3-2.8-.3M1437.4,905.8l-.4-1.8M1446.8,905.5l-2.9,.5M1443.1,912.2l-.7-1.2M1442.4,911l.4-3.6M1447.3,901.7l-3.7-1.5-1.7-.8M1436.9,913l1.4-2M1436.9,913l-3.5,.1M1438.3,911l-1.2-3.4M1437.1,907.6l-3.9,1.4M1433.2,909l-.5,2.4M1432.7,911.4l.7,1.7M1436.3,920.6l.3-4.1 .3-3.5M1442.4,911l-2.1,0-2,0M1431.4,916.7l2-3.6M1437.4,905.8l-.3,1.8M1429.7,905.3l.4,.3 3.1,3.4M1428.1,911.4l4.6,0M1393.3,1012.5l3.2-3.6 3.1-3M1392.9,1003l4.1-.6M1397,1002.4l2.6,3.5M1401.2,1010.8l0-5.1M1401.2,1005.7l-1.6,.2M1405,973l-.2-1.2M1405,973l-4.8,2.3M1404.8,971.8l-2.2-3.5-2.4-2.3M1400.2,966l-2.3,2.7-2.6,1.8M1395.3,970.5l2.4,3.9M1397.7,974.4l2.5,.9M1408.9,980.2l-1.2-4.2-2.7-3M1406.8,966.7l-2,5.1M1407.5,981.6l1.4-1.4M1402.7,980.8l-2.5-5.5M1402.7,980.8l2.4,1.4 2.4-.6M1400.8,963.7l-.6,2.3M1393.8,969.9l1.5,.6M1395.6,980.9l1-.9M1396.6,980l1.1-5.6M1402.7,980.8l-1.2,1.6M1401.5,982.4l-4.9-2.4M1614,930.7l2.5-1.7M1614,930.7l1.3,1.4 .7,1.7M1616.5,929l1.7,1.3 1.3,1.4M1616,933.8l2-.3M1618,933.5l1.5-1.8M1617.1,927.8l-.6,1.2M1613,930.9l1-.2M1612.5,936.9l1.7-1.6 1.8-1.5M1622.8,930.1l-3.3,1.6M1619.9,936.8l-.7-1.8-1.2-1.5M1639.6,905l-.4-3.2M1643.2,899.8l-2.6-.2M1639.2,901.8l1.4-2.2M1639.9,895.6l-.1,2.5M1639.8,898.1l.8,1.5M1632.1,903l1.9-.4M1632.1,903.6l1.3,1.3M1634,902.6l-.3,2M1632.9,906.3l-.8,.4M1632.9,906.3l.5-1.4M1631.8,904.7l.3-1.1M1639.3,916.5l-1.9-2.4-1.1-3.5M1633.4,915.6l3.1,.5 2.8,1.1M1633.4,915.6l.6-3M1634,912.6l2.3-2M1639.2,907.4l-2.7,1.9M1636.3,910.6l.2-1.3M1630.4,906.5l-.8,1M1629.6,907.5l.4,1.8M1632,906.8l-.6,1.9M1631.4,908.7l-1.4,.6M1626.7,909l2.1-1.5M1629.6,907.5l-.8,0M1626.7,909.9l2.6,.3M1630,909.3l-.7,.9M1628.3,913.3l1.1-.6M1628.3,913.3l.3,2.8M1628.6,916.1l4.1,.2M1629.7,912.7l3.4,3.1M1632.7,916.3l.4-.5M1629.3,910.2l.1,2.5M1627.4,913.4l.9-.1M1626.2,917.3l2.4-1.2M1631.2,919.7l1.5-3.4M1632.9,910.4l-1.5-1.7M1632.9,910.4l-3.2,2.3M1634,912.6l-1-2.2M1628.4,894.1l.6,2.5M1628.4,894.1l3.4-.3M1631.8,893.8l-.1,2.2M1631.7,896l-1,1.1M1629,896.6l1.7,.5M1625.6,896.5l2.1,1.4M1628.4,894.1l-1.8-.8M1629,896.6l-1.3,1.3M1624.3,900.7l-.7-.3M1627.7,897.9l.5,1.5M1640.2,891.1l-1.8-.1M1638.8,895.4l-1.8-1.9M1639.9,895.6l-1.1-.2M1638.4,891l-1.4,2.5M1636.5,887.5l-.1,1.9M1638.4,891l-2-1.6M1261.9,1294.4l-1.8-.8M1261.9,1294.4l.5-1.1M1262.3,1292.9l-3.8-2.5M1260.1,1293.6l-1.7-2.4M1262.4,1295.4l-.5-1M1260.1,1295.4l0-1.8M1264.9,1295.2l-2.5-1.9M1262.9,1292.5l-.6,.4M1429.4,1024.7l1.7-3.2M1429.4,1024.7l1.5,2.9 .5,3.7M1431.4,1031.3l2.5-2.5M1433.9,1028.8l1.1-2.7M1434.6,1024.4l-2.9-2.7M1434.6,1024.4l.4,1.7M1429,1024.9l-1.9-.9-2-1.4M1431.1,1016.2l0,5.3M1435.4,1033.9l-2-1.1-2.1-.9M1431.3,1031.9l.1-.6M1436.3,1033.2l-1.7-1.6-.7-2.8M1437.3,1026.2l-2.3-.1M1438.3,1016.2l-3.4,3.7-3.2,1.8M1438.9,1020l-4.3,4.4M1413.6,1035.2l2,2 3.2,.6M1418.8,1037.8l-.7,4.4M1424.7,1044.7l-.2-3.2M1424.5,1041.5l-1.4-1.1M1418.1,1042.2l5-1.8M1429,1024.9l-1.1,3.4-1.8,2.6M1420.7,1030.1l1,.8M1421.7,1030.9l4.4,0M1418.8,1037.8l2.8-1.2M1421.7,1030.9l-.6,3.1 .5,2.6M1423.1,1040.4l-.1-3.2M1421.6,1036.6l1.4,.6M1427.4,1038.3l-1.3-2.6M1427.4,1038.3l1,.4M1428.4,1038.7l2.2-1.7M1426.7,1033l-.6,2.7M1426.7,1033l3.8,.3M1430.5,1033.3l.1,3.7M1424.5,1041.5l2.9-3.2M1423,1037.2l3.1-1.5M1428.8,1043l-.4-4.3M1431.9,1037.6l-1.3-.6M1426.1,1030.9l.6,2.1M1431.3,1031.9l-.8,1.4M1387,945.2l-.9,.8M1386.1,946l-1,1.8M1387.5,949.4l1.8-1.2M1385.4,949.3l-.3-.7M1385.4,949.3l2.1,.1M1385.1,947.8l0,.8M1387.5,949.4l-1.2,2.1M1385.4,949.3l0,1.4M1385.4,950.7l.9,.8M1385.5,954l1.8,1.6M1385.5,954l.8-1.7M1386.9,952.4l.7,2.7M1386.3,951.5l.2,.7M1388.4,952l-1.5,.4M1389.5,953.8l-1.9,1.3M1387.3,956.5l0-.9M1376,953.2l1-.4M1378.5,957.3l1.6-1.7M1380.1,955.6l-2.3-2.6M1377,952.8l.8,.2M1381.9,945.5l-.6-2.3M1381.9,945.5l-.3,1.1M1381.6,946.6l-3.4,2.8M1378.2,949.4l-2.4-1.1-1.9-1.8-.1-.1M1386.1,946l-4.2-.5M1385.1,947.8l-2.9,.5M1382.2,948.3l-.6-1.7M1378.2,949.9l-1.2,2.9M1387.1,956.7l-3.1-.8M1385.5,954l-1.3,.3M1384,955.9l.2-1.6M1383.2,958.5l.7-2.6M1383.9,955.9l-3.7-.3M1497.8,973.5l-1-4.4M1497.8,973.5l-2.9,3M1496.8,969.1l-2.9,1.5-4,.7-4.2,.5M1494.9,976.5l-4.2-.8M1490.7,975.7l-4.8-3.1M1485.9,972.6l-.2-.8M1504.4,977.6l-3.1-2.5-3.5-1.6M1497.1,967.7l-.3,1.4M1496,979l-1.1-2.5M1484.8,971l.9,.8M1485.7,980l2.6-2.1 2.4-2.2M1480,978.9l1.5-1.4 2-2.5 2.4-2.4M1876.2,800.8l-5,0M1871,802.3l.1-1.2M1865.2,802.1l-.1-1.6M1871.1,801.1l-6-.6M1860.9,788.2l2.9,4.4M1863.8,792.6l-.1,2.8M1856.4,795.1l6.5,1.1M1863.7,795.4l-.8,.8M1859.8,801.5l3.7-2.7M1862.9,796.2l.6,2.6M1863.5,798.8l1.6,1.7M1863,707.9l-2.2-.9M1860.8,707l-3.3,.8-2.9,.3-2.7,.1-2.7,0M1856.7,719.7l2.4-2.6M1856.7,719.7l-1.1-2.2-1.5-1.6-1.4-1.9-1.9-1.7-2.1-1.7M1859.1,717.1l2-2.9 1.4-3.1 .5-3.2M1849.2,708.2l-.5,2.4M1844.2,722.6l1.3-4.8 .9-4.4M1855.9,721.9l.8-2.2M1846.4,713.4l2.3-2.8M1843,752.5l-.2,2.6M1832.8,754.3l1.4,.8M1842.8,755.1l-4.3-.2-4.3,.2M1831.8,770.6l-1.3-7.3 .5-5.4M1831.8,770.6l1.2,.4M1833,771l1.3-3.9 2.9-2.3 1.9-2.9M1834.2,755.1l2.1,3.3 2.8,3.5M1824.9,793.3l-.7-5.4M1830.9,791.1l-.6-3.4 0-4.3-.5-5.8M1824.2,787.9l1.5-5.6M1825.7,782.3l1.9-3.3 2.2-1.4M1839,777.4l-1.5-3.2M1837.5,774.2l-4.5-3.2M1831.8,770.6l-1.7,1.6M1829.8,777.6l.3-5.4M1824.9,758.9l-.3,1.6M1830.1,772.2l-3-3.7-1.7-3.8-.8-4.2M1816.1,798.5l-2.5-5.4M1820.6,796.8l-2.7-3.4M1817.9,793.4l-4.3-.3M1824.2,787.9l-2.3,1.8-2.3,.4M1817.9,793.4l1.7-3.3M1808.9,792.9l3.6-.5M1812.5,792.4l1.1,.7M1820.6,743.2l1.2-1.5M1824.4,740.1l-2.6,1.6M1814.7,761.6l-3.3,3.4M1814.7,761.6l1.8,2 2.3,.8 1.1,4M1811.4,765l-.5,1M1810.9,766l-3,5.9-2.4,4M1805.5,776.5l2.7,3 4.4,2.1 3.9,2.3M1805.5,776.5l0-.6M1816.5,783.9l.7,0M1817.2,783.9l3.3-2.5 .9-5.9M1819.9,768.4l1.5,7.1M1816.7,754.1l-.2,3.6-1.8,3.9M1810.3,747.6l-1.9,3-1.2,3.6M1807.2,754.2l1.9,2.9 1.9,3.1 .4,4.8M1824.6,760.5l-2.1,3.9-2.6,4M1812.5,792.4l1.8-3.9 2.2-4.6M1803.9,783.1l.7-3.2 .9-3.4M1797.3,771l2,1.1 2.4,.4 1.5,1.9 2.3,1.5M1819.6,790.1l-.5-3.4-1.9-2.8M1825.7,782.3l-4.3-6.8M1861.6,693.3l1.5-3.1M1861.6,693.3l-2.4-.7-1.6-2.7M1863.1,690.2l-2.1-8.5M1857.6,689.6l1.4-5-.4-5.9M1861,681.7l-2.2-3.2M1850.5,700.6l3.5-3.8 3.6-6.9M1858.2,699.5l-2.6,.4-2.5,.2-2.6,.5M1858.2,699.5l3.4-6.2M1854.2,684.2l3.4,5.4M1854.9,676.7l1.6,2.3 2.1-.3M1860.2,662.5l1.4,3.1 .7,3.8M1862.3,669.4l-3.5,9.1M1851.5,758.5l.1-3-1.3-3.4M1854.6,751.3l3.6,2.4 4,1M1851.5,758.5l2.7,1.7 3.6,.2M1857.8,760.4l2.1-3.1 2.3-2.6M1865.5,771.6l.9,2.7 2,2.4 .2,3.2M1865.5,771.6l3.4-3.5M1872.8,767.5l-3.9,.6M1872.8,767.5l2.1,2.8 3.1,2.5M1878,772.8l-3.3,2.4-3.1,2.4-2.9,2.4M1856.7,771.3l4.4,.9 4.4-.6M1866.4,780.7l2.2-.8M1856.3,771l.6-2.6M1856.9,768.4l1.8-2.1M1858.7,766.3l4.6-1.6 3.6-2.7M1866.9,762l1.3,2.7 .7,3.4M1888.9,769.8l-2.7-2.8-2-2.7 .3-3.1M1884.5,761.2l-3.2-1.3-2.1-1.9M1881.8,772.2l-3.8,.6M1879.2,758l-2.3,3.3-2.3,3.2-1.8,3M1870.6,783.6l-1.2-1M1869.4,782.6l-.7-2.6M1867.1,789.6l1.3-3.5 1-3.5M1863.8,792.6l3.3-3M1890.4,740.2l-2.8-.7M1891,749.7l-1.3,.3-2.8,1.7-3.2,1.6-3.7,.9M1884.4,740l3.2-.5M1884.4,740l-3.9,1.1-2.5,1.9M1880,754.2l0-2.9-1-2.6 .3-2.8-1.3-2.9M1884.4,740l-2.2-2.7-2.4-2.4-1.9-3.1M1872.3,733.3l2.8-.2 2.8-1.3M1872.1,734.2l1,3.7 1.2,3.6M1878,743l-3.7-1.5M1865.4,737.7l1.9,4.4 2.2,4.3M1874.3,741.5l-1.8,1.4-1.9,1.4-1.1,2.1M1912.9,496.6l.6,4.9M1919.6,501.7l-5.6,1.3M1914,503l-.5-1.5M1914,503l.5,6.4M1914.9,523.6l.1-2 0-4.8-3.2-5.6M1914.5,509.4l-2.7,1.8M1906.1,510.7l2.3,6.3 1.4,6.1M1906.1,510.7l4.8-.1M1910.9,510.6l.9,.6M1938.8,484.4l.3,.8M1938.8,484.4l2.9-3 2-3.4M1939.1,485.2l4.5,1.7 6,0M1944.3,478.1l4.3,3.7 2.8,4M1951.4,485.8l-1.8,1.1M1936.6,482.6l-1.3-3.7-.6-3.2M1936.6,482.6l2.2,1.8M1940,475.8l3.7,2.2M1939.4,493.8l-.1-4.3-.2-4.3M1947.3,493.8l1.1-3.4 1.2-3.5M1950.2,472l-1.9,1.8-1.3,2.4-2.7,1.9M1953,486l-1.6-.2M1850.4,542.2l.9,0M1850.4,542.2l-3.5-1.7M1851.3,542.2l4.7-1.5 2.8-2M1846.9,540.5l3.5-2.2M1858.8,538.7l-8.3-.4M1848.2,545.1l2.2-2.9M1857,543.2l-5.7-1M1843.3,540.5l3.6,0M1845.5,535.1l1.9,1.8 3,1.4M1854.4,534.4l-2.8,1.9-1.1,2M1888.9,583.7l1.9-4M1888.9,583.7l.3,1.2M1889.2,584.9l4,1.2M1890.8,579.7l3.1,.9 4-1.1M1897.9,579.5l-3.1,2.8-1.6,3.8M1890.5,578.1l.3,1.6M1885.6,581.7l3.3,2M1888.7,591.7l.3-2.5 .2-4.3M1898.4,601l.2-2.3M1894.9,588.9l-1.7-2.8M1899.3,578.8l-1.4,.7M1884.5,761.2l3.3-.8 2.9-1.1 1.2-.1M1925.3,674.3l1.1,4.9M1938.4,685.5l-2.1-.2-3.7,.6-3.7-.6M1926.4,679.2l1.9,3 .6,3.1M1931.6,694.5l-1-1.1-1-3.7-1.1-4M1910,669.6l-1.8,1.8M1908.2,671.4l.5,4.1 2.4,3.9M1915.3,669.9l.7,3.4 1.4,3.5M1911.1,679.4l3.4-1.5 2.9-1.1M1926.4,679.2l-4-.9-3.2,.4M1917.4,676.8l1.8,1.9M1924.2,476.4l1,2.9-.2,3.4M1931.5,474.2l-.9,3.6-1.1,3.9M1929.5,481.7l-4.5,1M1936.6,482.6l-3,.6M1929.5,481.7l4.1,1.5M1936.9,494.6l-4.9-4.5M1933.6,483.2l-1,3.2-.6,3.7M1917.6,484.2l4.9,0M1925,482.7l-2.5,1.5M1584.4,892.3l-2.1,.8M1584.4,892.3l2.5,2.7 .4,1.7M1582.3,893.1l-1.9,4.1-.8,1.4M1576.3,893.3l6-.2M1585.5,891.4l-1.1,.9M1576.2,893.4l.9,3.9 .3,2.2M1572.7,903l2.8,2.4 .5,.1M1566.6,920.8l1.4,.3M1571.3,916.9l-.2,1.9M1568,921.1l3.1-2.3M1568.9,928.8l1.1-4.1M1568,921.1l2,3.6M1580,919.9l-4.7,1.9M1571.1,918.8l4.2,3M1582.7,923.5l.2,.5M1582.9,924l4.4,2.8M1591,927.5l-3.7-.7M1583.1,937.7l1.6-3.4M1571.3,930.6l7.1,1.6M1584.7,934.3l-6.3-2.1M1812.7,847.6l-2.3-2.5M1812.9,847.6l.9-2.3M1813.8,845.3l-1.9-.5M1810.4,845.1l1.5-.3M1812,842.3l-.1,2.5M1815.1,844.2l-.8,1.1M1803.7,858.2l1.4,.9M1803.7,858.2l-2.5-.2M1801.1,859.3l1.4,2.2M1801.1,859.3l.1-1.3M1802.5,861.5l2.2-1.4M1805.1,859.1l-.4,1M1800.5,857.2l.7,.8M1802.5,854.7l2.8,1.3M1805.3,856l-1.6,2.2M1799.5,861.5l1.6-2.2M1801.6,864.4l.9-2.9M1800.9,864.9l.7-.5M1827.5,851.9l1.6-.7M1827.5,851.9l.3,1M1829.1,851.2l.5,1.6M1827.8,852.9l1.8-.1M1829.7,850.7l-.6,.5M1831.8,852l-2.1-1.3M1830.9,850.1l-1.2,.6M1830.9,850.1l-.5-1.1M1829.7,850.7l-1.9-.4M1830.4,849l-.8-.1M1829.6,848.9l-1.6,.8M1832.5,849.9l-1.6,.2M1833.1,847.8l-2.7,1.2M1827.7,848.6l-.9,0M1826.8,849.2l1.2,.5M1827.2,850.4l-1.2,0M1826.8,849.2l-.8,.7M1827.9,844.5l-1.4,0M1826.5,844.5l-1.2-.2M1829.1,845.3l-2.3,.4M1826.5,844.5l.3,1.2M1827,846.4l-.6-.4M1822.5,857.9l.9-.5M1822.5,857.9l.9,1.1M1823.4,857.4l.7-.1M1824.1,857.3l.3,1.1M1824.4,858.4l-1,.6M1822.2,860.9l-.6-2.3M1822.3,858l-.7,.6M1822.4,860.7l1-1.7M1825.8,858.1l-1.4,.3M1825.6,856.3l-1.5,1M1824.4,859.8l-2,.9M1819.7,859.7l.3-2.3M1819.9,859.7l1.2-.9M1821.1,858.8l-.4-1.7M1820.7,857.1l-.7,.3M1817.7,860.3l.2-1.2M1819.2,857.5l-1.3,1.6M1818,860.3l1.7-.6M1821.3,861.9l-1.7-.1M1821.3,861.9l.9-.9M1822.2,860.9l-2.2-.5M1820,860.4l-.4,1.4M1818.7,862.9l.4,1.4M1818.8,862.7l.8-.9M1820.6,863.7l.7-1.8M1823.5,862.1l-1.3-1.1M1819.9,859.7l.1,.7M1818,860.3l.8,2.4M1822,850.7l1.6-.5M1822.5,849.2l-.9,1.1M1823,849.3l.6,.9M1827.8,852.9l-.7,.5M1827.1,853.4l-.4,1.1M1822.3,858l0-1.4M1822.3,856.6l-1.5,.4M1821,851.8l1-1.1M1821.3,852.4l.9-.2M1822,850.7l.9,.6M1822.2,852.2l.7-.9M1824.5,850.7l-.8,.6M1823.7,851.3l-.8,0M1818.5,854.8l.2,1.4M1818.1,854.7l-.6,.5M1817.5,855.2l-.5,1.3M1818.4,856.7l-1,.5M1817.4,857.2l-.4-.7M1819.4,854l-.7,.7M1817.7,853.1l.4,1.6M1819,852.5l-1.1,.1M1817.9,859.1l-.9-1.2M1819.2,857.5l-.8-.8M1817,857.9l.4-.7M1819.7,857.3l.4-1.7M1820.1,855.6l-1.4,.6M1817,857.9l-1.5,.9M1814.9,857.2l.6,1.6M1815,856.9l2-.4M1817.5,855.2l-1-.1M1815.8,854l.7,1.1M1814.9,857.2l-1.4,1.1M1813.5,858.3l-.7,1.6M1812.8,859.9l.1,.6M1812.9,860.5l2.3-1.2M1815.8,867.3l-.8-2.3M1812.9,867.9l-.4-1M1812.5,866.9l.4-.8M1812.9,866.1l2.1-1.1M1807.8,872.5l-.2-.6 .8-2.9M1803.9,871.5l1-2M1808.4,869l-3.5,.5M1803.7,864l2.5,2.1M1801.6,864.4l2.1-.4M1801.6,867.9l2.9,0M1806.2,866.1l-1.7,1.8M1804.9,869.5l-.4-1.6M1810,856l.9-1.4M1810,856l-3.6-.2M1810.9,854.6l-3.8-.8M1807.1,853.8l-.8,2M1812.3,853.2l-.1,.6M1812.2,853.8l-1.3,.8M1805.3,856l1-.2M1807.1,858.5l-2,.6M1807.1,858.5l-.7-2.7M1699.4,873.7l-2.8,.8M1697.7,871.3l-1.1,.6M1696.6,874.5l0-2.6M1693,871.9l1.7,.4M1696.6,871.9l-1.9,.4M1405.2,991.6l-2.9,3M1406.2,991.3l-1,.3M1407.8,994.8l-2.7,3.5M1402.3,994.7l2.8,3.6M1409.3,1001.9l-1.9-1.4-2.6-.8M1401.2,1005.7l1-2.3M1402.2,1003.4l2.6-3.7M1404.8,999.7l.3-1.4M1398.7,997.5l.9-.3M1398.7,997.5l-3.8-1.7M1398.1,992.7l-2,.8M1398.1,992.7l2.1,3.6M1400.2,996.3l-.6,.9M1394.9,995.8l1.2-2.3M1397,1002.4l1.7-4.9M1402.2,1003.4l-1.3-2.9-1.3-3.3M1393.8,996.5l1.1-.7M1402.3,994.7l-2.1,1.6M1394.1,990.5l1.8,.1M1396.2,991l-.1,2.5M1407.5,981.6l-2.5,3.9M1405.2,991.6l-1.3-2.9M1405,985.5l-1.1,3.2M1633.5,899.4l1.1,1.5M1634.6,900.9l-.4,1.5M1634,902.6l-1.1-2.4M1632.9,900.2l.1-.7M1632.9,900.2l-1,2.2M1631.7,896l1.2,1.8M1630.7,897.1l.3,1M1631,898.1l1.6,1.3M1632.9,897.8l.1,1.6M1634.2,902.4l.7,.4M1633.7,904.6l1.7,.7M1634.9,902.8l.5,2.5M1633.6,907.2l-.4,2.8M1633.6,907.2l1.9-1.3M1633.2,910l2.7-2.1M1635.5,905.9l.4,1.7M1632.9,906.3l.7,.9M1636.5,909.3l-.6-1.4M1638,905.1l-2.1,2.5M1639.5,905.4l-1.5-.3M1630.5,905.5l-.6-1.1M1628.8,907.5l-.2-2.2M1629.9,904.4l-1.3,.9M1631.9,902.7l-1.9,1.4M1625,907l1.7-2M1628.6,905.3l-1.9-.3M1630.4,899.7l-1.1,.5M1630.4,899.7l.7,.6M1631.1,900.3l.4,1.5M1631.5,901.8l-1.9,0M1629.3,900.2l.3,1.6M1628.2,899.4l1.1,.8M1631,898.1l-.6,1.6M1632.6,899.4l-1.5,.9M1631.9,902.4l-.4-.6M1630,904.1l-.4-2.3M1626.8,904.6l2.8-2.8M1636.1,895.6l.9,1.8M1636.1,895.6l-1.6,.7M1634.5,896.4l.5,2M1635,898.4l.7,.9M1635.7,899.3l1.3-1.6M1638.8,895.4l-1.8,2M1637,893.5l-.6,.2M1636.4,893.7l-.3,1.9M1633.5,899.4l1.5-1M1632.9,897.8l1.6-1.4M1635.7,899.8l-1.1,1.1M1638,899.1l1.8-1M1638,899.1l-1-1.4M1634.7,889.9l.4,2.9M1634.7,889.9l-4-.7M1630.5,890.4l.2-1.2M1630.5,890.4l1.5,3.2M1635.1,892.8l-2.2,1M1632,893.6l.9,.2M1636.4,889.4l-1.7,.5M1636.4,893.7l-1.3-.9M1625.7,892.3l4.8-1.9M1634.5,896.3l-1.6-2.5M1385.1,948.6l-1.7,1.9M1382.2,948.3l-.2,1.1M1382,949.4l1.4,1.1M1378.2,949.9l2.7,.7M1382,949.4l-1.1,1.2M1869.3,796.9l1.9,3.4M1869.3,796.9l1.1-2.8M1871.2,800.3l4.3-2.7M1870.8,794.1l4.3,1.8M1875.1,795.9l.4,1.7M1863.7,795.4l5.6,1.5M1867.1,789.6l3.3,4.5M1879.5,798.7l-4-1.1M1873.7,791l-2.9,3.1M1879,794.3l-3.9,1.6M1850.5,700.6l-1.1,.6M1852.9,685.9l-.4,5.2-2.2,4.6M1849.4,701.2l.9-5.5M1858.2,699.5l1.2,3.8 1.4,3.7M1849.2,708.2l-1-3.2 1-3.5M1846.5,685.8l1.7-4.2M1846.5,685.8l.8,3.3 .8,3.2M1850.3,695.7l-2.2-3.4M1849.3,760.1l-.1,5M1849.3,760.1l-4.1-1.6M1845.2,758.5l-1.8,2.1-1.6,2.5M1849.2,765.1l-3.7,2.9M1841.8,763.1l2.6,4.4M1845.5,768l-1.1-.5M1857.8,760.4l1.5,2.6-.6,3.3M1856.9,768.4l-3.2-.3-2.3-1.4-2.2-1.6M1851.5,758.5l-2.2,1.6M1842.8,755.1l2.4,3.4M1839.1,761.9l2.7,1.2M1848,776l-1-4.1-1.5-3.9M1837.5,774.2l2.2-2.7 2.3-2.3 2.4-1.7M1814,739.1l1-.1M1814,739.1l-.6-2.7-2.1-2.4M1815,739l2.7-2.1 2.1-2.2M1812.5,732.3l.4,.1 3.3,1.6 3.5,.5M1821.8,741.7l-2.4-.6-1.7-1.5-2.7-.6M1824.4,740.1l-1.1-1.9-1.2-1.9-2.3-1.6M1824.3,730l-2.4,2.2-2.2,2.3M1806.5,754.4l-1.1,3.2-1.8,2.1-1.5,3M1806.5,754.4l-1.6-1.2-1-2.2M1803.6,751.2l-1.9,3.8-1.6,3.6M1800.1,758.6l.7,4.8M1800.8,763.4l1.3-.7M1807.2,754.2l-.7,.2M1810.9,766l-2.2-1.1-2.1-1-2-1.3-2.5,.1M1805.1,746.9l-1.2,4.1M1801,749.5l2.6,1.7M1798.3,755.5l1.8,3.1M1797.7,767.5l3.1-4.1M1867.6,761l0-2.7-.5-2.6-1.9-2.2M1867.6,761l2.8-1.6 2.7-.6 2.8-2.2 3.2-1.1M1870.5,749.7l3.2,1.9 2.9,1.8 2.6,1.6M1870.5,749.7l-2.4,1.2-2.5,1.2M1865.6,752.1l-.4,1.4M1866.9,762l.7-1M1862.2,754.7l3-1.2M1879.2,758l-.1-2.5M1880,754.2l-.8,.8M1869.5,746.4l1,3.3M1860.3,745.8l2.5,3.5 2.8,2.8M1895.7,497.6l4.4,2.3M1905.4,496.5l-2.4,3.4M1900.1,499.9l2.9,0M1906.8,499.5l2.5,1.2M1906.8,499.5l-1.1,1M1905.7,500.5l.2,1.8M1905.9,502.3l1.2,1.2M1907.1,503.5l2.3-1.2M1909.3,500.7l.2,1.1M1909.4,497.2l-.1,3.5M1905.4,496.5l1.4,3M1903.2,500l2.5,.5M1903.2,500l-.2,4M1903,504l2.9-1.7M1913.5,501.5l-4,.3M1910.9,510.6l-1.5-8.3M1894.7,725.7l.9-7.1M1894.8,729l-.1-3.3M1902.7,726.3l.3-2.8-.8-5M1895.6,718.6l3.3,.8 3.3-.9M1918.5,704.8l2.7-2.5M1918.5,704.8l-5.5-2.1M1913.5,696.5l-1.1,2.9 .6,3.3M1913.5,696.5l4.3,.8 3.9,1.2M1921.7,698.5l-.5,3.8M1925.7,704.4l-1.2-.8-3.3-1.3M1920.6,719.7l-1.1-2.8-1.2-3-1.3-2.7M1917,711.2l.2-3.3 1.3-3.1M1923,696.8l4.9-.2 2.6-.2M1923,696.8l-1.3,1.7M1907.2,702.4l5,.6M1907.2,702.4l-3.2,5.3-.4,6.9M1912.2,703l-.3,3.6-1.6,3.7M1910.3,710.3l-5.7,4.1M1903.6,714.6l1-.2M1913,702.7l-.8,.3M1917,711.2l-2.7-1.2-4,.3M1917.6,724.7l-.3-.4-2-2.2-2.4-1.6-2.1-2.3-2.5-2.5-3.7-1.3M1903.5,714.7l-1.3,3.8M1885.4,656.7l1.2,2.4M1877.8,658.3l1,3.4M1878.8,661.7l2.1,1.2 2.5,.6M1886.6,659.1l-1.3,2.4-1.9,2M1914.6,690.4l-.4-3.4-1.1-3.3M1914.6,690.4l3.6,.2 3.2-.3M1913.1,683.7l3.6,.2 2.9-.3M1919.6,683.6l1.2,2.9 1,3M1921.4,690.3l.4-.8M1911.3,693.5l2.2,3M1911.3,693.5l3.3-3.1M1923,696.8l-1.5-3-.1-3.5M1911.1,679.4l-.6,2.7M1910.5,682.1l2.6,1.6M1919.2,678.7l.4,4.9M1928.5,685.7l-3.6,1.7-3.1,2.1M1923.1,491.3l-.7-3.5 .5-3.1M1923.1,491.3l4.9,2.2M1922.9,484.7l4.7,2 3.5,3.4M1928,493.5l3.1-3.4M1917.7,492.4l5.4-1.1M1922.5,484.2l.4,.5M1928.9,496.9l-.9-3.4M1932,490.1l-.9,0M1592.3,931.1l0,0-2.9,.3M1587.3,926.8l-.3,2.9M1589.4,931.4l-2.4-1.7M1597.7,938.6l-2-.4-2.6-1.4-3-2.2M1589.4,931.4l.7,3.2M1588.8,939.7l-.7-4.9M1590.1,934.6l-2,.2M1584.7,934.3l3.1,.4M1575.3,921.8l.8,3M1582.9,924l-2.1,1.6M1580.8,925.6l-4.7-.8M1570,924.7l5,1.5M1575,926.2l1.1-1.4M1815.1,844.2l1.8,.9M1818.3,845.1l-1.4,0M1814.6,850.2l.7-1.6M1813.1,847.7l2.2,.9M1816.8,850.1l-1.3-1.5M1825.7,853.4l1.4,0M1825.7,853.4l0-.7M1825.7,852.7l1.5-.8M1827.2,850.4l-.4,1.2M1827.2,851.9l-.4-.3M1825.5,850.7l.1,.7M1826.8,851.6l-1.2-.2M1823.7,845.3l1.6-1M1823.7,845.3l.9,.5M1825.3,844.3l.2,1.5M1824.6,845.8l.9,0M1822.7,845l1,.3M1826.4,846l-.9-.2M1824.8,846.9l.8,.2M1817.6,852.2l.8-1.4M1818.4,850.8l1.5,.6M1821.6,850.3l-.9-.2M1820.7,850.1l-.5,.2M1819.9,851.4l.3-1.1M1822.4,849.2l-1.4-.7M1822.4,849.2l.6-1.2M1821.6,847.9l-.6,.5M1821.6,847.9l.9,0M1820.3,848.7l.4,1.4M1820.3,848.7l.7-.2M1821,847.2l.6,.7M1819.9,847.4l1.1,1M1821.8,846.7l.7,1.2M1823.6,847.1l.2,.8M1823.8,847.9l-.8,.1M1823.9,849.1l.8,.5M1823.9,849.1l.6-.9M1824.5,848.2l1.3,0M1825.1,849.5l.8-1.2M1823,849.3l.9-.2M1824.1,850.3l.6-.7M1823.8,847.9l.7,.3M1825.5,850.7l-1,0M1826,849.9l-.9-.4M1826.8,848.6l-.9-.3M1823.9,853.2l-.8,0M1823.9,853.2l1-.7M1823.1,853.2l0-.7M1823.1,852.5l.8-.7M1823.9,851.8l1,.3M1821.2,853.5l1.7-.2M1822.2,852.2l.9,.3M1825.6,851.4l-.7,.7M1825.7,852.7l-.8-.2M1822.9,853.3l-.4,1.3M1821.1,853.6l-.1,.9M1822.5,854.6l-1.5-.1M1820.8,857l.4-1.2M1820.1,855.6l.4-.4M1821.2,855.8l-.7-.6M1818.7,854.7l1.8,.3M1821,854.5l-.5,.5M1824.5,854.4l.4,.5M1824.1,854.4l-1.3,.6M1824.9,854.9l-.5,.8M1822.6,856.2l.1-1.1M1822.6,856.2l1.4-.2M1825.7,853.4l-1.2,1M1826.7,854.5l-1.8,.4M1823.9,853.2l.2,1.2M1825.6,856.3l-1.2-.6M1821.2,855.8l1.5-.7M1823.4,857.4l.6-1.4M1813.4,854.7l-.5,1.8M1813.4,854.7l1.3,0M1814.7,854.7l.3,1.9M1812.9,856.5l2,.3M1812.2,853.8l1.2,.9M1815.8,854l-1.1,.7M1816.5,855.1l-1.5,1.5M1809.9,859.6l1-.7M1809.9,859.6l-1.6,0M1810.9,858.9l.6-1.2M1807.3,858.5l1,1.1M1807.3,858.5l2.9-1.9M1810.2,856.6l1.3,.7M1812.9,860.5l-.3,.5M1809.8,860.5l2.5,.7M1809.8,860.5l.1-.9M1812.8,859.9l-1.9-1M1813.5,858.3l-2-.6M1810,856l.2,.6M1812.9,856.5l-1.4,.8M1817.5,860.5l-2.1-.7M1812.6,861l.9,1.1M1815.4,859.8l-.7,2M1813.5,862.1l1.2-.3M1808.3,861.8l-.8,1.7M1808.3,861.8l-1.7-.4M1807.5,863.5l-2.3-.9M1806.6,861.4l-.9,.4M1805.7,861.8l-.5,.8M1809.8,860.5l-.5,.7M1808.3,859.6l-1.7,1.8M1809.3,861.2l-1,.6M1804.7,860.1l1,1.7M1803.7,864l1.5-1.4M1806.2,866.1l1.5-.6M1808.4,869l.4-.6M1807.7,865.5l1.1,2.9M1811.9,869.3l-2.6-1M1812.5,866.9l-1.4-.1M1811.1,866.8l-1.8,1.5M1694.7,872.3l-.6,1.9M1692,872.3l-.7,2.4M1694.1,874.2l-2.8,.5M1689,875.2l1.8-.2M1691.3,879.6l1.1-1.8M1690.8,875l1.6,2.8M1401.5,982.4l-.5,1.5M1405,985.5l-2.9,.7M1402.1,986.2l-1.1-2.3M1397.4,985.9l.6,.2M1401,983.9l-3,2.2M1395.9,990.6l2.2-3.1M1398.1,987.5l-.1-1.4M1398.2,990.3l.3,1.9M1398.2,990.3l1.3-1.6M1399.5,988.7l.9-.2M1400.4,988.5l.8,1.6M1398.5,992.2l2.2-1M1400.7,991.2l.5-1.1M1396.2,991l2-.7M1398.1,987.5l1.4,1.2M1402.1,986.2l-1.7,2.3M1403.9,988.7l-2.7,1.4M1402.3,994.6l-1.6-3.4M1637.3,903.5l-1,.5M1637.3,903.5l.7-2M1636.3,904l-.3-2.5M1637.8,901l-1.7,0M1638,905.1l-.7-1.6M1635.5,905.4l.8-1.4M1639.2,901.8l-1.2-.3M1634.9,902.8l1.1-1.3M1638,899.1l-.2,1.9M1635.7,899.8l.4,1.2M1377.8,953l2.1-.6M1380.9,950.6l-.2,1M1379.9,952.4l.8-.8M1380.2,955.6l.9-1.5M1379.9,952.4l1.2,1.7M1835.8,718.1l-.3-5.2M1828.6,719.8l.7-3.2 0-3.7-.3-4.1M1835.5,712.9l-2.2-2-2.2-1.5-2.1-.6M1846.4,713.4l-3-.3-3.2-.5-2.9-1.9M1835.5,712.9l1.8-2.2M1829,708.8l-.7-3.2M1846.5,685.8l-4.3,1.5-1.7,.5M1902,505.4l2.8,2.7M1902,505.4l-2.7,1M1898.1,507.3l-1.9,6.6M1898.1,507.3l1.2-.9M1896.2,513.9l4.9-.7 4-3M1905.1,510.2l-.3-2.1M1907.1,503.5l-2.3,4.6M1903,504l-1,1.4M1900.1,499.9l-.8,6.5M1894.1,505.5l4,1.8M1906.1,510.7l-1-.5M1910.5,682.1l-2,.5M1911.3,693.5l-5-.9M1908.5,682.6l.6,3.4-1.8,3.1-1,3.5M1897.7,658.6l-1.9-.8-2-1.8M1897.7,658.6l1.4,2.5 1.1,2.5M1900.2,663.6l-2.2,1-2.3,1.5-2.7,1.5M1893.8,656l-1,2.7-1.8,2M1891,660.7l-.6,3.3 .4,3.1M1890.8,667.1l2.2,.5M1899.4,649.1l-.9,3-.4,3.3-.4,3.2M1890.4,650.1l2,2.6 1.4,3.3M1906,658.2l-1.5,2.2-1.9,1.6-1.9,1.8M1886.6,659.1l4.4,1.6M1585.8,929.4l-1.6,.8M1585.8,929.4l-3-1.6M1582.8,927.8l-6.1,.2M1584.2,930.2l-6.7-1.4M1577.5,928.8l-.8-.8M1587,929.7l-1.2-.3M1587.8,934.7l-3.6-4.5M1580.8,925.6l2,2.2M1575,926.2l1.7,1.8M1578.4,932.2l-.9-3.4M1819.9,846.4l-1.2-.1M1819.9,847.4l-.9-.2M1818.7,846.3l.3,.9M1818.3,845.1l.3,1.1M1816.9,845.1l.2,1.1M1818.6,846.2l-1.5,0M1816.9,861.3l-1.7,1M1816.9,861.3l0,1.8M1815.2,862.3l-.5,1.8M1816.4,863.9l.5-.8M1816.4,863.9l-1.3,.8M1815.1,864.7l-.4-.6M1817.5,860.5l-.6,.8M1814.7,861.8l.5,.5M1818.7,862.9l-1.8,.2M1813.5,862.1l-.6,1.8M1812.9,863.9l1.8,.2M1818.4,865.7l-2-1.8M1812.9,866.1l-.5-1.9M1807.9,865.1l2.2-2.1M1807.8,865.3l3,0M1811.1,862.5l.9,1.8M1811.1,862.5l-1,.5M1812,864.3l-1.2,1M1809.3,861.2l.8,1.8M1807.5,863.5l.4,1.6M1811.1,866.8l-.3-1.5M1812.3,861.2l-1.2,1.3M1696.3,874.7l-1.3-.1M1696.3,874.7l.9,1.7M1695,874.6l-2.5,3.1M1692.5,877.7l4.3-.4M1697.2,876.4l-.4,.9M1694.1,874.2l.9,.4M1701.1,875.7l-3.9,.7M1698.8,879l-2-1.7M1382.6,952.2l0,1.1M1382.6,952.2l.8-1M1384.6,952.3l-.3-.9M1384.6,952.3l-.7,1.6M1383.9,953.9l-1.3-.6M1384.3,951.4l-.9-.2M1380.7,951.6l1.9,.6M1381.1,954.1l1.5-.8M1383.4,950.5l0,.7M1385.4,950.7l-1.1,.7M1386.3,952.3l-1.7,0M1846.4,701.3l-1.8-2.7-3.6-1.4-3.6-1.4M1846.4,701.3l-4.8,1.2-4.1,2.9M1837.5,705.4l-1.4-3-.8-3.3-.1-.2M1837.4,695.8l-1.2,.1M1849.2,701.5l-2.8-.2M1848.1,692.3l-5.2,2.3-5.5,1.2M1837.3,710.7l.2-5.3M1883,715.4l-.1,6.6M1883,715.4l-4.1,1.6-3.2-.6-2.5-1.1M1882.9,722l-2.8,1.9M1880.1,723.9l-4.4-2.6-2.9-1.8M1872.8,719.5l-.7-2.2M1873.2,715.3l-1.1,1.9M1881.4,725.4l-.3,4.7M1878.2,731.1l2.9-1M1878.2,731.1l-.8-3.7-2.5-4.1-2.1-3.8M1881.4,725.4l-1.3-1.5M1877.9,731.8l.3-.7M1868.4,726.6l.4-3.2 1-3.2 2.3-2.9M1859.1,717.1l3.5-.3 3.6-.3 3.3-.3 2.6,1M1863.5,707.5l2.9-.8M1873.6,714l-1.2-2.2-.9-3.2-2.3-1.1-2.8-.8M1863,707.9l.5-.4M1873.6,714l-.4,1.3M1907.2,702.4l-3.2-4M1906.3,692.6l-2.4,.2M1904,698.4l-.1-5.6M1903.5,714.7l-1.8-4.5-1.7-5.2M1904,698.4l-1.8,3.3-2.2,3.3M1895.6,718.6l-1.8-3.7M1893.8,714.9l2-6.4 1.9-7.3M1900,705l-2.3-3.8M1890.6,725.7l-1-4.8-3.1-5.1M1894.7,725.7l-4.1,0M1893.6,714.7l-3.1,1.3-4-.2M1885.3,723.7l-2.4-1.7M1890.5,725.8l-5.2-2.1M1883,715.4l1.5-2.3M1884.5,713.1l2,2.7M1868.6,660.8l1.8,3.3M1862.3,669.4l2.2-.4M1870.4,664.1l-2.9,1.9-3,3M1878.5,662.2l-2.5,1.4-2.9,1.7M1870.4,664.1l2.7,1.2M1893.8,678.1l1.4-2.1M1893.8,678.1l2,2 1.9,2.1 2.5,1.5M1895.2,676l2.6-1.1 2.3-1.8 2.4-1.3M1902.9,681.8l-2.7,1.9M1902.9,681.8l.4-3.3-.2-3.2-.3-3.3M1893,667.6l.7,2.9 .6,2.8 .9,2.7M1900.7,663.8l.8,2.7 .3,2.7 .7,2.6M1908.2,671.4l-2.9,.7-2.5-.1M1908.5,682.6l-5.6-.8M1885.8,666.3l4.7,.8M1885.8,666.3l-3,1.9-2.5,2.2M1890.5,667.1l-1.7,2.7-1.8,2.5M1887,672.3l-3.9,.3M1883.1,672.6l-2.8-2.2M1883.4,663.5l2.4,2.8M1892.2,678.8l1.6-.7M1892.2,678.8l-1.6-2.1-.9-2.5-2.7-1.9M1883.4,678.7l2.8,1.9M1891.9,679l-2.7,1.1-3,.5M1883.4,678.7l-.8-3.1 .5-3M1820.3,848.7l-.9-.1M1818.7,847.5l.7,1.1M1814.3,845.3l1.3,.9M1815.6,846.2l1.1,.2M1813.1,847.7l2.4-.6M1815.6,846.2l-.1,.9M1818.7,847.5l-.9-.2M1816.7,846.4l1.1,.9M1885.3,726.7l4.3,.7M1885.1,726.8l-1.1,3.4M1884,730.2l3.1,1.4M1887.1,731.6l2.5-4.2M1885.3,723.7l0,3M1881.4,725.4l3.7,1.4M1890.5,725.8l-.9,1.6M1881.1,730.1l2.9,.1M1887.6,739.5l-1.4-2.1 .3-2.8 .6-3M1899.3,686.7l1.2,4M1899.3,686.7l-3.8,.7-4.1,1.2M1900.5,690.7l-2.5,1.7-1.2,3.6M1896.8,696l-3-.2-3.1-1.5M1891.4,688.6l-2.2,4.2M1890.7,694.3l-1.5-1.5M1900.2,683.7l-.9,3M1903.9,692.8l-3.4-2.1M1891.9,679l-.7,3.2-.2,3.1 .4,3.3M1897.7,701.2l-.9-5.2M1893.6,714.7l-1.1-12.4-1.8-8M1873.6,714l2.7-7.9M1870.6,700.2l-1.9,3.5-2.3,3M1870.6,700.2l2-2.4 2-2.5M1874.6,695.3l.8,2.2M1876.3,706.1l-.9-8.6M1878.5,662.2l-.3,2.5 .6,2.5-.5,2.6M1873.1,665.3l-.2,1.3M1872.9,666.6l1.7,2.8M1874.6,669.4l3.7,.4M1880.3,670.4l-1.6,0M1883.4,678.7l-3.3,.1-3-.8M1878.7,670.4l-1.2,3.4-.4,4.2M1878.7,670.4l-.4-.6M1861,681.7l1.5-3.2 2.6-2M1865.1,676.5l1.4,2.5M1863.1,690.2l3.4-3.3M1866.5,679l0,7.9M1863.5,707.5l1.1-5 2.6-8.8M1870.6,700.2l-.3-5.8 0-5.9M1870.3,688.5l-3.1,5.2M1866.5,686.9l.7,6.8M1869.8,669.5l-4.9,.2M1869.8,669.5l-.3,2.4M1869.5,671.9l-4.4,4.6M1864.9,669.7l.2,6.8M1872.9,666.6l-3.1,2.9M1864.5,669l.4,.7M1816.7,848.3l1.1,1.7M1818.8,848.9l-1.8-.8M1818.8,848.9l-.2,.8M1818.6,849.7l-.6,.3M1815.5,848.6l1.2-.3M1815.5,847.1l1.3,1M1816.8,850.1l1-.1M1817.8,847.3l-.8,.8M1819.4,848.6l-.6,.3M1820.2,850.3l-1.6-.6M1818.4,850.8l-.4-.8M1882.9,686.2l-2.3,3.1M1882.9,686.2l1.4,2.4 1.6,2.7 2.9,1.7M1880.6,689.3l.9,5.9 2.7,6.7M1888.8,693l-2.1,4.3-1.2,5.5M1885.5,702.8l-1.3-.9M1886.2,680.6l-3.3,5.6M1875.4,697.5l2.3-5.1 2.9-3.1M1876.3,706.1l2.5-1 2.7-.6 2.7-2.6M1884.5,713.1l1-10.3M1874.6,695.3l.9-5.9M1870.3,688.5l.8-1.8M1875.5,689.4l-1.6-3.3-2.8,.6M1877,678.1l-2.3-3.1-2.2-2.8M1876.9,678.4l-2.6,1.2-3,0M1870.7,672.9l-.2,5.8M1870.7,672.9l1.8-.7M1870.5,678.7l.8,.9M1874.6,669.4l-2.1,2.8M1875.5,689.4l1.8-6.5-.4-4.5M1871.1,686.7l.2-7.1M1869.5,671.9l1.2,1M1866.5,679l4-.3M2211.5,401.5l3.5,3.5 5.5,4M2239.2,392.8l.8,2.7 1.5,2.5M2123.8,439.5l2.4,4.2 1.8,5.8" fill="none" stroke="#232323" stroke-width="1.7999999999999998" stroke-linecap="round" stroke-linejoin="round"/>
<defs><radialGradient id="gcity"><stop offset="0" stop-color="#232323" stop-opacity="1"/><stop offset=".55" stop-color="#232323" stop-opacity=".75"/><stop offset="1" stop-color="#232323" stop-opacity="0"/></radialGradient><clipPath id="cland"><path d="M1935.0,382.5L1940.0,386.2L1944.6,389.9L1950.0,395.0L1954.5,397.9L1958.4,402.2L1962.5,406.2L1964.9,410.4L1968.2,414.5L1972.5,418.8L1975.4,420.4L1979.8,424.4L1983.0,425.7L1987.5,428.8L1992.1,431.8L1996.4,432.9L2001.6,434.4L2005.0,437.5L2010.7,439.0L2014.3,440.5L2019.6,443.8L2025.0,445.0L2029.4,446.1L2035.3,446.6L2040.1,446.9L2045.0,448.8L2049.1,451.9L2055.0,456.2L2061.6,457.4L2067.5,458.8L2072.1,456.4L2077.5,453.8L2082.4,449.0L2087.5,445.0L2092.5,442.3L2096.2,438.8L2098.0,443.8L2094.1,448.3L2091.2,452.5L2087.6,457.6L2083.8,461.2L2087.5,467.5L2093.8,473.8L2096.2,480.0L2099.8,483.3L2102.5,487.5L2108.5,485.5L2112.5,485.0L2118.8,483.8L2112.5,487.5L2108.6,490.5L2105.0,492.5L2099.9,494.4L2096.2,496.2L2090.7,498.7L2087.6,500.6L2082.5,502.5L2077.0,503.4L2070.0,505.0L2065.4,505.2L2060.2,504.9L2055.0,505.0L2050.7,506.7L2044.9,507.0L2040.0,507.5L2034.1,510.0L2030.3,512.7L2025.0,513.8L2021.5,516.7L2016.4,520.8L2012.5,523.8L2008.2,527.4L2005.2,530.5L2002.5,535.0L2001.0,541.2L2001.2,546.2L1998.6,549.9L1997.5,554.5L1992.3,551.7L1987.5,547.5L1982.3,544.9L1978.8,543.3L1975.0,540.7L1970.0,537.5L1965.2,535.1L1961.0,533.9L1957.8,530.2L1952.5,528.8L1946.9,526.5L1942.0,525.4L1937.5,523.8L1932.7,521.4L1927.5,520.0L1920.3,521.1L1915.0,522.5L1908.5,525.1L1902.5,527.5L1898.4,530.4L1892.5,532.5L1890.0,536.2L1885.0,532.5L1880.0,526.2L1875.0,524.6L1870.0,522.5L1866.0,523.5L1861.2,526.2L1856.2,532.5L1858.8,540.0L1865.0,545.0L1872.0,545.6L1877.5,545.0L1882.4,548.1L1885.6,549.8L1890.0,552.5L1893.6,555.9L1898.8,558.8L1892.5,562.5L1886.6,561.0L1882.5,561.2L1875.0,562.5L1870.7,564.3L1867.5,567.5L1862.5,573.8L1857.2,574.1L1852.5,576.2L1846.2,577.5L1842.0,571.2L1843.8,562.5L1850.0,557.5L1848.8,552.5L1843.4,548.7L1840.0,546.2L1836.1,542.2L1833.8,538.8L1835.0,530.0L1835.3,525.7L1837.5,520.0L1845.0,516.2L1849.0,513.0L1852.5,511.2L1853.8,515.0L1857.0,512.2L1861.2,510.0L1865.0,502.5L1861.2,496.2L1858.0,490.0L1865.0,485.0L1872.5,488.8L1877.2,489.9L1882.5,492.5L1891.2,491.2L1896.3,494.7L1900.0,496.2L1906.2,490.0L1908.8,482.5L1907.4,478.1L1906.2,473.8L1907.5,467.5L1910.4,463.6L1915.0,461.2L1921.2,457.5L1921.6,450.8L1922.5,445.0L1925.0,439.3L1926.2,435.0L1925.9,429.7L1927.5,422.5L1926.3,416.2L1925.0,411.2L1922.6,404.7L1920.0,400.0L1918.0,392.5L1921.2,387.0L1928.8,387.5ZM1886.2,572.0L1892.5,575.0L1896.9,577.8L1901.2,578.8L1907.5,580.0L1913.0,577.5L1912.2,582.3L1910.0,586.2L1909.3,591.6L1909.5,597.5L1910.3,604.3L1912.5,610.0L1915.1,615.6L1917.5,620.0L1920.9,622.6L1925.0,626.2L1928.7,631.6L1931.2,635.0L1933.2,640.6L1933.8,645.0L1936.3,650.5L1937.5,655.0L1938.2,660.0L1940.0,665.0L1939.7,669.1L1940.0,675.0L1937.8,679.6L1937.5,685.0L1933.3,690.4L1930.0,695.0L1928.4,699.3L1925.0,703.8L1920.0,710.0L1920.2,717.2L1918.8,722.5L1915.9,724.7L1911.2,727.5L1905.0,725.0L1899.4,725.7L1895.0,727.5L1891.3,730.7L1888.8,735.0L1889.4,740.8L1890.3,745.0L1890.0,750.0L1891.1,755.6L1890.8,760.3L1892.5,765.0L1892.9,770.6L1892.2,775.0L1891.2,780.0L1888.7,785.6L1887.5,790.0L1882.8,794.4L1878.8,797.5L1877.2,803.5L1873.8,810.0L1872.3,817.1L1871.2,822.5L1872.9,828.1L1873.8,835.0L1876.1,838.7L1880.0,843.8L1885.6,848.8L1880.0,850.0L1872.5,852.5L1866.2,856.2L1862.5,861.2L1861.9,867.5L1860.0,873.8L1855.0,877.5L1847.5,881.2L1842.5,883.8L1838.8,888.1L1834.4,888.1L1831.2,885.0L1835.5,881.9L1835.0,877.5L1836.5,874.0L1838.1,870.6L1842.5,864.5L1846.6,859.5L1848.5,855.6L1845.6,851.5L1841.4,852.6L1835.6,852.5L1832.5,856.5L1829.0,861.0L1825.6,865.4L1825.6,870.0L1828.5,872.8L1828.1,877.5L1824.4,876.2L1822.5,871.2L1817.5,870.0L1810.0,870.6L1805.0,872.5L1802.5,876.2L1803.8,881.2L1802.5,886.2L1801.2,891.2L1797.5,897.5L1792.5,903.1L1787.5,901.2L1783.1,897.5L1783.1,891.2L1785.0,885.0L1786.2,881.2L1781.2,878.1L1776.2,879.4L1771.2,883.8L1767.5,888.8L1763.8,893.8L1760.0,898.8L1758.8,901.9L1752.5,900.6L1745.0,900.0L1737.5,898.8L1730.0,897.5L1722.5,898.1L1715.0,900.0L1707.5,901.9L1701.2,903.8L1697.5,905.6L1696.9,913.8L1692.5,920.6L1685.6,923.1L1678.8,926.5L1672.5,930.0L1666.2,934.8L1660.0,938.8L1655.0,944.4L1651.2,950.0L1650.0,956.2L1645.0,958.8L1641.2,958.1L1637.5,956.9L1632.5,955.0L1627.5,952.5L1622.5,950.0L1617.5,945.0L1612.5,940.0L1610.0,936.2L1607.5,932.5L1608.1,927.5L1611.2,923.8L1607.5,920.0L1610.0,917.5L1615.0,915.0L1620.0,912.5L1625.0,908.8L1623.8,903.8L1617.5,902.5L1610.0,902.5L1602.5,900.0L1595.0,896.2L1587.5,895.6L1581.2,896.9L1575.0,899.4L1568.8,902.5L1562.5,905.0L1556.2,907.5L1550.0,910.0L1545.0,912.5L1540.0,911.2L1535.0,909.4L1530.0,911.2L1525.0,912.5L1518.8,916.2L1512.5,917.5L1506.2,919.4L1500.0,920.0L1495.0,922.5L1490.0,920.0L1485.0,917.5L1480.0,921.2L1475.0,925.0L1471.2,930.0L1467.5,931.2L1465.0,936.2L1461.2,937.5L1458.8,932.5L1453.8,929.4L1448.8,927.5L1445.0,930.0L1438.8,932.5L1431.2,933.5L1425.0,931.2L1417.5,930.6L1412.5,933.1L1410.6,927.5L1411.9,922.5L1408.8,917.5L1407.5,912.5L1412.5,910.6L1416.2,911.2L1423.8,910.0L1430.0,906.2L1436.2,905.6L1441.2,902.5L1443.8,898.1L1450.0,897.5L1455.0,895.0L1460.0,891.2L1465.0,887.5L1471.2,883.8L1477.5,878.1L1482.5,874.4L1487.5,870.0L1493.1,866.2L1491.9,861.9L1495.0,860.6L1500.0,859.4L1506.2,856.9L1513.1,854.4L1520.0,855.0L1526.2,855.6L1525.6,858.1L1531.2,858.8L1537.5,858.1L1543.0,858.8L1550.0,858.1L1557.2,857.5L1562.5,856.2L1571.2,855.0L1577.5,853.1L1582.2,852.3L1587.5,851.2L1595.0,850.0L1600.5,848.4L1607.5,848.8L1613.4,847.8L1617.5,846.2L1620.0,850.0L1626.2,853.8L1630.7,855.9L1635.0,856.2L1639.9,855.1L1645.0,852.5L1650.0,850.0L1656.2,847.5L1652.5,843.8L1651.2,836.2L1655.0,831.2L1660.0,825.0L1667.5,822.5L1672.5,819.4L1676.2,817.5L1678.9,813.3L1682.5,810.0L1686.2,802.5L1690.0,795.0L1687.5,787.5L1685.0,780.0L1688.8,772.5L1693.8,768.8L1697.6,767.7L1702.5,766.2L1710.0,763.8L1718.0,763.0L1717.5,767.0L1713.0,771.8L1708.8,775.0L1703.5,777.0L1700.5,780.5L1703.5,785.5L1701.5,792.0L1705.3,794.6L1710.0,797.5L1712.5,798.8L1715.5,796.4L1720.0,792.5L1724.7,790.5L1730.0,788.8L1735.2,787.7L1740.0,785.0L1746.1,783.3L1752.5,780.0L1757.5,778.2L1762.5,776.2L1767.5,772.8L1772.5,771.2L1776.1,768.1L1780.0,766.2L1781.5,762.5L1785.0,757.5L1788.1,753.1L1792.5,748.8L1796.7,745.7L1800.0,742.5L1804.7,740.0L1810.0,737.5L1813.2,733.1L1816.2,727.5L1816.7,722.6L1818.8,717.5L1821.4,712.1L1825.0,707.5L1829.9,706.3L1833.8,705.0L1835.7,700.5L1837.5,695.0L1840.8,689.9L1842.5,685.0L1844.0,680.0L1845.0,675.0L1845.6,669.8L1846.2,663.8L1844.9,658.8L1843.8,653.8L1838.8,651.2L1831.2,651.2L1827.5,645.0L1832.5,646.2L1838.8,642.5L1840.0,637.5L1841.2,634.0L1842.5,628.8L1841.2,621.2L1836.2,616.2L1841.2,610.0L1848.8,608.8L1855.5,607.5L1857.5,601.2L1855.5,592.5L1858.8,585.0L1862.5,591.2L1867.5,587.5L1872.0,588.8L1873.8,597.5L1877.5,605.0L1883.8,603.8L1886.2,598.8L1890.0,603.8L1896.2,602.5L1901.2,597.5L1902.0,590.0L1898.8,586.2L1892.5,588.8L1888.5,590.8L1883.8,591.2L1879.5,588.8L1881.9,583.9L1882.5,580.0ZM1461.2,961.6L1465.7,960.9L1470.0,958.5L1475.7,956.3L1480.0,955.6L1482.5,953.8L1487.5,950.0L1492.5,946.2L1496.2,941.2L1498.8,936.2L1500.0,931.2L1502.5,927.5L1506.2,923.8L1511.2,925.0L1513.8,930.0L1518.8,932.5L1525.0,931.2L1532.5,930.0L1538.8,927.5L1541.2,922.5L1543.8,918.8L1542.5,915.0L1547.5,913.8L1552.5,912.5L1560.0,911.2L1566.2,910.6L1572.5,912.5L1577.5,915.0L1582.5,918.1L1587.5,920.0L1590.0,923.8L1590.0,928.8L1592.5,933.8L1597.5,937.5L1594.4,939.4L1588.8,942.5L1583.8,946.2L1578.8,950.0L1573.8,955.0L1570.0,960.0L1566.9,967.5L1562.5,962.5L1558.8,958.8L1553.8,955.0L1547.5,953.8L1541.2,954.4L1535.0,957.5L1530.0,961.2L1525.0,966.2L1520.0,971.2L1516.2,976.2L1512.5,981.2L1510.6,987.5L1511.2,991.9L1505.0,990.0L1498.8,988.8L1492.5,990.0L1487.5,992.5L1485.0,988.8L1486.2,985.0L1482.5,982.5L1481.2,978.8L1477.5,975.0L1475.0,970.0L1477.5,965.0L1480.0,959.0L1475.0,960.2L1467.5,961.9L1461.5,962.8ZM1415.0,931.9L1416.9,937.5L1418.1,943.1L1422.5,946.9L1428.8,950.0L1435.0,948.8L1439.4,945.6L1445.0,945.0L1449.4,948.1L1450.9,952.8L1448.8,957.5L1444.4,960.2L1440.0,961.9L1443.1,964.0L1450.0,964.8L1456.2,963.8L1460.0,965.6L1458.8,970.0L1463.1,973.8L1467.5,980.0L1464.4,985.0L1461.2,990.0L1456.9,993.8L1452.5,998.1L1450.0,1002.5L1448.1,1007.5L1445.0,1012.5L1442.8,1018.8L1440.0,1025.0L1438.8,1032.5L1438.1,1038.8L1436.2,1045.0L1435.0,1050.6L1432.2,1056.0L1427.5,1054.8L1422.5,1052.8L1419.4,1055.6L1421.2,1059.4L1416.9,1063.1L1411.9,1066.2L1406.2,1069.4L1401.7,1071.8L1398.8,1074.4L1400.0,1069.4L1403.1,1063.8L1405.6,1058.1L1404.0,1054.0L1401.9,1050.0L1399.8,1047.5L1401.9,1045.4L1405.6,1045.4L1406.9,1043.1L1405.0,1040.0L1400.0,1038.5L1396.9,1040.6L1397.8,1043.8L1396.2,1046.9L1393.8,1049.4L1393.1,1053.8L1394.4,1060.0L1396.2,1065.6L1392.5,1066.0L1388.8,1062.5L1382.5,1061.9L1377.5,1061.2L1374.4,1055.6L1372.5,1053.1L1377.5,1051.2L1381.9,1050.0L1384.0,1045.0L1381.9,1040.0L1377.5,1037.5L1375.6,1032.5L1377.5,1028.8L1376.2,1023.8L1374.0,1020.0L1370.0,1019.4L1368.1,1016.9L1365.0,1016.9L1364.8,1010.0L1366.5,1003.8L1368.1,1000.0L1371.9,1001.2L1376.2,998.8L1374.0,992.5L1375.0,988.1L1370.0,988.5L1365.0,989.4L1360.0,995.0L1355.0,999.4L1353.8,996.9L1356.9,991.9L1355.0,988.1L1351.2,985.0L1348.1,980.0L1346.2,975.0L1345.6,971.2L1342.5,968.8L1339.4,963.8L1338.8,957.5L1342.5,953.8L1346.2,953.1L1350.0,956.2L1353.8,955.0L1357.5,951.2L1361.2,948.8L1365.0,951.2L1370.0,950.0L1375.0,946.9L1380.0,945.0L1385.0,942.5L1388.8,938.8L1393.8,936.2L1398.8,933.1L1403.8,931.2L1408.8,929.4L1413.1,930.0ZM1605.2,902.0L1607.2,905.0L1605.6,910.0L1602.5,915.0L1598.8,919.0L1595.2,922.2L1591.2,924.0L1587.9,921.0L1590.6,916.9L1593.8,912.5L1597.5,908.1L1601.5,903.8ZM1772.5,723.8L1774.5,728.0L1773.0,733.8L1775.5,737.5L1774.0,743.0L1769.5,747.0L1763.0,750.0L1758.8,750.8L1757.5,747.0L1760.0,742.5L1763.0,740.0L1760.5,737.5L1758.8,735.0L1761.5,730.5L1766.5,726.5ZM2100.0,462.5L2102.9,458.9L2107.5,456.2L2111.6,452.2L2117.5,447.5L2122.4,443.3L2126.2,437.5L2129.9,434.6L2135.0,430.8L2142.5,433.8L2148.4,433.0L2153.8,433.8L2147.5,437.5L2140.0,441.2L2137.0,445.3L2132.5,447.5L2126.9,450.9L2122.5,452.5L2117.9,456.2L2113.8,460.0L2107.5,465.0L2106.2,470.0L2101.2,468.0ZM2169.5,431.2L2173.8,426.2L2180.0,421.2L2185.0,416.2L2191.0,413.8L2195.0,410.0L2201.2,403.8L2204.9,402.4L2210.0,401.2L2215.0,396.2L2216.2,387.5L2221.2,387.5L2223.8,393.8L2232.5,395.0L2240.0,392.5L2243.8,388.4L2247.5,385.0L2251.9,382.5L2257.5,380.8L2265.0,382.0L2266.2,386.2L2262.5,391.2L2257.9,390.9L2252.5,392.5L2245.0,396.2L2237.5,400.0L2230.0,403.8L2225.1,406.1L2220.0,408.8L2212.5,407.5L2205.0,411.2L2200.0,416.2L2194.0,419.0L2190.0,422.5L2186.5,425.0L2182.5,427.5L2177.9,431.0L2175.0,432.5L2171.2,435.0ZM1341.2,895.5L1343.8,898.8L1342.0,906.2L1339.5,913.8L1336.2,917.5L1333.8,923.8L1329.5,926.2L1328.0,922.5L1330.0,916.2L1333.8,913.8L1335.5,906.2L1336.2,900.0ZM1285.0,1269.5L1288.8,1273.8L1287.5,1278.8L1281.2,1283.8L1275.0,1287.5L1271.2,1291.2L1272.5,1297.5L1268.8,1302.5L1262.5,1305.5L1256.2,1307.5L1255.0,1301.2L1258.8,1293.8L1260.0,1288.8L1265.0,1285.0L1261.2,1281.2L1260.0,1276.2L1267.5,1277.5L1275.0,1281.2L1280.0,1276.2L1282.5,1271.2ZM1355.0,1190.0L1352.5,1196.2L1346.2,1201.2L1342.5,1207.5L1339.3,1210.9L1335.0,1212.5L1331.2,1216.2L1326.2,1215.0L1327.5,1207.5L1328.8,1201.2L1335.0,1198.8L1342.5,1195.0L1350.0,1191.2ZM1418.0,1080.5L1419.5,1085.0L1418.0,1092.5L1415.0,1098.8L1412.5,1103.8L1408.0,1104.5L1410.0,1098.8L1412.5,1092.5L1415.0,1085.0ZM1385.8,1104.5L1387.5,1100.0L1392.0,1097.8L1397.0,1099.5L1399.2,1104.0L1397.5,1109.0L1392.5,1111.2L1388.0,1109.5ZM1518.0,823.2L1520.0,819.2L1524.0,817.8L1528.0,820.0L1529.0,824.0L1526.5,828.0L1522.0,828.8L1518.8,826.8ZM1300.6,990.0L1305.0,988.1L1310.0,990.0L1313.1,992.5L1316.2,995.0L1316.9,998.1L1313.8,998.8L1308.8,997.5L1303.8,998.1L1300.6,995.0ZM1568.1,905.0L1572.5,903.8L1575.0,905.6L1574.4,908.8L1570.0,909.8L1567.5,907.8ZM1314.4,988.5L1315.6,983.8L1318.1,980.0L1319.8,975.0L1321.9,971.2L1322.8,966.5L1325.6,963.1L1329.8,963.8L1329.0,969.0L1327.5,973.8L1326.5,978.8L1324.0,983.1L1321.9,987.5L1318.1,990.2ZM1359.4,1030.6L1367.5,1031.2L1362.5,1035.0L1358.1,1038.8L1354.4,1043.1L1351.2,1043.8L1350.6,1041.2L1353.8,1037.5L1356.9,1033.8ZM1460.0,937.5L1465.0,936.2L1470.0,938.1L1472.5,941.2L1468.1,943.8L1462.5,942.5L1459.4,940.0ZM1351.2,936.9L1356.2,936.2L1358.5,940.0L1356.9,943.8L1352.5,944.4L1349.8,942.5L1350.2,938.8Z"/></clipPath></defs>
<g clip-path="url(#cland)"><ellipse cx="1822" cy="847" rx="21" ry="29" fill="url(#gcity)" opacity="0.8"/><ellipse cx="1695.6" cy="874" rx="15" ry="16" fill="url(#gcity)" opacity="0.85"/><ellipse cx="1633" cy="902" rx="18" ry="16" fill="url(#gcity)" opacity="0.86"/><ellipse cx="1399" cy="944" rx="12" ry="12" fill="url(#gcity)" opacity="0.45"/><ellipse cx="1262" cy="1297" rx="8" ry="11" fill="url(#gcity)" opacity="0.6"/><ellipse cx="1641" cy="885" rx="6" ry="6" fill="url(#gcity)" opacity="0.5"/><ellipse cx="1486" cy="915" rx="6" ry="6" fill="url(#gcity)" opacity="0.5"/></g>
<path d="M1377.5,971.9L1381.2,969.4L1386.5,970.2L1389.4,973.8L1388.8,978.8L1391.5,982.5L1394.8,986.9L1395.2,990.6L1393.1,993.8L1390.0,995.6L1387.2,996.5L1386.2,993.8L1386.5,990.0L1385.2,985.6L1382.5,983.1L1379.0,981.2L1376.2,982.5L1375.0,980.0L1377.5,976.9ZM1370.0,1000.2L1377.5,1000.8L1385.0,1000.0L1389.0,996.5L1387.2,994.8L1383.1,997.8L1377.5,998.8L1371.9,998.8ZM1394.4,995.2L1396.2,998.1L1394.0,1003.1L1391.2,1008.1L1388.5,1013.1L1385.2,1017.5L1381.9,1020.0L1377.8,1019.4L1376.5,1016.2L1379.4,1012.8L1381.9,1007.8L1383.8,1002.8L1386.2,999.5L1390.0,996.6ZM1359.4,976.9L1362.5,975.6L1365.0,978.1L1365.0,981.9L1363.1,983.8L1360.6,982.5L1359.4,980.0ZM1689.4,883.1L1686.9,887.5L1681.9,891.2L1678.8,896.2L1680.0,901.2L1685.0,904.4L1691.2,905.0L1697.5,904.4L1701.2,901.9L1698.8,899.4L1695.6,897.5L1693.1,893.8L1691.2,890.0L1690.6,886.2ZM1701.2,897.5L1703.1,895.0L1707.5,896.2L1712.5,893.8L1715.0,893.1L1714.4,896.2L1711.2,898.8L1706.2,900.0L1702.5,900.6Z" fill="#fff" stroke="#232323" stroke-width="1.9" stroke-linejoin="round"/>
<path d="M1629.4,854.3L1630.6,854.0L1632.0,854.9L1631.4,855.7L1629.9,855.5ZM1480.7,927.6L1479.1,927.8L1477.6,925.9L1478.5,924.1L1480.4,925.5ZM1475.8,935.0L1477.6,934.7L1479.2,936.0L1479.9,937.2L1479.9,938.6L1477.8,937.7L1476.3,936.6ZM1478.3,921.7L1479.4,921.7L1480.4,922.3L1480.8,923.3L1480.3,923.9L1479.3,924.0L1478.7,922.9ZM1473.4,927.5L1474.7,928.5L1474.9,930.2L1474.1,931.8L1473.0,930.4L1472.5,928.9ZM1512.2,922.3L1513.0,925.2L1511.1,926.3L1509.2,924.6L1509.8,922.1ZM1517.5,926.0L1516.7,926.7L1515.5,926.4L1515.3,925.2L1515.2,923.8L1516.3,924.0L1517.3,924.7ZM1499.8,922.4L1498.6,922.5L1497.7,921.0L1498.4,919.8L1499.7,920.7ZM1508.6,921.5L1507.1,921.3L1506.8,919.4L1507.4,917.7L1508.6,917.0L1509.9,917.7L1509.7,919.9ZM1511.3,917.3L1512.2,919.5L1510.4,920.4L1508.5,919.7L1509.4,918.0ZM1514.6,919.5L1515.4,921.0L1514.3,922.1L1512.9,923.0L1511.4,921.9L1511.7,920.2L1513.0,919.6ZM1502.6,923.9L1501.0,920.8L1503.6,918.4L1506.1,920.2L1505.7,922.9ZM1496.4,925.2L1495.1,924.7L1494.6,923.3L1495.4,921.8L1497.3,922.0L1498.7,923.3L1498.2,925.2ZM1499.4,925.2L1498.3,926.4L1496.8,926.9L1495.8,925.9L1496.9,924.2L1498.5,924.4ZM1499.8,926.6L1498.7,926.4L1497.5,926.0L1498.3,925.0L1499.7,924.3L1500.7,924.9L1500.9,925.8ZM1524.4,918.8L1523.1,919.7L1520.7,919.3L1521.0,917.6L1523.6,917.3ZM1514.4,920.2L1513.5,920.9L1512.6,920.0L1512.4,918.7L1513.5,918.0L1514.5,918.5L1515.4,919.4ZM1525.7,915.9L1524.5,916.5L1523.6,915.7L1524.6,914.5L1525.7,914.5ZM1470.2,937.2L1470.6,938.0L1469.2,938.4L1468.1,938.0L1468.0,937.2L1469.2,936.8ZM1472.7,943.3L1472.1,944.3L1470.6,944.2L1470.4,943.1L1471.9,942.8ZM1536.6,915.2L1535.4,914.7L1535.4,913.5L1536.6,913.0L1537.5,913.2L1538.2,914.0L1537.9,915.0ZM1563.1,908.3L1563.2,906.6L1565.1,906.0L1565.8,907.8L1564.6,908.8ZM1555.7,909.0L1556.3,909.2L1556.2,910.3L1555.0,911.1L1554.9,910.0ZM1583.4,900.7L1583.6,899.4L1585.0,898.9L1586.2,899.4L1585.7,900.5L1584.5,901.3ZM1472.8,974.5L1472.6,973.2L1473.4,972.2L1474.3,972.1L1474.6,973.3L1474.5,974.5L1473.7,974.8ZM1476.7,963.8L1477.8,964.3L1478.3,965.2L1478.2,966.4L1476.8,966.7L1475.9,965.7L1476.0,964.7ZM1489.1,921.1L1490.2,921.5L1490.3,922.7L1489.8,923.9L1488.5,923.9L1487.6,922.5L1488.0,921.1ZM1486.7,920.8L1488.5,920.7L1489.6,921.6L1489.6,922.7L1488.1,923.0L1486.8,922.0ZM1468.0,974.0L1468.9,974.6L1468.9,975.7L1468.2,976.4L1466.9,976.6L1466.3,975.4L1466.9,974.4ZM1336.2,964.8L1336.6,962.9L1338.2,962.7L1339.1,963.7L1338.6,965.4L1337.0,966.0ZM1339.5,974.3L1337.8,975.3L1336.7,973.5L1337.4,971.6L1340.0,972.3ZM1338.2,971.1L1337.1,969.8L1338.1,968.2L1339.9,968.2L1341.1,969.3L1341.1,971.1L1339.5,971.7ZM1340.2,969.9L1338.7,970.2L1337.5,969.1L1338.2,967.4L1339.7,968.2ZM1344.7,969.3L1346.7,970.1L1347.4,972.4L1345.2,974.2L1342.4,972.9L1342.1,970.0ZM1335.5,963.6L1338.1,963.6L1340.2,965.1L1337.5,966.0L1334.8,965.5ZM1342.5,969.8L1341.2,969.7L1340.3,969.1L1341.1,967.7L1342.2,967.1L1343.0,967.5L1343.0,968.4ZM1336.4,967.1L1335.7,965.6L1336.2,963.8L1337.3,962.2L1338.3,963.3L1338.8,965.2L1337.6,966.9ZM1338.6,975.6L1337.9,974.1L1339.5,972.9L1341.9,973.2L1342.1,974.7L1341.2,976.3ZM1353.3,948.8L1355.2,948.7L1356.0,950.4L1354.5,951.2L1353.1,950.6ZM1354.9,953.3L1353.5,953.2L1353.1,951.9L1353.6,950.9L1354.8,950.9L1355.8,952.0ZM1331.2,965.5L1331.7,966.7L1330.1,967.5L1328.1,967.9L1327.7,966.6L1328.1,965.6L1329.7,964.9ZM1330.5,969.5L1329.7,968.1L1329.7,966.6L1331.3,965.9L1332.4,967.2L1331.9,968.7ZM1327.2,982.1L1325.7,981.6L1325.7,980.4L1327.3,979.4L1328.6,980.3ZM1315.3,992.0L1313.3,991.0L1313.5,988.6L1314.8,986.9L1316.7,987.0L1317.7,988.6L1317.0,990.5ZM1315.5,978.1L1317.0,978.5L1317.4,979.8L1316.2,981.5L1314.2,981.0L1314.1,979.4ZM1385.2,1001.6L1387.1,1001.4L1388.2,1003.4L1387.5,1005.3L1385.8,1004.2ZM1383.0,1004.9L1384.2,1005.6L1384.3,1006.8L1383.3,1007.4L1382.3,1007.0L1382.0,1005.9ZM1379.5,998.7L1380.5,1000.0L1379.4,1001.5L1377.7,1002.3L1376.9,1000.9L1377.7,999.2ZM1331.0,907.1L1330.5,906.0L1331.4,904.9L1332.6,905.3L1333.0,906.1L1332.9,907.2L1331.7,908.0ZM1333.9,903.7L1333.0,904.8L1331.5,903.7L1331.8,902.5L1333.1,902.4ZM1509.0,829.9L1509.3,830.8L1508.5,831.6L1507.5,831.5L1506.7,830.7L1507.0,829.5L1508.1,829.3ZM1513.7,834.9L1513.0,836.9L1511.5,835.8L1511.1,833.9L1512.8,832.7ZM1511.4,828.1L1512.5,829.4L1512.9,831.1L1511.3,832.3L1509.3,831.8L1508.5,830.1L1509.4,828.5ZM1509.6,833.9L1508.0,834.8L1506.2,833.8L1506.6,832.3L1508.3,832.1ZM1243.3,1299.6L1242.9,1300.5L1242.0,1300.8L1240.9,1300.6L1241.0,1299.7L1241.5,1298.8L1242.6,1299.0ZM1238.2,1302.4L1238.6,1301.4L1239.6,1301.6L1240.2,1303.0L1239.4,1303.5ZM1240.8,1302.6L1241.3,1302.1L1242.2,1302.3L1242.9,1303.3L1242.7,1304.4L1241.7,1304.2L1240.8,1303.6Z" fill="#bdcf50" stroke="#232323" stroke-width="1.8" stroke-linejoin="round"/>
<g fill="#232323"><circle cx="1907.5" cy="434.5" r="2.3"/><circle cx="1812.0" cy="573.2" r="1.8"/><circle cx="1833.8" cy="580.5" r="1.6"/><circle cx="2093.8" cy="474.5" r="1.8"/><circle cx="2143.8" cy="472.5" r="1.6"/><circle cx="2148.0" cy="475.0" r="1.6"/><circle cx="2136.0" cy="479.5" r="2.5"/><circle cx="2130.0" cy="483.8" r="2.0"/><circle cx="2123.8" cy="481.8" r="2.0"/><circle cx="2115.0" cy="484.5" r="2.3"/><circle cx="1819.5" cy="620.0" r="1.3"/><circle cx="1821.0" cy="683.5" r="1.6"/><circle cx="1807.0" cy="718.0" r="1.6"/><circle cx="1807.0" cy="718.0" r="2.3"/><circle cx="1696.2" cy="747.0" r="1.6"/><circle cx="1695.0" cy="759.2" r="1.6"/><circle cx="1808.2" cy="907.5" r="2.3"/><circle cx="1807.0" cy="912.0" r="2.0"/><circle cx="1806.2" cy="915.0" r="1.8"/><circle cx="1802.0" cy="920.0" r="2.5"/><circle cx="1820.0" cy="926.2" r="3.0"/><circle cx="1824.2" cy="936.2" r="2.3"/><circle cx="1787.0" cy="932.5" r="1.3"/><circle cx="1813.8" cy="928.0" r="1.3"/><circle cx="1809.5" cy="947.0" r="1.3"/><circle cx="1832.0" cy="1003.8" r="2.3"/><circle cx="1838.8" cy="1030.8" r="1.3"/><circle cx="1845.5" cy="1052.5" r="1.2"/><circle cx="1421.8" cy="893.8" r="2.3"/><circle cx="1291.2" cy="1024.2" r="2.5"/><circle cx="1277.5" cy="1013.8" r="1.2"/><circle cx="1477.5" cy="926.2" r="2.3"/><circle cx="1482.5" cy="930.0" r="2.0"/><circle cx="1487.5" cy="925.0" r="1.8"/><circle cx="1492.5" cy="927.5" r="2.3"/><circle cx="1497.5" cy="923.8" r="2.0"/><circle cx="1502.5" cy="921.2" r="1.8"/><circle cx="1507.5" cy="921.9" r="2.0"/><circle cx="1512.5" cy="920.0" r="1.8"/><circle cx="1470.0" cy="936.2" r="1.8"/><circle cx="1475.0" cy="937.5" r="1.6"/><circle cx="1481.2" cy="936.2" r="1.3"/><circle cx="1486.2" cy="942.5" r="1.2"/><circle cx="1468.1" cy="945.0" r="1.3"/><circle cx="1461.2" cy="941.9" r="1.2"/><circle cx="1531.2" cy="912.5" r="2.0"/><circle cx="1536.2" cy="911.2" r="1.8"/><circle cx="1542.5" cy="910.0" r="1.6"/><circle cx="1547.5" cy="908.8" r="1.6"/><circle cx="1555.0" cy="908.8" r="1.3"/><circle cx="1560.0" cy="906.2" r="1.3"/><circle cx="1422.5" cy="893.8" r="2.2"/><circle cx="1455.0" cy="890.6" r="1.3"/><circle cx="1428.8" cy="906.2" r="1.3"/><circle cx="1580.6" cy="899.8" r="1.8"/><circle cx="1584.4" cy="899.5" r="1.8"/><circle cx="1587.5" cy="899.0" r="1.4"/><circle cx="1537.5" cy="908.8" r="1.3"/><circle cx="1517.5" cy="918.1" r="1.6"/><circle cx="1522.5" cy="915.0" r="1.6"/><circle cx="1527.5" cy="913.1" r="1.4"/><circle cx="1487.5" cy="936.2" r="1.2"/><circle cx="1491.9" cy="936.2" r="1.1"/><circle cx="1473.8" cy="920.0" r="1.3"/><circle cx="1476.2" cy="930.0" r="1.6"/><circle cx="1485.0" cy="932.5" r="1.4"/><circle cx="1495.0" cy="931.2" r="1.6"/><circle cx="1500.0" cy="927.5" r="1.6"/><circle cx="1505.0" cy="926.2" r="1.4"/><circle cx="1465.0" cy="930.0" r="1.3"/><circle cx="1516.2" cy="925.0" r="1.2"/><circle cx="1533.1" cy="923.8" r="1.1"/><circle cx="1536.2" cy="925.0" r="0.9"/><circle cx="1518.8" cy="925.0" r="1.3"/><circle cx="1477.5" cy="966.2" r="1.6"/><circle cx="1475.0" cy="973.8" r="1.4"/><circle cx="1480.0" cy="976.2" r="1.6"/><circle cx="1482.5" cy="985.0" r="1.4"/><circle cx="1487.5" cy="987.5" r="1.3"/><circle cx="1476.2" cy="981.2" r="1.1"/><circle cx="1471.2" cy="976.2" r="1.1"/><circle cx="1596.9" cy="920.0" r="1.1"/><circle cx="1460.0" cy="970.0" r="1.3"/><circle cx="1462.5" cy="975.0" r="1.2"/><circle cx="1291.2" cy="1023.8" r="1.7"/><circle cx="1341.2" cy="1064.4" r="2.2"/><circle cx="1355.0" cy="1051.9" r="1.2"/><circle cx="1355.0" cy="1058.8" r="1.1"/><circle cx="1341.0" cy="1080.2" r="1.8"/><circle cx="1363.8" cy="1080.9" r="2.2"/><circle cx="1381.9" cy="1083.1" r="2.2"/><circle cx="1387.5" cy="1082.2" r="1.6"/><circle cx="1408.1" cy="1085.0" r="2.2"/><circle cx="1372.5" cy="1085.0" r="1.1"/><circle cx="1315.0" cy="968.8" r="1.9"/><circle cx="1310.6" cy="969.4" r="1.3"/><circle cx="1348.8" cy="943.8" r="1.3"/><circle cx="1360.0" cy="941.2" r="1.2"/><circle cx="1368.8" cy="936.9" r="1.2"/><circle cx="1363.8" cy="943.1" r="1.2"/><circle cx="1345.0" cy="949.4" r="1.3"/><circle cx="1360.0" cy="950.0" r="1.6"/><circle cx="1355.0" cy="950.6" r="1.3"/><circle cx="1350.0" cy="951.9" r="1.4"/><circle cx="1343.8" cy="957.5" r="1.6"/><circle cx="1340.0" cy="961.2" r="1.3"/><circle cx="1337.5" cy="967.5" r="1.4"/><circle cx="1342.5" cy="972.5" r="1.3"/><circle cx="1346.2" cy="980.0" r="1.3"/><circle cx="1348.8" cy="986.2" r="1.3"/><circle cx="1352.5" cy="990.0" r="1.4"/><circle cx="1356.2" cy="997.5" r="1.3"/><circle cx="1365.0" cy="1015.0" r="1.4"/><circle cx="1370.0" cy="1007.5" r="1.2"/><circle cx="1377.5" cy="1007.5" r="1.7"/><circle cx="1382.5" cy="1006.2" r="1.6"/><circle cx="1380.0" cy="1002.5" r="1.6"/><circle cx="1385.0" cy="1003.1" r="1.4"/><circle cx="1371.9" cy="1020.0" r="1.7"/><circle cx="1370.0" cy="1022.5" r="1.2"/><circle cx="1402.5" cy="941.2" r="1.4"/><circle cx="1397.5" cy="945.0" r="1.3"/><circle cx="1470.0" cy="978.8" r="1.3"/><circle cx="1465.0" cy="987.5" r="1.2"/><circle cx="1467.5" cy="975.0" r="1.2"/><circle cx="1452.5" cy="998.8" r="1.1"/><circle cx="1449.4" cy="1003.1" r="1.2"/><circle cx="1377.0" cy="1099.5" r="2.3"/><circle cx="1345.0" cy="1125.0" r="1.3"/><circle cx="1349.5" cy="1126.8" r="1.2"/><circle cx="1363.2" cy="1122.0" r="1.8"/><circle cx="1370.0" cy="1118.2" r="1.3"/><circle cx="1361.5" cy="1128.0" r="1.8"/><circle cx="1354.0" cy="1137.5" r="1.7"/><circle cx="1345.0" cy="1135.8" r="1.3"/><circle cx="1348.5" cy="1146.5" r="1.6"/><circle cx="1336.0" cy="1157.5" r="1.3"/><circle cx="1329.5" cy="1161.5" r="1.6"/><circle cx="1319.5" cy="1177.2" r="1.6"/><circle cx="1356.8" cy="1179.5" r="1.2"/><circle cx="1292.8" cy="1261.5" r="1.8"/><circle cx="1235.8" cy="1283.0" r="1.6"/><circle cx="1216.8" cy="1282.5" r="1.2"/><circle cx="1231.0" cy="1293.2" r="1.6"/><circle cx="1251.2" cy="1298.8" r="1.3"/><circle cx="1283.0" cy="1221.8" r="1.6"/><circle cx="1429.5" cy="1313.8" r="1.8"/><circle cx="1426.2" cy="1318.5" r="1.6"/><circle cx="1424.0" cy="1384.0" r="1.3"/><circle cx="1140.5" cy="1355.8" r="1.2"/><circle cx="1147.0" cy="1359.2" r="1.2"/><circle cx="1115.2" cy="1374.5" r="2.0"/><circle cx="1115.0" cy="1370.0" r="1.3"/><circle cx="1081.2" cy="1394.5" r="1.6"/><circle cx="1083.0" cy="1389.0" r="1.6"/><circle cx="1061.2" cy="1396.8" r="1.3"/><circle cx="1071.8" cy="1403.2" r="1.8"/><circle cx="1058.8" cy="1323.0" r="1.8"/><circle cx="1067.0" cy="1314.2" r="1.3"/><circle cx="1108.8" cy="1314.8" r="1.3"/><circle cx="1085.8" cy="1384.5" r="1.6"/><circle cx="1857.5" cy="1098.0" r="1.6"/><circle cx="1859.2" cy="1130.5" r="1.1"/><circle cx="1948.0" cy="1240.0" r="1.3"/><circle cx="1885.0" cy="1251.8" r="1.3"/><circle cx="1903.8" cy="1337.8" r="1.6"/><circle cx="1912.5" cy="1395.0" r="1.6"/><circle cx="2507.0" cy="1392.0" r="1.3"/><circle cx="1939.9" cy="656.1" r="1.1"/><circle cx="1940.0" cy="669.5" r="1.1"/><circle cx="1939.5" cy="652.4" r="1.3"/><circle cx="1939.0" cy="648.9" r="1.3"/><circle cx="1941.0" cy="680.8" r="1.4"/><circle cx="1940.3" cy="687.1" r="1.7"/><circle cx="1941.0" cy="683.7" r="1.4"/><circle cx="1917.8" cy="725.8" r="1.3"/><circle cx="1919.7" cy="721.1" r="1.4"/><circle cx="1912.3" cy="727.5" r="1.4"/><circle cx="1914.5" cy="726.0" r="1.3"/><circle cx="1905.3" cy="728.5" r="1.3"/><circle cx="1905.0" cy="726.0" r="1.1"/><circle cx="1903.6" cy="725.6" r="1.4"/><circle cx="1902.2" cy="726.5" r="1.1"/><circle cx="1633.5" cy="852.3" r="1.2"/><circle cx="1643.6" cy="852.0" r="1.3"/><circle cx="1634.8" cy="852.4" r="1.2"/><circle cx="1640.8" cy="854.5" r="1.2"/><circle cx="1694.6" cy="919.3" r="1.4"/><circle cx="1479.0" cy="926.1" r="1.7"/><circle cx="1483.8" cy="923.4" r="1.7"/><circle cx="1474.0" cy="931.3" r="1.4"/><circle cx="1484.1" cy="919.5" r="1.3"/><circle cx="1484.1" cy="934.3" r="1.4"/><circle cx="1478.9" cy="931.1" r="1.4"/><circle cx="1484.4" cy="920.6" r="1.3"/><circle cx="1479.6" cy="930.8" r="1.7"/><circle cx="1482.6" cy="935.0" r="1.3"/><circle cx="1487.8" cy="928.4" r="1.8"/><circle cx="1479.0" cy="925.3" r="1.5"/><circle cx="1503.7" cy="920.8" r="1.3"/><circle cx="1497.3" cy="927.4" r="1.3"/><circle cx="1513.3" cy="923.4" r="1.7"/><circle cx="1512.0" cy="918.0" r="1.4"/><circle cx="1516.3" cy="920.5" r="1.4"/><circle cx="1517.8" cy="924.5" r="1.4"/><circle cx="1508.6" cy="920.7" r="1.4"/><circle cx="1498.6" cy="927.0" r="1.3"/><circle cx="1503.4" cy="922.3" r="1.6"/><circle cx="1514.9" cy="923.9" r="1.3"/><circle cx="1517.8" cy="920.5" r="1.3"/><circle cx="1515.2" cy="919.5" r="1.4"/><circle cx="1517.8" cy="917.0" r="1.3"/><circle cx="1524.1" cy="915.3" r="1.3"/><circle cx="1524.7" cy="918.5" r="1.5"/><circle cx="1473.5" cy="943.5" r="1.3"/><circle cx="1475.2" cy="944.5" r="1.6"/><circle cx="1477.6" cy="939.4" r="1.3"/><circle cx="1541.1" cy="912.1" r="1.4"/><circle cx="1549.4" cy="910.8" r="1.8"/><circle cx="1533.9" cy="913.5" r="1.5"/><circle cx="1532.7" cy="913.1" r="1.8"/><circle cx="1534.6" cy="910.9" r="1.7"/><circle cx="1536.0" cy="914.3" r="1.3"/><circle cx="1561.1" cy="908.5" r="1.2"/><circle cx="1556.0" cy="908.5" r="1.2"/><circle cx="1555.3" cy="909.4" r="1.2"/><circle cx="1559.2" cy="907.8" r="1.7"/><circle cx="1562.4" cy="905.2" r="1.8"/><circle cx="1586.7" cy="900.6" r="1.6"/><circle cx="1579.7" cy="900.9" r="1.3"/><circle cx="1583.3" cy="898.9" r="1.3"/><circle cx="1584.2" cy="898.4" r="1.2"/><circle cx="1588.8" cy="899.6" r="1.2"/><circle cx="1584.1" cy="898.3" r="1.3"/><circle cx="1472.9" cy="970.3" r="1.3"/><circle cx="1475.3" cy="979.3" r="1.2"/><circle cx="1479.6" cy="982.2" r="1.4"/><circle cx="1478.1" cy="977.1" r="1.1"/><circle cx="1475.5" cy="963.9" r="1.3"/><circle cx="1481.0" cy="982.8" r="1.5"/><circle cx="1480.6" cy="981.9" r="1.6"/><circle cx="1481.6" cy="984.7" r="1.4"/><circle cx="1483.9" cy="920.4" r="1.4"/><circle cx="1488.5" cy="922.3" r="1.5"/><circle cx="1469.8" cy="969.8" r="1.1"/><circle cx="1468.5" cy="975.5" r="1.2"/><circle cx="1465.7" cy="987.0" r="1.3"/><circle cx="1467.1" cy="982.7" r="1.1"/><circle cx="1336.8" cy="965.2" r="1.6"/><circle cx="1349.3" cy="954.7" r="1.3"/><circle cx="1338.7" cy="968.8" r="1.3"/><circle cx="1336.8" cy="969.6" r="1.4"/><circle cx="1339.4" cy="969.7" r="1.5"/><circle cx="1364.0" cy="947.5" r="1.1"/><circle cx="1352.4" cy="948.5" r="1.3"/><circle cx="1362.7" cy="947.6" r="1.5"/><circle cx="1356.5" cy="951.1" r="1.1"/><circle cx="1355.6" cy="950.5" r="1.4"/><circle cx="1345.2" cy="990.2" r="1.1"/><circle cx="1349.1" cy="984.0" r="1.6"/><circle cx="1347.1" cy="978.4" r="1.5"/><circle cx="1345.2" cy="985.4" r="1.7"/><circle cx="1346.1" cy="986.7" r="1.3"/><circle cx="1346.5" cy="989.9" r="1.1"/><circle cx="1327.4" cy="963.4" r="1.4"/><circle cx="1317.8" cy="976.3" r="1.5"/><circle cx="1323.7" cy="963.7" r="1.6"/><circle cx="1317.1" cy="973.8" r="1.5"/><circle cx="1300.2" cy="992.9" r="1.5"/><circle cx="1309.3" cy="988.6" r="1.2"/><circle cx="1307.0" cy="999.5" r="1.7"/><circle cx="1308.4" cy="997.7" r="1.2"/><circle cx="1309.9" cy="989.8" r="1.2"/><circle cx="1300.3" cy="993.0" r="1.2"/><circle cx="1384.9" cy="1006.0" r="1.5"/><circle cx="1383.7" cy="1007.3" r="1.7"/><circle cx="1373.6" cy="1020.0" r="1.4"/><circle cx="1370.5" cy="1022.1" r="1.6"/><circle cx="1372.1" cy="1021.2" r="1.5"/><circle cx="1365.5" cy="1035.2" r="1.7"/><circle cx="1358.8" cy="1039.7" r="1.1"/><circle cx="1332.1" cy="909.7" r="1.1"/><circle cx="1339.0" cy="896.3" r="1.2"/><circle cx="1334.5" cy="922.4" r="1.1"/><circle cx="1335.5" cy="898.4" r="1.2"/><circle cx="1913.5" cy="727.6" r="1.5"/><circle cx="1911.9" cy="727.3" r="1.4"/><circle cx="1507.7" cy="833.0" r="1.7"/><circle cx="1511.1" cy="829.4" r="1.5"/><circle cx="1236.0" cy="1303.4" r="1.2"/><circle cx="1241.3" cy="1303.0" r="1.4"/><circle cx="1244.0" cy="1302.8" r="1.3"/><circle cx="1237.7" cy="1299.6" r="1.2"/><circle cx="1240.2" cy="1304.2" r="1.1"/><circle cx="1333.8" cy="1215.0" r="1.5"/><circle cx="1081.6" cy="1390.1" r="1.1"/><circle cx="1084.4" cy="1388.8" r="1.1"/><circle cx="1080.8" cy="1392.5" r="1.4"/><circle cx="1082.5" cy="1390.8" r="1.7"/><circle cx="1256.5" cy="1298.0" r="1.1"/><circle cx="2133.0" cy="481.0" r="1.2"/><circle cx="2129.6" cy="480.6" r="1.3"/><circle cx="2128.1" cy="478.5" r="1.5"/><circle cx="2132.9" cy="479.3" r="1.6"/><circle cx="2130.9" cy="481.9" r="1.5"/></g>
</svg>
<div class="abs" style="left:0;top:1554px;width:2850px;height:62px;background:linear-gradient(180deg,#ececec,#e2e2e2)"></div>
<div class="sbx" style="left:9px;top:1563px;width:398px;height:46px;border-radius:5px;color:#7e7e7e;font-size:25px;line-height:42px"><svg class="abs" style="left:15px;top:9px;width:28px;height:28px" viewBox="0 0 28 28"><circle cx="11" cy="11" r="8" fill="none" stroke="#8a8a8a" stroke-width="2.4"/><path d="M17,17L25,25" stroke="#8a8a8a" stroke-width="2.8" stroke-linecap="round"/></svg><span class="abs" style="left:56px;top:1px;letter-spacing:0.4px">検索（⌘K）</span></div>
<div class="sl" style="left:1288px">座標</div>
<div class="sbx" style="left:1340px;top:1565px;width:196px;height:43px;text-align:center;letter-spacing:0.35px">21.06°,120.46°</div>
<svg class="abs" style="left:1540px;top:1567px;width:38px;height:38px" viewBox="0 0 38 38"><g transform="rotate(-28 19 19)"><rect x="10" y="5" width="18" height="28" rx="8.5" fill="#fff" stroke="#111" stroke-width="2.6"/><path d="M10,15H28M19,5V15" stroke="#111" stroke-width="2"/><circle cx="19" cy="24" r="3.4" fill="#fff" stroke="#111" stroke-width="2"/><path d="M14.5,8.5V13" stroke="#111" stroke-width="2.6"/></g><path d="M30,6l1.5,-1.5M32,11h2M27,3V1.5M4,24l-2,1M6,29l-1.5,1.5" stroke="#111" stroke-width="1.6"/></svg>
<div class="sl" style="left:1602px">縮尺</div>
<div class="sbx" style="left:1654px;top:1563px;width:185px;height:46px;line-height:43px;padding-left:7px;letter-spacing:0.2px">1:8086650<div class="abs" style="left:142px;top:3px;width:1.5px;height:37px;background:#c4c4c4"></div><div class="dd" style="left:154px;top:18px;border-left-width:9px;border-right-width:9px;border-top-width:9px;border-top-color:#5a5a5a"></div></div>
<svg class="abs" style="left:1862px;top:1569px;width:28px;height:34px" viewBox="0 0 28 34"><path d="M7,15V10C7,2 21,2 21,10V15" fill="none" stroke="#9a9a9a" stroke-width="3.6"/><rect x="2" y="14" width="24" height="18" rx="3" fill="#636363"/></svg>
<div class="sl" style="left:1907px">拡大</div>
<div class="sbx" style="left:1958px;top:1565px;width:185px;height:44px;padding-left:9px">100%<div class="abs" style="left:155px;top:2px;width:1.5px;height:38px;background:#c4c4c4"></div><svg class="abs" style="left:160px;top:6px;width:20px;height:32px" viewBox="0 0 20 32"><path d="M2.5,12L10,3.5L17.5,12ZM2.5,20L10,28.5L17.5,20Z" fill="#5a5a5a"/></svg></div>
<div class="sl" style="left:2163px">回転</div>
<div class="sbx" style="left:2227px;top:1565px;width:184px;height:44px;padding-left:10px">0.0 °<div class="abs" style="left:154px;top:2px;width:1.5px;height:38px;background:#c4c4c4"></div><svg class="abs" style="left:159px;top:6px;width:20px;height:32px" viewBox="0 0 20 32"><path d="M2.5,12L10,3.5L17.5,12ZM2.5,20L10,28.5L17.5,20Z" fill="#5a5a5a"/></svg></div>
<div class="abs" style="left:2424px;top:1572px;width:28px;height:28px;background:#fff;border:1.5px solid #bcbcbc;border-radius:2px"></div>
<svg class="abs" style="left:2424px;top:1572px;width:28px;height:28px" viewBox="0 0 28 28"><path d="M6.5,13L12,22L22,5.5" fill="none" stroke="#1a1a1a" stroke-width="3.2"/></svg>
<div class="sl" style="left:2464px;font-size:20.5px">レンダ</div>
<svg class="abs" style="left:2554px;top:1571px;width:32px;height:30px" viewBox="0 0 32 30"><path d="M1.5,9.5C6,5 26,5 30.5,9.5C30,20 24,28 16,28.5C8,28 2,20 1.5,9.5Z" fill="none" stroke="#7d7d7d" stroke-width="1.8"/><path d="M16,1V28.5M3,16.5H29M7,23H25M16,1C9,4 7,18 12,27.5M16,1C23,4 25,18 20,27.5M16,1L1.5,9.5M16,1L30.5,9.5" fill="none" stroke="#7d7d7d" stroke-width="1.5"/></svg>
<div class="sl" style="left:2590px;font-size:22px;letter-spacing:0.45px">EPSG:4326</div>
<svg class="abs" style="left:2757px;top:1570px;width:36px;height:34px" viewBox="0 0 36 34"><path d="M18,2C27,2 34,7.5 34,15C34,22 28,27 20.5,27.5L27,32.5H20L14,27C6.5,26 2,21 2,15C2,7.5 9,2 18,2Z" fill="#636363"/></svg>
<svg class="abs" style="left:2822px;top:1592px;width:22px;height:22px" viewBox="0 0 22 22"><g fill="#c4c4c4"><circle cx="19" cy="3" r="1"/><circle cx="15" cy="7" r="1"/><circle cx="19" cy="7" r="1"/><circle cx="11" cy="11" r="1"/><circle cx="15" cy="11" r="1"/><circle cx="19" cy="11" r="1"/><circle cx="7" cy="15" r="1"/><circle cx="11" cy="15" r="1"/><circle cx="15" cy="15" r="1"/></g></svg>
</div>

</body></html>
